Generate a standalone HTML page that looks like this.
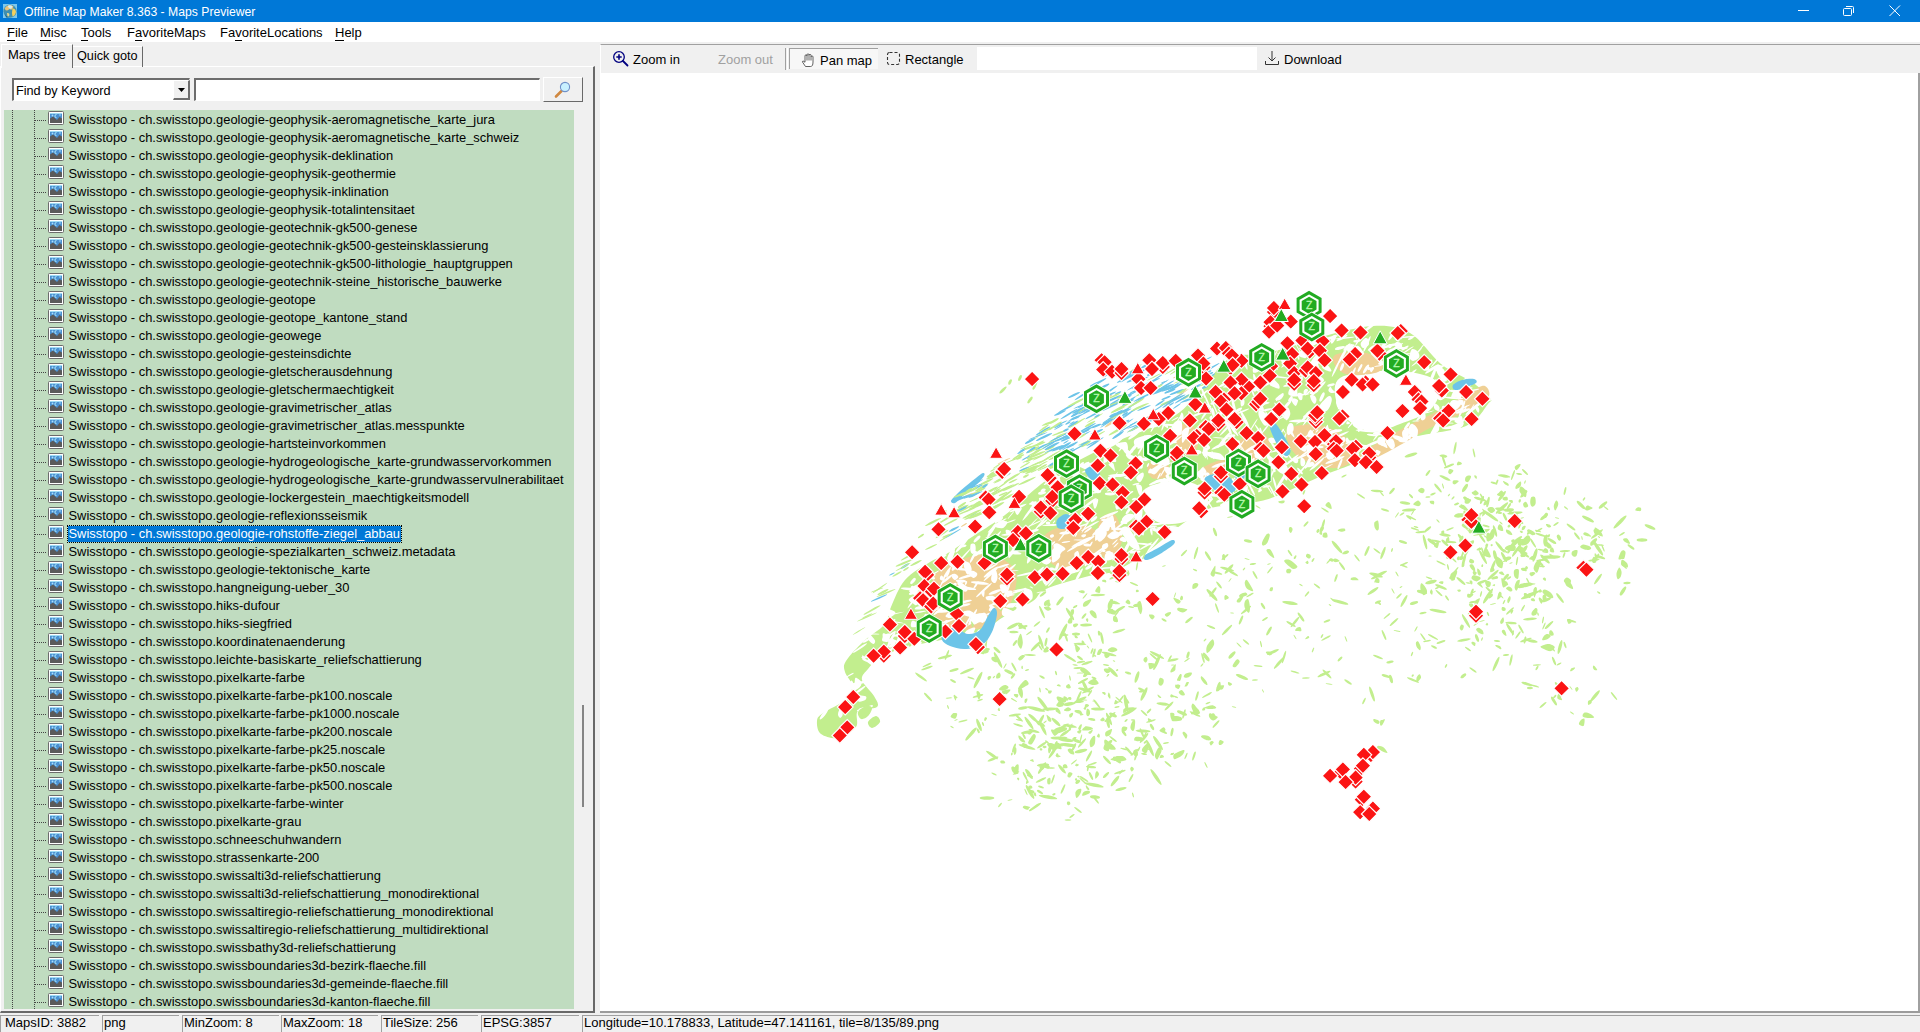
<!DOCTYPE html>
<html><head><meta charset="utf-8">
<style>
*{margin:0;padding:0;box-sizing:border-box}
html,body{width:1920px;height:1032px;overflow:hidden;background:#f0f0f0;font-family:"Liberation Sans",sans-serif;color:#000}
.a{position:absolute}
#title{left:0;top:0;width:1920px;height:22px;background:#0078d7;color:#fff;font-size:12px}
#title .tx{left:24px;top:5px;font-size:12.2px}
#menu{left:0;top:22px;width:1920px;height:20px;background:#fff;font-size:13px}
#menu span{position:absolute;top:3px}
#menu u{text-decoration:none;border-bottom:1px solid #000}
.tab{font-size:13px}
.row{position:absolute;left:0;height:18px;width:570px}
.row .hd{position:absolute;left:35px;top:10px;width:12px;height:1px;background-image:linear-gradient(to right,#444 50%,transparent 50%);background-size:2px 1px}
.row .ic{position:absolute;left:48px;top:1px;width:16px;height:14px}
.row .t{position:absolute;left:67.5px;top:2px;font-size:12.9px;white-space:nowrap;line-height:16px;padding:0 1px}
.row .t.sel{background:#0078d7;color:#fff;outline:1px dotted #000}
#tree{left:4px;top:110px;width:570px;height:899px;background:#c0dcc0;overflow:hidden}
.vd{position:absolute;width:1px;background-image:linear-gradient(to bottom,#444 50%,transparent 50%);background-size:1px 2px}
#status{left:0;top:1013px;width:1920px;height:19px;font-size:13px}
.sb{position:absolute;top:2px;height:17px;border-top:1px solid #a0a0a0;border-left:1px solid #a0a0a0;padding-left:1px;line-height:14px;white-space:nowrap}
.tb{font-size:13px;position:absolute;top:52px;white-space:nowrap}
</style></head><body>
<svg width="0" height="0" style="position:absolute">
<defs>
<symbol id="mi" viewBox="0 0 16 14">
<rect x="0.5" y="0.5" width="15" height="13" rx="1" fill="#fff" stroke="#6b6b6b"/>
<rect x="2" y="2" width="12" height="10" fill="#4a90d0"/>
<rect x="2" y="2" width="12" height="1" fill="#9fdcf5"/>
<path d="M2 7.5 L5 5.5 L9 9 L11.5 6 L14 7.5 L14 12 L2 12Z" fill="#5a5a5a"/>
<circle cx="4.5" cy="4.5" r="0.9" fill="#a8e0ff"/>
<path d="M8.5 3.5 a1.6 1.6 0 1 0 0 3.2" stroke="#b8f0ff" stroke-width="0.9" fill="none"/>
<circle cx="12" cy="4" r="0.8" fill="#a8e0ff"/>
</symbol>
</defs></svg>
<div id="title" class="a">
<svg class="a" style="left:3px;top:4px" width="14" height="14" viewBox="0 0 14 14">
<rect width="14" height="14" fill="#7cc8ee"/>
<circle cx="7" cy="7.2" r="6.6" fill="#3f8fb0"/>
<path d="M1.5 4.5 Q3 1.5 6 1.2 Q9 1 10.5 2.5 L9.5 5 Q8 6 6.5 5 Q5 6.5 3 6.5Z" fill="#e9c27a"/>
<path d="M4.5 1.8 Q7 0.8 9.5 2 L8.5 4.5 Q7 5 6 4Z" fill="#d8eef0"/>
<path d="M9.5 4.5 Q12.5 4 13 8 Q12 12 9.5 12.5 Q8.5 9 9.5 4.5Z" fill="#f2d060"/>
<path d="M4 9 Q6.5 8.5 6.5 11 Q5.5 13 4.5 12.5Z" fill="#e8d890"/>
<path d="M2 10 Q3 13 6 13.5 L3 13.5Z" fill="#1f5a6a"/>
</svg>
<span class="a tx">Offline Map Maker 8.363 - Maps Previewer</span>
<svg class="a" style="left:1798px;top:10px" width="12" height="2"><rect width="11" height="1" fill="#fff"/></svg>
<svg class="a" style="left:1843px;top:5px" width="12" height="12" viewBox="0 0 12 12"><rect x="0.5" y="3.5" width="8" height="7" rx="1" fill="none" stroke="#fff"/><path d="M3 1.5 H9.5 Q10.5 1.5 10.5 2.5 V8" fill="none" stroke="#fff"/></svg>
<svg class="a" style="left:1889px;top:5px" width="12" height="12" viewBox="0 0 12 12"><path d="M0.5 0.5 L11 11 M11 0.5 L0.5 11" stroke="#fff" stroke-width="1"/></svg>
</div>
<div id="menu" class="a">
<span style="left:7px"><u>F</u>ile</span>
<span style="left:40px"><u>M</u>isc</span>
<span style="left:81px"><u>T</u>ools</span>
<span style="left:127px">F<u>a</u>voriteMaps</span>
<span style="left:220px">Fa<u>v</u>oriteLocations</span>
<span style="left:335px"><u>H</u>elp</span>
</div>
<!-- tabs -->
<div class="a" style="left:0;top:66px;width:595px;height:947px;border-left:1px solid #fff;border-top:1px solid #fff;border-right:2px solid #696969;border-bottom:2px solid #696969"></div>
<div class="a" style="left:1px;top:44px;width:72px;height:24px;background:#f0f0f0;border-top:1px solid #fff;border-left:1px solid #fff;border-right:1px solid #696969"></div>
<span class="a tab" style="left:8px;top:47px">Maps tree</span>
<div class="a" style="left:73px;top:46px;width:70px;height:21px;border-top:1px solid #fff;border-right:1px solid #696969"></div>
<span class="a tab" style="left:77px;top:49px;font-size:12.7px">Quick goto</span>
<!-- combo -->
<div class="a" style="left:12px;top:78px;width:178px;height:23px;background:#fff;border-top:2px solid #6d6d6d;border-left:2px solid #6d6d6d;border-right:1px solid #fff;border-bottom:1px solid #fff"></div>
<span class="a" style="left:16px;top:84px;font-size:12.7px">Find by Keyword</span>
<div class="a" style="left:173px;top:80px;width:17px;height:20px;background:#f0f0f0;border-right:2px solid #6d6d6d;border-bottom:2px solid #6d6d6d;border-top:1px solid #fff;border-left:1px solid #fff"></div>
<svg class="a" style="left:178px;top:88px" width="8" height="5"><path d="M0 0 H7 L3.5 4Z" fill="#000"/></svg>
<div class="a" style="left:194px;top:78px;width:346px;height:23px;background:#fff;border-top:2px solid #6d6d6d;border-left:2px solid #6d6d6d;border-right:1px solid #fff;border-bottom:1px solid #fff"></div>
<div class="a" style="left:543px;top:77px;width:40px;height:25px;background:#f0f0f0;border-top:1px solid #fff;border-left:1px solid #fff;border-right:1px solid #696969;border-bottom:1px solid #696969"></div>
<svg class="a" style="left:552px;top:80px" width="22" height="20" viewBox="0 0 22 20">
<path d="M4 16.5 L9.5 11" stroke="#d08840" stroke-width="2.6" stroke-linecap="round"/>
<circle cx="13" cy="7" r="4.6" fill="#c8f0ff" stroke="#7090c8" stroke-width="1.1"/>
</svg>
<!-- tree box -->

<div class="a" id="treeclip" style="left:4px;top:110px;width:570px;height:899px;background:#c0dcc0;overflow:hidden">
<i class="vd" style="left:8px;top:0;height:899px"></i>
<i class="vd" style="left:30px;top:0;height:899px"></i>
<div style="position:absolute;left:-4px;top:0;width:574px;height:899px">
<div class="row" style="top:0px"><i class="hd"></i><svg class="ic" width="16" height="14"><use href="#mi"/></svg><span class="t">Swisstopo - ch.swisstopo.geologie-geophysik-aeromagnetische_karte_jura</span></div>
<div class="row" style="top:18px"><i class="hd"></i><svg class="ic" width="16" height="14"><use href="#mi"/></svg><span class="t">Swisstopo - ch.swisstopo.geologie-geophysik-aeromagnetische_karte_schweiz</span></div>
<div class="row" style="top:36px"><i class="hd"></i><svg class="ic" width="16" height="14"><use href="#mi"/></svg><span class="t">Swisstopo - ch.swisstopo.geologie-geophysik-deklination</span></div>
<div class="row" style="top:54px"><i class="hd"></i><svg class="ic" width="16" height="14"><use href="#mi"/></svg><span class="t">Swisstopo - ch.swisstopo.geologie-geophysik-geothermie</span></div>
<div class="row" style="top:72px"><i class="hd"></i><svg class="ic" width="16" height="14"><use href="#mi"/></svg><span class="t">Swisstopo - ch.swisstopo.geologie-geophysik-inklination</span></div>
<div class="row" style="top:90px"><i class="hd"></i><svg class="ic" width="16" height="14"><use href="#mi"/></svg><span class="t">Swisstopo - ch.swisstopo.geologie-geophysik-totalintensitaet</span></div>
<div class="row" style="top:108px"><i class="hd"></i><svg class="ic" width="16" height="14"><use href="#mi"/></svg><span class="t">Swisstopo - ch.swisstopo.geologie-geotechnik-gk500-genese</span></div>
<div class="row" style="top:126px"><i class="hd"></i><svg class="ic" width="16" height="14"><use href="#mi"/></svg><span class="t">Swisstopo - ch.swisstopo.geologie-geotechnik-gk500-gesteinsklassierung</span></div>
<div class="row" style="top:144px"><i class="hd"></i><svg class="ic" width="16" height="14"><use href="#mi"/></svg><span class="t">Swisstopo - ch.swisstopo.geologie-geotechnik-gk500-lithologie_hauptgruppen</span></div>
<div class="row" style="top:162px"><i class="hd"></i><svg class="ic" width="16" height="14"><use href="#mi"/></svg><span class="t">Swisstopo - ch.swisstopo.geologie-geotechnik-steine_historische_bauwerke</span></div>
<div class="row" style="top:180px"><i class="hd"></i><svg class="ic" width="16" height="14"><use href="#mi"/></svg><span class="t">Swisstopo - ch.swisstopo.geologie-geotope</span></div>
<div class="row" style="top:198px"><i class="hd"></i><svg class="ic" width="16" height="14"><use href="#mi"/></svg><span class="t">Swisstopo - ch.swisstopo.geologie-geotope_kantone_stand</span></div>
<div class="row" style="top:216px"><i class="hd"></i><svg class="ic" width="16" height="14"><use href="#mi"/></svg><span class="t">Swisstopo - ch.swisstopo.geologie-geowege</span></div>
<div class="row" style="top:234px"><i class="hd"></i><svg class="ic" width="16" height="14"><use href="#mi"/></svg><span class="t">Swisstopo - ch.swisstopo.geologie-gesteinsdichte</span></div>
<div class="row" style="top:252px"><i class="hd"></i><svg class="ic" width="16" height="14"><use href="#mi"/></svg><span class="t">Swisstopo - ch.swisstopo.geologie-gletscherausdehnung</span></div>
<div class="row" style="top:270px"><i class="hd"></i><svg class="ic" width="16" height="14"><use href="#mi"/></svg><span class="t">Swisstopo - ch.swisstopo.geologie-gletschermaechtigkeit</span></div>
<div class="row" style="top:288px"><i class="hd"></i><svg class="ic" width="16" height="14"><use href="#mi"/></svg><span class="t">Swisstopo - ch.swisstopo.geologie-gravimetrischer_atlas</span></div>
<div class="row" style="top:306px"><i class="hd"></i><svg class="ic" width="16" height="14"><use href="#mi"/></svg><span class="t">Swisstopo - ch.swisstopo.geologie-gravimetrischer_atlas.messpunkte</span></div>
<div class="row" style="top:324px"><i class="hd"></i><svg class="ic" width="16" height="14"><use href="#mi"/></svg><span class="t">Swisstopo - ch.swisstopo.geologie-hartsteinvorkommen</span></div>
<div class="row" style="top:342px"><i class="hd"></i><svg class="ic" width="16" height="14"><use href="#mi"/></svg><span class="t">Swisstopo - ch.swisstopo.geologie-hydrogeologische_karte-grundwasservorkommen</span></div>
<div class="row" style="top:360px"><i class="hd"></i><svg class="ic" width="16" height="14"><use href="#mi"/></svg><span class="t">Swisstopo - ch.swisstopo.geologie-hydrogeologische_karte-grundwasservulnerabilitaet</span></div>
<div class="row" style="top:378px"><i class="hd"></i><svg class="ic" width="16" height="14"><use href="#mi"/></svg><span class="t">Swisstopo - ch.swisstopo.geologie-lockergestein_maechtigkeitsmodell</span></div>
<div class="row" style="top:396px"><i class="hd"></i><svg class="ic" width="16" height="14"><use href="#mi"/></svg><span class="t">Swisstopo - ch.swisstopo.geologie-reflexionsseismik</span></div>
<div class="row" style="top:414px"><i class="hd"></i><svg class="ic" width="16" height="14"><use href="#mi"/></svg><span class="t sel">Swisstopo - ch.swisstopo.geologie-rohstoffe-ziegel_abbau</span></div>
<div class="row" style="top:432px"><i class="hd"></i><svg class="ic" width="16" height="14"><use href="#mi"/></svg><span class="t">Swisstopo - ch.swisstopo.geologie-spezialkarten_schweiz.metadata</span></div>
<div class="row" style="top:450px"><i class="hd"></i><svg class="ic" width="16" height="14"><use href="#mi"/></svg><span class="t">Swisstopo - ch.swisstopo.geologie-tektonische_karte</span></div>
<div class="row" style="top:468px"><i class="hd"></i><svg class="ic" width="16" height="14"><use href="#mi"/></svg><span class="t">Swisstopo - ch.swisstopo.hangneigung-ueber_30</span></div>
<div class="row" style="top:486px"><i class="hd"></i><svg class="ic" width="16" height="14"><use href="#mi"/></svg><span class="t">Swisstopo - ch.swisstopo.hiks-dufour</span></div>
<div class="row" style="top:504px"><i class="hd"></i><svg class="ic" width="16" height="14"><use href="#mi"/></svg><span class="t">Swisstopo - ch.swisstopo.hiks-siegfried</span></div>
<div class="row" style="top:522px"><i class="hd"></i><svg class="ic" width="16" height="14"><use href="#mi"/></svg><span class="t">Swisstopo - ch.swisstopo.koordinatenaenderung</span></div>
<div class="row" style="top:540px"><i class="hd"></i><svg class="ic" width="16" height="14"><use href="#mi"/></svg><span class="t">Swisstopo - ch.swisstopo.leichte-basiskarte_reliefschattierung</span></div>
<div class="row" style="top:558px"><i class="hd"></i><svg class="ic" width="16" height="14"><use href="#mi"/></svg><span class="t">Swisstopo - ch.swisstopo.pixelkarte-farbe</span></div>
<div class="row" style="top:576px"><i class="hd"></i><svg class="ic" width="16" height="14"><use href="#mi"/></svg><span class="t">Swisstopo - ch.swisstopo.pixelkarte-farbe-pk100.noscale</span></div>
<div class="row" style="top:594px"><i class="hd"></i><svg class="ic" width="16" height="14"><use href="#mi"/></svg><span class="t">Swisstopo - ch.swisstopo.pixelkarte-farbe-pk1000.noscale</span></div>
<div class="row" style="top:612px"><i class="hd"></i><svg class="ic" width="16" height="14"><use href="#mi"/></svg><span class="t">Swisstopo - ch.swisstopo.pixelkarte-farbe-pk200.noscale</span></div>
<div class="row" style="top:630px"><i class="hd"></i><svg class="ic" width="16" height="14"><use href="#mi"/></svg><span class="t">Swisstopo - ch.swisstopo.pixelkarte-farbe-pk25.noscale</span></div>
<div class="row" style="top:648px"><i class="hd"></i><svg class="ic" width="16" height="14"><use href="#mi"/></svg><span class="t">Swisstopo - ch.swisstopo.pixelkarte-farbe-pk50.noscale</span></div>
<div class="row" style="top:666px"><i class="hd"></i><svg class="ic" width="16" height="14"><use href="#mi"/></svg><span class="t">Swisstopo - ch.swisstopo.pixelkarte-farbe-pk500.noscale</span></div>
<div class="row" style="top:684px"><i class="hd"></i><svg class="ic" width="16" height="14"><use href="#mi"/></svg><span class="t">Swisstopo - ch.swisstopo.pixelkarte-farbe-winter</span></div>
<div class="row" style="top:702px"><i class="hd"></i><svg class="ic" width="16" height="14"><use href="#mi"/></svg><span class="t">Swisstopo - ch.swisstopo.pixelkarte-grau</span></div>
<div class="row" style="top:720px"><i class="hd"></i><svg class="ic" width="16" height="14"><use href="#mi"/></svg><span class="t">Swisstopo - ch.swisstopo.schneeschuhwandern</span></div>
<div class="row" style="top:738px"><i class="hd"></i><svg class="ic" width="16" height="14"><use href="#mi"/></svg><span class="t">Swisstopo - ch.swisstopo.strassenkarte-200</span></div>
<div class="row" style="top:756px"><i class="hd"></i><svg class="ic" width="16" height="14"><use href="#mi"/></svg><span class="t">Swisstopo - ch.swisstopo.swissalti3d-reliefschattierung</span></div>
<div class="row" style="top:774px"><i class="hd"></i><svg class="ic" width="16" height="14"><use href="#mi"/></svg><span class="t">Swisstopo - ch.swisstopo.swissalti3d-reliefschattierung_monodirektional</span></div>
<div class="row" style="top:792px"><i class="hd"></i><svg class="ic" width="16" height="14"><use href="#mi"/></svg><span class="t">Swisstopo - ch.swisstopo.swissaltiregio-reliefschattierung_monodirektional</span></div>
<div class="row" style="top:810px"><i class="hd"></i><svg class="ic" width="16" height="14"><use href="#mi"/></svg><span class="t">Swisstopo - ch.swisstopo.swissaltiregio-reliefschattierung_multidirektional</span></div>
<div class="row" style="top:828px"><i class="hd"></i><svg class="ic" width="16" height="14"><use href="#mi"/></svg><span class="t">Swisstopo - ch.swisstopo.swissbathy3d-reliefschattierung</span></div>
<div class="row" style="top:846px"><i class="hd"></i><svg class="ic" width="16" height="14"><use href="#mi"/></svg><span class="t">Swisstopo - ch.swisstopo.swissboundaries3d-bezirk-flaeche.fill</span></div>
<div class="row" style="top:864px"><i class="hd"></i><svg class="ic" width="16" height="14"><use href="#mi"/></svg><span class="t">Swisstopo - ch.swisstopo.swissboundaries3d-gemeinde-flaeche.fill</span></div>
<div class="row" style="top:882px"><i class="hd"></i><svg class="ic" width="16" height="14"><use href="#mi"/></svg><span class="t">Swisstopo - ch.swisstopo.swissboundaries3d-kanton-flaeche.fill</span></div></div></div>
<!-- scrollbar -->
<div class="a" style="left:582px;top:705px;width:2px;height:102px;background:#858585"></div>
<!-- right panel -->
<div class="a" style="left:600px;top:44px;width:1320px;height:969px;border-top:1px solid #a0a0a0;border-left:1px solid #fff;border-right:2px solid #a0a0a0;background:#fff"></div>
<div class="a" style="left:601px;top:45px;width:1319px;height:28px;background:#f0f0f0"></div>
<svg class="a" style="left:612px;top:50px" width="18" height="18" viewBox="0 0 18 18">
<circle cx="7" cy="7" r="5.3" fill="none" stroke="#000080" stroke-width="1.3"/>
<path d="M4.3 7 H9.7 M7 4.3 V9.7" stroke="#000080" stroke-width="1.6"/>
<path d="M11 11 L15.5 15.5" stroke="#000080" stroke-width="1.8" stroke-linecap="round"/>
</svg>
<span class="tb" style="left:633px">Zoom in</span>
<span class="tb" style="left:718px;color:#a0a0a0">Zoom out</span>
<div class="a" style="left:785px;top:48px;width:1px;height:22px;background:#a0a0a0"></div>
<div class="a" style="left:787px;top:48px;width:1px;height:22px;background:#fff"></div>
<div class="a" style="left:789px;top:48px;width:89px;height:21px;background:#f7f7f7;border-top:1px solid #a0a0a0;border-left:1px solid #a0a0a0"></div>
<svg class="a" style="left:801px;top:53px" width="14" height="14" viewBox="0 0 14 14">
<path d="M4.5 13.5 L1.6 9.2 Q1.1 8.2 2.1 8 L4 9.2 V3 Q4 1.8 5 1.8 Q6 1.8 6 3 V1.8 Q6 0.9 7 0.9 Q8 0.9 8 1.8 V2.3 Q8 1.4 9 1.4 Q10 1.4 10 2.3 V3.8 Q10 3 11 3 Q12 3 12 3.8 V9 Q12 13.5 9.5 13.5 Z M6 3 V7.5 M8 2.3 V7.5 M10 3.8 V7.5" fill="#fff" stroke="#3a3a3a" stroke-width="0.8"/>
</svg>
<span class="tb" style="left:820px;top:53px">Pan map</span>
<svg class="a" style="left:886px;top:51px" width="16" height="16" viewBox="0 0 16 16">
<rect x="1.5" y="1.5" width="12" height="12" rx="2" fill="none" stroke="#333" stroke-width="1.1" stroke-dasharray="3 2"/>
</svg>
<span class="tb" style="left:905px">Rectangle</span>
<div class="a" style="left:977px;top:47px;width:280px;height:23px;background:#fff"></div>
<svg class="a" style="left:1264px;top:50px" width="16" height="16" viewBox="0 0 16 16">
<path d="M8 1 V11 M4.5 7.5 L8 11 L11.5 7.5 M1.5 11 V14.5 H14.5 V11" fill="none" stroke="#333" stroke-width="1"/>
</svg>
<span class="tb" style="left:1284px">Download</span>
<!-- map -->
<svg class="a" id="map" style="left:601px;top:73px" width="1318" height="938" viewBox="601 73 1318 938">
<path d="M817 721C817.3 717.5 818.3 716.5 823 713C827.7 709.5 840.2 704.5 845 700C849.8 695.5 852.0 690.7 852 686C852.0 681.3 846.0 676.2 845 672C844.0 667.8 842.8 666.2 846 661C849.2 655.8 857.5 647.2 864 641C870.5 634.8 880.5 629.7 885 624C889.5 618.3 887.7 614.3 891 607C894.3 599.7 898.5 587.5 905 580C911.5 572.5 923.3 566.2 930 562C936.7 557.8 937.5 559.5 945 555C952.5 550.5 965.0 541.7 975 535C985.0 528.3 994.2 523.3 1005 515C1015.8 506.7 1030.0 492.8 1040 485C1050.0 477.2 1055.8 473.5 1065 468C1074.2 462.5 1085.8 456.7 1095 452C1104.2 447.3 1110.8 444.0 1120 440C1129.2 436.0 1140.0 432.7 1150 428C1160.0 423.3 1170.8 419.2 1180 412C1189.2 404.8 1196.7 394.0 1205 385C1213.3 376.0 1220.5 363.2 1230 358C1239.5 352.8 1252.0 355.8 1262 354C1272.0 352.2 1280.8 349.7 1290 347C1299.2 344.3 1303.2 341.5 1317 338C1330.8 334.5 1357.5 326.8 1373 326C1388.5 325.2 1398.7 326.7 1410 333C1421.3 339.3 1430.7 355.8 1441 364C1451.3 372.2 1463.8 376.3 1472 382C1480.2 387.7 1487.3 394.3 1490 398C1492.7 401.7 1492.0 399.3 1488 404C1484.0 408.7 1479.0 420.3 1466 426C1453.0 431.7 1424.5 433.3 1410 438C1395.5 442.7 1389.3 449.3 1379 454C1368.7 458.7 1358.3 462.0 1348 466C1337.7 470.0 1329.3 472.8 1317 478C1304.7 483.2 1285.3 492.8 1274 497C1262.7 501.2 1260.0 501.0 1249 503C1238.0 505.0 1220.0 504.8 1208 509C1196.0 513.2 1187.3 520.7 1177 528C1166.7 535.3 1156.3 545.8 1146 553C1135.7 560.2 1124.5 567.2 1115 571C1105.5 574.8 1100.5 573.0 1089 576C1077.5 579.0 1055.3 584.8 1046 589C1036.7 593.2 1039.3 596.8 1033 601C1026.7 605.2 1015.2 609.3 1008 614C1000.8 618.7 994.0 622.3 990 629C986.0 635.7 988.2 652.0 984 654C979.8 656.0 971.5 643.3 965 641C958.5 638.7 949.8 640.0 945 640C940.2 640.0 942.2 639.8 936 641C929.8 642.2 917.2 644.3 908 647C898.8 649.7 887.7 653.3 881 657C874.3 660.7 871.2 665.2 868 669C864.8 672.8 861.0 675.5 862 680C863.0 684.5 871.5 691.5 874 696C876.5 700.5 879.7 704.5 877 707C874.3 709.5 861.5 707.7 858 711C854.5 714.3 859.2 722.5 856 727C852.8 731.5 844.8 736.8 839 738C833.2 739.2 824.7 736.8 821 734C817.3 731.2 816.7 724.5 817 721Z" fill="#c2ee8e" />
<path d="M1340 378C1347.3 373.2 1366.7 371.7 1380 371C1393.3 370.3 1410.0 371.5 1420 374C1430.0 376.5 1438.3 380.0 1440 386C1441.7 392.0 1436.7 403.7 1430 410C1423.3 416.3 1409.7 420.3 1400 424C1390.3 427.7 1380.7 432.7 1372 432C1363.3 431.3 1354.0 425.3 1348 420C1342.0 414.7 1337.3 407.0 1336 400C1334.7 393.0 1332.7 382.8 1340 378Z" fill="#ffffff" />
<path d="M1142 492C1145.3 487.0 1156.2 483.3 1165 482C1173.8 480.7 1187.8 481.0 1195 484C1202.2 487.0 1208.0 494.3 1208 500C1208.0 505.7 1202.2 514.0 1195 518C1187.8 522.0 1173.3 525.0 1165 524C1156.7 523.0 1148.8 517.3 1145 512C1141.2 506.7 1138.7 497.0 1142 492Z" fill="#ffffff" />
<path d="M1220 505C1220.8 503.0 1235.0 498.3 1240 498C1245.0 497.7 1250.8 501.0 1250 503C1249.2 505.0 1240.0 509.7 1235 510C1230.0 510.3 1219.2 507.0 1220 505Z" fill="#ffffff" />
<path d="M1080 445C1083.3 441.7 1101.7 434.8 1110 432C1118.3 429.2 1129.2 425.8 1130 428C1130.8 430.2 1121.7 441.0 1115 445C1108.3 449.0 1095.8 452.0 1090 452C1084.2 452.0 1076.7 448.3 1080 445Z" fill="#ffffff" />
<path d="M935 575C940.0 567.5 950.8 563.3 960 560C969.2 556.7 980.8 553.3 990 555C999.2 556.7 1011.3 562.5 1015 570C1018.7 577.5 1015.3 591.3 1012 600C1008.7 608.7 1002.0 617.0 995 622C988.0 627.0 978.3 629.5 970 630C961.7 630.5 951.7 629.2 945 625C938.3 620.8 931.7 613.3 930 605C928.3 596.7 930.0 582.5 935 575Z" fill="#efd095" />
<path d="M1045 535C1049.2 530.0 1061.7 525.8 1070 525C1078.3 524.2 1090.0 525.8 1095 530C1100.0 534.2 1101.7 544.2 1100 550C1098.3 555.8 1091.7 562.0 1085 565C1078.3 568.0 1066.7 569.7 1060 568C1053.3 566.3 1047.5 560.5 1045 555C1042.5 549.5 1040.8 540.0 1045 535Z" fill="#efd095" />
<path d="M1100 520C1102.8 514.5 1111.3 511.7 1115 515C1118.7 518.3 1122.8 532.5 1122 540C1121.2 547.5 1114.0 558.7 1110 560C1106.0 561.3 1099.7 554.7 1098 548C1096.3 541.3 1097.2 525.5 1100 520Z" fill="#efd095" />
<path d="M1175 428C1177.7 424.7 1188.2 422.2 1192 425C1195.8 427.8 1198.7 440.0 1198 445C1197.3 450.0 1191.7 455.0 1188 455C1184.3 455.0 1178.2 449.5 1176 445C1173.8 440.5 1172.3 431.3 1175 428Z" fill="#efd095" />
<path d="M1148 465C1150.3 462.3 1162.7 460.2 1166 462C1169.3 463.8 1170.3 473.3 1168 476C1165.7 478.7 1155.3 479.8 1152 478C1148.7 476.2 1145.7 467.7 1148 465Z" fill="#efd095" />
<path d="M1290 428C1295.3 425.2 1310.3 423.0 1320 425C1329.7 427.0 1343.0 433.8 1348 440C1353.0 446.2 1353.0 457.3 1350 462C1347.0 466.7 1338.3 468.7 1330 468C1321.7 467.3 1307.0 462.3 1300 458C1293.0 453.7 1289.7 447.0 1288 442C1286.3 437.0 1284.7 430.8 1290 428Z" fill="#efd095" />
<path d="M1335 355C1339.0 352.5 1352.2 351.2 1360 352C1367.8 352.8 1379.0 356.7 1382 360C1385.0 363.3 1383.3 369.5 1378 372C1372.7 374.5 1357.0 375.8 1350 375C1343.0 374.2 1338.5 370.3 1336 367C1333.5 363.7 1331.0 357.5 1335 355Z" fill="#efd095" />
<path d="M1360 455C1365.0 450.0 1386.7 437.5 1400 430C1413.3 422.5 1428.3 416.3 1440 410C1451.7 403.7 1462.5 396.0 1470 392C1477.5 388.0 1482.0 385.0 1485 386C1488.0 387.0 1491.3 393.7 1488 398C1484.7 402.3 1474.7 407.0 1465 412C1455.3 417.0 1441.7 422.0 1430 428C1418.3 434.0 1405.0 442.7 1395 448C1385.0 453.3 1375.8 458.8 1370 460C1364.2 461.2 1355.0 460.0 1360 455Z" fill="#efd095" />
<path d="M1240 440C1243.7 435.7 1257.0 430.3 1262 432C1267.0 433.7 1271.2 444.5 1270 450C1268.8 455.5 1260.0 463.7 1255 465C1250.0 466.3 1242.5 462.2 1240 458C1237.5 453.8 1236.3 444.3 1240 440Z" fill="#efd095" />
<path d="M1200 470C1202.8 466.7 1216.2 460.3 1222 460C1227.8 459.7 1235.0 464.7 1235 468C1235.0 471.3 1227.0 478.0 1222 480C1217.0 482.0 1208.7 481.7 1205 480C1201.3 478.3 1197.2 473.3 1200 470Z" fill="#efd095" />
<ellipse cx="1177" cy="457" rx="6.6" ry="0.5" transform="rotate(-35 1177 457)" fill="#ffffff"/>
<path d="M1206.4 472.0C1206.2 472.4 1205.2 473.6 1204.5 473.2C1203.8 472.8 1202.4 470.2 1202.4 469.4C1202.4 468.6 1203.8 468.1 1204.4 468.3C1205.0 468.5 1205.7 469.9 1206.0 470.5C1206.3 471.1 1206.7 471.6 1206.4 472.0Z" fill="#ffffff" />
<ellipse cx="1275" cy="484" rx="7.3" ry="1.0" transform="rotate(74 1275 484)" fill="#ffffff"/>
<ellipse cx="1287" cy="405" rx="6.7" ry="1.5" transform="rotate(-47 1287 405)" fill="#ffffff"/>
<path d="M1406.2 442.8C1405.2 442.9 1403.4 439.4 1402.8 437.5C1402.2 435.6 1401.6 432.7 1402.5 431.2C1403.4 429.7 1407.4 427.4 1408.4 428.3C1409.4 429.2 1409.0 434.3 1408.6 436.7C1408.2 439.1 1407.2 442.7 1406.2 442.8Z" fill="#ffffff" />
<ellipse cx="1213" cy="413" rx="5.8" ry="0.9" transform="rotate(79 1213 413)" fill="#ffffff"/>
<path d="M854.1 691.3C853.5 691.7 851.4 689.7 850.6 688.5C849.8 687.3 848.9 685.4 849.1 684.1C849.3 682.8 850.8 680.1 851.7 680.5C852.6 680.9 854.0 684.5 854.4 686.3C854.8 688.1 854.7 690.9 854.1 691.3Z" fill="#ffffff" />
<ellipse cx="1285" cy="412" rx="3.5" ry="1.3" transform="rotate(73 1285 412)" fill="#ffffff"/>
<path d="M985.6 597.3C985.7 596.6 987.3 596.2 988.6 596.0C989.9 595.8 992.2 595.5 993.6 596.2C995.0 596.9 998.2 599.4 997.2 600.1C996.2 600.8 989.7 600.8 987.8 600.3C985.9 599.8 985.5 598.0 985.6 597.3Z" fill="#ffffff" />
<ellipse cx="936" cy="639" rx="9.2" ry="1.6" transform="rotate(-38 936 639)" fill="#ffffff"/>
<ellipse cx="1305" cy="373" rx="3.4" ry="1.5" transform="rotate(-5 1305 373)" fill="#ffffff"/>
<ellipse cx="1052" cy="536" rx="2.1" ry="1.6" transform="rotate(-18 1052 536)" fill="#ffffff"/>
<ellipse cx="1373" cy="391" rx="4.6" ry="0.8" transform="rotate(-23 1373 391)" fill="#ffffff"/>
<ellipse cx="1054" cy="497" rx="10.1" ry="1.0" transform="rotate(3 1054 497)" fill="#ffffff"/>
<ellipse cx="1154" cy="529" rx="2.2" ry="1.0" transform="rotate(-55 1154 529)" fill="#ffffff"/>
<ellipse cx="1036" cy="523" rx="9.1" ry="0.6" transform="rotate(-25 1036 523)" fill="#ffffff"/>
<ellipse cx="1121" cy="529" rx="10.5" ry="1.3" transform="rotate(0 1121 529)" fill="#ffffff"/>
<ellipse cx="1451" cy="412" rx="10.5" ry="1.4" transform="rotate(-59 1451 412)" fill="#ffffff"/>
<path d="M914.5 609.0C914.4 608.5 916.8 606.7 918.5 606.3C920.2 605.9 924.2 606.3 925.0 606.6C925.8 606.9 924.5 607.8 923.5 608.3C922.5 608.8 920.7 609.5 919.2 609.6C917.7 609.7 914.6 609.5 914.5 609.0Z" fill="#ffffff" />
<ellipse cx="1189" cy="489" rx="5.0" ry="1.2" transform="rotate(52 1189 489)" fill="#ffffff"/>
<ellipse cx="1341" cy="416" rx="5.8" ry="1.5" transform="rotate(-4 1341 416)" fill="#ffffff"/>
<path d="M1357.0 339.6C1356.6 339.7 1355.4 337.3 1355.0 336.4C1354.6 335.4 1354.5 334.3 1354.7 333.9C1355.0 333.5 1356.1 333.7 1356.5 334.1C1356.9 334.5 1357.1 335.2 1357.2 336.1C1357.3 337.0 1357.4 339.6 1357.0 339.6Z" fill="#ffffff" />
<ellipse cx="1011" cy="515" rx="5.1" ry="0.5" transform="rotate(-50 1011 515)" fill="#ffffff"/>
<ellipse cx="888" cy="652" rx="6.5" ry="1.4" transform="rotate(-39 888 652)" fill="#ffffff"/>
<ellipse cx="1245" cy="474" rx="2.5" ry="0.6" transform="rotate(72 1245 474)" fill="#ffffff"/>
<path d="M876.5 664.5C875.7 665.6 874.2 666.0 872.6 665.4C871.0 664.8 866.9 662.2 866.9 660.9C866.9 659.6 871.1 658.0 872.8 657.6C874.5 657.2 876.6 657.6 877.2 658.8C877.8 659.9 877.3 663.4 876.5 664.5Z" fill="#ffffff" />
<ellipse cx="1136" cy="516" rx="6.5" ry="0.5" transform="rotate(-49 1136 516)" fill="#ffffff"/>
<path d="M1156.9 531.6C1156.4 531.9 1155.4 531.8 1154.4 531.2C1153.5 530.6 1151.3 528.5 1151.2 528.0C1151.1 527.5 1153.0 527.6 1154.0 527.9C1155.0 528.2 1156.7 529.0 1157.2 529.6C1157.7 530.2 1157.4 531.3 1156.9 531.6Z" fill="#ffffff" />
<ellipse cx="1317" cy="431" rx="2.1" ry="0.6" transform="rotate(-48 1317 431)" fill="#ffffff"/>
<ellipse cx="1271" cy="425" rx="6.2" ry="1.0" transform="rotate(77 1271 425)" fill="#ffffff"/>
<ellipse cx="1453" cy="391" rx="3.3" ry="1.1" transform="rotate(6 1453 391)" fill="#ffffff"/>
<path d="M1292.9 399.5C1292.7 400.4 1291.6 400.9 1290.8 401.2C1290.0 401.5 1288.5 401.6 1288.2 401.1C1287.9 400.6 1288.4 399.2 1289.0 398.4C1289.6 397.5 1291.2 395.8 1291.9 396.0C1292.6 396.2 1293.1 398.6 1292.9 399.5Z" fill="#ffffff" />
<ellipse cx="1213" cy="455" rx="4.5" ry="0.6" transform="rotate(75 1213 455)" fill="#ffffff"/>
<ellipse cx="1134" cy="448" rx="8.7" ry="1.6" transform="rotate(-49 1134 448)" fill="#ffffff"/>
<ellipse cx="1258" cy="429" rx="5.5" ry="0.7" transform="rotate(56 1258 429)" fill="#ffffff"/>
<path d="M991.4 549.7C990.2 549.7 989.7 548.3 988.6 546.7C987.5 545.1 984.6 541.4 984.9 540.2C985.2 539.0 988.4 538.6 990.2 539.6C992.0 540.6 995.3 544.8 995.5 546.5C995.7 548.2 992.5 549.7 991.4 549.7Z" fill="#ffffff" />
<ellipse cx="1135" cy="552" rx="5.5" ry="1.5" transform="rotate(-4 1135 552)" fill="#ffffff"/>
<path d="M1348.3 401.5C1347.9 402.4 1344.5 402.1 1343.0 402.1C1341.5 402.1 1339.7 402.2 1339.4 401.3C1339.1 400.4 1340.0 397.7 1341.0 397.0C1342.0 396.3 1344.2 396.1 1345.4 396.9C1346.6 397.6 1348.7 400.6 1348.3 401.5Z" fill="#ffffff" />
<ellipse cx="1291" cy="432" rx="6.5" ry="1.2" transform="rotate(58 1291 432)" fill="#ffffff"/>
<path d="M1279.3 388.6C1278.7 389.2 1276.5 388.2 1274.9 387.6C1273.3 387.0 1270.3 386.2 1269.8 384.7C1269.2 383.2 1270.1 378.6 1271.6 378.5C1273.0 378.4 1277.2 382.3 1278.5 384.0C1279.8 385.7 1279.9 388.0 1279.3 388.6Z" fill="#ffffff" />
<ellipse cx="1264" cy="463" rx="5.0" ry="0.7" transform="rotate(58 1264 463)" fill="#ffffff"/>
<path d="M1132.8 461.6C1132.5 460.8 1133.3 458.3 1133.8 457.9C1134.3 457.5 1134.9 458.8 1135.8 459.1C1136.7 459.5 1139.3 459.4 1139.2 460.0C1139.1 460.6 1136.4 462.6 1135.3 462.9C1134.2 463.2 1133.0 462.4 1132.8 461.6Z" fill="#ffffff" />
<path d="M1236.4 413.3C1236.3 414.2 1233.9 416.1 1232.9 416.2C1231.9 416.3 1231.2 415.0 1230.4 414.1C1229.6 413.2 1227.5 411.1 1228.0 410.6C1228.5 410.1 1232.1 410.4 1233.5 410.9C1234.9 411.3 1236.5 412.4 1236.4 413.3Z" fill="#ffffff" />
<ellipse cx="1323" cy="406" rx="2.3" ry="1.1" transform="rotate(-44 1323 406)" fill="#ffffff"/>
<path d="M1093.1 575.9C1092.0 575.8 1091.3 570.7 1092.1 567.9C1092.9 565.1 1096.5 559.9 1097.9 559.1C1099.3 558.3 1100.4 561.3 1100.5 562.9C1100.6 564.5 1099.9 566.4 1098.7 568.6C1097.5 570.8 1094.2 576.0 1093.1 575.9Z" fill="#ffffff" />
<ellipse cx="1234" cy="394" rx="3.3" ry="0.7" transform="rotate(68 1234 394)" fill="#ffffff"/>
<ellipse cx="1255" cy="387" rx="4.9" ry="1.2" transform="rotate(59 1255 387)" fill="#ffffff"/>
<ellipse cx="1285" cy="476" rx="4.8" ry="1.5" transform="rotate(67 1285 476)" fill="#ffffff"/>
<path d="M1060.2 482.0C1060.0 483.5 1059.8 486.9 1058.0 486.3C1056.2 485.7 1050.1 480.6 1049.2 478.2C1048.3 475.8 1050.9 472.1 1052.6 472.0C1054.3 471.9 1058.1 475.8 1059.4 477.5C1060.7 479.2 1060.4 480.5 1060.2 482.0Z" fill="#ffffff" />
<ellipse cx="1066" cy="517" rx="4.5" ry="1.1" transform="rotate(4 1066 517)" fill="#ffffff"/>
<path d="M1369.7 369.7C1369.5 369.0 1369.2 368.5 1369.8 368.0C1370.4 367.5 1372.6 366.8 1373.3 366.9C1374.0 367.0 1374.3 367.6 1374.0 368.5C1373.7 369.4 1372.0 372.0 1371.3 372.2C1370.6 372.4 1370.0 370.4 1369.7 369.7Z" fill="#ffffff" />
<ellipse cx="1381" cy="351" rx="7.0" ry="1.2" transform="rotate(-46 1381 351)" fill="#ffffff"/>
<ellipse cx="1099" cy="551" rx="7.9" ry="1.0" transform="rotate(-35 1099 551)" fill="#ffffff"/>
<path d="M1150.6 462.2C1150.6 461.4 1151.3 460.2 1152.9 460.0C1154.5 459.8 1159.5 460.2 1160.2 460.8C1160.9 461.4 1158.5 462.7 1157.3 463.4C1156.1 464.1 1154.2 465.1 1153.1 464.9C1152.0 464.7 1150.6 463.0 1150.6 462.2Z" fill="#ffffff" />
<path d="M1331.5 371.1C1331.3 371.9 1328.0 370.9 1326.5 370.4C1325.0 369.9 1323.0 368.5 1322.4 367.9C1321.9 367.2 1322.3 366.9 1323.2 366.5C1324.1 366.1 1326.4 364.8 1327.8 365.6C1329.2 366.4 1331.7 370.3 1331.5 371.1Z" fill="#ffffff" />
<ellipse cx="930" cy="637" rx="6.8" ry="1.2" transform="rotate(-41 930 637)" fill="#ffffff"/>
<path d="M1239.2 475.7C1238.5 475.2 1238.6 471.8 1238.8 470.3C1239.0 468.9 1239.9 467.5 1240.5 467.0C1241.1 466.5 1241.9 466.3 1242.3 467.3C1242.7 468.3 1243.3 471.7 1242.8 473.1C1242.3 474.5 1239.9 476.2 1239.2 475.7Z" fill="#ffffff" />
<ellipse cx="1231" cy="486" rx="10.1" ry="0.6" transform="rotate(70 1231 486)" fill="#ffffff"/>
<ellipse cx="954" cy="568" rx="3.2" ry="1.5" transform="rotate(-51 954 568)" fill="#ffffff"/>
<ellipse cx="1052" cy="578" rx="10.4" ry="1.3" transform="rotate(-50 1052 578)" fill="#ffffff"/>
<ellipse cx="1174" cy="475" rx="2.5" ry="1.4" transform="rotate(-69 1174 475)" fill="#ffffff"/>
<ellipse cx="995" cy="538" rx="9.1" ry="1.1" transform="rotate(-49 995 538)" fill="#ffffff"/>
<path d="M971.7 621.5C971.6 620.1 971.9 617.0 973.2 616.1C974.5 615.2 978.3 615.0 979.3 615.9C980.3 616.8 980.0 619.9 979.1 621.4C978.2 622.9 974.9 624.6 973.7 624.6C972.5 624.6 971.8 622.9 971.7 621.5Z" fill="#ffffff" />
<ellipse cx="1430" cy="362" rx="3.0" ry="1.5" transform="rotate(-42 1430 362)" fill="#ffffff"/>
<path d="M1224.8 459.8C1223.9 460.7 1216.1 459.1 1213.7 458.7C1211.3 458.3 1211.8 458.4 1210.2 457.3C1208.6 456.2 1202.7 453.0 1204.2 452.3C1205.7 451.6 1215.8 452.1 1219.2 453.3C1222.6 454.6 1225.7 458.9 1224.8 459.8Z" fill="#ffffff" />
<ellipse cx="1298" cy="458" rx="10.7" ry="1.1" transform="rotate(-21 1298 458)" fill="#ffffff"/>
<path d="M1399.2 341.2C1398.8 341.8 1397.9 341.5 1397.1 341.1C1396.3 340.8 1394.7 339.7 1394.5 339.1C1394.3 338.5 1395.4 337.6 1396.2 337.3C1397.0 337.0 1398.7 336.7 1399.2 337.3C1399.7 337.9 1399.6 340.6 1399.2 341.2Z" fill="#ffffff" />
<path d="M873.3 644.1C872.2 644.0 869.4 641.4 868.6 640.1C867.8 638.8 868.2 637.2 868.4 636.2C868.6 635.2 868.5 633.4 869.6 634.1C870.7 634.8 874.4 638.9 875.0 640.6C875.6 642.3 874.4 644.2 873.3 644.1Z" fill="#ffffff" />
<ellipse cx="1413" cy="402" rx="4.7" ry="1.3" transform="rotate(-3 1413 402)" fill="#ffffff"/>
<ellipse cx="948" cy="574" rx="3.9" ry="0.9" transform="rotate(-67 948 574)" fill="#ffffff"/>
<ellipse cx="1242" cy="499" rx="7.4" ry="0.9" transform="rotate(3 1242 499)" fill="#ffffff"/>
<path d="M1102.4 549.6C1101.7 549.1 1101.7 546.3 1102.4 545.2C1103.2 544.1 1105.9 543.0 1106.9 543.1C1107.9 543.2 1108.4 544.9 1108.3 545.8C1108.2 546.7 1107.5 547.8 1106.5 548.4C1105.5 549.0 1103.1 550.1 1102.4 549.6Z" fill="#ffffff" />
<path d="M1442.5 381.6C1441.5 381.5 1441.0 381.5 1440.6 379.8C1440.2 378.1 1439.7 372.1 1440.3 371.5C1440.9 370.9 1443.1 374.5 1444.2 376.0C1445.3 377.5 1447.1 379.8 1446.8 380.7C1446.5 381.6 1443.5 381.8 1442.5 381.6Z" fill="#ffffff" />
<path d="M1168.2 478.8C1167.6 478.9 1166.3 477.7 1165.9 477.1C1165.5 476.5 1165.5 475.5 1165.8 475.1C1166.1 474.7 1166.9 474.4 1167.6 474.7C1168.2 475.0 1169.6 476.0 1169.7 476.7C1169.8 477.4 1168.8 478.7 1168.2 478.8Z" fill="#ffffff" />
<ellipse cx="1287" cy="451" rx="4.0" ry="1.3" transform="rotate(-28 1287 451)" fill="#ffffff"/>
<path d="M902.5 641.6C901.5 641.6 899.2 638.0 899.2 635.6C899.2 633.2 901.5 628.2 902.5 627.4C903.5 626.6 904.9 629.5 905.3 630.8C905.7 632.1 905.4 633.6 904.9 635.4C904.4 637.2 903.5 641.6 902.5 641.6Z" fill="#ffffff" />
<path d="M1379.6 454.1C1379.2 454.8 1378.5 456.1 1377.9 455.8C1377.3 455.5 1376.0 453.1 1375.8 452.1C1375.6 451.1 1375.9 449.8 1376.7 449.7C1377.5 449.6 1380.0 450.8 1380.5 451.5C1381.0 452.2 1380.0 453.4 1379.6 454.1Z" fill="#ffffff" />
<path d="M1255.1 457.6C1254.2 456.7 1254.4 453.9 1255.4 453.3C1256.5 452.7 1259.6 453.7 1261.4 453.9C1263.2 454.1 1266.5 453.6 1266.4 454.4C1266.3 455.2 1262.6 458.4 1260.7 458.9C1258.8 459.4 1256.0 458.5 1255.1 457.6Z" fill="#ffffff" />
<ellipse cx="973" cy="634" rx="3.4" ry="1.5" transform="rotate(-7 973 634)" fill="#ffffff"/>
<ellipse cx="949" cy="598" rx="8.7" ry="1.0" transform="rotate(1 949 598)" fill="#ffffff"/>
<ellipse cx="1190" cy="414" rx="3.3" ry="1.0" transform="rotate(64 1190 414)" fill="#ffffff"/>
<path d="M1152.1 535.5C1151.8 535.5 1150.8 533.5 1150.5 532.4C1150.2 531.3 1149.7 529.3 1150.0 528.7C1150.3 528.1 1151.7 528.1 1152.1 528.7C1152.5 529.3 1152.6 531.4 1152.6 532.5C1152.6 533.6 1152.4 535.5 1152.1 535.5Z" fill="#ffffff" />
<path d="M1236.9 448.4C1236.1 448.4 1235.3 447.9 1235.1 446.7C1234.9 445.5 1235.2 441.9 1235.9 441.0C1236.6 440.1 1238.8 440.0 1239.5 441.0C1240.2 442.0 1240.3 445.6 1239.9 446.8C1239.5 448.0 1237.7 448.4 1236.9 448.4Z" fill="#ffffff" />
<ellipse cx="1350" cy="442" rx="4.7" ry="1.1" transform="rotate(-19 1350 442)" fill="#ffffff"/>
<ellipse cx="959" cy="587" rx="8.9" ry="0.6" transform="rotate(-55 959 587)" fill="#ffffff"/>
<ellipse cx="896" cy="648" rx="10.3" ry="1.0" transform="rotate(-69 896 648)" fill="#ffffff"/>
<path d="M1080.2 561.7C1079.4 561.9 1075.9 558.8 1075.0 557.3C1074.1 555.8 1074.1 554.0 1074.6 553.0C1075.1 552.0 1077.1 550.5 1077.9 551.0C1078.7 551.5 1079.2 554.4 1079.6 556.2C1080.0 558.0 1081.0 561.5 1080.2 561.7Z" fill="#ffffff" />
<ellipse cx="1402" cy="355" rx="8.5" ry="0.8" transform="rotate(-11 1402 355)" fill="#ffffff"/>
<path d="M1449.2 409.9C1449.4 410.8 1447.1 411.7 1445.9 411.8C1444.7 411.9 1442.8 411.2 1442.2 410.3C1441.6 409.4 1441.7 407.1 1442.1 406.4C1442.5 405.7 1443.5 405.5 1444.7 406.1C1445.9 406.7 1449.0 408.9 1449.2 409.9Z" fill="#ffffff" />
<path d="M1205.1 492.6C1204.8 492.9 1203.4 491.7 1202.6 490.4C1201.8 489.1 1200.2 485.5 1200.4 484.7C1200.6 483.9 1203.0 484.9 1203.7 485.5C1204.4 486.1 1204.5 487.4 1204.7 488.6C1204.9 489.8 1205.4 492.3 1205.1 492.6Z" fill="#ffffff" />
<ellipse cx="1374" cy="443" rx="10.8" ry="1.4" transform="rotate(-22 1374 443)" fill="#ffffff"/>
<path d="M1351.3 391.0C1350.2 390.4 1349.8 389.0 1350.1 387.1C1350.4 385.2 1352.2 379.9 1353.1 379.4C1354.0 378.9 1355.1 382.2 1355.7 384.1C1356.3 386.0 1357.6 389.8 1356.9 390.9C1356.2 392.0 1352.4 391.6 1351.3 391.0Z" fill="#ffffff" />
<path d="M973.1 553.9C972.3 554.1 971.0 553.2 970.6 551.6C970.2 550.0 970.1 545.5 970.8 544.3C971.5 543.1 974.1 543.3 974.9 544.3C975.7 545.3 975.9 548.8 975.6 550.4C975.3 552.0 973.9 553.7 973.1 553.9Z" fill="#ffffff" />
<ellipse cx="846" cy="729" rx="3.0" ry="1.2" transform="rotate(-7 846 729)" fill="#ffffff"/>
<ellipse cx="1048" cy="523" rx="2.3" ry="1.6" transform="rotate(-1 1048 523)" fill="#ffffff"/>
<ellipse cx="1144" cy="544" rx="9.0" ry="1.0" transform="rotate(6 1144 544)" fill="#ffffff"/>
<ellipse cx="1465" cy="409" rx="3.8" ry="0.7" transform="rotate(-63 1465 409)" fill="#ffffff"/>
<ellipse cx="1463" cy="411" rx="7.8" ry="1.6" transform="rotate(-16 1463 411)" fill="#ffffff"/>
<ellipse cx="1081" cy="493" rx="10.7" ry="1.6" transform="rotate(-52 1081 493)" fill="#ffffff"/>
<path d="M912.5 627.3C911.4 627.1 910.9 626.5 910.8 625.4C910.7 624.3 911.2 621.5 912.0 620.9C912.8 620.3 914.6 620.9 915.5 621.8C916.4 622.7 917.9 625.4 917.4 626.3C916.9 627.2 913.6 627.4 912.5 627.3Z" fill="#ffffff" />
<path d="M1445.9 396.9C1444.9 398.2 1441.5 400.6 1439.5 400.1C1437.5 399.6 1435.2 395.8 1434.2 393.8C1433.2 391.8 1431.8 388.5 1433.7 388.2C1435.6 387.9 1443.7 390.6 1445.7 392.0C1447.7 393.4 1446.9 395.5 1445.9 396.9Z" fill="#ffffff" />
<ellipse cx="1403" cy="415" rx="3.4" ry="0.8" transform="rotate(-3 1403 415)" fill="#ffffff"/>
<path d="M1151.3 438.1C1150.9 438.7 1149.6 438.8 1148.5 438.7C1147.4 438.6 1145.3 437.8 1144.6 437.3C1143.8 436.8 1143.0 435.9 1144.0 435.5C1145.0 435.1 1149.5 434.8 1150.7 435.2C1151.9 435.6 1151.7 437.5 1151.3 438.1Z" fill="#ffffff" />
<ellipse cx="963" cy="546" rx="3.6" ry="1.3" transform="rotate(-13 963 546)" fill="#ffffff"/>
<path d="M962.0 567.1C961.2 568.1 956.9 569.3 954.6 568.7C952.3 568.1 948.8 565.3 948.1 563.3C947.4 561.3 948.3 556.7 950.2 556.6C952.1 556.5 957.6 560.9 959.6 562.6C961.6 564.4 962.8 566.1 962.0 567.1Z" fill="#ffffff" />
<ellipse cx="1166" cy="492" rx="3.1" ry="1.3" transform="rotate(-5 1166 492)" fill="#ffffff"/>
<path d="M1406.2 440.2C1406.2 440.9 1402.3 441.1 1400.4 440.8C1398.5 440.6 1396.1 439.6 1394.8 438.7C1393.5 437.8 1391.8 435.8 1392.7 435.4C1393.6 435.0 1398.0 435.6 1400.2 436.4C1402.5 437.2 1406.2 439.5 1406.2 440.2Z" fill="#ffffff" />
<ellipse cx="1396" cy="363" rx="8.7" ry="0.7" transform="rotate(-4 1396 363)" fill="#ffffff"/>
<path d="M1174.2 473.3C1172.8 474.3 1168.7 474.9 1167.0 473.9C1165.3 472.8 1163.7 468.1 1164.2 467.0C1164.7 465.9 1168.0 467.4 1169.9 467.6C1171.8 467.8 1175.0 467.1 1175.7 468.0C1176.4 468.9 1175.7 472.3 1174.2 473.3Z" fill="#ffffff" />
<ellipse cx="1446" cy="407" rx="7.7" ry="0.9" transform="rotate(-28 1446 407)" fill="#ffffff"/>
<ellipse cx="995" cy="592" rx="6.9" ry="1.5" transform="rotate(-20 995 592)" fill="#ffffff"/>
<ellipse cx="1130" cy="530" rx="3.1" ry="0.6" transform="rotate(-47 1130 530)" fill="#ffffff"/>
<path d="M1253.0 390.2C1252.1 389.9 1251.9 388.5 1252.1 387.3C1252.3 386.1 1253.5 383.2 1254.1 382.8C1254.7 382.4 1255.4 384.0 1255.9 385.1C1256.5 386.2 1257.9 388.4 1257.4 389.2C1256.9 390.0 1253.9 390.5 1253.0 390.2Z" fill="#ffffff" />
<ellipse cx="977" cy="539" rx="4.6" ry="1.6" transform="rotate(-46 977 539)" fill="#ffffff"/>
<ellipse cx="1336" cy="368" rx="9.8" ry="1.0" transform="rotate(-65 1336 368)" fill="#ffffff"/>
<path d="M1075.9 489.2C1075.9 488.6 1075.9 488.0 1076.5 487.8C1077.1 487.6 1079.0 487.4 1079.5 487.9C1080.0 488.4 1080.2 490.1 1079.7 490.7C1079.2 491.3 1077.4 491.6 1076.8 491.4C1076.2 491.1 1076.0 489.8 1075.9 489.2Z" fill="#ffffff" />
<ellipse cx="1072" cy="494" rx="8.5" ry="0.8" transform="rotate(-39 1072 494)" fill="#ffffff"/>
<ellipse cx="1190" cy="465" rx="9.1" ry="1.4" transform="rotate(63 1190 465)" fill="#ffffff"/>
<ellipse cx="1462" cy="388" rx="10.2" ry="0.5" transform="rotate(-66 1462 388)" fill="#ffffff"/>
<path d="M1190.4 513.8C1190.6 512.6 1193.7 510.9 1195.6 510.5C1197.5 510.1 1200.5 510.1 1202.0 511.1C1203.5 512.1 1205.9 515.7 1204.6 516.7C1203.3 517.8 1196.6 517.9 1194.2 517.4C1191.8 516.9 1190.2 514.9 1190.4 513.8Z" fill="#ffffff" />
<ellipse cx="1086" cy="541" rx="9.9" ry="1.6" transform="rotate(-31 1086 541)" fill="#ffffff"/>
<path d="M1110.1 570.7C1109.9 569.5 1110.1 566.6 1110.7 565.9C1111.3 565.2 1112.9 566.2 1113.9 566.7C1114.9 567.2 1116.9 567.8 1116.6 568.8C1116.3 569.8 1113.1 572.7 1112.0 573.0C1110.9 573.3 1110.3 571.9 1110.1 570.7Z" fill="#ffffff" />
<ellipse cx="1161" cy="517" rx="3.6" ry="1.2" transform="rotate(-22 1161 517)" fill="#ffffff"/>
<ellipse cx="1023" cy="597" rx="4.7" ry="1.4" transform="rotate(-23 1023 597)" fill="#ffffff"/>
<ellipse cx="1266" cy="385" rx="7.0" ry="0.8" transform="rotate(-27 1266 385)" fill="#ffffff"/>
<ellipse cx="922" cy="627" rx="2.9" ry="0.7" transform="rotate(-28 922 627)" fill="#ffffff"/>
<ellipse cx="1051" cy="493" rx="2.5" ry="1.5" transform="rotate(-23 1051 493)" fill="#ffffff"/>
<ellipse cx="1234" cy="407" rx="10.4" ry="1.4" transform="rotate(77 1234 407)" fill="#ffffff"/>
<ellipse cx="1366" cy="431" rx="10.6" ry="1.0" transform="rotate(6 1366 431)" fill="#ffffff"/>
<ellipse cx="1300" cy="395" rx="9.9" ry="1.0" transform="rotate(-7 1300 395)" fill="#ffffff"/>
<ellipse cx="1176" cy="466" rx="2.6" ry="0.6" transform="rotate(-4 1176 466)" fill="#ffffff"/>
<ellipse cx="1264" cy="447" rx="8.4" ry="0.6" transform="rotate(75 1264 447)" fill="#ffffff"/>
<path d="M1303.2 466.3C1302.4 466.6 1301.1 466.3 1300.7 464.8C1300.3 463.3 1300.3 458.5 1300.9 457.5C1301.5 456.5 1303.4 458.1 1304.1 459.0C1304.8 459.9 1305.4 461.7 1305.3 462.9C1305.2 464.1 1304.0 466.0 1303.2 466.3Z" fill="#ffffff" />
<path d="M1181.1 420.4C1180.5 420.3 1179.8 418.9 1179.9 417.6C1180.0 416.3 1181.0 413.1 1181.6 412.6C1182.1 412.1 1182.9 413.5 1183.2 414.4C1183.5 415.3 1183.8 417.1 1183.5 418.1C1183.2 419.1 1181.7 420.5 1181.1 420.4Z" fill="#ffffff" />
<ellipse cx="1153" cy="428" rx="4.8" ry="0.7" transform="rotate(-60 1153 428)" fill="#ffffff"/>
<ellipse cx="1299" cy="421" rx="10.2" ry="1.4" transform="rotate(-1 1299 421)" fill="#ffffff"/>
<ellipse cx="1263" cy="451" rx="7.9" ry="1.3" transform="rotate(75 1263 451)" fill="#ffffff"/>
<ellipse cx="1053" cy="570" rx="3.0" ry="1.5" transform="rotate(-11 1053 570)" fill="#ffffff"/>
<ellipse cx="1026" cy="574" rx="9.6" ry="1.1" transform="rotate(-13 1026 574)" fill="#ffffff"/>
<ellipse cx="1277" cy="450" rx="9.5" ry="1.4" transform="rotate(51 1277 450)" fill="#ffffff"/>
<ellipse cx="891" cy="640" rx="10.2" ry="1.3" transform="rotate(-63 891 640)" fill="#ffffff"/>
<path d="M1288.5 471.5C1288.1 473.0 1285.0 474.2 1283.2 473.9C1281.4 473.6 1277.8 471.2 1277.5 469.9C1277.2 468.5 1279.8 466.6 1281.2 465.8C1282.6 465.0 1284.6 463.9 1285.8 464.8C1287.0 465.8 1288.9 470.0 1288.5 471.5Z" fill="#ffffff" />
<path d="M1109.3 521.0C1109.5 521.6 1107.5 522.2 1106.1 522.1C1104.7 522.0 1101.4 520.8 1100.8 520.3C1100.2 519.8 1102.0 519.3 1102.7 519.0C1103.4 518.7 1104.0 518.2 1105.1 518.5C1106.2 518.8 1109.1 520.4 1109.3 521.0Z" fill="#ffffff" />
<path d="M1160.2 493.2C1159.8 492.4 1159.6 489.9 1160.6 489.1C1161.6 488.3 1165.0 488.0 1166.1 488.4C1167.2 488.8 1167.8 490.3 1167.3 491.2C1166.8 492.1 1164.2 493.6 1163.0 493.9C1161.8 494.2 1160.6 494.0 1160.2 493.2Z" fill="#ffffff" />
<ellipse cx="949" cy="602" rx="3.0" ry="0.9" transform="rotate(-33 949 602)" fill="#ffffff"/>
<ellipse cx="1256" cy="408" rx="3.2" ry="0.5" transform="rotate(-3 1256 408)" fill="#ffffff"/>
<path d="M1446.5 380.3C1445.7 381.3 1441.0 378.3 1439.3 376.4C1437.6 374.5 1435.9 370.2 1436.1 368.8C1436.3 367.4 1439.1 367.8 1440.5 368.1C1441.9 368.4 1443.4 368.5 1444.4 370.5C1445.4 372.5 1447.3 379.3 1446.5 380.3Z" fill="#ffffff" />
<ellipse cx="1018" cy="550" rx="8.2" ry="0.7" transform="rotate(-35 1018 550)" fill="#ffffff"/>
<ellipse cx="945" cy="611" rx="9.6" ry="1.4" transform="rotate(-7 945 611)" fill="#ffffff"/>
<ellipse cx="1115" cy="542" rx="3.8" ry="0.6" transform="rotate(-44 1115 542)" fill="#ffffff"/>
<ellipse cx="1227" cy="428" rx="10.6" ry="1.0" transform="rotate(-46 1227 428)" fill="#ffffff"/>
<ellipse cx="1273" cy="492" rx="7.9" ry="0.9" transform="rotate(62 1273 492)" fill="#ffffff"/>
<ellipse cx="1397" cy="409" rx="6.8" ry="0.8" transform="rotate(-31 1397 409)" fill="#ffffff"/>
<path d="M1298.3 344.3C1298.0 343.5 1299.0 341.6 1299.9 341.2C1300.8 340.8 1302.9 341.7 1303.6 342.2C1304.3 342.7 1304.2 343.8 1303.9 344.4C1303.6 345.0 1302.7 345.8 1301.8 345.8C1300.9 345.8 1298.6 345.1 1298.3 344.3Z" fill="#ffffff" />
<ellipse cx="1018" cy="604" rx="10.0" ry="1.2" transform="rotate(-0 1018 604)" fill="#ffffff"/>
<path d="M1401.1 374.6C1400.1 374.4 1398.5 373.9 1399.2 372.6C1399.9 371.3 1403.8 367.7 1405.0 367.0C1406.2 366.3 1406.4 367.3 1406.4 368.5C1406.4 369.7 1405.8 373.0 1404.9 374.0C1404.0 375.0 1402.0 374.8 1401.1 374.6Z" fill="#ffffff" />
<path d="M1362.4 352.0C1361.9 352.6 1358.0 351.2 1356.7 350.7C1355.5 350.2 1355.0 349.8 1354.9 349.0C1354.9 348.2 1355.6 346.2 1356.4 345.9C1357.2 345.6 1358.7 346.1 1359.7 347.1C1360.7 348.1 1362.9 351.4 1362.4 352.0Z" fill="#ffffff" />
<ellipse cx="1279" cy="464" rx="9.9" ry="1.1" transform="rotate(-5 1279 464)" fill="#ffffff"/>
<ellipse cx="1274" cy="469" rx="3.4" ry="1.4" transform="rotate(76 1274 469)" fill="#ffffff"/>
<ellipse cx="1059" cy="501" rx="5.5" ry="0.9" transform="rotate(-70 1059 501)" fill="#ffffff"/>
<ellipse cx="1206" cy="444" rx="6.1" ry="1.6" transform="rotate(54 1206 444)" fill="#ffffff"/>
<ellipse cx="1268" cy="417" rx="6.5" ry="0.8" transform="rotate(66 1268 417)" fill="#ffffff"/>
<ellipse cx="1244" cy="456" rx="9.2" ry="1.5" transform="rotate(-15 1244 456)" fill="#ffffff"/>
<ellipse cx="1244" cy="451" rx="5.7" ry="0.6" transform="rotate(60 1244 451)" fill="#ffffff"/>
<ellipse cx="1116" cy="545" rx="3.5" ry="0.6" transform="rotate(-46 1116 545)" fill="#ffffff"/>
<ellipse cx="997" cy="603" rx="5.6" ry="0.7" transform="rotate(-22 997 603)" fill="#ffffff"/>
<path d="M945.8 616.7C945.2 616.2 945.6 615.6 946.4 614.7C947.2 613.8 949.3 610.9 950.5 611.1C951.7 611.3 953.6 614.8 953.5 615.9C953.4 617.0 951.1 617.9 949.8 618.0C948.5 618.1 946.4 617.2 945.8 616.7Z" fill="#ffffff" />
<ellipse cx="1238" cy="444" rx="7.4" ry="0.8" transform="rotate(50 1238 444)" fill="#ffffff"/>
<path d="M1331.5 343.7C1330.9 343.4 1330.5 340.3 1330.7 338.9C1331.0 337.5 1332.0 336.0 1333.0 335.4C1334.0 334.8 1336.2 334.4 1336.5 335.3C1336.8 336.2 1335.3 339.4 1334.5 340.8C1333.7 342.2 1332.1 344.0 1331.5 343.7Z" fill="#ffffff" />
<path d="M1340.3 456.2C1340.5 456.8 1340.3 458.3 1339.5 458.3C1338.7 458.3 1335.9 456.8 1335.3 456.0C1334.7 455.2 1335.5 454.1 1336.0 453.8C1336.5 453.6 1337.8 454.1 1338.5 454.5C1339.2 454.9 1340.1 455.6 1340.3 456.2Z" fill="#ffffff" />
<path d="M1342.3 409.0C1341.2 409.8 1339.5 410.0 1338.5 408.8C1337.5 407.6 1335.9 403.6 1336.0 401.9C1336.1 400.2 1337.4 398.3 1338.9 398.7C1340.4 399.1 1344.2 402.4 1344.8 404.1C1345.4 405.8 1343.3 408.2 1342.3 409.0Z" fill="#ffffff" />
<ellipse cx="962" cy="545" rx="9.8" ry="1.5" transform="rotate(-49 962 545)" fill="#ffffff"/>
<ellipse cx="925" cy="594" rx="6.1" ry="1.1" transform="rotate(1 925 594)" fill="#ffffff"/>
<path d="M1406.7 377.5C1407.2 378.8 1404.8 383.1 1402.4 383.9C1400.1 384.7 1394.0 383.2 1392.6 382.1C1391.2 381.0 1393.0 378.0 1394.2 377.0C1395.4 376.0 1397.5 376.0 1399.6 376.1C1401.7 376.2 1406.2 376.2 1406.7 377.5Z" fill="#ffffff" />
<path d="M975.3 641.6C975.1 642.2 975.1 643.8 974.4 643.5C973.7 643.2 971.5 640.8 971.2 640.0C970.9 639.2 972.1 638.7 972.8 638.6C973.5 638.5 974.9 639.1 975.3 639.6C975.7 640.1 975.4 641.0 975.3 641.6Z" fill="#ffffff" />
<ellipse cx="937" cy="595" rx="8.6" ry="1.1" transform="rotate(-61 937 595)" fill="#ffffff"/>
<path d="M1050.4 513.1C1050.3 512.4 1052.4 512.0 1053.2 511.9C1054.0 511.8 1054.8 511.9 1055.5 512.3C1056.2 512.6 1057.7 513.4 1057.4 514.0C1057.1 514.6 1054.9 516.2 1053.7 516.1C1052.5 516.0 1050.5 513.8 1050.4 513.1Z" fill="#ffffff" />
<ellipse cx="1077" cy="466" rx="3.3" ry="1.6" transform="rotate(-70 1077 466)" fill="#ffffff"/>
<ellipse cx="988" cy="563" rx="4.2" ry="0.7" transform="rotate(-61 988 563)" fill="#ffffff"/>
<ellipse cx="1284" cy="439" rx="6.9" ry="0.8" transform="rotate(-70 1284 439)" fill="#ffffff"/>
<ellipse cx="1486" cy="401" rx="8.7" ry="0.9" transform="rotate(-13 1486 401)" fill="#ffffff"/>
<ellipse cx="1081" cy="526" rx="8.1" ry="0.9" transform="rotate(-20 1081 526)" fill="#ffffff"/>
<path d="M1228.6 417.8C1227.6 418.3 1225.2 419.0 1225.0 417.6C1224.8 416.2 1226.3 410.7 1227.4 409.2C1228.5 407.7 1231.0 407.5 1231.5 408.4C1232.0 409.3 1231.2 413.0 1230.7 414.6C1230.2 416.2 1229.5 417.3 1228.6 417.8Z" fill="#ffffff" />
<ellipse cx="1167" cy="495" rx="5.6" ry="1.6" transform="rotate(-14 1167 495)" fill="#ffffff"/>
<path d="M1116.7 509.7C1115.9 509.4 1115.1 506.9 1115.4 505.6C1115.7 504.3 1117.6 502.3 1118.6 502.0C1119.6 501.7 1121.0 502.8 1121.2 503.7C1121.4 504.6 1120.8 506.5 1120.0 507.5C1119.2 508.5 1117.5 510.0 1116.7 509.7Z" fill="#ffffff" />
<ellipse cx="936" cy="609" rx="4.9" ry="0.8" transform="rotate(-3 936 609)" fill="#ffffff"/>
<ellipse cx="1395" cy="387" rx="9.1" ry="1.2" transform="rotate(-40 1395 387)" fill="#ffffff"/>
<path d="M1294.0 462.2C1293.2 461.4 1292.3 459.1 1292.7 458.5C1293.1 457.9 1295.4 458.6 1296.3 458.8C1297.2 459.0 1298.1 459.1 1298.3 459.8C1298.5 460.5 1298.0 462.7 1297.3 463.1C1296.6 463.5 1294.8 463.0 1294.0 462.2Z" fill="#ffffff" />
<path d="M1094.8 508.8C1094.1 508.7 1093.4 505.6 1093.1 504.2C1092.8 502.8 1092.3 501.1 1093.1 500.3C1093.9 499.5 1097.3 498.4 1098.0 499.2C1098.7 500.0 1097.6 503.4 1097.1 505.0C1096.6 506.6 1095.5 508.9 1094.8 508.8Z" fill="#ffffff" />
<ellipse cx="1367" cy="344" rx="8.8" ry="1.1" transform="rotate(-66 1367 344)" fill="#ffffff"/>
<ellipse cx="1282" cy="480" rx="11.0" ry="1.4" transform="rotate(-58 1282 480)" fill="#ffffff"/>
<ellipse cx="1041" cy="523" rx="10.9" ry="0.8" transform="rotate(-49 1041 523)" fill="#ffffff"/>
<ellipse cx="1160" cy="481" rx="4.7" ry="1.5" transform="rotate(-6 1160 481)" fill="#ffffff"/>
<ellipse cx="1393" cy="411" rx="2.5" ry="1.1" transform="rotate(-40 1393 411)" fill="#ffffff"/>
<ellipse cx="1129" cy="510" rx="5.3" ry="1.4" transform="rotate(-54 1129 510)" fill="#ffffff"/>
<ellipse cx="1175" cy="476" rx="4.9" ry="0.8" transform="rotate(-6 1175 476)" fill="#ffffff"/>
<path d="M1005.7 607.1C1005.3 606.4 1007.9 604.1 1009.4 603.6C1010.9 603.1 1013.7 603.6 1014.6 604.1C1015.5 604.6 1015.2 605.9 1014.7 606.5C1014.2 607.1 1013.2 607.7 1011.7 607.8C1010.2 607.9 1006.1 607.8 1005.7 607.1Z" fill="#ffffff" />
<path d="M1384.1 364.2C1384.0 365.0 1382.3 365.2 1381.3 365.2C1380.3 365.2 1378.3 364.6 1378.1 364.0C1377.9 363.4 1379.6 362.0 1380.2 361.4C1380.8 360.8 1381.2 359.8 1381.9 360.3C1382.6 360.8 1384.2 363.4 1384.1 364.2Z" fill="#ffffff" />
<ellipse cx="1208" cy="437" rx="3.4" ry="1.5" transform="rotate(75 1208 437)" fill="#ffffff"/>
<path d="M919.0 645.7C918.2 646.0 917.7 645.3 917.1 644.7C916.5 644.1 915.2 642.6 915.5 641.9C915.8 641.2 918.0 640.4 919.0 640.5C920.0 640.6 921.8 641.8 921.8 642.7C921.8 643.6 919.8 645.4 919.0 645.7Z" fill="#ffffff" />
<ellipse cx="1171" cy="425" rx="8.8" ry="1.0" transform="rotate(4 1171 425)" fill="#ffffff"/>
<path d="M1316.5 379.6C1315.8 379.4 1313.8 377.5 1313.7 376.8C1313.6 376.1 1315.2 375.9 1315.8 375.7C1316.4 375.5 1317.1 375.4 1317.4 375.8C1317.7 376.2 1317.8 377.2 1317.6 377.8C1317.4 378.4 1317.2 379.8 1316.5 379.6Z" fill="#ffffff" />
<ellipse cx="1206" cy="452" rx="8.0" ry="0.7" transform="rotate(78 1206 452)" fill="#ffffff"/>
<ellipse cx="1408" cy="350" rx="6.8" ry="0.6" transform="rotate(-33 1408 350)" fill="#ffffff"/>
<ellipse cx="1158" cy="458" rx="5.6" ry="0.7" transform="rotate(-60 1158 458)" fill="#ffffff"/>
<ellipse cx="971" cy="623" rx="4.4" ry="0.5" transform="rotate(-39 971 623)" fill="#ffffff"/>
<path d="M1167.9 428.2C1167.5 428.4 1165.7 427.0 1164.8 426.5C1163.9 426.0 1162.6 425.4 1162.6 425.0C1162.6 424.6 1164.2 424.3 1165.0 424.3C1165.8 424.3 1167.0 424.4 1167.5 425.0C1168.0 425.6 1168.4 427.9 1167.9 428.2Z" fill="#ffffff" />
<path d="M1370.4 448.0C1370.5 448.6 1368.1 448.5 1366.3 448.7C1364.5 448.9 1360.4 449.9 1359.7 449.4C1359.0 448.9 1361.2 446.4 1362.2 445.7C1363.2 445.0 1364.6 444.9 1366.0 445.3C1367.4 445.7 1370.4 447.4 1370.4 448.0Z" fill="#ffffff" />
<path d="M1136.4 522.3C1135.2 521.0 1133.7 515.2 1134.0 512.6C1134.3 510.0 1137.0 506.9 1138.4 506.5C1139.8 506.1 1142.1 508.0 1142.5 510.3C1142.9 512.6 1141.9 518.4 1140.9 520.4C1139.9 522.4 1137.6 523.6 1136.4 522.3Z" fill="#ffffff" />
<path d="M1309.7 365.5C1309.1 364.3 1311.8 359.7 1314.2 356.9C1316.6 354.1 1322.5 349.0 1324.1 348.9C1325.7 348.8 1324.8 353.8 1323.7 356.4C1322.6 359.0 1319.9 362.8 1317.6 364.3C1315.3 365.8 1310.3 366.7 1309.7 365.5Z" fill="#ffffff" />
<path d="M1045.6 558.0C1044.2 557.9 1041.9 557.3 1041.4 556.4C1040.9 555.5 1042.0 553.2 1042.8 552.7C1043.6 552.2 1045.0 552.6 1046.2 553.3C1047.4 554.0 1050.1 556.0 1050.0 556.8C1049.9 557.6 1047.0 558.1 1045.6 558.0Z" fill="#ffffff" />
<ellipse cx="1233" cy="426" rx="4.4" ry="1.3" transform="rotate(70 1233 426)" fill="#ffffff"/>
<path d="M1364.1 354.2C1363.7 354.6 1361.4 353.9 1360.2 353.3C1359.0 352.7 1357.1 351.2 1356.9 350.7C1356.7 350.1 1358.1 350.0 1359.0 350.0C1359.9 350.0 1361.7 350.1 1362.5 350.8C1363.3 351.5 1364.5 353.8 1364.1 354.2Z" fill="#ffffff" />
<ellipse cx="1362" cy="408" rx="2.9" ry="1.1" transform="rotate(-1 1362 408)" fill="#ffffff"/>
<path d="M1169.2 463.9C1168.2 465.2 1164.1 465.7 1161.7 465.5C1159.3 465.3 1155.5 463.8 1154.6 462.6C1153.7 461.4 1154.3 459.0 1156.5 458.2C1158.7 457.4 1165.7 456.9 1167.8 457.8C1169.9 458.8 1170.2 462.6 1169.2 463.9Z" fill="#ffffff" />
<path d="M1150.0 459.0C1149.3 458.6 1148.9 456.8 1149.4 455.8C1149.9 454.8 1152.2 453.0 1152.9 452.8C1153.6 452.6 1153.4 453.6 1153.5 454.5C1153.6 455.4 1154.1 457.4 1153.5 458.1C1152.9 458.9 1150.7 459.4 1150.0 459.0Z" fill="#ffffff" />
<ellipse cx="1417" cy="362" rx="7.2" ry="0.6" transform="rotate(-39 1417 362)" fill="#ffffff"/>
<ellipse cx="1012" cy="534" rx="10.8" ry="1.2" transform="rotate(-6 1012 534)" fill="#ffffff"/>
<path d="M1277.1 468.5C1275.9 469.5 1270.4 468.4 1269.0 467.4C1267.6 466.3 1268.6 464.1 1268.7 462.2C1268.8 460.3 1268.3 456.2 1269.5 456.1C1270.7 456.0 1274.7 459.3 1276.0 461.4C1277.3 463.5 1278.3 467.5 1277.1 468.5Z" fill="#ffffff" />
<ellipse cx="1464" cy="380" rx="10.5" ry="0.7" transform="rotate(-44 1464 380)" fill="#ffffff"/>
<ellipse cx="1341" cy="435" rx="8.8" ry="1.0" transform="rotate(-25 1341 435)" fill="#ffffff"/>
<ellipse cx="1010" cy="571" rx="8.9" ry="0.5" transform="rotate(-4 1010 571)" fill="#ffffff"/>
<path d="M1201.4 453.0C1201.0 453.6 1198.8 454.3 1197.9 454.2C1197.0 454.1 1196.5 453.0 1196.1 452.3C1195.6 451.6 1194.5 450.5 1195.2 450.2C1195.9 449.9 1199.1 449.9 1200.1 450.4C1201.1 450.9 1201.8 452.4 1201.4 453.0Z" fill="#ffffff" />
<ellipse cx="1316" cy="447" rx="9.3" ry="0.9" transform="rotate(-55 1316 447)" fill="#ffffff"/>
<ellipse cx="1424" cy="357" rx="2.6" ry="1.0" transform="rotate(-30 1424 357)" fill="#ffffff"/>
<ellipse cx="1205" cy="474" rx="4.5" ry="1.4" transform="rotate(-3 1205 474)" fill="#ffffff"/>
<path d="M910.0 590.8C909.5 589.9 912.8 586.5 914.8 585.5C916.8 584.5 920.3 584.0 921.7 584.6C923.1 585.2 924.0 588.3 923.4 589.3C922.8 590.3 920.0 590.4 917.8 590.6C915.6 590.9 910.5 591.6 910.0 590.8Z" fill="#ffffff" />
<path d="M1359.0 457.6C1358.6 458.1 1357.2 457.1 1356.4 456.4C1355.7 455.7 1354.6 454.5 1354.5 453.6C1354.4 452.7 1355.2 450.9 1355.9 450.9C1356.6 450.9 1358.2 452.5 1358.7 453.6C1359.2 454.7 1359.4 457.1 1359.0 457.6Z" fill="#ffffff" />
<ellipse cx="1240" cy="446" rx="7.1" ry="0.7" transform="rotate(-53 1240 446)" fill="#ffffff"/>
<ellipse cx="1156" cy="482" rx="7.7" ry="1.3" transform="rotate(-23 1156 482)" fill="#ffffff"/>
<ellipse cx="1086" cy="520" rx="4.0" ry="1.5" transform="rotate(10 1086 520)" fill="#ffffff"/>
<ellipse cx="1122" cy="447" rx="5.6" ry="0.8" transform="rotate(-54 1122 447)" fill="#ffffff"/>
<ellipse cx="1290" cy="385" rx="7.0" ry="1.3" transform="rotate(-10 1290 385)" fill="#ffffff"/>
<path d="M929.5 573.5C928.9 574.2 926.2 574.2 925.4 574.0C924.6 573.8 925.1 573.1 924.9 572.3C924.7 571.5 923.7 569.7 924.4 569.2C925.1 568.7 928.1 568.8 929.0 569.5C929.9 570.2 930.1 572.8 929.5 573.5Z" fill="#ffffff" />
<path d="M1314.7 464.6C1314.4 465.5 1312.3 466.7 1310.5 467.1C1308.7 467.5 1304.6 467.6 1304.1 467.1C1303.6 466.6 1306.2 464.8 1307.6 463.9C1309.0 463.0 1311.1 461.6 1312.3 461.7C1313.5 461.8 1315.0 463.7 1314.7 464.6Z" fill="#ffffff" />
<ellipse cx="1124" cy="552" rx="8.4" ry="1.0" transform="rotate(-65 1124 552)" fill="#ffffff"/>
<path d="M1130.8 475.9C1129.5 475.7 1127.4 474.2 1127.8 473.1C1128.2 472.1 1131.5 470.5 1133.2 469.6C1134.9 468.7 1137.8 466.9 1138.2 467.7C1138.6 468.4 1137.0 472.7 1135.8 474.1C1134.6 475.5 1132.1 476.1 1130.8 475.9Z" fill="#ffffff" />
<path d="M966.7 591.3C966.0 591.9 964.5 592.0 963.0 590.8C961.5 589.5 958.0 585.4 957.4 583.8C956.8 582.2 958.0 580.8 959.6 581.4C961.2 582.0 965.9 585.6 967.1 587.2C968.3 588.9 967.4 590.7 966.7 591.3Z" fill="#ffffff" />
<path d="M882.2 640.8C881.6 639.7 882.7 636.2 884.0 635.0C885.3 633.8 889.1 633.1 890.1 633.6C891.1 634.1 890.1 636.9 889.7 638.2C889.3 639.6 889.0 641.3 887.7 641.7C886.5 642.1 882.8 641.9 882.2 640.8Z" fill="#ffffff" />
<ellipse cx="1254" cy="389" rx="3.0" ry="1.6" transform="rotate(61 1254 389)" fill="#ffffff"/>
<ellipse cx="1123" cy="475" rx="7.8" ry="1.5" transform="rotate(-11 1123 475)" fill="#ffffff"/>
<path d="M1411.2 380.3C1410.4 380.7 1409.3 380.2 1407.7 379.3C1406.1 378.4 1402.1 376.1 1401.8 374.8C1401.5 373.5 1404.0 371.0 1405.8 371.4C1407.6 371.8 1411.6 375.7 1412.5 377.2C1413.4 378.7 1412.0 379.9 1411.2 380.3Z" fill="#ffffff" />
<ellipse cx="1372" cy="435" rx="5.3" ry="1.1" transform="rotate(7 1372 435)" fill="#ffffff"/>
<path d="M989.0 610.8C988.4 610.3 989.5 608.0 989.9 607.3C990.3 606.6 990.9 606.4 991.4 606.4C991.9 606.4 992.8 606.4 993.1 607.0C993.4 607.6 994.1 609.5 993.4 610.1C992.7 610.7 989.6 611.3 989.0 610.8Z" fill="#ffffff" />
<ellipse cx="1284" cy="431" rx="2.6" ry="0.5" transform="rotate(54 1284 431)" fill="#ffffff"/>
<path d="M1281.5 493.1C1281.2 493.3 1280.4 493.1 1279.8 492.2C1279.2 491.3 1277.7 488.3 1277.8 487.8C1277.9 487.3 1279.8 488.5 1280.5 489.0C1281.2 489.5 1281.6 490.1 1281.8 490.8C1282.0 491.5 1281.8 492.9 1281.5 493.1Z" fill="#ffffff" />
<path d="M1429.0 369.4C1428.3 370.4 1425.9 371.0 1424.5 370.5C1423.1 370.0 1420.5 367.4 1420.4 366.6C1420.3 365.8 1422.5 366.1 1423.8 365.7C1425.1 365.3 1427.5 363.7 1428.4 364.3C1429.3 364.9 1429.7 368.4 1429.0 369.4Z" fill="#ffffff" />
<ellipse cx="909" cy="639" rx="5.3" ry="1.1" transform="rotate(-61 909 639)" fill="#ffffff"/>
<ellipse cx="983" cy="642" rx="5.4" ry="1.3" transform="rotate(-52 983 642)" fill="#ffffff"/>
<path d="M1247.0 503.8C1246.8 503.5 1246.8 502.9 1247.3 502.3C1247.8 501.7 1249.8 500.4 1250.2 500.4C1250.7 500.4 1250.3 501.8 1250.0 502.4C1249.7 503.0 1248.8 503.9 1248.3 504.1C1247.8 504.3 1247.2 504.1 1247.0 503.8Z" fill="#ffffff" />
<path d="M1061.9 504.4C1061.2 505.3 1057.5 506.2 1056.8 505.6C1056.0 505.1 1057.0 502.3 1057.4 501.1C1057.8 499.9 1058.7 498.5 1059.3 498.4C1059.9 498.3 1060.6 499.4 1061.0 500.4C1061.4 501.4 1062.6 503.5 1061.9 504.4Z" fill="#ffffff" />
<ellipse cx="1399" cy="391" rx="4.4" ry="1.5" transform="rotate(-33 1399 391)" fill="#ffffff"/>
<ellipse cx="954" cy="585" rx="3.1" ry="1.6" transform="rotate(-31 954 585)" fill="#ffffff"/>
<path d="M915.2 650.4C914.5 651.2 912.6 651.9 912.0 650.5C911.4 649.1 911.2 643.6 911.4 642.2C911.6 640.8 912.3 641.3 913.1 641.9C913.9 642.5 916.0 644.5 916.4 645.9C916.8 647.3 915.9 649.6 915.2 650.4Z" fill="#ffffff" />
<ellipse cx="945" cy="622" rx="10.5" ry="0.9" transform="rotate(-16 945 622)" fill="#ffffff"/>
<path d="M1236.1 399.6C1235.4 399.9 1233.8 396.7 1233.2 395.0C1232.6 393.3 1232.2 390.2 1232.5 389.2C1232.8 388.2 1234.0 388.5 1234.8 389.2C1235.6 389.9 1237.3 391.6 1237.5 393.3C1237.7 395.0 1236.8 399.3 1236.1 399.6Z" fill="#ffffff" />
<ellipse cx="1211" cy="495" rx="10.0" ry="1.2" transform="rotate(7 1211 495)" fill="#ffffff"/>
<ellipse cx="980" cy="583" rx="9.2" ry="1.5" transform="rotate(7 980 583)" fill="#ffffff"/>
<ellipse cx="938" cy="598" rx="4.1" ry="0.9" transform="rotate(-28 938 598)" fill="#ffffff"/>
<ellipse cx="1346" cy="400" rx="10.6" ry="0.7" transform="rotate(-37 1346 400)" fill="#ffffff"/>
<ellipse cx="973" cy="616" rx="8.0" ry="1.3" transform="rotate(-60 973 616)" fill="#ffffff"/>
<path d="M1206.0 456.7C1205.1 456.7 1203.2 455.8 1202.8 454.5C1202.4 453.2 1202.7 449.7 1203.4 449.0C1204.1 448.3 1206.3 449.3 1207.1 450.2C1207.9 451.1 1208.3 453.2 1208.1 454.3C1207.9 455.4 1206.9 456.7 1206.0 456.7Z" fill="#ffffff" />
<path d="M1463.6 386.5C1463.3 385.9 1465.0 383.0 1465.7 382.4C1466.4 381.8 1467.0 382.8 1467.8 383.1C1468.6 383.4 1470.8 383.9 1470.8 384.3C1470.8 384.7 1468.9 385.3 1467.7 385.7C1466.5 386.1 1463.9 387.1 1463.6 386.5Z" fill="#ffffff" />
<ellipse cx="1168" cy="438" rx="6.3" ry="0.8" transform="rotate(-66 1168 438)" fill="#ffffff"/>
<path d="M1286.7 420.3C1285.6 420.3 1284.3 415.8 1283.6 413.9C1282.8 412.0 1281.5 410.1 1282.2 409.0C1282.9 407.9 1286.5 406.8 1287.8 407.6C1289.1 408.4 1290.5 411.9 1290.3 414.0C1290.1 416.1 1287.8 420.3 1286.7 420.3Z" fill="#ffffff" />
<ellipse cx="1357" cy="341" rx="3.7" ry="1.3" transform="rotate(-6 1357 341)" fill="#ffffff"/>
<ellipse cx="1349" cy="399" rx="8.0" ry="1.1" transform="rotate(-59 1349 399)" fill="#ffffff"/>
<path d="M1104.2 531.2C1104.0 531.6 1101.5 531.5 1100.8 531.0C1100.0 530.5 1099.9 529.0 1099.7 528.3C1099.5 527.6 1099.3 526.5 1099.7 526.6C1100.1 526.7 1101.5 527.9 1102.3 528.7C1103.0 529.5 1104.5 530.8 1104.2 531.2Z" fill="#ffffff" />
<path d="M963.7 635.8C963.0 634.8 965.5 631.8 966.7 630.6C967.9 629.4 969.6 628.8 971.0 628.4C972.4 628.0 975.3 626.9 975.3 628.2C975.2 629.6 972.6 635.2 970.7 636.5C968.8 637.8 964.4 636.8 963.7 635.8Z" fill="#ffffff" />
<ellipse cx="1158" cy="524" rx="8.4" ry="1.1" transform="rotate(-8 1158 524)" fill="#ffffff"/>
<ellipse cx="1077" cy="508" rx="8.0" ry="0.7" transform="rotate(-45 1077 508)" fill="#ffffff"/>
<ellipse cx="1335" cy="460" rx="10.3" ry="1.5" transform="rotate(-21 1335 460)" fill="#ffffff"/>
<ellipse cx="1245" cy="420" rx="10.8" ry="1.5" transform="rotate(64 1245 420)" fill="#ffffff"/>
<ellipse cx="1233" cy="429" rx="8.8" ry="1.3" transform="rotate(53 1233 429)" fill="#ffffff"/>
<ellipse cx="1364" cy="446" rx="4.3" ry="1.0" transform="rotate(9 1364 446)" fill="#ffffff"/>
<ellipse cx="1318" cy="447" rx="5.8" ry="1.4" transform="rotate(-1 1318 447)" fill="#ffffff"/>
<ellipse cx="1368" cy="414" rx="5.4" ry="0.9" transform="rotate(-40 1368 414)" fill="#ffffff"/>
<path d="M1317.4 412.9C1316.0 412.2 1317.5 408.6 1319.3 405.8C1321.1 403.0 1326.4 397.2 1328.5 396.2C1330.6 395.2 1332.0 397.7 1331.8 400.0C1331.6 402.3 1329.9 408.1 1327.5 410.2C1325.1 412.3 1318.8 413.6 1317.4 412.9Z" fill="#ffffff" />
<path d="M1127.9 449.3C1127.5 450.6 1126.1 450.9 1124.1 450.2C1122.1 449.5 1116.4 446.4 1115.8 445.1C1115.2 443.8 1118.8 443.0 1120.6 442.6C1122.4 442.2 1125.3 441.4 1126.5 442.5C1127.7 443.6 1128.3 448.0 1127.9 449.3Z" fill="#ffffff" />
<path d="M1308.9 437.3C1307.7 436.9 1307.4 435.4 1307.6 434.2C1307.8 432.9 1309.4 430.2 1310.2 429.8C1311.0 429.4 1311.8 430.5 1312.5 431.6C1313.2 432.7 1315.2 435.4 1314.6 436.4C1314.0 437.3 1310.1 437.7 1308.9 437.3Z" fill="#ffffff" />
<path d="M1285.4 356.2C1284.9 356.3 1284.3 356.3 1284.0 355.4C1283.7 354.5 1283.3 351.3 1283.5 350.7C1283.7 350.1 1284.7 351.2 1285.3 351.9C1285.9 352.6 1287.2 354.1 1287.2 354.8C1287.2 355.5 1285.9 356.1 1285.4 356.2Z" fill="#ffffff" />
<ellipse cx="1443" cy="387" rx="5.0" ry="1.3" transform="rotate(-55 1443 387)" fill="#ffffff"/>
<path d="M1179.2 515.0C1179.0 514.4 1180.2 513.0 1181.8 512.8C1183.4 512.6 1188.1 513.2 1188.9 513.8C1189.8 514.4 1187.9 516.0 1186.9 516.4C1185.9 516.8 1184.3 516.5 1183.0 516.3C1181.7 516.1 1179.4 515.6 1179.2 515.0Z" fill="#ffffff" />
<ellipse cx="1222" cy="411" rx="5.8" ry="1.1" transform="rotate(53 1222 411)" fill="#ffffff"/>
<path d="M947.0 559.5C946.6 558.4 949.1 552.9 950.4 550.7C951.7 548.5 954.1 546.4 954.9 546.2C955.7 546.0 955.4 547.6 955.0 549.4C954.6 551.2 954.1 555.5 952.8 557.2C951.5 558.9 947.4 560.6 947.0 559.5Z" fill="#ffffff" />
<ellipse cx="1233" cy="430" rx="4.0" ry="0.6" transform="rotate(59 1233 430)" fill="#ffffff"/>
<path d="M1140.5 495.8C1139.8 496.0 1138.5 493.3 1137.8 491.4C1137.1 489.5 1135.7 485.6 1136.2 484.6C1136.8 483.6 1140.1 484.5 1141.1 485.4C1142.1 486.3 1142.2 488.5 1142.1 490.2C1142.0 491.9 1141.2 495.6 1140.5 495.8Z" fill="#ffffff" />
<ellipse cx="1307" cy="452" rx="10.3" ry="0.9" transform="rotate(-35 1307 452)" fill="#ffffff"/>
<path d="M1026.8 542.7C1026.3 543.7 1018.9 543.3 1016.3 542.4C1013.7 541.5 1011.5 538.7 1011.1 537.2C1010.7 535.7 1012.3 533.4 1013.7 533.3C1015.1 533.2 1017.1 535.1 1019.3 536.7C1021.5 538.3 1027.3 541.8 1026.8 542.7Z" fill="#ffffff" />
<ellipse cx="1034" cy="506" rx="5.3" ry="1.5" transform="rotate(-42 1034 506)" fill="#ffffff"/>
<path d="M1370.8 369.3C1370.6 369.6 1370.5 369.6 1370.0 369.7C1369.5 369.8 1368.0 370.3 1367.7 369.9C1367.4 369.4 1367.5 367.4 1368.0 367.0C1368.5 366.6 1370.5 367.4 1371.0 367.8C1371.5 368.2 1371.0 369.0 1370.8 369.3Z" fill="#ffffff" />
<path d="M942.9 622.5C942.8 622.0 944.8 620.8 945.4 620.4C946.0 620.0 945.9 619.9 946.6 620.0C947.3 620.1 949.7 620.8 949.6 621.3C949.5 621.8 947.1 623.1 946.0 623.3C944.9 623.5 943.0 623.0 942.9 622.5Z" fill="#ffffff" />
<ellipse cx="1221" cy="445" rx="10.5" ry="1.4" transform="rotate(-25 1221 445)" fill="#ffffff"/>
<ellipse cx="1231" cy="436" rx="4.4" ry="1.5" transform="rotate(-7 1231 436)" fill="#ffffff"/>
<path d="M1282.9 439.1C1282.6 439.9 1281.8 440.9 1280.5 440.6C1279.2 440.3 1275.6 438.2 1275.3 437.3C1275.0 436.4 1277.4 435.3 1278.6 435.1C1279.8 434.9 1281.8 435.2 1282.5 435.9C1283.2 436.6 1283.2 438.3 1282.9 439.1Z" fill="#ffffff" />
<ellipse cx="875" cy="634" rx="4.5" ry="0.6" transform="rotate(-0 875 634)" fill="#ffffff"/>
<ellipse cx="989" cy="614" rx="2.9" ry="1.0" transform="rotate(-12 989 614)" fill="#ffffff"/>
<ellipse cx="961" cy="581" rx="5.3" ry="1.5" transform="rotate(5 961 581)" fill="#ffffff"/>
<ellipse cx="896" cy="622" rx="8.1" ry="0.6" transform="rotate(9 896 622)" fill="#ffffff"/>
<path d="M1306.3 448.7C1305.9 448.1 1305.7 447.3 1306.0 446.6C1306.3 445.9 1307.5 444.4 1308.2 444.5C1308.9 444.6 1310.3 446.5 1310.4 447.5C1310.5 448.5 1309.3 450.1 1308.6 450.3C1307.9 450.5 1306.7 449.3 1306.3 448.7Z" fill="#ffffff" />
<path d="M1442.4 370.7C1441.9 371.7 1439.5 371.9 1438.1 371.6C1436.7 371.3 1434.2 370.1 1433.9 369.0C1433.6 367.9 1435.2 365.7 1436.4 365.1C1437.6 364.5 1440.1 364.7 1441.1 365.6C1442.1 366.5 1442.9 369.7 1442.4 370.7Z" fill="#ffffff" />
<ellipse cx="1076" cy="535" rx="2.3" ry="0.7" transform="rotate(-60 1076 535)" fill="#ffffff"/>
<ellipse cx="1008" cy="571" rx="10.5" ry="1.3" transform="rotate(-41 1008 571)" fill="#ffffff"/>
<ellipse cx="1268" cy="455" rx="4.7" ry="1.6" transform="rotate(79 1268 455)" fill="#ffffff"/>
<path d="M1170.4 441.4C1170.0 442.4 1167.6 442.9 1166.0 442.6C1164.4 442.3 1162.2 440.8 1161.0 439.8C1159.8 438.8 1157.8 437.0 1159.0 436.5C1160.2 436.0 1166.3 435.9 1168.2 436.7C1170.1 437.5 1170.8 440.4 1170.4 441.4Z" fill="#ffffff" />
<path d="M1253.8 370.4C1253.6 369.6 1253.4 368.8 1254.5 368.0C1255.6 367.2 1259.4 365.4 1260.4 365.6C1261.4 365.8 1261.5 368.0 1260.7 369.2C1259.9 370.4 1257.0 372.6 1255.8 372.8C1254.6 373.0 1254.0 371.2 1253.8 370.4Z" fill="#ffffff" />
<ellipse cx="1094" cy="534" rx="2.5" ry="1.0" transform="rotate(-51 1094 534)" fill="#ffffff"/>
<path d="M1326.4 406.1C1325.8 406.0 1324.8 405.2 1324.5 404.4C1324.2 403.6 1324.0 401.7 1324.4 401.3C1324.9 400.9 1326.6 401.2 1327.2 401.9C1327.8 402.6 1328.4 404.6 1328.3 405.3C1328.2 406.0 1327.0 406.2 1326.4 406.1Z" fill="#ffffff" />
<ellipse cx="922" cy="569" rx="6.6" ry="0.9" transform="rotate(-62 922 569)" fill="#ffffff"/>
<path d="M1270.6 486.1C1270.6 486.4 1269.6 486.9 1268.3 487.2C1267.0 487.4 1263.1 487.9 1262.5 487.6C1261.9 487.3 1263.9 486.0 1264.9 485.6C1265.9 485.2 1267.5 485.1 1268.4 485.2C1269.4 485.3 1270.6 485.8 1270.6 486.1Z" fill="#ffffff" />
<path d="M1364.6 427.2C1364.1 428.2 1362.5 430.8 1360.5 430.4C1358.5 430.0 1353.6 426.7 1352.8 425.1C1352.0 423.5 1353.7 421.1 1355.5 421.0C1357.3 420.9 1362.2 423.4 1363.7 424.4C1365.2 425.4 1365.1 426.2 1364.6 427.2Z" fill="#ffffff" />
<ellipse cx="1299" cy="350" rx="8.0" ry="0.5" transform="rotate(61 1299 350)" fill="#ffffff"/>
<ellipse cx="1166" cy="508" rx="5.4" ry="1.1" transform="rotate(-23 1166 508)" fill="#ffffff"/>
<ellipse cx="1155" cy="517" rx="8.0" ry="0.7" transform="rotate(-27 1155 517)" fill="#ffffff"/>
<ellipse cx="1309" cy="392" rx="5.2" ry="0.8" transform="rotate(-41 1309 392)" fill="#ffffff"/>
<ellipse cx="1283" cy="417" rx="5.2" ry="0.5" transform="rotate(-28 1283 417)" fill="#ffffff"/>
<ellipse cx="1358" cy="399" rx="3.0" ry="1.4" transform="rotate(-11 1358 399)" fill="#ffffff"/>
<ellipse cx="1145" cy="459" rx="6.4" ry="1.3" transform="rotate(2 1145 459)" fill="#ffffff"/>
<ellipse cx="1112" cy="481" rx="10.8" ry="0.7" transform="rotate(-57 1112 481)" fill="#ffffff"/>
<path d="M1394.9 446.1C1394.7 447.7 1393.2 450.0 1391.7 449.3C1390.2 448.6 1386.3 443.6 1385.8 441.9C1385.3 440.1 1387.6 439.2 1388.8 438.8C1390.0 438.4 1392.0 438.4 1393.0 439.6C1394.0 440.8 1395.1 444.5 1394.9 446.1Z" fill="#ffffff" />
<ellipse cx="1040" cy="592" rx="3.7" ry="0.5" transform="rotate(-16 1040 592)" fill="#ffffff"/>
<ellipse cx="1228" cy="426" rx="9.7" ry="1.5" transform="rotate(68 1228 426)" fill="#ffffff"/>
<ellipse cx="1203" cy="438" rx="4.9" ry="1.2" transform="rotate(-29 1203 438)" fill="#ffffff"/>
<ellipse cx="980" cy="553" rx="2.3" ry="1.4" transform="rotate(-5 980 553)" fill="#ffffff"/>
<path d="M970.5 572.6C969.7 573.5 967.8 575.5 966.6 573.8C965.4 572.1 963.0 564.5 963.4 562.6C963.8 560.7 967.4 561.6 968.8 562.6C970.2 563.6 971.3 566.8 971.6 568.5C971.9 570.2 971.3 571.7 970.5 572.6Z" fill="#ffffff" />
<ellipse cx="1065" cy="486" rx="4.6" ry="1.3" transform="rotate(-29 1065 486)" fill="#ffffff"/>
<ellipse cx="1160" cy="512" rx="9.8" ry="0.7" transform="rotate(0 1160 512)" fill="#ffffff"/>
<ellipse cx="1175" cy="441" rx="9.6" ry="0.9" transform="rotate(-37 1175 441)" fill="#ffffff"/>
<ellipse cx="1117" cy="475" rx="9.1" ry="1.0" transform="rotate(-3 1117 475)" fill="#ffffff"/>
<path d="M935.0 578.7C934.9 579.3 933.6 579.7 932.8 579.5C932.0 579.3 930.8 578.1 930.3 577.3C929.8 576.5 929.3 574.8 929.9 574.6C930.5 574.4 932.8 575.2 933.6 575.9C934.5 576.6 935.1 578.1 935.0 578.7Z" fill="#ffffff" />
<ellipse cx="1201" cy="396" rx="9.5" ry="1.1" transform="rotate(-41 1201 396)" fill="#ffffff"/>
<ellipse cx="913" cy="601" rx="9.1" ry="1.0" transform="rotate(-54 913 601)" fill="#ffffff"/>
<path d="M1458.6 424.1C1457.2 423.3 1454.1 422.1 1454.4 420.8C1454.8 419.5 1459.3 416.3 1460.7 416.1C1462.1 415.9 1462.6 418.2 1462.9 419.8C1463.2 421.4 1463.2 425.1 1462.5 425.8C1461.8 426.5 1459.9 424.9 1458.6 424.1Z" fill="#ffffff" />
<ellipse cx="1090" cy="526" rx="10.3" ry="1.0" transform="rotate(-29 1090 526)" fill="#ffffff"/>
<path d="M1352.0 386.4C1351.8 387.0 1348.7 387.7 1347.2 387.5C1345.7 387.3 1343.6 385.8 1343.2 385.2C1342.8 384.6 1343.7 384.0 1344.6 383.8C1345.5 383.6 1347.4 383.6 1348.6 384.0C1349.8 384.4 1352.2 385.8 1352.0 386.4Z" fill="#ffffff" />
<ellipse cx="901" cy="634" rx="9.8" ry="1.4" transform="rotate(-16 901 634)" fill="#ffffff"/>
<ellipse cx="1094" cy="519" rx="4.0" ry="1.5" transform="rotate(-39 1094 519)" fill="#ffffff"/>
<ellipse cx="1136" cy="531" rx="6.5" ry="1.4" transform="rotate(-69 1136 531)" fill="#ffffff"/>
<ellipse cx="1443" cy="386" rx="8.9" ry="1.1" transform="rotate(-27 1443 386)" fill="#ffffff"/>
<ellipse cx="963" cy="636" rx="8.5" ry="0.8" transform="rotate(-24 963 636)" fill="#ffffff"/>
<ellipse cx="1253" cy="460" rx="2.6" ry="1.2" transform="rotate(-58 1253 460)" fill="#ffffff"/>
<ellipse cx="1303" cy="349" rx="2.1" ry="0.9" transform="rotate(-61 1303 349)" fill="#ffffff"/>
<ellipse cx="865" cy="708" rx="6.0" ry="1.0" transform="rotate(-9 865 708)" fill="#ffffff"/>
<ellipse cx="1127" cy="547" rx="7.0" ry="1.5" transform="rotate(-64 1127 547)" fill="#ffffff"/>
<path d="M955.0 580.1C954.0 580.2 952.6 578.6 952.1 577.6C951.6 576.6 951.5 574.8 952.1 574.2C952.7 573.6 954.5 573.5 955.5 574.0C956.5 574.5 958.5 576.1 958.4 577.1C958.3 578.1 956.0 580.0 955.0 580.1Z" fill="#ffffff" />
<ellipse cx="894" cy="614" rx="10.4" ry="0.5" transform="rotate(-12 894 614)" fill="#ffffff"/>
<ellipse cx="1082" cy="516" rx="3.1" ry="1.1" transform="rotate(-46 1082 516)" fill="#ffffff"/>
<ellipse cx="1405" cy="387" rx="8.9" ry="0.8" transform="rotate(-58 1405 387)" fill="#ffffff"/>
<path d="M1165.5 485.8C1164.2 485.7 1160.3 485.7 1160.0 484.4C1159.7 483.1 1162.5 478.7 1163.8 478.1C1165.1 477.5 1167.3 479.8 1168.0 481.0C1168.7 482.2 1168.2 484.3 1167.8 485.1C1167.4 485.9 1166.8 485.9 1165.5 485.8Z" fill="#ffffff" />
<ellipse cx="1019" cy="608" rx="5.4" ry="0.6" transform="rotate(-32 1019 608)" fill="#ffffff"/>
<path d="M1314.1 343.4C1313.8 342.6 1313.3 340.3 1314.1 339.7C1314.9 339.1 1317.9 339.3 1318.7 339.7C1319.5 340.1 1319.5 341.1 1319.1 341.9C1318.7 342.6 1317.0 343.9 1316.2 344.2C1315.4 344.4 1314.4 344.1 1314.1 343.4Z" fill="#ffffff" />
<ellipse cx="1211" cy="429" rx="7.8" ry="0.6" transform="rotate(-30 1211 429)" fill="#ffffff"/>
<path d="M1153.7 519.1C1153.3 517.9 1155.9 513.8 1157.2 513.1C1158.5 512.4 1160.4 514.3 1161.3 515.1C1162.2 515.9 1162.7 516.8 1162.4 517.7C1162.1 518.6 1161.0 520.4 1159.5 520.6C1158.0 520.8 1154.1 520.4 1153.7 519.1Z" fill="#ffffff" />
<ellipse cx="1398" cy="375" rx="7.5" ry="0.7" transform="rotate(-33 1398 375)" fill="#ffffff"/>
<ellipse cx="1080" cy="483" rx="8.3" ry="1.3" transform="rotate(-18 1080 483)" fill="#ffffff"/>
<ellipse cx="1087" cy="545" rx="3.7" ry="1.5" transform="rotate(7 1087 545)" fill="#ffffff"/>
<path d="M968.3 624.2C967.9 623.3 972.1 619.0 974.9 617.1C977.6 615.2 982.8 612.2 984.8 612.8C986.8 613.4 988.3 618.9 987.0 620.5C985.7 622.1 980.1 622.1 977.0 622.7C973.9 623.3 968.6 625.1 968.3 624.2Z" fill="#ffffff" />
<path d="M1302.1 399.6C1301.6 400.5 1300.1 400.3 1299.3 399.5C1298.5 398.7 1297.6 396.1 1297.5 395.0C1297.4 393.9 1298.1 392.9 1298.9 392.8C1299.7 392.7 1301.8 393.0 1302.3 394.1C1302.8 395.2 1302.6 398.7 1302.1 399.6Z" fill="#ffffff" />
<path d="M1411.0 355.1C1410.9 354.7 1412.3 353.4 1412.9 352.9C1413.5 352.4 1414.4 352.0 1414.8 352.0C1415.2 352.0 1415.6 352.5 1415.4 353.1C1415.2 353.7 1414.1 355.3 1413.4 355.6C1412.7 355.9 1411.1 355.6 1411.0 355.1Z" fill="#ffffff" />
<path d="M983.6 597.1C983.1 597.1 981.7 595.0 981.5 594.1C981.3 593.2 981.8 592.3 982.3 591.8C982.8 591.3 984.0 590.6 984.4 591.0C984.8 591.4 984.5 593.1 984.4 594.1C984.3 595.1 984.1 597.1 983.6 597.1Z" fill="#ffffff" />
<path d="M1136.8 479.7C1136.2 478.8 1135.8 477.9 1136.7 476.7C1137.7 475.5 1141.3 472.6 1142.5 472.5C1143.7 472.4 1144.1 474.3 1143.7 475.9C1143.3 477.5 1141.2 481.5 1140.1 482.1C1138.9 482.7 1137.4 480.6 1136.8 479.7Z" fill="#ffffff" />
<ellipse cx="992" cy="567" rx="6.9" ry="0.9" transform="rotate(-31 992 567)" fill="#ffffff"/>
<path d="M1269.3 424.1C1268.2 425.3 1266.0 426.5 1264.2 425.2C1262.5 423.9 1259.5 418.7 1258.8 416.1C1258.1 413.6 1258.0 409.6 1260.0 409.9C1262.0 410.2 1269.2 415.6 1270.8 418.0C1272.3 420.4 1270.4 422.9 1269.3 424.1Z" fill="#ffffff" />
<ellipse cx="1355" cy="402" rx="4.0" ry="1.3" transform="rotate(-28 1355 402)" fill="#ffffff"/>
<ellipse cx="1224" cy="440" rx="10.6" ry="1.4" transform="rotate(-50 1224 440)" fill="#ffffff"/>
<ellipse cx="1164" cy="466" rx="9.2" ry="0.7" transform="rotate(-25 1164 466)" fill="#ffffff"/>
<path d="M1085.5 536.2C1085.0 536.7 1084.0 537.4 1083.3 537.4C1082.6 537.4 1081.2 536.6 1081.1 536.1C1081.0 535.6 1082.1 534.7 1082.9 534.4C1083.7 534.1 1085.6 534.2 1086.0 534.5C1086.4 534.8 1086.0 535.7 1085.5 536.2Z" fill="#ffffff" />
<ellipse cx="1362" cy="399" rx="9.8" ry="1.4" transform="rotate(-62 1362 399)" fill="#ffffff"/>
<path d="M1032.3 598.8C1031.5 600.4 1028.3 601.9 1026.8 600.6C1025.3 599.3 1023.5 593.3 1023.4 591.1C1023.3 588.9 1024.6 587.4 1026.0 587.4C1027.4 587.4 1030.7 589.2 1031.7 591.1C1032.8 593.0 1033.1 597.2 1032.3 598.8Z" fill="#ffffff" />
<ellipse cx="1333" cy="432" rx="4.5" ry="1.3" transform="rotate(-33 1333 432)" fill="#ffffff"/>
<ellipse cx="1366" cy="369" rx="5.1" ry="1.5" transform="rotate(-57 1366 369)" fill="#ffffff"/>
<ellipse cx="1092" cy="493" rx="5.1" ry="0.8" transform="rotate(-7 1092 493)" fill="#ffffff"/>
<ellipse cx="1314" cy="392" rx="4.5" ry="1.5" transform="rotate(-19 1314 392)" fill="#ffffff"/>
<path d="M1138.2 468.0C1137.3 467.5 1137.3 466.6 1137.3 464.6C1137.3 462.6 1137.3 457.1 1138.2 456.0C1139.1 454.9 1142.0 456.2 1142.7 458.1C1143.4 460.1 1143.3 466.1 1142.6 467.7C1141.8 469.3 1139.1 468.5 1138.2 468.0Z" fill="#ffffff" />
<ellipse cx="1261" cy="432" rx="4.6" ry="1.0" transform="rotate(77 1261 432)" fill="#ffffff"/>
<path d="M1378.5 395.4C1377.8 396.4 1376.4 397.4 1375.2 396.8C1374.0 396.2 1371.8 393.2 1371.3 391.8C1370.8 390.4 1371.0 388.4 1372.3 388.2C1373.6 388.0 1378.3 389.6 1379.3 390.8C1380.3 392.0 1379.2 394.4 1378.5 395.4Z" fill="#ffffff" />
<ellipse cx="1243" cy="457" rx="2.6" ry="1.1" transform="rotate(63 1243 457)" fill="#ffffff"/>
<ellipse cx="1053" cy="480" rx="10.5" ry="1.2" transform="rotate(-27 1053 480)" fill="#ffffff"/>
<ellipse cx="1029" cy="512" rx="10.8" ry="1.1" transform="rotate(-53 1029 512)" fill="#ffffff"/>
<path d="M1415.5 404.2C1414.5 404.2 1412.4 403.8 1412.0 402.5C1411.6 401.2 1412.4 396.9 1413.3 396.4C1414.2 395.9 1416.4 398.3 1417.2 399.3C1418.0 400.3 1418.6 401.4 1418.3 402.2C1418.0 403.0 1416.5 404.1 1415.5 404.2Z" fill="#ffffff" />
<ellipse cx="1257" cy="396" rx="6.4" ry="0.5" transform="rotate(-20 1257 396)" fill="#ffffff"/>
<ellipse cx="1081" cy="542" rx="10.8" ry="1.2" transform="rotate(-27 1081 542)" fill="#ffffff"/>
<path d="M1288.4 435.2C1287.3 435.1 1286.6 432.2 1286.7 430.3C1286.8 428.4 1287.9 424.9 1288.9 423.8C1289.9 422.8 1292.0 422.9 1292.7 424.0C1293.5 425.1 1294.1 428.7 1293.4 430.6C1292.7 432.5 1289.5 435.2 1288.4 435.2Z" fill="#ffffff" />
<path d="M1244.1 495.9C1243.3 495.9 1242.3 493.2 1242.3 492.0C1242.2 490.8 1242.9 489.5 1243.8 488.5C1244.7 487.5 1247.2 485.6 1247.7 486.2C1248.2 486.8 1247.6 490.3 1247.0 491.9C1246.4 493.5 1244.9 495.9 1244.1 495.9Z" fill="#ffffff" />
<path d="M1310.3 351.4C1309.6 352.0 1307.9 352.6 1307.3 352.4C1306.7 352.2 1306.3 350.7 1306.6 350.0C1306.9 349.3 1308.1 348.2 1308.9 348.0C1309.7 347.8 1311.3 348.0 1311.5 348.6C1311.7 349.2 1311.0 350.8 1310.3 351.4Z" fill="#ffffff" />
<ellipse cx="1379" cy="433" rx="10.1" ry="0.8" transform="rotate(-53 1379 433)" fill="#ffffff"/>
<ellipse cx="985" cy="549" rx="4.7" ry="1.1" transform="rotate(-8 985 549)" fill="#ffffff"/>
<path d="M1304.6 451.8C1303.4 451.7 1300.7 450.2 1299.8 448.6C1298.9 447.0 1298.4 442.7 1299.3 442.1C1300.2 441.6 1304.2 444.1 1305.4 445.3C1306.7 446.5 1306.9 448.4 1306.8 449.5C1306.7 450.6 1305.8 451.9 1304.6 451.8Z" fill="#ffffff" />
<path d="M1052.4 516.7C1051.8 516.8 1051.5 515.5 1051.3 514.9C1051.1 514.3 1050.8 513.6 1051.0 512.9C1051.2 512.2 1051.6 510.6 1052.3 510.8C1053.0 511.0 1055.0 513.2 1055.0 514.2C1055.0 515.2 1053.0 516.6 1052.4 516.7Z" fill="#ffffff" />
<ellipse cx="1396" cy="354" rx="8.9" ry="1.0" transform="rotate(5 1396 354)" fill="#ffffff"/>
<path d="M885.5 639.3C884.9 639.4 883.4 638.7 883.0 637.7C882.6 636.7 882.4 634.1 882.9 633.5C883.4 632.9 885.1 633.6 885.7 634.2C886.3 634.8 886.4 636.4 886.4 637.3C886.4 638.1 886.1 639.2 885.5 639.3Z" fill="#ffffff" />
<path d="M1110.4 556.3C1110.1 555.5 1108.7 553.7 1109.1 553.4C1109.5 553.1 1111.9 554.2 1112.9 554.7C1113.9 555.2 1115.2 555.8 1114.9 556.4C1114.6 557.0 1111.8 558.3 1111.1 558.3C1110.3 558.3 1110.7 557.1 1110.4 556.3Z" fill="#ffffff" />
<path d="M1326.4 431.8C1325.5 431.8 1324.1 431.9 1324.3 430.7C1324.5 429.5 1326.7 425.3 1327.4 424.8C1328.1 424.3 1328.1 426.7 1328.5 427.7C1328.9 428.7 1329.9 430.1 1329.6 430.8C1329.2 431.5 1327.3 431.8 1326.4 431.8Z" fill="#ffffff" />
<ellipse cx="1100" cy="486" rx="5.3" ry="0.9" transform="rotate(-36 1100 486)" fill="#ffffff"/>
<ellipse cx="1302" cy="470" rx="7.3" ry="0.9" transform="rotate(-51 1302 470)" fill="#ffffff"/>
<ellipse cx="1449" cy="423" rx="4.9" ry="0.6" transform="rotate(1 1449 423)" fill="#ffffff"/>
<ellipse cx="1380" cy="404" rx="8.3" ry="1.4" transform="rotate(-32 1380 404)" fill="#ffffff"/>
<ellipse cx="1394" cy="349" rx="10.9" ry="1.3" transform="rotate(-33 1394 349)" fill="#ffffff"/>
<ellipse cx="1047" cy="546" rx="6.0" ry="1.4" transform="rotate(-55 1047 546)" fill="#ffffff"/>
<path d="M1300.5 447.6C1299.1 447.3 1296.3 443.6 1296.3 442.2C1296.3 440.8 1299.2 440.2 1300.7 439.4C1302.2 438.6 1304.4 436.4 1305.0 437.2C1305.6 437.9 1305.2 442.2 1304.5 443.9C1303.8 445.6 1301.9 447.9 1300.5 447.6Z" fill="#ffffff" />
<path d="M1210.9 420.2C1210.4 420.3 1210.2 420.0 1210.0 419.5C1209.8 419.0 1209.2 417.9 1209.5 417.3C1209.8 416.7 1211.2 415.4 1211.7 415.6C1212.2 415.9 1212.9 418.0 1212.8 418.8C1212.7 419.6 1211.4 420.1 1210.9 420.2Z" fill="#ffffff" />
<path d="M1438.5 411.0C1437.7 411.3 1435.4 410.3 1434.6 409.1C1433.8 407.9 1433.5 404.7 1433.9 403.9C1434.3 403.1 1436.1 403.8 1437.0 404.4C1437.9 405.0 1439.2 406.3 1439.5 407.4C1439.8 408.5 1439.3 410.7 1438.5 411.0Z" fill="#ffffff" />
<ellipse cx="1211" cy="485" rx="10.8" ry="1.3" transform="rotate(51 1211 485)" fill="#ffffff"/>
<path d="M1478.6 412.6C1478.3 412.9 1477.9 412.7 1477.3 411.7C1476.7 410.7 1474.7 407.5 1474.8 406.7C1474.9 405.9 1477.0 406.3 1477.8 406.8C1478.5 407.3 1479.2 408.9 1479.3 409.9C1479.4 410.9 1478.9 412.3 1478.6 412.6Z" fill="#ffffff" />
<ellipse cx="1405" cy="348" rx="4.2" ry="1.1" transform="rotate(-32 1405 348)" fill="#ffffff"/>
<ellipse cx="1343" cy="355" rx="9.7" ry="1.3" transform="rotate(-61 1343 355)" fill="#ffffff"/>
<ellipse cx="1260" cy="437" rx="3.5" ry="0.9" transform="rotate(62 1260 437)" fill="#ffffff"/>
<ellipse cx="1406" cy="438" rx="6.8" ry="0.6" transform="rotate(-14 1406 438)" fill="#ffffff"/>
<ellipse cx="1410" cy="436" rx="8.9" ry="1.3" transform="rotate(-40 1410 436)" fill="#ffffff"/>
<ellipse cx="1363" cy="446" rx="6.6" ry="1.3" transform="rotate(1 1363 446)" fill="#ffffff"/>
<ellipse cx="1180" cy="476" rx="2.8" ry="1.5" transform="rotate(-62 1180 476)" fill="#ffffff"/>
<ellipse cx="910" cy="589" rx="9.3" ry="1.3" transform="rotate(4 910 589)" fill="#ffffff"/>
<ellipse cx="976" cy="635" rx="6.8" ry="1.3" transform="rotate(-57 976 635)" fill="#ffffff"/>
<ellipse cx="1320" cy="471" rx="4.5" ry="1.6" transform="rotate(-7 1320 471)" fill="#ffffff"/>
<path d="M1276.6 437.2C1275.6 437.4 1273.7 435.7 1272.8 433.9C1271.9 432.1 1270.8 427.4 1271.2 426.5C1271.6 425.6 1273.6 427.6 1274.9 428.7C1276.2 429.8 1278.6 431.5 1278.9 432.9C1279.2 434.3 1277.6 437.0 1276.6 437.2Z" fill="#ffffff" />
<ellipse cx="1200" cy="438" rx="6.0" ry="0.6" transform="rotate(-3 1200 438)" fill="#ffffff"/>
<ellipse cx="1193" cy="491" rx="7.4" ry="0.9" transform="rotate(6 1193 491)" fill="#ffffff"/>
<ellipse cx="1019" cy="590" rx="7.4" ry="0.8" transform="rotate(-11 1019 590)" fill="#ffffff"/>
<ellipse cx="1134" cy="499" rx="2.4" ry="1.0" transform="rotate(-21 1134 499)" fill="#ffffff"/>
<path d="M1387.4 447.9C1387.1 448.4 1385.3 447.2 1384.2 446.7C1383.1 446.2 1381.0 445.9 1380.9 445.0C1380.8 444.1 1382.8 441.6 1383.7 441.4C1384.6 441.2 1385.5 442.5 1386.1 443.6C1386.7 444.7 1387.7 447.4 1387.4 447.9Z" fill="#ffffff" />
<ellipse cx="1461" cy="409" rx="10.5" ry="0.8" transform="rotate(-25 1461 409)" fill="#ffffff"/>
<path d="M1061.9 551.9C1060.7 553.1 1059.4 556.7 1058.0 555.7C1056.6 554.8 1053.5 548.3 1053.3 546.2C1053.1 544.1 1055.0 542.9 1057.0 543.3C1059.0 543.7 1064.5 547.0 1065.3 548.4C1066.1 549.8 1063.1 550.7 1061.9 551.9Z" fill="#ffffff" />
<path d="M995.2 526.5C994.7 525.3 998.2 521.9 999.6 520.9C1001.0 519.9 1002.4 520.5 1003.7 520.8C1005.0 521.0 1007.5 521.2 1007.4 522.4C1007.3 523.6 1004.9 527.3 1002.9 528.0C1000.9 528.7 995.8 527.7 995.2 526.5Z" fill="#ffffff" />
<ellipse cx="1093" cy="554" rx="2.0" ry="0.6" transform="rotate(-13 1093 554)" fill="#ffffff"/>
<ellipse cx="1410" cy="375" rx="8.8" ry="1.2" transform="rotate(-41 1410 375)" fill="#ffffff"/>
<path d="M975.2 554.4C974.4 554.0 972.6 552.7 972.7 552.1C972.8 551.5 975.0 551.0 975.7 551.0C976.5 551.0 976.9 551.7 977.2 552.3C977.5 552.9 977.8 554.4 977.5 554.8C977.2 555.1 976.0 554.8 975.2 554.4Z" fill="#ffffff" />
<path d="M1237.7 496.7C1237.2 496.5 1236.0 495.3 1236.3 494.5C1236.5 493.7 1238.4 492.1 1239.2 491.9C1240.0 491.6 1241.3 492.3 1241.3 493.0C1241.3 493.7 1240.0 495.3 1239.4 495.9C1238.8 496.5 1238.2 496.9 1237.7 496.7Z" fill="#ffffff" />
<path d="M1133.5 543.2C1132.2 543.7 1128.2 541.1 1126.1 538.9C1123.9 536.6 1120.5 531.7 1120.6 529.7C1120.7 527.7 1124.6 525.8 1126.8 526.8C1129.0 527.8 1132.9 533.2 1134.0 535.9C1135.1 538.6 1134.8 542.7 1133.5 543.2Z" fill="#ffffff" />
<ellipse cx="1400" cy="387" rx="10.9" ry="0.6" transform="rotate(-46 1400 387)" fill="#ffffff"/>
<ellipse cx="1057" cy="567" rx="4.4" ry="1.4" transform="rotate(-70 1057 567)" fill="#ffffff"/>
<ellipse cx="890" cy="635" rx="6.7" ry="1.0" transform="rotate(-35 890 635)" fill="#ffffff"/>
<ellipse cx="1288" cy="361" rx="9.5" ry="1.2" transform="rotate(-45 1288 361)" fill="#ffffff"/>
<path d="M895.4 613.1C895.0 614.2 891.8 617.4 890.3 617.2C888.8 617.0 886.6 613.3 886.4 612.0C886.2 610.7 888.0 609.5 889.0 609.3C890.0 609.1 891.5 610.0 892.6 610.6C893.7 611.2 895.8 612.0 895.4 613.1Z" fill="#ffffff" />
<ellipse cx="1322" cy="397" rx="5.1" ry="1.6" transform="rotate(-65 1322 397)" fill="#ffffff"/>
<ellipse cx="1333" cy="445" rx="8.7" ry="1.3" transform="rotate(1 1333 445)" fill="#ffffff"/>
<ellipse cx="1091" cy="544" rx="2.9" ry="0.8" transform="rotate(-60 1091 544)" fill="#ffffff"/>
<path d="M954.3 613.7C953.3 613.9 950.4 614.0 950.3 612.5C950.1 611.0 952.4 605.6 953.4 604.8C954.4 604.0 955.9 606.7 956.4 607.8C956.9 608.9 956.8 610.6 956.4 611.6C956.0 612.6 955.3 613.6 954.3 613.7Z" fill="#ffffff" />
<ellipse cx="1020" cy="532" rx="10.2" ry="1.1" transform="rotate(-19 1020 532)" fill="#ffffff"/>
<ellipse cx="966" cy="583" rx="2.2" ry="1.0" transform="rotate(-70 966 583)" fill="#ffffff"/>
<ellipse cx="1417" cy="353" rx="7.1" ry="0.6" transform="rotate(-44 1417 353)" fill="#ffffff"/>
<path d="M993.3 547.8C993.2 548.3 992.9 548.8 992.0 548.7C991.1 548.6 988.5 548.0 987.9 547.2C987.3 546.4 987.7 544.3 988.5 544.1C989.3 543.9 991.9 545.3 992.7 545.9C993.5 546.5 993.4 547.3 993.3 547.8Z" fill="#ffffff" />
<ellipse cx="978" cy="553" rx="5.1" ry="1.5" transform="rotate(-38 978 553)" fill="#ffffff"/>
<path d="M1099.4 541.8C1097.4 541.4 1094.5 534.5 1094.7 532.0C1094.9 529.5 1098.8 527.7 1100.4 526.7C1102.1 525.8 1103.6 525.0 1104.6 526.3C1105.6 527.6 1107.5 532.0 1106.6 534.6C1105.7 537.2 1101.4 542.2 1099.4 541.8Z" fill="#ffffff" />
<ellipse cx="965" cy="605" rx="5.8" ry="1.3" transform="rotate(-12 965 605)" fill="#ffffff"/>
<path d="M1355.8 416.7C1354.9 417.1 1353.0 417.1 1352.6 416.1C1352.2 415.1 1353.0 411.8 1353.5 410.9C1354.0 409.9 1354.8 409.9 1355.6 410.4C1356.3 410.9 1358.0 412.6 1358.0 413.7C1358.0 414.8 1356.7 416.3 1355.8 416.7Z" fill="#ffffff" />
<ellipse cx="1051" cy="515" rx="5.5" ry="0.6" transform="rotate(-69 1051 515)" fill="#ffffff"/>
<path d="M1080.0 466.0C1079.9 465.0 1083.0 464.1 1084.5 463.4C1086.0 462.7 1088.3 461.4 1089.1 462.0C1089.9 462.6 1090.1 465.9 1089.5 467.1C1088.9 468.3 1086.9 469.4 1085.3 469.2C1083.7 469.0 1080.1 467.0 1080.0 466.0Z" fill="#ffffff" />
<ellipse cx="1068" cy="576" rx="10.3" ry="0.9" transform="rotate(-48 1068 576)" fill="#ffffff"/>
<ellipse cx="1418" cy="396" rx="6.4" ry="1.6" transform="rotate(-61 1418 396)" fill="#ffffff"/>
<path d="M1350.4 355.3C1349.6 355.2 1349.4 353.2 1349.2 352.0C1349.0 350.8 1349.1 349.5 1349.5 348.2C1349.9 346.9 1350.7 343.3 1351.5 344.0C1352.3 344.7 1354.3 350.7 1354.1 352.6C1353.9 354.5 1351.2 355.4 1350.4 355.3Z" fill="#ffffff" />
<ellipse cx="850" cy="675" rx="4.2" ry="0.7" transform="rotate(-29 850 675)" fill="#ffffff"/>
<ellipse cx="1209" cy="498" rx="3.3" ry="1.3" transform="rotate(59 1209 498)" fill="#ffffff"/>
<path d="M1120.7 523.4C1120.4 522.9 1120.6 521.0 1121.6 520.5C1122.6 520.0 1125.6 520.1 1126.5 520.6C1127.4 521.1 1127.5 523.2 1127.0 523.7C1126.5 524.2 1124.5 523.8 1123.4 523.7C1122.4 523.7 1121.0 523.9 1120.7 523.4Z" fill="#ffffff" />
<ellipse cx="1207" cy="492" rx="9.5" ry="1.3" transform="rotate(53 1207 492)" fill="#ffffff"/>
<path d="M898.9 644.9C898.1 644.8 895.9 645.1 896.1 643.1C896.3 641.1 899.2 633.7 900.1 632.8C901.0 631.9 901.1 635.9 901.2 637.7C901.3 639.5 901.1 642.5 900.7 643.7C900.3 644.9 899.7 645.0 898.9 644.9Z" fill="#ffffff" />
<path d="M897.2 641.3C897.3 642.2 893.3 644.0 891.8 644.2C890.3 644.4 888.9 643.4 888.4 642.6C887.9 641.9 888.2 640.4 888.7 639.7C889.2 639.0 890.0 638.3 891.4 638.6C892.8 638.9 897.1 640.4 897.2 641.3Z" fill="#ffffff" />
<ellipse cx="1208" cy="403" rx="9.7" ry="0.9" transform="rotate(67 1208 403)" fill="#ffffff"/>
<path d="M1034.3 506.4C1033.8 506.8 1032.2 505.8 1031.7 505.2C1031.2 504.6 1031.0 503.4 1031.1 502.8C1031.2 502.2 1031.6 501.3 1032.2 501.3C1032.8 501.3 1034.2 502.0 1034.5 502.9C1034.8 503.8 1034.8 506.0 1034.3 506.4Z" fill="#ffffff" />
<ellipse cx="1153" cy="453" rx="9.5" ry="1.5" transform="rotate(5 1153 453)" fill="#ffffff"/>
<path d="M1040.5 491.5C1040.3 491.1 1041.0 490.0 1041.5 489.5C1042.0 489.0 1042.8 488.6 1043.5 488.6C1044.2 488.6 1045.9 488.9 1045.8 489.5C1045.7 490.1 1043.8 491.9 1042.9 492.2C1042.0 492.5 1040.7 491.9 1040.5 491.5Z" fill="#ffffff" />
<ellipse cx="1165" cy="421" rx="10.4" ry="1.0" transform="rotate(-70 1165 421)" fill="#ffffff"/>
<ellipse cx="1330" cy="338" rx="8.3" ry="1.2" transform="rotate(-18 1330 338)" fill="#ffffff"/>
<ellipse cx="1360" cy="338" rx="9.3" ry="0.9" transform="rotate(-58 1360 338)" fill="#ffffff"/>
<path d="M1152.6 445.4C1152.0 445.8 1149.2 444.2 1147.5 443.0C1145.8 441.8 1142.9 439.1 1142.7 438.0C1142.5 436.9 1144.7 436.2 1146.1 436.6C1147.5 437.1 1150.2 439.2 1151.3 440.7C1152.4 442.2 1153.2 445.0 1152.6 445.4Z" fill="#ffffff" />
<ellipse cx="1336" cy="431" rx="6.4" ry="1.5" transform="rotate(-8 1336 431)" fill="#ffffff"/>
<ellipse cx="939" cy="599" rx="4.8" ry="1.4" transform="rotate(-25 939 599)" fill="#ffffff"/>
<ellipse cx="1148" cy="465" rx="2.2" ry="0.9" transform="rotate(-67 1148 465)" fill="#ffffff"/>
<path d="M1253.9 373.0C1253.1 372.9 1252.3 370.8 1252.9 369.1C1253.5 367.4 1256.4 363.4 1257.4 363.0C1258.4 362.6 1258.8 365.4 1258.9 366.5C1259.0 367.6 1258.7 368.7 1257.9 369.8C1257.1 370.9 1254.7 373.1 1253.9 373.0Z" fill="#ffffff" />
<ellipse cx="966" cy="588" rx="10.4" ry="1.5" transform="rotate(8 966 588)" fill="#ffffff"/>
<ellipse cx="1002" cy="521" rx="5.2" ry="0.6" transform="rotate(-30 1002 521)" fill="#ffffff"/>
<ellipse cx="862" cy="709" rx="5.5" ry="1.0" transform="rotate(-21 862 709)" fill="#ffffff"/>
<ellipse cx="947" cy="573" rx="7.1" ry="1.3" transform="rotate(-57 947 573)" fill="#ffffff"/>
<ellipse cx="1267" cy="377" rx="4.9" ry="1.4" transform="rotate(-47 1267 377)" fill="#ffffff"/>
<ellipse cx="868" cy="708" rx="5.5" ry="1.4" transform="rotate(-27 868 708)" fill="#ffffff"/>
<ellipse cx="1241" cy="489" rx="10.6" ry="0.8" transform="rotate(64 1241 489)" fill="#ffffff"/>
<ellipse cx="1254" cy="363" rx="5.8" ry="1.3" transform="rotate(63 1254 363)" fill="#ffffff"/>
<ellipse cx="1087" cy="524" rx="10.6" ry="0.7" transform="rotate(-59 1087 524)" fill="#ffffff"/>
<path d="M1186.4 453.3C1186.0 453.4 1185.2 452.9 1184.9 452.3C1184.6 451.7 1184.2 450.3 1184.3 449.7C1184.4 449.1 1185.3 448.5 1185.8 448.8C1186.3 449.1 1187.1 450.8 1187.2 451.5C1187.3 452.2 1186.8 453.2 1186.4 453.3Z" fill="#ffffff" />
<path d="M1127.0 539.9C1127.0 540.7 1126.0 542.0 1124.8 542.0C1123.6 542.0 1120.2 540.7 1119.7 539.9C1119.2 539.1 1121.0 537.4 1121.9 537.0C1122.8 536.6 1124.1 536.9 1124.9 537.4C1125.8 537.9 1127.0 539.1 1127.0 539.9Z" fill="#ffffff" />
<ellipse cx="913" cy="593" rx="4.3" ry="1.4" transform="rotate(-16 913 593)" fill="#ffffff"/>
<path d="M1105.4 564.0C1104.8 564.2 1104.2 563.3 1103.6 562.4C1103.0 561.5 1101.5 559.2 1101.8 558.6C1102.0 558.0 1104.2 558.3 1105.1 558.7C1106.0 559.1 1107.0 560.3 1107.1 561.2C1107.1 562.1 1106.0 563.8 1105.4 564.0Z" fill="#ffffff" />
<ellipse cx="1234" cy="488" rx="3.3" ry="1.1" transform="rotate(54 1234 488)" fill="#ffffff"/>
<ellipse cx="1407" cy="426" rx="4.5" ry="1.4" transform="rotate(-53 1407 426)" fill="#ffffff"/>
<path d="M1144.9 526.6C1144.3 526.9 1143.9 526.2 1143.3 525.8C1142.7 525.4 1141.2 524.8 1141.3 524.4C1141.4 524.0 1143.0 523.4 1143.9 523.4C1144.9 523.4 1146.8 523.6 1147.0 524.1C1147.2 524.6 1145.5 526.3 1144.9 526.6Z" fill="#ffffff" />
<ellipse cx="1080" cy="540" rx="6.5" ry="0.5" transform="rotate(1 1080 540)" fill="#ffffff"/>
<ellipse cx="1207" cy="449" rx="3.7" ry="1.5" transform="rotate(-40 1207 449)" fill="#ffffff"/>
<ellipse cx="1312" cy="370" rx="2.2" ry="0.5" transform="rotate(-57 1312 370)" fill="#ffffff"/>
<ellipse cx="964" cy="602" rx="8.2" ry="1.2" transform="rotate(-13 964 602)" fill="#ffffff"/>
<path d="M1451.2 429.8C1450.6 428.9 1450.0 427.2 1451.9 425.9C1453.8 424.6 1460.6 422.0 1462.4 421.9C1464.2 421.8 1464.1 423.6 1463.0 425.2C1461.9 426.8 1457.7 430.6 1455.7 431.4C1453.7 432.2 1451.8 430.7 1451.2 429.8Z" fill="#ffffff" />
<ellipse cx="1093" cy="556" rx="10.5" ry="1.1" transform="rotate(-27 1093 556)" fill="#ffffff"/>
<path d="M1124.0 477.6C1123.8 477.1 1125.5 476.7 1126.4 476.3C1127.3 475.9 1128.6 474.9 1129.3 475.2C1130.0 475.5 1131.1 477.6 1130.8 478.3C1130.5 479.0 1128.5 479.5 1127.4 479.4C1126.3 479.3 1124.2 478.1 1124.0 477.6Z" fill="#ffffff" />
<ellipse cx="1394" cy="380" rx="6.6" ry="1.3" transform="rotate(-34 1394 380)" fill="#ffffff"/>
<ellipse cx="1080" cy="480" rx="6.3" ry="1.3" transform="rotate(-41 1080 480)" fill="#ffffff"/>
<ellipse cx="824" cy="714" rx="6.9" ry="1.6" transform="rotate(-53 824 714)" fill="#ffffff"/>
<ellipse cx="999" cy="520" rx="4.8" ry="1.5" transform="rotate(-34 999 520)" fill="#ffffff"/>
<ellipse cx="973" cy="557" rx="6.7" ry="1.2" transform="rotate(-63 973 557)" fill="#ffffff"/>
<path d="M1184.6 437.7C1183.6 437.0 1181.1 434.8 1181.1 433.3C1181.1 431.8 1183.5 429.4 1184.8 428.5C1186.1 427.6 1188.7 426.5 1189.1 428.0C1189.5 429.5 1188.0 436.1 1187.3 437.7C1186.5 439.3 1185.6 438.4 1184.6 437.7Z" fill="#ffffff" />
<ellipse cx="1003" cy="566" rx="6.3" ry="1.1" transform="rotate(-17 1003 566)" fill="#ffffff"/>
<ellipse cx="841" cy="711" rx="2.3" ry="1.3" transform="rotate(-57 841 711)" fill="#ffffff"/>
<path d="M1384.7 379.3C1383.9 379.3 1382.1 377.4 1381.8 375.6C1381.5 373.8 1382.0 369.8 1383.1 368.6C1384.2 367.4 1387.6 367.4 1388.2 368.6C1388.8 369.8 1387.1 374.0 1386.5 375.8C1385.9 377.6 1385.5 379.3 1384.7 379.3Z" fill="#ffffff" />
<path d="M1241.5 406.5C1240.9 406.2 1240.5 404.1 1240.6 402.6C1240.6 401.2 1241.2 398.2 1241.8 397.8C1242.4 397.4 1243.9 398.9 1244.3 400.0C1244.7 401.1 1244.6 403.5 1244.1 404.6C1243.6 405.7 1242.1 406.8 1241.5 406.5Z" fill="#ffffff" />
<ellipse cx="1213" cy="412" rx="4.1" ry="1.5" transform="rotate(76 1213 412)" fill="#ffffff"/>
<ellipse cx="1312" cy="416" rx="2.1" ry="1.5" transform="rotate(-20 1312 416)" fill="#ffffff"/>
<path d="M1016.5 609.4C1016.0 608.0 1017.1 604.2 1018.5 602.9C1019.9 601.6 1023.5 600.6 1024.9 601.5C1026.3 602.4 1027.4 606.6 1026.9 608.2C1026.4 609.8 1023.5 610.8 1021.8 611.0C1020.1 611.2 1017.0 610.8 1016.5 609.4Z" fill="#ffffff" />
<ellipse cx="1268" cy="472" rx="6.6" ry="0.7" transform="rotate(75 1268 472)" fill="#ffffff"/>
<ellipse cx="1470" cy="388" rx="2.7" ry="0.8" transform="rotate(-4 1470 388)" fill="#ffffff"/>
<path d="M1070.7 494.4C1070.7 495.4 1070.9 498.2 1069.1 498.3C1067.3 498.4 1060.7 495.9 1059.9 494.7C1059.1 493.5 1062.8 491.7 1064.3 491.3C1065.8 490.9 1068.1 491.6 1069.2 492.1C1070.3 492.6 1070.7 493.4 1070.7 494.4Z" fill="#ffffff" />
<path d="M1413.1 360.9C1411.5 361.0 1409.7 359.5 1409.5 357.6C1409.3 355.7 1410.6 350.4 1411.9 349.3C1413.2 348.2 1416.2 350.0 1417.4 351.3C1418.6 352.6 1420.0 355.6 1419.3 357.2C1418.6 358.8 1414.7 360.8 1413.1 360.9Z" fill="#ffffff" />
<ellipse cx="1389" cy="346" rx="9.1" ry="1.4" transform="rotate(-16 1389 346)" fill="#ffffff"/>
<ellipse cx="997" cy="561" rx="6.1" ry="1.1" transform="rotate(-23 997 561)" fill="#ffffff"/>
<ellipse cx="1416" cy="421" rx="3.7" ry="0.6" transform="rotate(-2 1416 421)" fill="#ffffff"/>
<ellipse cx="1275" cy="366" rx="5.0" ry="0.6" transform="rotate(53 1275 366)" fill="#ffffff"/>
<path d="M1461.8 396.1C1461.2 397.4 1460.0 399.5 1459.1 399.6C1458.1 399.7 1456.7 398.2 1456.1 396.9C1455.5 395.6 1454.4 392.5 1455.4 391.6C1456.5 390.7 1461.3 390.9 1462.4 391.7C1463.5 392.4 1462.3 394.8 1461.8 396.1Z" fill="#ffffff" />
<ellipse cx="1175" cy="419" rx="3.9" ry="0.5" transform="rotate(-28 1175 419)" fill="#ffffff"/>
<path d="M1122.7 521.4C1122.1 520.6 1121.4 519.5 1122.3 518.2C1123.2 516.9 1126.2 514.2 1128.3 513.8C1130.4 513.4 1135.2 514.3 1134.8 515.9C1134.4 517.5 1128.1 522.3 1126.1 523.2C1124.1 524.1 1123.3 522.2 1122.7 521.4Z" fill="#ffffff" />
<path d="M920.9 572.7C920.8 571.7 920.9 570.0 921.7 569.0C922.5 568.0 924.5 566.8 925.8 566.9C927.1 567.0 930.1 568.1 929.5 569.5C928.9 570.9 923.6 574.5 922.2 575.0C920.8 575.5 921.0 573.7 920.9 572.7Z" fill="#ffffff" />
<ellipse cx="1256" cy="477" rx="8.2" ry="0.9" transform="rotate(75 1256 477)" fill="#ffffff"/>
<path d="M1290.6 363.4C1289.9 364.3 1286.5 365.2 1285.1 365.2C1283.7 365.2 1283.0 364.7 1282.4 363.6C1281.8 362.6 1280.4 359.5 1281.6 358.9C1282.8 358.3 1287.9 359.1 1289.4 359.8C1290.9 360.6 1291.3 362.5 1290.6 363.4Z" fill="#ffffff" />
<path d="M1348.5 424.2C1347.9 424.3 1346.7 424.3 1346.4 423.9C1346.1 423.4 1346.6 421.9 1346.9 421.5C1347.2 421.1 1347.5 421.2 1348.1 421.5C1348.6 421.8 1350.1 422.8 1350.2 423.2C1350.3 423.6 1349.1 424.1 1348.5 424.2Z" fill="#ffffff" />
<ellipse cx="1331" cy="385" rx="3.9" ry="1.4" transform="rotate(-14 1331 385)" fill="#ffffff"/>
<ellipse cx="920" cy="612" rx="6.2" ry="0.8" transform="rotate(-9 920 612)" fill="#ffffff"/>
<ellipse cx="1185" cy="478" rx="5.5" ry="0.7" transform="rotate(72 1185 478)" fill="#ffffff"/>
<ellipse cx="1386" cy="354" rx="8.7" ry="1.4" transform="rotate(-39 1386 354)" fill="#ffffff"/>
<path d="M1199.2 478.0C1198.1 477.2 1196.6 474.6 1196.7 473.3C1196.8 472.0 1198.8 471.0 1200.0 470.0C1201.2 469.0 1203.0 465.8 1203.6 467.1C1204.1 468.5 1204.0 476.3 1203.3 478.1C1202.6 479.9 1200.3 478.8 1199.2 478.0Z" fill="#ffffff" />
<path d="M1355.8 352.3C1355.3 353.4 1352.7 356.4 1351.1 355.7C1349.5 355.0 1346.3 349.6 1346.3 347.9C1346.3 346.2 1349.9 345.4 1351.2 345.6C1352.5 345.9 1353.4 348.3 1354.2 349.4C1355.0 350.5 1356.3 351.2 1355.8 352.3Z" fill="#ffffff" />
<ellipse cx="905" cy="648" rx="4.7" ry="1.1" transform="rotate(-28 905 648)" fill="#ffffff"/>
<ellipse cx="1272" cy="474" rx="6.3" ry="0.9" transform="rotate(-66 1272 474)" fill="#ffffff"/>
<ellipse cx="1340" cy="348" rx="5.2" ry="1.6" transform="rotate(-13 1340 348)" fill="#ffffff"/>
<ellipse cx="1223" cy="410" rx="6.7" ry="0.9" transform="rotate(53 1223 410)" fill="#ffffff"/>
<path d="M1086.6 522.5C1085.5 523.0 1084.3 520.3 1083.5 519.1C1082.7 517.9 1081.8 516.7 1082.0 515.1C1082.2 513.5 1083.1 509.2 1084.5 509.3C1085.9 509.4 1089.9 513.6 1090.2 515.8C1090.5 518.0 1087.7 522.0 1086.6 522.5Z" fill="#ffffff" />
<ellipse cx="1279" cy="377" rx="10.7" ry="0.8" transform="rotate(7 1279 377)" fill="#ffffff"/>
<ellipse cx="1269" cy="489" rx="6.2" ry="0.6" transform="rotate(58 1269 489)" fill="#ffffff"/>
<path d="M1197.8 436.6C1197.2 436.8 1194.9 436.1 1194.2 435.3C1193.5 434.5 1193.0 432.6 1193.4 432.0C1193.8 431.4 1195.8 431.4 1196.5 431.8C1197.2 432.2 1197.3 433.3 1197.5 434.1C1197.7 434.9 1198.3 436.4 1197.8 436.6Z" fill="#ffffff" />
<ellipse cx="1225" cy="398" rx="7.7" ry="1.5" transform="rotate(71 1225 398)" fill="#ffffff"/>
<ellipse cx="1053" cy="525" rx="10.9" ry="0.9" transform="rotate(-2 1053 525)" fill="#ffffff"/>
<path d="M1149.8 514.8C1149.7 515.4 1148.3 517.2 1147.6 517.4C1146.9 517.6 1146.2 516.4 1145.7 515.8C1145.2 515.2 1144.5 514.1 1144.9 513.7C1145.3 513.3 1147.3 513.4 1148.1 513.6C1148.9 513.8 1149.9 514.2 1149.8 514.8Z" fill="#ffffff" />
<path d="M855.9 699.0C855.5 698.0 855.3 696.1 856.9 695.6C858.5 695.1 864.3 695.5 865.7 696.3C867.1 697.0 866.3 699.2 865.2 700.1C864.1 701.0 860.8 701.9 859.2 701.7C857.7 701.5 856.3 700.0 855.9 699.0Z" fill="#ffffff" />
<ellipse cx="1357" cy="445" rx="10.3" ry="0.6" transform="rotate(4 1357 445)" fill="#ffffff"/>
<ellipse cx="1110" cy="494" rx="5.2" ry="1.4" transform="rotate(1 1110 494)" fill="#ffffff"/>
<ellipse cx="1017" cy="606" rx="2.1" ry="1.3" transform="rotate(-8 1017 606)" fill="#ffffff"/>
<path d="M1297.2 439.2C1296.9 437.9 1296.8 435.4 1297.8 434.8C1298.8 434.2 1301.8 434.8 1303.1 435.4C1304.4 436.0 1306.5 436.9 1305.9 438.2C1305.3 439.4 1301.0 442.7 1299.5 442.9C1298.0 443.1 1297.5 440.5 1297.2 439.2Z" fill="#ffffff" />
<path d="M840.2 717.9C839.4 717.9 838.1 716.1 838.0 714.8C837.9 713.5 838.8 710.9 839.3 710.1C839.8 709.3 840.7 709.3 841.3 710.1C841.9 710.9 842.9 713.5 842.7 714.8C842.5 716.1 841.0 717.9 840.2 717.9Z" fill="#ffffff" />
<ellipse cx="1325" cy="468" rx="9.0" ry="0.6" transform="rotate(-27 1325 468)" fill="#ffffff"/>
<path d="M1041.9 562.3C1041.3 561.2 1042.5 558.7 1043.6 558.1C1044.7 557.5 1047.4 558.0 1048.7 558.5C1050.0 559.0 1051.8 559.8 1051.5 560.8C1051.2 561.8 1048.6 564.4 1047.0 564.6C1045.4 564.9 1042.5 563.4 1041.9 562.3Z" fill="#ffffff" />
<ellipse cx="1076" cy="546" rx="10.8" ry="1.1" transform="rotate(-33 1076 546)" fill="#ffffff"/>
<ellipse cx="1043" cy="579" rx="6.4" ry="0.8" transform="rotate(-25 1043 579)" fill="#ffffff"/>
<path d="M1389.5 401.8C1389.2 401.8 1388.4 400.8 1388.1 399.9C1387.8 398.9 1387.4 396.6 1387.6 396.1C1387.8 395.6 1388.6 396.1 1389.0 396.7C1389.4 397.3 1390.0 399.1 1390.1 400.0C1390.2 400.9 1389.8 401.8 1389.5 401.8Z" fill="#ffffff" />
<ellipse cx="1014" cy="549" rx="10.5" ry="1.6" transform="rotate(-60 1014 549)" fill="#ffffff"/>
<ellipse cx="1234" cy="457" rx="9.3" ry="1.6" transform="rotate(57 1234 457)" fill="#ffffff"/>
<path d="M1077.9 490.1C1076.4 489.0 1080.6 481.1 1082.1 479.1C1083.6 477.1 1085.2 478.1 1086.7 478.0C1088.2 477.9 1090.5 477.0 1091.2 478.3C1091.9 479.6 1093.3 483.6 1091.1 485.6C1088.9 487.6 1079.4 491.2 1077.9 490.1Z" fill="#ffffff" />
<path d="M873.6 660.2C873.0 659.4 873.0 656.8 874.0 655.8C875.0 654.8 878.6 654.2 879.8 654.4C881.0 654.6 881.5 656.2 881.1 657.2C880.7 658.2 878.8 659.9 877.5 660.4C876.2 660.9 874.2 661.0 873.6 660.2Z" fill="#ffffff" />
<ellipse cx="1340" cy="464" rx="5.9" ry="1.2" transform="rotate(-67 1340 464)" fill="#ffffff"/>
<ellipse cx="859" cy="683" rx="11.0" ry="1.3" transform="rotate(-12 859 683)" fill="#ffffff"/>
<ellipse cx="1163" cy="457" rx="6.1" ry="1.6" transform="rotate(-20 1163 457)" fill="#ffffff"/>
<ellipse cx="936" cy="632" rx="7.4" ry="1.1" transform="rotate(-11 936 632)" fill="#ffffff"/>
<ellipse cx="1019" cy="591" rx="9.0" ry="1.0" transform="rotate(-19 1019 591)" fill="#ffffff"/>
<ellipse cx="1099" cy="458" rx="5.7" ry="1.4" transform="rotate(-65 1099 458)" fill="#ffffff"/>
<ellipse cx="1249" cy="492" rx="3.7" ry="0.5" transform="rotate(67 1249 492)" fill="#ffffff"/>
<path d="M1320.3 456.5C1320.1 457.7 1318.1 459.4 1316.1 459.6C1314.1 459.8 1309.6 458.7 1308.2 457.5C1306.8 456.3 1306.0 453.5 1307.5 452.6C1309.0 451.7 1314.9 451.6 1317.0 452.2C1319.1 452.8 1320.5 455.3 1320.3 456.5Z" fill="#ffffff" />
<ellipse cx="1236" cy="477" rx="9.5" ry="0.6" transform="rotate(-45 1236 477)" fill="#ffffff"/>
<ellipse cx="1067" cy="575" rx="8.0" ry="0.7" transform="rotate(-66 1067 575)" fill="#ffffff"/>
<path d="M1148.7 473.2C1148.1 472.9 1148.1 471.7 1148.4 470.9C1148.7 470.1 1149.9 468.5 1150.6 468.4C1151.3 468.3 1152.4 469.5 1152.6 470.2C1152.8 470.9 1152.4 472.2 1151.8 472.7C1151.2 473.2 1149.3 473.5 1148.7 473.2Z" fill="#ffffff" />
<path d="M944.9 580.9C944.3 581.2 941.1 580.4 940.3 579.8C939.5 579.2 939.9 577.8 940.1 577.1C940.3 576.4 941.1 575.3 941.7 575.5C942.3 575.7 943.3 577.2 943.8 578.1C944.3 579.0 945.5 580.6 944.9 580.9Z" fill="#ffffff" />
<ellipse cx="1386" cy="430" rx="2.5" ry="1.3" transform="rotate(-29 1386 430)" fill="#ffffff"/>
<ellipse cx="1318" cy="413" rx="7.4" ry="0.6" transform="rotate(5 1318 413)" fill="#ffffff"/>
<ellipse cx="1033" cy="531" rx="6.1" ry="1.4" transform="rotate(-14 1033 531)" fill="#ffffff"/>
<ellipse cx="1368" cy="409" rx="6.9" ry="1.1" transform="rotate(-69 1368 409)" fill="#ffffff"/>
<ellipse cx="1245" cy="394" rx="3.2" ry="0.7" transform="rotate(64 1245 394)" fill="#ffffff"/>
<path d="M923.4 617.1C923.5 616.2 924.9 614.0 925.6 613.7C926.3 613.4 927.2 614.6 927.8 615.3C928.4 616.0 929.8 617.5 929.3 618.1C928.8 618.7 925.7 619.3 924.7 619.1C923.7 618.9 923.2 618.0 923.4 617.1Z" fill="#ffffff" />
<path d="M1112.3 520.0C1112.2 520.7 1111.1 521.8 1110.1 522.2C1109.1 522.6 1106.4 522.9 1106.1 522.2C1105.8 521.5 1107.2 518.9 1108.0 518.2C1108.8 517.5 1109.9 517.5 1110.6 517.8C1111.3 518.1 1112.4 519.3 1112.3 520.0Z" fill="#ffffff" />
<ellipse cx="930" cy="576" rx="10.4" ry="0.8" transform="rotate(-31 930 576)" fill="#ffffff"/>
<ellipse cx="1250" cy="449" rx="9.4" ry="1.4" transform="rotate(-34 1250 449)" fill="#ffffff"/>
<path d="M1255.3 384.6C1255.0 383.4 1257.3 380.7 1258.7 380.0C1260.1 379.3 1262.8 379.3 1263.7 380.4C1264.6 381.5 1264.6 385.5 1264.1 386.7C1263.6 387.9 1262.3 387.9 1260.8 387.5C1259.3 387.1 1255.6 385.9 1255.3 384.6Z" fill="#ffffff" />
<ellipse cx="1290" cy="457" rx="6.1" ry="0.7" transform="rotate(53 1290 457)" fill="#ffffff"/>
<path d="M1304.6 395.0C1304.0 394.9 1303.4 392.7 1303.6 391.7C1303.8 390.7 1304.7 389.4 1305.5 389.1C1306.3 388.8 1308.0 389.5 1308.2 390.1C1308.4 390.7 1307.5 391.8 1306.9 392.6C1306.3 393.4 1305.1 395.1 1304.6 395.0Z" fill="#ffffff" />
<ellipse cx="1138" cy="521" rx="2.0" ry="0.6" transform="rotate(-3 1138 521)" fill="#ffffff"/>
<path d="M873.7 656.8C873.5 657.5 871.9 658.5 870.7 658.5C869.5 658.5 866.8 657.2 866.6 656.7C866.4 656.2 868.9 655.8 869.7 655.4C870.6 655.0 871.0 653.9 871.7 654.1C872.4 654.3 873.9 656.1 873.7 656.8Z" fill="#ffffff" />
<ellipse cx="1433" cy="375" rx="7.5" ry="1.6" transform="rotate(-68 1433 375)" fill="#ffffff"/>
<ellipse cx="1298" cy="479" rx="8.9" ry="1.3" transform="rotate(72 1298 479)" fill="#ffffff"/>
<path d="M1448.7 408.0C1448.2 406.3 1450.0 401.5 1452.0 400.4C1454.0 399.3 1459.5 400.5 1460.9 401.4C1462.3 402.3 1461.2 404.2 1460.2 405.7C1459.2 407.2 1456.6 410.0 1454.7 410.4C1452.8 410.8 1449.2 409.7 1448.7 408.0Z" fill="#ffffff" />
<ellipse cx="1389" cy="358" rx="5.4" ry="1.2" transform="rotate(-0 1389 358)" fill="#ffffff"/>
<ellipse cx="1090" cy="464" rx="8.4" ry="1.0" transform="rotate(-13 1090 464)" fill="#ffffff"/>
<ellipse cx="1407" cy="337" rx="10.5" ry="0.7" transform="rotate(-5 1407 337)" fill="#ffffff"/>
<ellipse cx="1051" cy="545" rx="5.5" ry="1.1" transform="rotate(-41 1051 545)" fill="#ffffff"/>
<ellipse cx="860" cy="690" rx="7.0" ry="1.1" transform="rotate(-37 860 690)" fill="#ffffff"/>
<ellipse cx="1432" cy="369" rx="8.2" ry="1.5" transform="rotate(-33 1432 369)" fill="#ffffff"/>
<ellipse cx="1347" cy="347" rx="5.0" ry="1.3" transform="rotate(-46 1347 347)" fill="#ffffff"/>
<ellipse cx="860" cy="648" rx="8.5" ry="1.0" transform="rotate(-34 860 648)" fill="#ffffff"/>
<ellipse cx="1403" cy="364" rx="4.4" ry="0.9" transform="rotate(-33 1403 364)" fill="#ffffff"/>
<ellipse cx="1237" cy="411" rx="6.0" ry="1.5" transform="rotate(-32 1237 411)" fill="#ffffff"/>
<ellipse cx="1079" cy="575" rx="7.8" ry="1.3" transform="rotate(-61 1079 575)" fill="#ffffff"/>
<ellipse cx="993" cy="528" rx="7.0" ry="0.9" transform="rotate(-42 993 528)" fill="#ffffff"/>
<path d="M1133.5 459.1C1132.7 459.5 1130.8 459.8 1129.5 459.2C1128.2 458.6 1126.2 456.4 1125.9 455.5C1125.6 454.6 1126.2 453.6 1127.6 453.8C1129.0 454.0 1133.4 455.7 1134.4 456.6C1135.4 457.5 1134.3 458.7 1133.5 459.1Z" fill="#ffffff" />
<path d="M1235.9 365.5C1234.8 366.6 1232.6 367.5 1231.2 365.9C1229.8 364.3 1227.4 357.9 1227.6 356.0C1227.8 354.1 1230.7 353.9 1232.4 354.4C1234.1 354.9 1237.4 357.2 1238.0 359.1C1238.6 361.0 1237.0 364.4 1235.9 365.5Z" fill="#ffffff" />
<ellipse cx="1109" cy="515" rx="10.0" ry="1.4" transform="rotate(-22 1109 515)" fill="#ffffff"/>
<ellipse cx="985" cy="561" rx="7.5" ry="1.5" transform="rotate(-37 985 561)" fill="#ffffff"/>
<ellipse cx="1033" cy="503" rx="4.0" ry="1.2" transform="rotate(-19 1033 503)" fill="#ffffff"/>
<path d="M1223.2 486.0C1222.0 486.1 1219.2 485.0 1219.0 484.2C1218.8 483.4 1221.2 482.0 1222.2 481.0C1223.2 480.0 1224.4 477.8 1225.1 478.2C1225.8 478.6 1226.5 482.0 1226.2 483.3C1225.9 484.6 1224.4 485.9 1223.2 486.0Z" fill="#ffffff" />
<ellipse cx="1291" cy="372" rx="6.7" ry="1.3" transform="rotate(79 1291 372)" fill="#ffffff"/>
<ellipse cx="940" cy="610" rx="8.3" ry="1.3" transform="rotate(-37 940 610)" fill="#ffffff"/>
<ellipse cx="1214" cy="403" rx="3.8" ry="1.3" transform="rotate(-15 1214 403)" fill="#ffffff"/>
<ellipse cx="1158" cy="425" rx="8.3" ry="1.2" transform="rotate(-19 1158 425)" fill="#ffffff"/>
<path d="M1156.7 495.8C1156.8 495.1 1159.6 493.7 1160.6 493.3C1161.6 492.9 1162.2 492.9 1162.7 493.5C1163.2 494.1 1163.8 496.0 1163.4 496.7C1163.0 497.4 1161.3 497.8 1160.2 497.6C1159.1 497.5 1156.6 496.5 1156.7 495.8Z" fill="#ffffff" />
<ellipse cx="1470" cy="391" rx="9.5" ry="0.8" transform="rotate(-12 1470 391)" fill="#ffffff"/>
<ellipse cx="1439" cy="368" rx="6.0" ry="1.3" transform="rotate(-26 1439 368)" fill="#ffffff"/>
<ellipse cx="1276" cy="412" rx="2.6" ry="0.9" transform="rotate(-45 1276 412)" fill="#ffffff"/>
<path d="M1094.2 491.3C1094.3 490.6 1096.0 489.1 1097.1 488.8C1098.2 488.5 1100.2 488.8 1100.8 489.4C1101.4 490.0 1101.4 491.8 1100.7 492.4C1100.0 493.0 1097.5 493.3 1096.4 493.1C1095.3 492.9 1094.1 492.0 1094.2 491.3Z" fill="#ffffff" />
<ellipse cx="1286" cy="468" rx="5.3" ry="0.9" transform="rotate(73 1286 468)" fill="#ffffff"/>
<path d="M1168.6 508.9C1168.1 508.5 1167.0 506.3 1167.3 505.6C1167.6 504.9 1169.5 504.8 1170.2 504.8C1170.9 504.8 1171.3 505.2 1171.3 505.7C1171.3 506.2 1170.8 507.5 1170.3 508.0C1169.8 508.5 1169.1 509.3 1168.6 508.9Z" fill="#ffffff" />
<path d="M1207.2 488.6C1205.9 487.8 1204.2 482.7 1204.2 480.5C1204.2 478.3 1205.9 476.1 1207.0 475.5C1208.1 474.9 1209.8 475.4 1210.6 477.0C1211.4 478.6 1212.7 483.2 1212.1 485.1C1211.5 487.0 1208.5 489.4 1207.2 488.6Z" fill="#ffffff" />
<path d="M1024.5 539.9C1024.0 540.4 1022.4 540.9 1021.8 540.6C1021.2 540.3 1020.8 539.0 1020.8 538.3C1020.8 537.6 1021.4 536.4 1022.0 536.3C1022.6 536.2 1024.1 537.2 1024.5 537.8C1024.9 538.4 1025.0 539.4 1024.5 539.9Z" fill="#ffffff" />
<path d="M1261.7 366.9C1261.1 365.8 1261.3 361.9 1262.2 359.5C1263.1 357.1 1266.2 352.8 1267.2 352.4C1268.2 352.0 1268.5 355.1 1268.3 357.4C1268.0 359.7 1266.8 364.4 1265.7 366.0C1264.6 367.6 1262.3 368.0 1261.7 366.9Z" fill="#ffffff" />
<ellipse cx="976" cy="615" rx="7.5" ry="0.9" transform="rotate(-13 976 615)" fill="#ffffff"/>
<ellipse cx="1065" cy="533" rx="5.7" ry="1.5" transform="rotate(-4 1065 533)" fill="#ffffff"/>
<path d="M1185.5 463.1C1184.8 463.6 1182.6 462.9 1182.0 461.7C1181.4 460.5 1181.8 456.9 1182.1 456.0C1182.4 455.1 1183.3 456.0 1184.0 456.4C1184.7 456.8 1186.2 457.4 1186.4 458.5C1186.7 459.6 1186.2 462.6 1185.5 463.1Z" fill="#ffffff" />
<ellipse cx="1066" cy="542" rx="4.4" ry="0.7" transform="rotate(-9 1066 542)" fill="#ffffff"/>
<ellipse cx="1405" cy="366" rx="3.4" ry="1.1" transform="rotate(-8 1405 366)" fill="#ffffff"/>
<ellipse cx="1100" cy="488" rx="4.4" ry="1.5" transform="rotate(-47 1100 488)" fill="#ffffff"/>
<ellipse cx="1437" cy="360" rx="9.5" ry="0.8" transform="rotate(-50 1437 360)" fill="#ffffff"/>
<ellipse cx="991" cy="572" rx="9.1" ry="1.5" transform="rotate(-36 991 572)" fill="#ffffff"/>
<ellipse cx="1053" cy="552" rx="6.2" ry="1.1" transform="rotate(-46 1053 552)" fill="#ffffff"/>
<path d="M1101.7 535.2C1101.3 535.0 1101.7 532.9 1102.0 532.0C1102.3 531.1 1102.8 529.8 1103.5 529.7C1104.2 529.6 1106.1 530.6 1106.2 531.2C1106.3 531.8 1105.0 532.8 1104.3 533.5C1103.5 534.2 1102.1 535.5 1101.7 535.2Z" fill="#ffffff" />
<ellipse cx="1178" cy="451" rx="5.6" ry="1.5" transform="rotate(-47 1178 451)" fill="#ffffff"/>
<path d="M945.2 604.4C944.6 604.2 944.7 602.3 944.5 601.3C944.3 600.3 943.5 598.4 944.0 598.3C944.5 598.2 946.6 599.9 947.3 600.6C948.0 601.3 948.4 601.9 948.0 602.5C947.6 603.1 945.8 604.6 945.2 604.4Z" fill="#ffffff" />
<path d="M1382.6 434.0C1382.2 434.7 1379.4 435.5 1377.8 435.5C1376.2 435.5 1373.3 434.5 1373.0 433.8C1372.7 433.1 1374.5 431.9 1375.7 431.5C1376.9 431.1 1378.9 430.7 1380.1 431.1C1381.2 431.5 1383.0 433.3 1382.6 434.0Z" fill="#ffffff" />
<path d="M1116.2 461.5C1115.8 462.1 1113.5 462.4 1112.2 461.4C1110.9 460.4 1108.8 457.4 1108.3 455.5C1107.8 453.6 1108.0 449.3 1109.1 449.7C1110.2 450.1 1113.6 455.6 1114.8 457.6C1116.0 459.6 1116.6 460.9 1116.2 461.5Z" fill="#ffffff" />
<ellipse cx="1064" cy="534" rx="9.1" ry="0.7" transform="rotate(-52 1064 534)" fill="#ffffff"/>
<path d="M1120.2 535.6C1119.4 535.8 1118.1 536.3 1117.8 535.8C1117.5 535.3 1118.0 533.5 1118.6 532.6C1119.2 531.7 1120.5 530.2 1121.2 530.6C1121.9 531.0 1122.8 533.9 1122.6 534.7C1122.4 535.5 1121.0 535.4 1120.2 535.6Z" fill="#ffffff" />
<path d="M1045.7 584.8C1045.0 585.1 1043.7 583.2 1043.0 581.9C1042.3 580.5 1041.5 577.9 1041.6 576.7C1041.7 575.5 1042.8 574.4 1043.8 574.9C1044.8 575.4 1047.2 578.1 1047.5 579.8C1047.8 581.4 1046.5 584.4 1045.7 584.8Z" fill="#ffffff" />
<ellipse cx="1186" cy="472" rx="9.3" ry="1.1" transform="rotate(61 1186 472)" fill="#ffffff"/>
<path d="M1236.2 490.0C1235.6 489.9 1234.5 487.2 1233.9 485.7C1233.4 484.1 1232.2 481.2 1232.9 480.7C1233.6 480.1 1237.0 481.4 1237.8 482.4C1238.6 483.3 1238.1 485.1 1237.8 486.4C1237.5 487.7 1236.8 490.1 1236.2 490.0Z" fill="#ffffff" />
<path d="M1096.4 490.6C1095.5 491.0 1094.6 492.4 1092.7 490.5C1090.8 488.6 1085.4 481.0 1085.0 479.3C1084.6 477.6 1088.3 479.0 1090.5 480.5C1092.7 482.0 1097.3 486.5 1098.3 488.2C1099.3 489.9 1097.3 490.2 1096.4 490.6Z" fill="#ffffff" />
<path d="M1096.9 566.9C1095.7 567.2 1092.7 565.7 1091.6 564.3C1090.5 562.9 1089.6 559.9 1090.1 558.7C1090.5 557.6 1092.8 556.8 1094.3 557.4C1095.8 558.0 1098.5 561.0 1098.9 562.6C1099.3 564.2 1098.1 566.6 1096.9 566.9Z" fill="#ffffff" />
<ellipse cx="1096" cy="483" rx="4.3" ry="1.0" transform="rotate(-24 1096 483)" fill="#ffffff"/>
<ellipse cx="1295" cy="384" rx="2.3" ry="1.0" transform="rotate(-37 1295 384)" fill="#ffffff"/>
<path d="M1004.5 607.5C1003.4 608.0 1000.6 606.6 999.9 605.7C999.2 604.8 999.9 603.1 1000.3 602.0C1000.7 600.9 1001.5 599.1 1002.5 599.3C1003.5 599.5 1006.1 601.6 1006.4 603.0C1006.7 604.4 1005.6 607.0 1004.5 607.5Z" fill="#ffffff" />
<ellipse cx="1026" cy="550" rx="4.0" ry="0.6" transform="rotate(-1 1026 550)" fill="#ffffff"/>
<ellipse cx="1266" cy="428" rx="9.9" ry="0.7" transform="rotate(-51 1266 428)" fill="#ffffff"/>
<ellipse cx="1158" cy="438" rx="10.6" ry="1.6" transform="rotate(10 1158 438)" fill="#ffffff"/>
<ellipse cx="1353" cy="422" rx="8.2" ry="0.7" transform="rotate(-50 1353 422)" fill="#ffffff"/>
<ellipse cx="1113" cy="524" rx="4.2" ry="0.9" transform="rotate(-41 1113 524)" fill="#ffffff"/>
<ellipse cx="1260" cy="404" rx="9.9" ry="1.4" transform="rotate(-8 1260 404)" fill="#ffffff"/>
<path d="M980.1 621.7C978.9 621.2 976.8 620.9 976.5 619.6C976.2 618.3 977.3 614.6 978.4 613.9C979.5 613.2 982.1 613.8 983.0 615.2C983.9 616.6 984.0 621.4 983.5 622.5C983.0 623.6 981.3 622.2 980.1 621.7Z" fill="#ffffff" />
<ellipse cx="843" cy="705" rx="9.0" ry="1.3" transform="rotate(-62 843 705)" fill="#ffffff"/>
<ellipse cx="1309" cy="446" rx="4.5" ry="1.4" transform="rotate(-19 1309 446)" fill="#ffffff"/>
<path d="M1152.4 474.0C1151.4 473.6 1149.0 472.5 1150.0 471.0C1151.0 469.5 1156.5 465.7 1158.5 464.8C1160.5 463.9 1162.4 464.3 1161.9 465.8C1161.5 467.3 1157.4 472.2 1155.8 473.6C1154.2 475.0 1153.4 474.4 1152.4 474.0Z" fill="#ffffff" />
<ellipse cx="984" cy="590" rx="10.7" ry="1.1" transform="rotate(-42 984 590)" fill="#ffffff"/>
<ellipse cx="1046" cy="579" rx="3.7" ry="1.5" transform="rotate(-33 1046 579)" fill="#ffffff"/>
<ellipse cx="1356" cy="392" rx="4.1" ry="1.4" transform="rotate(-22 1356 392)" fill="#ffffff"/>
<ellipse cx="1081" cy="465" rx="3.9" ry="1.3" transform="rotate(-45 1081 465)" fill="#ffffff"/>
<path d="M1077.3 476.8C1076.0 477.3 1073.5 477.6 1072.6 476.6C1071.7 475.6 1071.5 472.3 1072.0 470.8C1072.5 469.3 1074.2 467.1 1075.5 467.5C1076.8 467.9 1079.8 471.9 1080.1 473.5C1080.4 475.1 1078.5 476.3 1077.3 476.8Z" fill="#ffffff" />
<path d="M954.6 568.6C954.5 568.2 956.4 566.6 957.6 566.0C958.9 565.4 961.4 564.5 962.1 564.8C962.9 565.0 962.8 566.9 962.1 567.5C961.5 568.1 959.5 568.4 958.2 568.6C957.0 568.8 954.7 569.0 954.6 568.6Z" fill="#ffffff" />
<ellipse cx="1074" cy="472" rx="4.2" ry="1.4" transform="rotate(-1 1074 472)" fill="#ffffff"/>
<ellipse cx="1004" cy="543" rx="3.2" ry="1.3" transform="rotate(-27 1004 543)" fill="#ffffff"/>
<ellipse cx="1425" cy="413" rx="9.3" ry="0.6" transform="rotate(-15 1425 413)" fill="#ffffff"/>
<ellipse cx="934" cy="603" rx="2.8" ry="1.5" transform="rotate(-29 934 603)" fill="#ffffff"/>
<path d="M1346.7 399.6C1346.3 399.9 1344.7 399.8 1343.9 399.0C1343.1 398.2 1342.0 395.9 1342.0 394.8C1342.0 393.7 1343.2 391.9 1344.0 392.3C1344.8 392.7 1346.0 395.9 1346.5 397.1C1347.0 398.3 1347.1 399.3 1346.7 399.6Z" fill="#ffffff" />
<path d="M1382.7 445.3C1381.4 445.9 1378.5 444.7 1377.7 443.5C1376.9 442.3 1377.2 439.1 1378.0 438.0C1378.8 436.9 1381.1 436.4 1382.4 436.8C1383.7 437.2 1385.8 438.7 1385.8 440.1C1385.8 441.5 1384.0 444.7 1382.7 445.3Z" fill="#ffffff" />
<ellipse cx="1452" cy="419" rx="6.1" ry="1.5" transform="rotate(-5 1452 419)" fill="#ffffff"/>
<ellipse cx="1067" cy="573" rx="2.4" ry="1.4" transform="rotate(-55 1067 573)" fill="#ffffff"/>
<ellipse cx="1009" cy="522" rx="7.2" ry="0.6" transform="rotate(-20 1009 522)" fill="#ffffff"/>
<path d="M995.2 583.0C994.2 583.4 991.6 581.9 991.2 579.9C990.8 577.9 992.1 572.8 992.9 571.2C993.7 569.6 995.1 569.1 995.9 570.2C996.7 571.3 997.6 575.5 997.5 577.6C997.4 579.7 996.2 582.6 995.2 583.0Z" fill="#ffffff" />
<ellipse cx="1108" cy="552" rx="2.8" ry="1.1" transform="rotate(-10 1108 552)" fill="#ffffff"/>
<ellipse cx="1275" cy="355" rx="6.6" ry="0.5" transform="rotate(-62 1275 355)" fill="#ffffff"/>
<ellipse cx="1196" cy="415" rx="10.6" ry="1.2" transform="rotate(-21 1196 415)" fill="#ffffff"/>
<ellipse cx="964" cy="556" rx="10.3" ry="0.8" transform="rotate(-48 964 556)" fill="#ffffff"/>
<path d="M1106.7 462.1C1106.1 462.7 1104.3 463.1 1103.8 462.8C1103.3 462.5 1103.4 461.3 1103.5 460.4C1103.6 459.4 1103.5 457.3 1104.2 457.1C1104.9 456.9 1107.2 458.5 1107.6 459.3C1108.0 460.1 1107.3 461.5 1106.7 462.1Z" fill="#ffffff" />
<path d="M1204.7 407.0C1204.2 406.3 1203.9 404.6 1204.4 404.1C1205.0 403.6 1206.8 403.8 1208.0 404.2C1209.2 404.6 1211.3 406.0 1211.3 406.7C1211.2 407.4 1208.8 408.1 1207.7 408.1C1206.6 408.2 1205.2 407.7 1204.7 407.0Z" fill="#ffffff" />
<ellipse cx="1249" cy="359" rx="3.2" ry="1.0" transform="rotate(7 1249 359)" fill="#ffffff"/>
<path d="M1423.1 420.3C1422.3 420.5 1421.1 420.4 1420.9 419.1C1420.7 417.8 1421.1 413.7 1421.8 412.7C1422.5 411.7 1424.4 412.4 1425.0 413.3C1425.6 414.2 1425.8 416.9 1425.5 418.1C1425.2 419.3 1423.9 420.1 1423.1 420.3Z" fill="#ffffff" />
<path d="M1039.5 500.4C1039.1 499.7 1038.5 498.6 1039.2 498.1C1039.9 497.6 1042.7 497.2 1043.6 497.3C1044.5 497.4 1044.7 498.1 1044.4 498.9C1044.1 499.7 1042.5 502.1 1041.7 502.3C1040.9 502.6 1039.9 501.1 1039.5 500.4Z" fill="#ffffff" />
<ellipse cx="1170" cy="450" rx="3.0" ry="0.9" transform="rotate(-30 1170 450)" fill="#ffffff"/>
<path d="M916.1 595.2C915.3 595.8 913.8 595.2 912.9 594.1C912.0 593.0 910.5 589.7 910.5 588.3C910.5 586.9 911.5 585.4 912.7 585.7C913.9 586.1 917.2 588.8 917.8 590.4C918.4 592.0 916.9 594.6 916.1 595.2Z" fill="#ffffff" />
<path d="M851.8 691.8C850.9 691.3 853.8 686.6 854.4 684.2C855.0 681.9 854.5 678.1 855.6 677.7C856.7 677.3 860.5 680.2 861.2 681.7C861.9 683.2 861.5 685.3 859.9 687.0C858.3 688.7 852.7 692.3 851.8 691.8Z" fill="#ffffff" />
<ellipse cx="956" cy="621" rx="10.0" ry="1.0" transform="rotate(-55 956 621)" fill="#ffffff"/>
<ellipse cx="1097" cy="463" rx="4.0" ry="1.6" transform="rotate(-1 1097 463)" fill="#ffffff"/>
<ellipse cx="1388" cy="423" rx="7.2" ry="1.6" transform="rotate(-51 1388 423)" fill="#ffffff"/>
<path d="M1429.8 436.2C1429.0 435.7 1431.3 431.6 1432.9 428.7C1434.5 425.8 1438.2 418.7 1439.3 418.5C1440.3 418.3 1439.5 425.4 1439.2 427.6C1439.0 429.8 1439.4 430.4 1437.8 431.8C1436.2 433.2 1430.6 436.7 1429.8 436.2Z" fill="#ffffff" />
<path d="M1380.6 379.0C1380.4 378.2 1381.0 376.5 1381.8 376.0C1382.6 375.5 1384.6 375.6 1385.6 376.2C1386.5 376.8 1387.9 378.6 1387.5 379.3C1387.1 380.1 1384.2 380.8 1383.1 380.7C1381.9 380.6 1380.8 379.8 1380.6 379.0Z" fill="#ffffff" />
<ellipse cx="1317" cy="464" rx="10.0" ry="1.2" transform="rotate(-42 1317 464)" fill="#ffffff"/>
<path d="M1316.4 418.6C1315.4 418.2 1314.9 416.7 1315.9 415.5C1316.9 414.3 1321.2 411.5 1322.2 411.2C1323.2 410.9 1322.1 412.5 1322.0 413.6C1321.9 414.8 1322.6 417.3 1321.7 418.1C1320.8 418.9 1317.4 419.0 1316.4 418.6Z" fill="#ffffff" />
<path d="M1328.4 390.4C1328.3 389.4 1329.6 386.9 1330.3 386.8C1331.0 386.7 1331.6 388.6 1332.4 389.5C1333.2 390.4 1335.3 391.7 1335.1 392.3C1334.9 392.9 1332.1 393.2 1331.0 392.9C1329.9 392.6 1328.5 391.4 1328.4 390.4Z" fill="#ffffff" />
<ellipse cx="909" cy="637" rx="9.0" ry="1.5" transform="rotate(8 909 637)" fill="#ffffff"/>
<path d="M1353.3 445.6C1352.6 446.2 1351.1 447.0 1350.4 446.3C1349.7 445.6 1349.0 442.6 1348.9 441.6C1348.8 440.6 1348.8 440.2 1349.7 440.4C1350.7 440.6 1354.0 441.9 1354.6 442.8C1355.2 443.7 1354.0 445.0 1353.3 445.6Z" fill="#ffffff" />
<path d="M1219.3 415.3C1219.0 414.8 1219.5 413.0 1219.7 411.9C1220.0 410.8 1220.1 409.1 1220.8 408.9C1221.5 408.7 1223.8 409.8 1224.0 410.8C1224.2 411.8 1222.5 414.1 1221.7 414.8C1220.9 415.6 1219.6 415.8 1219.3 415.3Z" fill="#ffffff" />
<ellipse cx="1378" cy="383" rx="3.8" ry="0.6" transform="rotate(-52 1378 383)" fill="#ffffff"/>
<ellipse cx="1174" cy="442" rx="3.0" ry="1.3" transform="rotate(2 1174 442)" fill="#ffffff"/>
<ellipse cx="1146" cy="516" rx="3.1" ry="1.0" transform="rotate(-5 1146 516)" fill="#ffffff"/>
<ellipse cx="1018" cy="508" rx="9.6" ry="1.2" transform="rotate(-26 1018 508)" fill="#ffffff"/>
<ellipse cx="1122" cy="524" rx="10.0" ry="1.0" transform="rotate(-38 1122 524)" fill="#ffffff"/>
<ellipse cx="1051" cy="569" rx="3.0" ry="1.4" transform="rotate(-8 1051 569)" fill="#ffffff"/>
<ellipse cx="1203" cy="511" rx="10.2" ry="0.8" transform="rotate(-54 1203 511)" fill="#ffffff"/>
<ellipse cx="1177" cy="422" rx="8.4" ry="0.7" transform="rotate(-59 1177 422)" fill="#ffffff"/>
<ellipse cx="1163" cy="472" rx="5.3" ry="0.7" transform="rotate(-60 1163 472)" fill="#ffffff"/>
<path d="M1250.2 478.7C1249.5 478.8 1248.3 479.3 1247.9 478.1C1247.5 476.9 1247.4 472.6 1247.8 471.4C1248.2 470.2 1249.7 470.1 1250.5 471.1C1251.3 472.1 1252.5 476.2 1252.4 477.5C1252.4 478.8 1251.0 478.6 1250.2 478.7Z" fill="#ffffff" />
<path d="M1111.6 478.8C1111.2 479.4 1109.9 480.0 1109.3 479.9C1108.7 479.8 1107.8 478.9 1107.7 478.4C1107.6 477.9 1108.2 477.1 1108.9 476.7C1109.6 476.3 1111.5 475.6 1111.9 476.0C1112.4 476.4 1112.0 478.2 1111.6 478.8Z" fill="#ffffff" />
<ellipse cx="867" cy="657" rx="5.7" ry="0.9" transform="rotate(-5 867 657)" fill="#ffffff"/>
<ellipse cx="1073" cy="494" rx="3.2" ry="1.5" transform="rotate(-26 1073 494)" fill="#ffffff"/>
<path d="M914.3 642.4C913.7 642.1 913.2 640.3 913.3 639.7C913.4 639.1 914.2 639.1 915.1 639.0C916.0 638.9 918.6 638.5 918.9 639.0C919.2 639.5 917.8 641.1 917.0 641.7C916.2 642.3 914.9 642.7 914.3 642.4Z" fill="#ffffff" />
<ellipse cx="976" cy="585" rx="4.4" ry="1.0" transform="rotate(-56 976 585)" fill="#ffffff"/>
<ellipse cx="1231" cy="386" rx="8.2" ry="1.0" transform="rotate(-8 1231 386)" fill="#ffffff"/>
<ellipse cx="1414" cy="402" rx="10.4" ry="1.0" transform="rotate(-36 1414 402)" fill="#ffffff"/>
<path d="M1463.3 405.6C1462.8 406.2 1461.4 405.1 1460.6 404.2C1459.8 403.3 1458.1 401.1 1458.3 400.4C1458.5 399.7 1460.7 399.8 1461.6 399.9C1462.5 400.0 1463.2 399.9 1463.5 400.8C1463.8 401.8 1463.8 405.0 1463.3 405.6Z" fill="#ffffff" />
<ellipse cx="1404" cy="384" rx="10.3" ry="1.1" transform="rotate(-6 1404 384)" fill="#ffffff"/>
<path d="M1115.6 532.5C1114.8 533.0 1110.9 527.7 1109.7 525.5C1108.5 523.3 1107.8 521.2 1108.3 519.5C1108.8 517.8 1111.5 514.8 1112.5 515.3C1113.5 515.8 1114.1 519.8 1114.6 522.7C1115.1 525.6 1116.4 532.0 1115.6 532.5Z" fill="#ffffff" />
<ellipse cx="1338" cy="448" rx="7.3" ry="1.2" transform="rotate(-36 1338 448)" fill="#ffffff"/>
<path d="M1007.3 590.3C1006.5 591.4 1003.8 594.0 1002.5 593.2C1001.2 592.4 999.7 587.2 999.7 585.7C999.8 584.2 1001.6 584.2 1002.8 584.3C1004.0 584.4 1006.4 585.3 1007.1 586.3C1007.9 587.3 1008.1 589.1 1007.3 590.3Z" fill="#ffffff" />
<ellipse cx="1221" cy="438" rx="8.9" ry="0.5" transform="rotate(6 1221 438)" fill="#ffffff"/>
<path d="M1006.7 597.1C1005.9 596.5 1006.1 592.7 1006.8 591.6C1007.5 590.5 1010.2 590.3 1011.1 590.4C1012.0 590.5 1012.3 591.4 1012.4 592.2C1012.5 593.0 1012.8 594.2 1011.9 595.0C1011.0 595.8 1007.6 597.7 1006.7 597.1Z" fill="#ffffff" />
<ellipse cx="1453" cy="427" rx="10.3" ry="1.6" transform="rotate(-9 1453 427)" fill="#ffffff"/>
<ellipse cx="1145" cy="460" rx="2.4" ry="1.0" transform="rotate(6 1145 460)" fill="#ffffff"/>
<ellipse cx="1378" cy="366" rx="3.9" ry="0.6" transform="rotate(-11 1378 366)" fill="#ffffff"/>
<ellipse cx="1351" cy="377" rx="10.8" ry="1.4" transform="rotate(-64 1351 377)" fill="#ffffff"/>
<ellipse cx="942" cy="583" rx="5.9" ry="0.7" transform="rotate(-63 942 583)" fill="#ffffff"/>
<path d="M1143.9 533.6C1143.8 534.2 1143.9 535.5 1143.3 535.5C1142.7 535.5 1140.5 534.2 1140.2 533.7C1139.9 533.2 1140.8 532.8 1141.5 532.4C1142.2 532.0 1143.8 531.4 1144.2 531.6C1144.6 531.8 1144.1 533.0 1143.9 533.6Z" fill="#ffffff" />
<ellipse cx="876" cy="661" rx="3.8" ry="1.2" transform="rotate(-2 876 661)" fill="#ffffff"/>
<path d="M1139.7 550.2C1138.6 551.3 1131.8 548.0 1129.4 545.5C1127.0 543.0 1125.2 537.2 1125.4 535.5C1125.7 533.8 1129.1 534.6 1130.9 535.2C1132.7 535.8 1134.5 536.5 1136.0 539.0C1137.5 541.5 1140.8 549.1 1139.7 550.2Z" fill="#ffffff" />
<ellipse cx="1206" cy="477" rx="4.4" ry="0.5" transform="rotate(72 1206 477)" fill="#ffffff"/>
<ellipse cx="1113" cy="477" rx="4.2" ry="1.6" transform="rotate(-23 1113 477)" fill="#ffffff"/>
<ellipse cx="1088" cy="530" rx="4.6" ry="1.0" transform="rotate(-36 1088 530)" fill="#ffffff"/>
<ellipse cx="1220" cy="395" rx="8.4" ry="0.5" transform="rotate(69 1220 395)" fill="#ffffff"/>
<ellipse cx="1460" cy="394" rx="3.1" ry="1.5" transform="rotate(-29 1460 394)" fill="#ffffff"/>
<ellipse cx="1392" cy="417" rx="4.2" ry="1.1" transform="rotate(-13 1392 417)" fill="#ffffff"/>
<path d="M1384.0 411.8C1383.4 411.3 1384.3 406.7 1385.0 405.1C1385.7 403.5 1387.3 402.4 1388.0 402.3C1388.7 402.2 1389.3 403.4 1389.4 404.4C1389.5 405.4 1389.3 407.0 1388.4 408.2C1387.5 409.4 1384.6 412.3 1384.0 411.8Z" fill="#ffffff" />
<ellipse cx="894" cy="621" rx="2.2" ry="1.0" transform="rotate(-61 894 621)" fill="#ffffff"/>
<ellipse cx="1318" cy="389" rx="10.8" ry="1.5" transform="rotate(-45 1318 389)" fill="#ffffff"/>
<path d="M954.3 639.4C953.9 638.8 954.5 637.5 955.9 636.5C957.3 635.5 961.5 633.5 962.8 633.7C964.1 633.9 964.6 636.6 963.8 637.7C963.0 638.8 959.8 639.9 958.2 640.2C956.6 640.5 954.7 640.0 954.3 639.4Z" fill="#ffffff" />
<ellipse cx="1205" cy="414" rx="7.0" ry="1.1" transform="rotate(-56 1205 414)" fill="#ffffff"/>
<ellipse cx="1130" cy="493" rx="3.7" ry="0.9" transform="rotate(-27 1130 493)" fill="#ffffff"/>
<ellipse cx="1141" cy="449" rx="6.7" ry="0.9" transform="rotate(-61 1141 449)" fill="#ffffff"/>
<ellipse cx="1300" cy="471" rx="4.1" ry="1.2" transform="rotate(50 1300 471)" fill="#ffffff"/>
<ellipse cx="995" cy="603" rx="4.9" ry="0.6" transform="rotate(-22 995 603)" fill="#ffffff"/>
<ellipse cx="1241" cy="412" rx="8.9" ry="0.9" transform="rotate(-22 1241 412)" fill="#ffffff"/>
<ellipse cx="1280" cy="434" rx="7.0" ry="0.7" transform="rotate(-52 1280 434)" fill="#ffffff"/>
<ellipse cx="1149" cy="527" rx="8.1" ry="1.0" transform="rotate(-4 1149 527)" fill="#ffffff"/>
<path d="M1275.7 411.9C1275.5 412.5 1274.5 413.5 1273.8 413.6C1273.1 413.8 1272.2 413.3 1271.8 412.8C1271.4 412.3 1271.0 410.8 1271.5 410.4C1272.0 409.9 1274.0 409.9 1274.7 410.1C1275.4 410.4 1275.9 411.3 1275.7 411.9Z" fill="#ffffff" />
<ellipse cx="1267" cy="365" rx="3.2" ry="1.5" transform="rotate(78 1267 365)" fill="#ffffff"/>
<ellipse cx="1006" cy="593" rx="10.7" ry="1.3" transform="rotate(-67 1006 593)" fill="#ffffff"/>
<path d="M1349.5 443.3C1348.9 443.4 1346.5 442.7 1346.0 441.8C1345.5 440.9 1345.9 438.9 1346.2 438.2C1346.5 437.5 1347.0 437.4 1347.6 437.9C1348.2 438.4 1349.3 440.2 1349.6 441.1C1349.9 442.0 1350.1 443.2 1349.5 443.3Z" fill="#ffffff" />
<ellipse cx="1246" cy="498" rx="2.1" ry="0.7" transform="rotate(53 1246 498)" fill="#ffffff"/>
<path d="M1380.1 393.6C1379.7 394.2 1377.6 393.8 1376.0 392.7C1374.4 391.6 1370.5 388.3 1370.3 387.2C1370.1 386.1 1373.4 385.5 1374.8 385.8C1376.2 386.1 1377.5 387.8 1378.4 389.1C1379.3 390.4 1380.5 393.0 1380.1 393.6Z" fill="#ffffff" />
<ellipse cx="1034" cy="508" rx="6.0" ry="0.6" transform="rotate(-49 1034 508)" fill="#ffffff"/>
<ellipse cx="1016" cy="530" rx="7.1" ry="0.6" transform="rotate(-21 1016 530)" fill="#ffffff"/>
<ellipse cx="1228" cy="382" rx="10.4" ry="1.5" transform="rotate(-28 1228 382)" fill="#ffffff"/>
<ellipse cx="1292" cy="460" rx="8.6" ry="1.1" transform="rotate(-39 1292 460)" fill="#ffffff"/>
<ellipse cx="1052" cy="582" rx="6.0" ry="0.9" transform="rotate(-47 1052 582)" fill="#ffffff"/>
<ellipse cx="947" cy="579" rx="7.7" ry="1.2" transform="rotate(-38 947 579)" fill="#ffffff"/>
<path d="M1256.4 455.3C1255.5 455.5 1253.8 453.5 1253.6 452.5C1253.4 451.5 1254.8 450.0 1255.4 449.3C1256.0 448.6 1256.4 448.1 1257.0 448.5C1257.6 448.9 1259.2 450.4 1259.1 451.5C1259.0 452.6 1257.3 455.1 1256.4 455.3Z" fill="#ffffff" />
<ellipse cx="1173" cy="426" rx="4.0" ry="0.8" transform="rotate(-59 1173 426)" fill="#ffffff"/>
<ellipse cx="1113" cy="487" rx="7.2" ry="0.8" transform="rotate(0 1113 487)" fill="#ffffff"/>
<ellipse cx="1204" cy="455" rx="4.1" ry="0.6" transform="rotate(60 1204 455)" fill="#ffffff"/>
<ellipse cx="1154" cy="518" rx="8.2" ry="0.7" transform="rotate(-11 1154 518)" fill="#ffffff"/>
<ellipse cx="1402" cy="441" rx="3.7" ry="1.3" transform="rotate(8 1402 441)" fill="#ffffff"/>
<ellipse cx="985" cy="641" rx="5.5" ry="1.3" transform="rotate(-67 985 641)" fill="#ffffff"/>
<ellipse cx="1256" cy="383" rx="9.6" ry="1.6" transform="rotate(75 1256 383)" fill="#ffffff"/>
<path d="M1175.9 435.3C1174.4 434.9 1172.5 433.4 1172.2 431.3C1171.9 429.2 1172.7 424.6 1174.2 422.9C1175.7 421.2 1180.2 419.3 1181.4 421.1C1182.6 422.9 1182.3 431.3 1181.4 433.7C1180.5 436.1 1177.4 435.7 1175.9 435.3Z" fill="#ffffff" />
<path d="M1135.3 446.0C1134.2 444.8 1133.0 441.4 1134.6 439.7C1136.2 438.0 1143.1 435.7 1144.8 436.0C1146.5 436.3 1145.1 439.9 1144.5 441.7C1143.9 443.5 1142.5 446.3 1141.0 447.0C1139.5 447.7 1136.4 447.2 1135.3 446.0Z" fill="#ffffff" />
<ellipse cx="1188" cy="509" rx="3.1" ry="0.8" transform="rotate(-3 1188 509)" fill="#ffffff"/>
<path d="M1105.6 550.7C1105.6 551.2 1104.7 552.0 1104.0 552.0C1103.3 552.0 1101.8 551.4 1101.5 550.9C1101.2 550.4 1101.5 549.5 1102.0 549.2C1102.5 548.9 1103.6 549.0 1104.2 549.2C1104.8 549.5 1105.6 550.2 1105.6 550.7Z" fill="#ffffff" />
<ellipse cx="1181" cy="472" rx="3.3" ry="1.3" transform="rotate(-62 1181 472)" fill="#ffffff"/>
<ellipse cx="1379" cy="383" rx="8.4" ry="1.5" transform="rotate(-0 1379 383)" fill="#ffffff"/>
<ellipse cx="919" cy="608" rx="3.5" ry="1.0" transform="rotate(5 919 608)" fill="#ffffff"/>
<path d="M1390.9 347.7C1390.3 348.3 1389.4 348.2 1389.0 348.0C1388.6 347.8 1388.3 346.9 1388.3 346.3C1388.3 345.7 1388.1 344.5 1388.8 344.2C1389.5 343.9 1392.1 343.9 1392.4 344.5C1392.8 345.1 1391.5 347.1 1390.9 347.7Z" fill="#ffffff" />
<path d="M1305.5 372.2C1305.2 373.5 1303.5 376.7 1302.4 376.8C1301.4 376.9 1299.4 374.1 1299.2 373.0C1299.0 371.9 1300.6 370.7 1301.4 370.0C1302.2 369.3 1303.2 368.6 1303.9 369.0C1304.6 369.4 1305.8 370.9 1305.5 372.2Z" fill="#ffffff" />
<path d="M990.7 621.8C989.6 621.5 989.1 618.8 989.2 616.8C989.3 614.8 990.5 610.3 991.3 610.0C992.0 609.7 992.9 613.4 993.7 614.8C994.5 616.2 996.4 617.4 995.9 618.6C995.4 619.8 991.8 622.1 990.7 621.8Z" fill="#ffffff" />
<path d="M1342.3 442.8C1341.3 442.6 1339.4 440.2 1339.5 439.3C1339.6 438.4 1341.9 437.7 1342.7 437.3C1343.5 436.9 1344.1 436.7 1344.6 437.2C1345.1 437.7 1345.9 439.5 1345.5 440.4C1345.1 441.3 1343.3 443.0 1342.3 442.8Z" fill="#ffffff" />
<ellipse cx="960" cy="606" rx="2.5" ry="1.5" transform="rotate(4 960 606)" fill="#ffffff"/>
<path d="M1177.9 533.8C1176.5 535.2 1171.6 536.6 1170.2 535.8C1168.8 535.0 1169.3 530.7 1169.5 529.2C1169.7 527.7 1169.7 527.1 1171.2 526.8C1172.7 526.5 1177.4 526.2 1178.5 527.4C1179.6 528.6 1179.3 532.4 1177.9 533.8Z" fill="#ffffff" />
<ellipse cx="1086" cy="471" rx="4.5" ry="0.7" transform="rotate(-18 1086 471)" fill="#ffffff"/>
<path d="M1168.0 488.5C1167.2 489.4 1164.4 489.2 1163.3 488.5C1162.2 487.8 1160.9 485.3 1161.2 484.4C1161.5 483.4 1163.8 483.0 1165.0 482.8C1166.2 482.6 1167.6 482.4 1168.1 483.3C1168.6 484.2 1168.8 487.6 1168.0 488.5Z" fill="#ffffff" />
<ellipse cx="1214" cy="406" rx="9.8" ry="0.8" transform="rotate(66 1214 406)" fill="#ffffff"/>
<ellipse cx="1345" cy="338" rx="10.9" ry="0.7" transform="rotate(-6 1345 338)" fill="#ffffff"/>
<path d="M1309.1 342.9C1308.7 341.7 1309.9 338.8 1310.8 338.4C1311.7 338.0 1313.4 339.4 1314.2 340.4C1315.0 341.3 1315.9 343.2 1315.7 344.1C1315.5 345.0 1314.2 345.7 1313.1 345.5C1312.0 345.3 1309.5 344.1 1309.1 342.9Z" fill="#ffffff" />
<ellipse cx="941" cy="562" rx="2.7" ry="1.2" transform="rotate(-61 941 562)" fill="#ffffff"/>
<path d="M912.1 592.1C912.1 592.7 912.4 594.2 911.9 594.1C911.4 594.0 909.5 591.8 909.1 591.2C908.7 590.6 908.8 590.7 909.3 590.6C909.8 590.5 911.3 590.5 911.8 590.7C912.3 591.0 912.1 591.5 912.1 592.1Z" fill="#ffffff" />
<ellipse cx="913" cy="581" rx="3.8" ry="1.6" transform="rotate(-49 913 581)" fill="#ffffff"/>
<ellipse cx="1341" cy="403" rx="7.4" ry="0.9" transform="rotate(-65 1341 403)" fill="#ffffff"/>
<path d="M1218.7 425.7C1217.8 426.8 1213.6 426.5 1212.0 425.9C1210.4 425.3 1208.9 423.1 1209.1 422.1C1209.3 421.1 1211.7 420.4 1213.1 419.9C1214.5 419.4 1216.5 418.3 1217.4 419.3C1218.3 420.3 1219.6 424.6 1218.7 425.7Z" fill="#ffffff" />
<ellipse cx="1206" cy="500" rx="3.7" ry="0.7" transform="rotate(62 1206 500)" fill="#ffffff"/>
<path d="M1251.2 485.0C1250.9 485.6 1250.3 487.2 1249.6 486.9C1248.9 486.5 1247.0 483.9 1247.0 482.9C1247.0 481.9 1248.7 480.8 1249.4 480.8C1250.2 480.8 1251.2 482.3 1251.5 483.0C1251.8 483.7 1251.5 484.4 1251.2 485.0Z" fill="#ffffff" />
<ellipse cx="1204" cy="447" rx="10.8" ry="1.0" transform="rotate(75 1204 447)" fill="#ffffff"/>
<path d="M1385.6 400.3C1385.1 399.6 1385.7 396.5 1386.4 395.6C1387.2 394.7 1388.9 394.7 1390.1 394.7C1391.3 394.7 1393.8 394.7 1393.6 395.6C1393.4 396.5 1390.4 399.1 1389.1 399.9C1387.8 400.7 1386.0 401.0 1385.6 400.3Z" fill="#ffffff" />
<ellipse cx="1136" cy="484" rx="3.7" ry="0.7" transform="rotate(-16 1136 484)" fill="#ffffff"/>
<ellipse cx="1022" cy="598" rx="5.4" ry="1.2" transform="rotate(-10 1022 598)" fill="#ffffff"/>
<ellipse cx="1219" cy="465" rx="8.0" ry="1.5" transform="rotate(-17 1219 465)" fill="#ffffff"/>
<ellipse cx="1462" cy="409" rx="9.4" ry="1.2" transform="rotate(-70 1462 409)" fill="#ffffff"/>
<ellipse cx="1086" cy="564" rx="2.5" ry="1.0" transform="rotate(-66 1086 564)" fill="#ffffff"/>
<ellipse cx="1470" cy="385" rx="5.2" ry="1.0" transform="rotate(-59 1470 385)" fill="#ffffff"/>
<ellipse cx="1360" cy="368" rx="4.4" ry="1.2" transform="rotate(-61 1360 368)" fill="#ffffff"/>
<path d="M869.6 662.4C869.4 662.8 865.8 661.4 864.6 660.9C863.4 660.4 862.8 660.4 862.4 659.5C862.0 658.6 862.0 655.4 862.5 655.3C863.0 655.2 864.5 657.5 865.7 658.7C866.9 659.9 869.8 662.0 869.6 662.4Z" fill="#ffffff" />
<path d="M1235.0 391.5C1234.1 390.4 1236.0 386.2 1237.8 384.0C1239.6 381.8 1243.1 378.7 1245.8 378.3C1248.5 377.9 1254.3 379.4 1253.9 381.4C1253.5 383.4 1246.6 388.7 1243.4 390.4C1240.2 392.1 1235.9 392.6 1235.0 391.5Z" fill="#ffffff" />
<ellipse cx="1245" cy="363" rx="7.2" ry="1.3" transform="rotate(71 1245 363)" fill="#ffffff"/>
<path d="M1307.3 451.9C1306.7 451.4 1306.6 449.2 1306.9 448.3C1307.2 447.4 1308.5 446.3 1309.1 446.3C1309.7 446.3 1310.2 447.6 1310.4 448.4C1310.6 449.2 1310.8 450.7 1310.3 451.3C1309.8 451.9 1307.9 452.4 1307.3 451.9Z" fill="#ffffff" />
<ellipse cx="1170" cy="470" rx="8.8" ry="1.3" transform="rotate(-65 1170 470)" fill="#ffffff"/>
<ellipse cx="1395" cy="358" rx="4.7" ry="1.4" transform="rotate(6 1395 358)" fill="#ffffff"/>
<ellipse cx="1393" cy="404" rx="9.7" ry="0.5" transform="rotate(-12 1393 404)" fill="#ffffff"/>
<ellipse cx="1203" cy="432" rx="9.8" ry="1.1" transform="rotate(71 1203 432)" fill="#ffffff"/>
<ellipse cx="1106" cy="520" rx="8.2" ry="0.6" transform="rotate(-50 1106 520)" fill="#ffffff"/>
<ellipse cx="1309" cy="461" rx="8.8" ry="1.5" transform="rotate(-63 1309 461)" fill="#ffffff"/>
<path d="M1095.5 540.9C1094.9 540.6 1095.0 536.9 1095.4 535.6C1095.8 534.3 1096.8 533.6 1097.7 532.9C1098.6 532.2 1100.7 530.9 1100.9 531.6C1101.1 532.3 1099.9 535.6 1099.0 537.1C1098.1 538.6 1096.1 541.1 1095.5 540.9Z" fill="#ffffff" />
<path d="M1312.4 451.7C1311.4 452.0 1310.0 451.8 1309.5 450.8C1309.0 449.8 1309.3 447.0 1309.6 445.6C1309.9 444.2 1310.1 442.0 1311.1 442.6C1312.1 443.2 1315.5 447.7 1315.7 449.2C1315.9 450.7 1313.4 451.4 1312.4 451.7Z" fill="#ffffff" />
<ellipse cx="1054" cy="522" rx="2.0" ry="0.6" transform="rotate(-52 1054 522)" fill="#ffffff"/>
<ellipse cx="1404" cy="383" rx="7.0" ry="1.3" transform="rotate(-18 1404 383)" fill="#ffffff"/>
<ellipse cx="1171" cy="441" rx="9.8" ry="0.6" transform="rotate(-37 1171 441)" fill="#ffffff"/>
<ellipse cx="1280" cy="411" rx="10.1" ry="1.2" transform="rotate(56 1280 411)" fill="#ffffff"/>
<ellipse cx="1068" cy="506" rx="4.2" ry="0.8" transform="rotate(-54 1068 506)" fill="#ffffff"/>
<ellipse cx="1019" cy="550" rx="10.2" ry="1.1" transform="rotate(-23 1019 550)" fill="#ffffff"/>
<ellipse cx="1136" cy="548" rx="3.4" ry="0.7" transform="rotate(8 1136 548)" fill="#ffffff"/>
<path d="M1065.1 575.9C1064.3 574.9 1065.6 569.1 1067.5 567.3C1069.4 565.4 1074.2 564.3 1076.3 564.8C1078.3 565.3 1080.5 568.9 1079.8 570.4C1079.1 571.9 1074.8 572.6 1072.3 573.5C1069.8 574.4 1065.9 576.9 1065.1 575.9Z" fill="#ffffff" />
<ellipse cx="1454" cy="398" rx="9.7" ry="1.1" transform="rotate(4 1454 398)" fill="#ffffff"/>
<ellipse cx="1298" cy="356" rx="4.0" ry="1.0" transform="rotate(76 1298 356)" fill="#ffffff"/>
<path d="M1412.2 383.0C1411.2 381.6 1413.6 379.0 1415.5 378.2C1417.4 377.4 1422.3 377.4 1423.6 378.0C1424.9 378.6 1423.6 380.1 1423.2 381.6C1422.8 383.1 1423.0 386.7 1421.2 386.9C1419.4 387.1 1413.2 384.4 1412.2 383.0Z" fill="#ffffff" />
<ellipse cx="1024" cy="602" rx="8.4" ry="0.8" transform="rotate(-63 1024 602)" fill="#ffffff"/>
<ellipse cx="1266" cy="410" rx="6.2" ry="1.0" transform="rotate(-14 1266 410)" fill="#ffffff"/>
<ellipse cx="1110" cy="490" rx="3.2" ry="0.8" transform="rotate(-22 1110 490)" fill="#ffffff"/>
<ellipse cx="1353" cy="396" rx="2.3" ry="1.3" transform="rotate(-53 1353 396)" fill="#ffffff"/>
<ellipse cx="952" cy="563" rx="3.4" ry="0.7" transform="rotate(5 952 563)" fill="#ffffff"/>
<ellipse cx="1421" cy="348" rx="5.7" ry="0.5" transform="rotate(-50 1421 348)" fill="#ffffff"/>
<ellipse cx="1462" cy="423" rx="10.5" ry="0.7" transform="rotate(-60 1462 423)" fill="#ffffff"/>
<ellipse cx="1134" cy="435" rx="7.2" ry="1.5" transform="rotate(-37 1134 435)" fill="#ffffff"/>
<path d="M1028.2 589.4C1027.9 589.0 1028.1 588.1 1028.6 587.6C1029.0 587.1 1030.2 586.4 1030.9 586.5C1031.6 586.6 1033.0 587.5 1032.9 588.1C1032.8 588.7 1031.2 589.9 1030.4 590.1C1029.6 590.3 1028.5 589.8 1028.2 589.4Z" fill="#ffffff" />
<path d="M1234.5 453.8C1234.3 454.5 1232.4 455.0 1231.5 454.9C1230.6 454.8 1229.3 453.9 1228.9 453.4C1228.5 452.9 1228.6 452.1 1229.2 451.7C1229.8 451.3 1231.5 450.5 1232.4 450.9C1233.3 451.2 1234.7 453.1 1234.5 453.8Z" fill="#ffffff" />
<path d="M1126.5 453.2C1126.4 452.7 1127.5 451.8 1128.6 451.4C1129.7 451.0 1132.7 450.8 1133.2 451.1C1133.8 451.4 1132.6 452.4 1131.9 453.0C1131.2 453.6 1130.0 454.4 1129.1 454.4C1128.2 454.4 1126.6 453.7 1126.5 453.2Z" fill="#ffffff" />
<ellipse cx="1089" cy="567" rx="4.3" ry="1.5" transform="rotate(-34 1089 567)" fill="#ffffff"/>
<path d="M1417.7 403.6C1416.9 404.1 1414.2 404.1 1413.4 403.4C1412.6 402.7 1412.6 400.3 1412.9 399.3C1413.2 398.3 1414.4 397.1 1415.3 397.3C1416.2 397.5 1417.9 399.6 1418.3 400.7C1418.7 401.8 1418.5 403.2 1417.7 403.6Z" fill="#ffffff" />
<path d="M994.1 612.3C993.6 612.6 993.4 611.6 992.5 610.5C991.6 609.4 989.1 606.7 989.0 605.7C988.9 604.8 990.7 604.3 991.7 604.8C992.7 605.3 994.8 607.4 995.2 608.6C995.6 609.9 994.6 612.0 994.1 612.3Z" fill="#ffffff" />
<ellipse cx="1410" cy="412" rx="4.0" ry="1.2" transform="rotate(-38 1410 412)" fill="#ffffff"/>
<ellipse cx="1208" cy="475" rx="2.8" ry="1.6" transform="rotate(60 1208 475)" fill="#ffffff"/>
<path d="M1386.4 428.8C1385.3 428.5 1383.0 426.8 1382.8 425.8C1382.6 424.8 1384.3 423.0 1385.3 422.9C1386.3 422.8 1387.9 424.3 1388.6 425.1C1389.3 425.9 1389.9 427.0 1389.5 427.6C1389.1 428.2 1387.5 429.1 1386.4 428.8Z" fill="#ffffff" />
<ellipse cx="945" cy="625" rx="4.0" ry="1.4" transform="rotate(7 945 625)" fill="#ffffff"/>
<path d="M1130.6 453.1C1130.8 454.1 1131.0 456.6 1129.9 456.4C1128.8 456.2 1125.4 453.5 1124.1 451.7C1122.8 449.9 1121.1 445.8 1121.9 445.6C1122.7 445.4 1127.3 449.2 1128.8 450.5C1130.2 451.8 1130.4 452.1 1130.6 453.1Z" fill="#ffffff" />
<ellipse cx="1289" cy="353" rx="5.2" ry="0.9" transform="rotate(52 1289 353)" fill="#ffffff"/>
<ellipse cx="1031" cy="525" rx="10.1" ry="0.5" transform="rotate(-46 1031 525)" fill="#ffffff"/>
<ellipse cx="968" cy="621" rx="9.8" ry="0.9" transform="rotate(-60 968 621)" fill="#ffffff"/>
<ellipse cx="1203" cy="392" rx="6.7" ry="1.0" transform="rotate(70 1203 392)" fill="#ffffff"/>
<ellipse cx="1290" cy="366" rx="4.8" ry="1.5" transform="rotate(71 1290 366)" fill="#ffffff"/>
<ellipse cx="968" cy="576" rx="9.8" ry="1.4" transform="rotate(-17 968 576)" fill="#ffffff"/>
<ellipse cx="1411" cy="338" rx="3.3" ry="1.2" transform="rotate(-30 1411 338)" fill="#ffffff"/>
<ellipse cx="1090" cy="503" rx="8.3" ry="1.3" transform="rotate(-37 1090 503)" fill="#ffffff"/>
<ellipse cx="944" cy="556" rx="2.9" ry="1.1" transform="rotate(-24 944 556)" fill="#ffffff"/>
<ellipse cx="1306" cy="416" rx="3.1" ry="1.4" transform="rotate(-21 1306 416)" fill="#ffffff"/>
<ellipse cx="1474" cy="408" rx="10.9" ry="1.5" transform="rotate(-39 1474 408)" fill="#ffffff"/>
<ellipse cx="1093" cy="464" rx="2.2" ry="1.5" transform="rotate(6 1093 464)" fill="#ffffff"/>
<ellipse cx="1075" cy="494" rx="10.3" ry="1.3" transform="rotate(-47 1075 494)" fill="#ffffff"/>
<ellipse cx="1392" cy="335" rx="6.4" ry="1.4" transform="rotate(-55 1392 335)" fill="#ffffff"/>
<ellipse cx="1342" cy="338" rx="6.2" ry="1.3" transform="rotate(-28 1342 338)" fill="#ffffff"/>
<ellipse cx="1075" cy="524" rx="9.9" ry="0.8" transform="rotate(-56 1075 524)" fill="#ffffff"/>
<ellipse cx="1400" cy="395" rx="7.5" ry="0.8" transform="rotate(-53 1400 395)" fill="#ffffff"/>
<ellipse cx="1402" cy="348" rx="5.7" ry="1.0" transform="rotate(-0 1402 348)" fill="#ffffff"/>
<path d="M976.3 615.8C975.9 616.7 970.4 616.6 968.1 616.4C965.9 616.1 963.4 615.2 962.8 614.3C962.2 613.4 963.3 611.7 964.6 611.1C965.9 610.5 968.8 610.1 970.7 610.9C972.7 611.7 976.7 614.9 976.3 615.8Z" fill="#ffffff" />
<path d="M1287.9 457.3C1287.6 457.7 1286.3 458.0 1285.4 457.7C1284.5 457.4 1282.9 456.3 1282.4 455.3C1281.9 454.3 1281.8 451.7 1282.6 451.7C1283.4 451.7 1286.2 454.2 1287.1 455.1C1288.0 456.0 1288.2 456.9 1287.9 457.3Z" fill="#ffffff" />
<ellipse cx="1334" cy="337" rx="2.7" ry="0.7" transform="rotate(-26 1334 337)" fill="#ffffff"/>
<path d="M916.6 605.1C915.6 605.6 914.3 604.3 913.0 603.4C911.7 602.5 908.3 600.9 908.8 599.5C909.3 598.1 914.5 595.1 916.2 595.3C917.9 595.4 918.7 598.8 918.8 600.4C918.9 602.0 917.6 604.6 916.6 605.1Z" fill="#ffffff" />
<path d="M1306.3 357.6C1305.6 358.3 1304.8 358.3 1303.1 357.8C1301.4 357.3 1296.6 355.6 1296.3 354.5C1296.0 353.4 1299.2 351.2 1301.1 351.0C1303.0 350.8 1306.6 352.3 1307.5 353.4C1308.4 354.5 1307.0 356.9 1306.3 357.6Z" fill="#ffffff" />
<ellipse cx="1222" cy="423" rx="7.5" ry="1.5" transform="rotate(-31 1222 423)" fill="#ffffff"/>
<ellipse cx="1015" cy="553" rx="6.5" ry="1.4" transform="rotate(7 1015 553)" fill="#ffffff"/>
<path d="M1160.7 534.5C1159.9 534.9 1157.5 534.5 1156.9 533.6C1156.3 532.7 1156.3 529.9 1157.0 528.9C1157.7 527.9 1160.1 527.5 1160.9 527.9C1161.7 528.3 1162.0 530.0 1162.0 531.1C1162.0 532.2 1161.5 534.1 1160.7 534.5Z" fill="#ffffff" />
<ellipse cx="1222" cy="500" rx="6.4" ry="1.6" transform="rotate(-20 1222 500)" fill="#ffffff"/>
<ellipse cx="952" cy="555" rx="4.7" ry="1.0" transform="rotate(-56 952 555)" fill="#ffffff"/>
<path d="M1358.3 432.0C1357.8 431.8 1357.5 429.1 1357.8 428.2C1358.0 427.3 1359.2 426.6 1359.8 426.5C1360.3 426.4 1360.9 427.1 1361.1 427.6C1361.3 428.1 1361.6 429.0 1361.1 429.7C1360.6 430.4 1358.8 432.2 1358.3 432.0Z" fill="#ffffff" />
<ellipse cx="1119" cy="556" rx="8.1" ry="1.2" transform="rotate(-32 1119 556)" fill="#ffffff"/>
<ellipse cx="1392" cy="361" rx="2.1" ry="1.5" transform="rotate(0 1392 361)" fill="#ffffff"/>
<ellipse cx="1281" cy="358" rx="6.1" ry="0.8" transform="rotate(55 1281 358)" fill="#ffffff"/>
<path d="M1027.1 563.4C1026.6 563.0 1027.5 559.0 1027.7 557.6C1028.0 556.2 1028.0 555.2 1028.6 554.9C1029.1 554.5 1030.7 554.6 1031.0 555.5C1031.3 556.4 1031.2 558.9 1030.6 560.2C1029.9 561.5 1027.6 563.8 1027.1 563.4Z" fill="#ffffff" />
<ellipse cx="919" cy="600" rx="5.3" ry="1.0" transform="rotate(-19 919 600)" fill="#ffffff"/>
<ellipse cx="1234" cy="483" rx="5.1" ry="1.4" transform="rotate(71 1234 483)" fill="#ffffff"/>
<ellipse cx="1422" cy="409" rx="6.8" ry="1.3" transform="rotate(-24 1422 409)" fill="#ffffff"/>
<path d="M1278.1 441.3C1277.9 442.3 1273.0 443.8 1271.4 443.5C1269.8 443.2 1268.6 440.6 1268.3 439.7C1268.0 438.8 1268.7 438.3 1269.4 438.0C1270.1 437.7 1271.0 437.1 1272.5 437.7C1274.0 438.2 1278.3 440.3 1278.1 441.3Z" fill="#ffffff" />
<ellipse cx="892" cy="645" rx="3.8" ry="1.5" transform="rotate(-38 892 645)" fill="#ffffff"/>
<ellipse cx="1166" cy="527" rx="10.9" ry="0.9" transform="rotate(-6 1166 527)" fill="#ffffff"/>
<path d="M1155.8 454.1C1154.5 453.7 1152.5 451.8 1152.5 450.5C1152.5 449.2 1154.2 447.3 1155.7 446.5C1157.2 445.7 1161.0 444.7 1161.8 445.8C1162.6 446.9 1161.4 451.5 1160.4 452.9C1159.4 454.3 1157.1 454.5 1155.8 454.1Z" fill="#ffffff" />
<path d="M1263.9 409.8C1263.4 411.0 1259.0 410.2 1257.2 408.6C1255.4 407.0 1253.6 401.8 1253.3 400.1C1253.0 398.4 1254.5 398.1 1255.6 398.4C1256.7 398.7 1258.6 399.8 1260.0 401.7C1261.4 403.6 1264.4 408.6 1263.9 409.8Z" fill="#ffffff" />
<path d="M1358.6 387.0C1358.5 386.4 1360.7 384.2 1361.9 383.2C1363.2 382.1 1365.1 380.6 1366.1 380.7C1367.1 380.8 1368.4 383.0 1367.8 384.0C1367.2 385.0 1363.7 386.0 1362.2 386.5C1360.7 387.0 1358.6 387.6 1358.6 387.0Z" fill="#ffffff" />
<ellipse cx="1301" cy="421" rx="6.2" ry="0.6" transform="rotate(-33 1301 421)" fill="#ffffff"/>
<ellipse cx="1106" cy="568" rx="8.6" ry="0.8" transform="rotate(-5 1106 568)" fill="#ffffff"/>
<ellipse cx="1175" cy="465" rx="7.3" ry="0.6" transform="rotate(-57 1175 465)" fill="#ffffff"/>
<path d="M1384.4 410.2C1383.8 410.3 1382.8 408.6 1382.5 407.7C1382.2 406.8 1382.4 405.4 1382.7 404.6C1383.0 403.9 1384.1 402.8 1384.6 403.2C1385.1 403.6 1385.9 406.1 1385.9 407.3C1385.9 408.5 1385.0 410.1 1384.4 410.2Z" fill="#ffffff" />
<path d="M1131.1 538.4C1131.0 538.8 1129.0 538.8 1128.4 538.7C1127.8 538.7 1127.5 538.4 1127.3 538.1C1127.1 537.8 1127.1 537.0 1127.4 536.8C1127.7 536.5 1128.5 536.3 1129.1 536.6C1129.7 536.9 1131.2 538.0 1131.1 538.4Z" fill="#ffffff" />
<ellipse cx="1307" cy="420" rx="7.1" ry="0.8" transform="rotate(-53 1307 420)" fill="#ffffff"/>
<ellipse cx="980" cy="634" rx="7.2" ry="1.5" transform="rotate(-19 980 634)" fill="#ffffff"/>
<path d="M1402.2 346.6C1402.0 347.5 1399.7 348.3 1398.4 348.1C1397.1 347.9 1394.8 346.5 1394.4 345.5C1394.0 344.5 1395.2 342.7 1396.1 342.2C1397.0 341.7 1398.9 341.9 1399.9 342.6C1400.9 343.3 1402.5 345.7 1402.2 346.6Z" fill="#ffffff" />
<path d="M1275.2 399.5C1275.2 398.7 1278.2 396.2 1279.5 395.1C1280.8 394.0 1282.3 392.8 1283.0 392.9C1283.7 393.0 1284.0 394.6 1283.5 395.8C1283.0 397.0 1281.1 399.5 1279.7 400.1C1278.3 400.7 1275.2 400.3 1275.2 399.5Z" fill="#ffffff" />
<ellipse cx="1393" cy="377" rx="3.8" ry="1.5" transform="rotate(-32 1393 377)" fill="#ffffff"/>
<ellipse cx="1376" cy="408" rx="8.7" ry="0.9" transform="rotate(-49 1376 408)" fill="#ffffff"/>
<path d="M1288.7 394.8C1287.6 393.5 1289.0 389.3 1290.6 387.6C1292.2 385.9 1297.0 383.9 1298.1 384.4C1299.2 384.9 1297.5 388.9 1297.3 390.8C1297.1 392.7 1298.5 395.0 1297.1 395.7C1295.7 396.4 1289.8 396.1 1288.7 394.8Z" fill="#ffffff" />
<ellipse cx="1471" cy="410" rx="7.2" ry="0.5" transform="rotate(-62 1471 410)" fill="#ffffff"/>
<ellipse cx="1307" cy="436" rx="9.4" ry="0.8" transform="rotate(-41 1307 436)" fill="#ffffff"/>
<ellipse cx="1212" cy="508" rx="9.3" ry="0.7" transform="rotate(58 1212 508)" fill="#ffffff"/>
<ellipse cx="1170" cy="511" rx="3.6" ry="0.9" transform="rotate(-35 1170 511)" fill="#ffffff"/>
<ellipse cx="1068" cy="488" rx="3.7" ry="0.7" transform="rotate(-68 1068 488)" fill="#ffffff"/>
<ellipse cx="1384" cy="398" rx="7.2" ry="0.5" transform="rotate(-26 1384 398)" fill="#ffffff"/>
<ellipse cx="1356" cy="403" rx="8.5" ry="1.1" transform="rotate(-41 1356 403)" fill="#ffffff"/>
<ellipse cx="1370" cy="327" rx="8.7" ry="1.4" transform="rotate(-39 1370 327)" fill="#ffffff"/>
<ellipse cx="1195" cy="442" rx="8.2" ry="0.6" transform="rotate(-52 1195 442)" fill="#ffffff"/>
<ellipse cx="942" cy="565" rx="2.5" ry="0.7" transform="rotate(-7 942 565)" fill="#ffffff"/>
<ellipse cx="1047" cy="558" rx="3.2" ry="1.6" transform="rotate(-44 1047 558)" fill="#ffffff"/>
<path d="M1258.3 492.3C1257.8 492.2 1258.3 490.6 1258.5 489.9C1258.7 489.2 1259.3 488.2 1259.7 488.0C1260.1 487.8 1260.8 488.4 1261.1 488.8C1261.4 489.2 1262.3 490.1 1261.8 490.7C1261.3 491.3 1258.8 492.4 1258.3 492.3Z" fill="#ffffff" />
<path d="M1250.0 448.8C1249.9 448.3 1250.0 447.6 1250.5 447.1C1251.0 446.7 1252.6 445.8 1253.1 446.1C1253.6 446.4 1253.8 448.5 1253.5 449.1C1253.2 449.8 1251.7 450.1 1251.1 450.0C1250.5 449.9 1250.1 449.3 1250.0 448.8Z" fill="#ffffff" />
<ellipse cx="1153" cy="545" rx="9.3" ry="1.1" transform="rotate(-51 1153 545)" fill="#ffffff"/>
<ellipse cx="1152" cy="439" rx="8.2" ry="0.7" transform="rotate(1 1152 439)" fill="#ffffff"/>
<ellipse cx="1092" cy="480" rx="8.8" ry="0.7" transform="rotate(-55 1092 480)" fill="#ffffff"/>
<ellipse cx="1005" cy="574" rx="2.0" ry="1.0" transform="rotate(-14 1005 574)" fill="#ffffff"/>
<path d="M1068.4 494.3C1067.8 493.8 1069.9 491.7 1070.7 490.8C1071.5 489.9 1072.3 488.9 1073.3 488.8C1074.3 488.8 1076.7 489.6 1076.8 490.5C1076.9 491.4 1075.5 493.3 1074.1 493.9C1072.7 494.5 1069.0 494.8 1068.4 494.3Z" fill="#ffffff" />
<path d="M1161.8 481.1C1161.5 480.2 1168.2 477.4 1171.2 476.9C1174.2 476.3 1177.7 476.9 1180.0 477.8C1182.3 478.7 1186.0 481.6 1184.8 482.3C1183.6 483.0 1176.9 482.3 1173.1 482.1C1169.3 481.9 1162.1 482.0 1161.8 481.1Z" fill="#ffffff" />
<path d="M960.6 589.6C960.1 589.4 960.0 588.2 960.5 587.5C961.0 586.8 962.6 585.8 963.6 585.6C964.6 585.4 966.5 585.9 966.5 586.5C966.5 587.1 964.6 588.5 963.6 589.0C962.6 589.5 961.1 589.9 960.6 589.6Z" fill="#ffffff" />
<ellipse cx="1066" cy="519" rx="9.7" ry="0.9" transform="rotate(-51 1066 519)" fill="#ffffff"/>
<path d="M1310.9 384.3C1310.5 383.2 1313.0 381.1 1314.4 379.8C1315.9 378.5 1318.0 376.3 1319.6 376.4C1321.2 376.5 1324.5 378.7 1324.0 380.4C1323.5 382.1 1318.8 386.0 1316.6 386.6C1314.4 387.2 1311.3 385.4 1310.9 384.3Z" fill="#ffffff" />
<path d="M1406.0 439.5C1405.9 439.2 1407.4 438.3 1408.1 437.7C1408.8 437.1 1409.6 435.6 1410.0 435.8C1410.4 436.0 1410.9 438.2 1410.7 438.8C1410.5 439.4 1409.7 439.2 1408.9 439.3C1408.1 439.4 1406.1 439.8 1406.0 439.5Z" fill="#ffffff" />
<ellipse cx="1447" cy="422" rx="6.4" ry="1.0" transform="rotate(-31 1447 422)" fill="#ffffff"/>
<path d="M1296.1 380.2C1296.0 379.4 1298.2 377.8 1299.3 377.2C1300.4 376.6 1302.1 376.2 1302.6 376.7C1303.1 377.1 1302.9 379.0 1302.4 379.9C1301.9 380.8 1300.8 381.8 1299.7 381.8C1298.7 381.9 1296.2 381.0 1296.1 380.2Z" fill="#ffffff" />
<ellipse cx="960" cy="569" rx="8.6" ry="1.3" transform="rotate(8 960 569)" fill="#ffffff"/>
<ellipse cx="1173" cy="505" rx="4.8" ry="0.9" transform="rotate(-29 1173 505)" fill="#ffffff"/>
<path d="M1107.3 536.1C1107.5 534.8 1111.5 531.7 1113.6 531.2C1115.7 530.7 1119.2 532.2 1120.0 533.2C1120.8 534.2 1119.6 536.2 1118.3 537.2C1117.0 538.2 1114.0 539.4 1112.2 539.2C1110.4 539.0 1107.1 537.4 1107.3 536.1Z" fill="#ffffff" />
<path d="M1211.5 479.7C1211.6 480.7 1209.6 482.3 1207.8 482.3C1206.0 482.3 1201.2 480.8 1200.5 479.9C1199.8 479.0 1202.6 477.8 1203.7 477.2C1204.8 476.6 1205.8 476.1 1207.1 476.5C1208.4 476.9 1211.4 478.7 1211.5 479.7Z" fill="#ffffff" />
<ellipse cx="1265" cy="452" rx="3.6" ry="0.9" transform="rotate(70 1265 452)" fill="#ffffff"/>
<ellipse cx="1331" cy="454" rx="7.9" ry="0.8" transform="rotate(-30 1331 454)" fill="#ffffff"/>
<path d="M971.9 636.3C971.9 635.6 973.2 634.4 974.0 634.0C974.8 633.6 976.3 633.6 976.9 633.8C977.5 633.9 978.2 634.2 977.7 634.9C977.2 635.6 974.7 638.0 973.7 638.2C972.7 638.4 971.9 637.0 971.9 636.3Z" fill="#ffffff" />
<ellipse cx="1013" cy="552" rx="8.5" ry="1.6" transform="rotate(-33 1013 552)" fill="#ffffff"/>
<ellipse cx="1129" cy="552" rx="10.4" ry="0.7" transform="rotate(-31 1129 552)" fill="#ffffff"/>
<path d="M1277.1 356.5C1276.9 355.9 1278.7 353.4 1279.4 352.8C1280.2 352.2 1281.1 352.7 1281.6 352.8C1282.1 352.9 1282.7 352.8 1282.5 353.4C1282.3 354.0 1281.4 355.8 1280.5 356.3C1279.6 356.8 1277.3 357.1 1277.1 356.5Z" fill="#ffffff" />
<path d="M1228.6 397.3C1228.3 396.3 1231.2 393.7 1232.5 393.1C1233.8 392.5 1235.6 393.2 1236.5 393.7C1237.4 394.2 1238.5 395.0 1238.1 395.9C1237.7 396.8 1235.9 399.1 1234.3 399.3C1232.7 399.5 1228.9 398.3 1228.6 397.3Z" fill="#ffffff" />
<path d="M1190.7 418.6C1190.4 418.5 1189.8 418.0 1189.9 417.6C1190.0 417.2 1190.7 416.3 1191.2 416.1C1191.7 415.9 1192.8 416.0 1192.9 416.3C1193.0 416.6 1192.2 417.7 1191.8 418.1C1191.4 418.5 1191.0 418.7 1190.7 418.6Z" fill="#ffffff" />
<ellipse cx="1420" cy="417" rx="5.1" ry="1.2" transform="rotate(-46 1420 417)" fill="#ffffff"/>
<path d="M1257.7 448.5C1257.0 448.0 1256.4 446.4 1256.6 445.7C1256.8 445.0 1258.5 444.2 1259.1 444.1C1259.7 444.0 1260.1 444.0 1260.4 444.8C1260.7 445.6 1261.2 448.2 1260.8 448.8C1260.3 449.4 1258.4 449.0 1257.7 448.5Z" fill="#ffffff" />
<ellipse cx="1075" cy="486" rx="7.0" ry="1.6" transform="rotate(-3 1075 486)" fill="#ffffff"/>
<ellipse cx="1278" cy="450" rx="8.1" ry="0.7" transform="rotate(-18 1278 450)" fill="#ffffff"/>
<ellipse cx="1141" cy="446" rx="4.3" ry="1.4" transform="rotate(-34 1141 446)" fill="#ffffff"/>
<ellipse cx="996" cy="538" rx="10.8" ry="0.9" transform="rotate(4 996 538)" fill="#ffffff"/>
<ellipse cx="1068" cy="568" rx="4.2" ry="1.5" transform="rotate(-19 1068 568)" fill="#ffffff"/>
<path d="M1153.6 499.9C1153.0 500.4 1151.6 500.5 1150.8 499.8C1150.0 499.1 1148.6 496.5 1148.7 495.6C1148.8 494.7 1150.4 494.2 1151.4 494.4C1152.4 494.6 1154.1 495.8 1154.5 496.7C1154.9 497.6 1154.2 499.4 1153.6 499.9Z" fill="#ffffff" />
<path d="M1182.4 442.8C1181.8 442.3 1181.7 438.2 1182.0 436.4C1182.3 434.6 1183.1 432.1 1184.2 432.0C1185.3 431.9 1188.5 434.6 1188.7 435.8C1188.9 437.0 1186.5 438.0 1185.5 439.2C1184.5 440.4 1183.0 443.3 1182.4 442.8Z" fill="#ffffff" />
<ellipse cx="1037" cy="574" rx="9.9" ry="1.5" transform="rotate(-46 1037 574)" fill="#ffffff"/>
<path d="M1314.9 403.8C1314.1 404.0 1312.6 402.3 1311.8 400.9C1311.0 399.5 1309.8 396.3 1310.2 395.4C1310.7 394.5 1313.5 395.0 1314.5 395.7C1315.5 396.4 1316.4 398.1 1316.5 399.5C1316.6 400.9 1315.7 403.6 1314.9 403.8Z" fill="#ffffff" />
<ellipse cx="1207" cy="504" rx="8.1" ry="1.2" transform="rotate(-43 1207 504)" fill="#ffffff"/>
<ellipse cx="1371" cy="348" rx="4.1" ry="1.1" transform="rotate(-39 1371 348)" fill="#ffffff"/>
<path d="M1314.8 380.9C1313.3 380.0 1311.9 374.8 1311.9 371.5C1311.9 368.2 1313.8 362.4 1314.9 361.3C1316.0 360.2 1317.3 362.2 1318.3 364.8C1319.2 367.4 1321.2 373.9 1320.6 376.6C1320.0 379.3 1316.2 381.8 1314.8 380.9Z" fill="#ffffff" />
<ellipse cx="1011" cy="595" rx="4.0" ry="0.7" transform="rotate(-5 1011 595)" fill="#ffffff"/>
<ellipse cx="1149" cy="501" rx="9.6" ry="1.5" transform="rotate(-69 1149 501)" fill="#ffffff"/>
<ellipse cx="1408" cy="412" rx="3.0" ry="1.0" transform="rotate(9 1408 412)" fill="#ffffff"/>
<ellipse cx="1146" cy="546" rx="7.3" ry="1.0" transform="rotate(-30 1146 546)" fill="#ffffff"/>
<ellipse cx="1327" cy="430" rx="4.8" ry="0.7" transform="rotate(-9 1327 430)" fill="#ffffff"/>
<path d="M1378.0 351.9C1378.0 352.4 1377.3 353.1 1376.8 353.1C1376.3 353.1 1375.1 352.4 1375.0 352.0C1374.9 351.6 1375.7 351.1 1376.0 350.8C1376.3 350.5 1376.7 350.0 1377.0 350.2C1377.3 350.4 1378.0 351.4 1378.0 351.9Z" fill="#ffffff" />
<ellipse cx="1306" cy="416" rx="6.9" ry="1.4" transform="rotate(-52 1306 416)" fill="#ffffff"/>
<path d="M1327.7 459.1C1326.8 458.1 1325.5 454.2 1326.5 453.0C1327.5 451.8 1332.5 451.1 1333.8 451.7C1335.1 452.3 1334.6 455.1 1334.3 456.4C1334.0 457.7 1332.9 458.9 1331.8 459.3C1330.7 459.8 1328.6 460.2 1327.7 459.1Z" fill="#ffffff" />
<path d="M1195.1 411.3C1194.4 410.8 1193.4 409.7 1194.6 408.8C1195.8 407.9 1200.9 406.1 1202.5 406.0C1204.1 405.9 1205.0 406.9 1204.4 407.9C1203.8 408.9 1200.5 411.2 1199.0 411.8C1197.5 412.4 1195.8 411.8 1195.1 411.3Z" fill="#ffffff" />
<ellipse cx="1384" cy="345" rx="3.1" ry="1.4" transform="rotate(-34 1384 345)" fill="#ffffff"/>
<path d="M1115.1 470.9C1114.8 471.2 1113.4 469.5 1112.3 468.4C1111.2 467.3 1108.4 465.4 1108.5 464.5C1108.6 463.6 1111.8 462.8 1112.8 463.1C1113.8 463.4 1113.8 465.1 1114.2 466.4C1114.6 467.7 1115.4 470.6 1115.1 470.9Z" fill="#ffffff" />
<path d="M1363.0 348.1C1361.7 347.8 1360.3 345.2 1360.7 343.5C1361.1 341.8 1364.1 338.8 1365.4 338.1C1366.7 337.5 1367.8 338.4 1368.3 339.6C1368.8 340.8 1369.6 343.7 1368.7 345.1C1367.8 346.5 1364.3 348.4 1363.0 348.1Z" fill="#ffffff" />
<path d="M1014.9 510.7C1014.7 509.2 1014.8 506.2 1015.9 505.8C1017.0 505.4 1020.6 507.1 1021.4 508.0C1022.2 508.9 1021.2 509.9 1020.5 511.1C1019.8 512.3 1018.2 515.1 1017.3 515.0C1016.4 514.9 1015.1 512.2 1014.9 510.7Z" fill="#ffffff" />
<path d="M1414.9 413.7C1415.0 414.3 1415.0 415.5 1414.1 415.7C1413.2 415.9 1410.0 415.4 1409.6 414.8C1409.2 414.2 1410.9 412.9 1411.6 412.4C1412.3 411.9 1413.0 411.8 1413.6 412.0C1414.1 412.2 1414.8 413.1 1414.9 413.7Z" fill="#ffffff" />
<ellipse cx="1253" cy="426" rx="8.8" ry="0.6" transform="rotate(-58 1253 426)" fill="#ffffff"/>
<path d="M956.7 631.3C956.0 631.3 954.6 630.7 954.3 629.2C954.0 627.7 954.4 623.2 955.1 622.2C955.8 621.2 957.9 622.3 958.5 623.5C959.1 624.7 958.8 627.9 958.5 629.2C958.2 630.5 957.4 631.3 956.7 631.3Z" fill="#ffffff" />
<ellipse cx="1464" cy="385" rx="7.5" ry="1.1" transform="rotate(-36 1464 385)" fill="#ffffff"/>
<path d="M1101.5 558.3C1100.8 559.3 1097.8 560.2 1096.6 559.7C1095.4 559.2 1094.2 556.6 1094.3 555.4C1094.4 554.2 1095.9 552.8 1097.0 552.5C1098.1 552.2 1100.3 552.9 1101.1 553.9C1101.8 554.9 1102.2 557.3 1101.5 558.3Z" fill="#ffffff" />
<ellipse cx="1067" cy="509" rx="10.3" ry="0.9" transform="rotate(2 1067 509)" fill="#ffffff"/>
<path d="M977.3 574.6C977.2 575.8 974.9 578.2 973.5 578.1C972.1 578.0 969.9 575.1 968.9 574.0C967.9 572.9 966.9 571.8 967.7 571.3C968.5 570.8 972.3 570.5 973.9 571.1C975.5 571.7 977.4 573.4 977.3 574.6Z" fill="#ffffff" />
<ellipse cx="1433" cy="383" rx="5.2" ry="0.7" transform="rotate(-48 1433 383)" fill="#ffffff"/>
<ellipse cx="1252" cy="357" rx="9.6" ry="1.4" transform="rotate(56 1252 357)" fill="#ffffff"/>
<path d="M1211.9 493.0C1211.5 493.7 1208.6 492.0 1206.2 491.3C1203.8 490.6 1199.0 489.9 1197.8 488.8C1196.6 487.7 1197.1 484.9 1198.9 484.6C1200.7 484.4 1206.2 485.9 1208.4 487.3C1210.6 488.7 1212.3 492.3 1211.9 493.0Z" fill="#ffffff" />
<ellipse cx="1072" cy="488" rx="9.6" ry="0.9" transform="rotate(-62 1072 488)" fill="#ffffff"/>
<path d="M1168.3 452.2C1167.6 453.6 1164.6 456.0 1162.9 455.9C1161.2 455.8 1158.3 453.5 1157.9 451.4C1157.5 449.3 1159.1 444.1 1160.6 443.4C1162.1 442.7 1165.7 445.7 1167.0 447.2C1168.3 448.7 1169.0 450.8 1168.3 452.2Z" fill="#ffffff" />
<ellipse cx="1252" cy="490" rx="6.1" ry="1.0" transform="rotate(62 1252 490)" fill="#ffffff"/>
<ellipse cx="1342" cy="367" rx="4.1" ry="1.5" transform="rotate(-69 1342 367)" fill="#ffffff"/>
<path d="M1297.9 401.6C1297.6 402.6 1296.7 405.9 1295.7 405.9C1294.7 405.9 1292.3 402.8 1291.9 401.5C1291.5 400.2 1292.5 398.7 1293.4 398.4C1294.3 398.1 1296.7 399.2 1297.4 399.7C1298.2 400.2 1298.2 400.6 1297.9 401.6Z" fill="#ffffff" />
<ellipse cx="1253" cy="393" rx="4.4" ry="0.9" transform="rotate(68 1253 393)" fill="#ffffff"/>
<ellipse cx="1350" cy="346" rx="4.7" ry="1.4" transform="rotate(-9 1350 346)" fill="#ffffff"/>
<path d="M1192.6 490.2C1192.4 489.8 1192.7 488.7 1193.0 488.1C1193.3 487.6 1193.5 487.3 1194.3 486.9C1195.1 486.5 1197.6 485.1 1197.6 485.7C1197.5 486.3 1194.8 489.9 1194.0 490.7C1193.2 491.4 1192.8 490.6 1192.6 490.2Z" fill="#ffffff" />
<ellipse cx="1357" cy="411" rx="2.5" ry="1.0" transform="rotate(-4 1357 411)" fill="#ffffff"/>
<ellipse cx="1110" cy="479" rx="2.5" ry="1.0" transform="rotate(-63 1110 479)" fill="#ffffff"/>
<ellipse cx="1089" cy="475" rx="5.7" ry="0.6" transform="rotate(-65 1089 475)" fill="#ffffff"/>
<path d="M1053.0 562.6C1051.7 562.8 1052.0 560.1 1052.0 557.8C1052.0 555.5 1052.0 550.1 1053.0 548.7C1054.0 547.3 1056.7 548.1 1057.9 549.5C1059.1 550.9 1060.9 554.7 1060.1 556.9C1059.3 559.1 1054.3 562.5 1053.0 562.6Z" fill="#ffffff" />
<ellipse cx="943" cy="599" rx="2.1" ry="1.5" transform="rotate(-60 943 599)" fill="#ffffff"/>
<ellipse cx="867" cy="640" rx="5.1" ry="1.1" transform="rotate(-30 867 640)" fill="#ffffff"/>
<ellipse cx="992" cy="530" rx="8.5" ry="1.6" transform="rotate(-57 992 530)" fill="#ffffff"/>
<path d="M1105.1 560.2C1103.9 559.3 1104.7 555.0 1105.7 553.6C1106.8 552.2 1110.1 552.1 1111.4 552.1C1112.7 552.1 1113.3 552.8 1113.6 553.9C1113.8 555.0 1114.3 557.8 1112.9 558.9C1111.5 560.0 1106.3 561.1 1105.1 560.2Z" fill="#ffffff" />
<path d="M908.4 636.7C907.5 637.2 906.3 639.2 905.6 638.5C904.9 637.8 903.8 633.7 904.1 632.5C904.4 631.3 906.5 631.0 907.6 631.5C908.7 632.0 910.6 634.3 910.7 635.2C910.8 636.1 909.2 636.2 908.4 636.7Z" fill="#ffffff" />
<path d="M1008.0 534.6C1007.3 534.8 1007.0 534.9 1006.6 534.2C1006.2 533.5 1005.2 530.9 1005.7 530.3C1006.2 529.6 1008.5 529.8 1009.3 530.3C1010.1 530.8 1010.9 532.4 1010.7 533.1C1010.5 533.8 1008.7 534.4 1008.0 534.6Z" fill="#ffffff" />
<ellipse cx="1321" cy="443" rx="10.7" ry="1.1" transform="rotate(7 1321 443)" fill="#ffffff"/>
<ellipse cx="1228" cy="447" rx="10.4" ry="1.3" transform="rotate(51 1228 447)" fill="#ffffff"/>
<ellipse cx="1127" cy="507" rx="3.2" ry="0.8" transform="rotate(-38 1127 507)" fill="#ffffff"/>
<path d="M1020.0 616.8C1019.3 617.8 1012.4 617.9 1009.4 617.6C1006.4 617.3 1003.3 616.6 1002.3 615.0C1001.3 613.4 1001.8 608.6 1003.6 608.0C1005.5 607.4 1010.7 609.8 1013.4 611.3C1016.1 612.8 1020.7 615.8 1020.0 616.8Z" fill="#ffffff" />
<path d="M1451.4 398.1C1450.5 397.5 1452.0 394.1 1452.8 392.3C1453.6 390.6 1455.1 387.7 1456.4 387.6C1457.8 387.5 1460.6 390.4 1460.9 391.8C1461.2 393.2 1459.6 395.1 1458.0 396.2C1456.4 397.2 1452.3 398.8 1451.4 398.1Z" fill="#ffffff" />
<path d="M1349.8 418.3C1348.9 418.7 1346.8 418.9 1345.8 417.6C1344.8 416.3 1343.2 411.7 1343.5 410.5C1343.8 409.3 1346.2 409.6 1347.4 410.3C1348.6 411.1 1350.5 413.7 1350.9 415.0C1351.3 416.3 1350.7 417.9 1349.8 418.3Z" fill="#ffffff" />
<ellipse cx="991" cy="574" rx="10.3" ry="1.1" transform="rotate(-44 991 574)" fill="#ffffff"/>
<ellipse cx="1245" cy="502" rx="9.6" ry="1.2" transform="rotate(-4 1245 502)" fill="#ffffff"/>
<ellipse cx="1391" cy="360" rx="9.8" ry="0.8" transform="rotate(-27 1391 360)" fill="#ffffff"/>
<ellipse cx="1443" cy="383" rx="2.5" ry="1.5" transform="rotate(-1 1443 383)" fill="#ffffff"/>
<ellipse cx="1123" cy="551" rx="3.8" ry="1.5" transform="rotate(-26 1123 551)" fill="#ffffff"/>
<ellipse cx="1043" cy="523" rx="6.1" ry="0.9" transform="rotate(-39 1043 523)" fill="#ffffff"/>
<path d="M1415.9 438.7C1414.5 439.5 1410.3 436.0 1409.1 434.3C1407.8 432.6 1407.9 430.4 1408.4 428.6C1408.9 426.8 1410.5 423.5 1412.1 423.7C1413.7 423.9 1417.2 427.1 1417.8 429.6C1418.4 432.1 1417.4 437.9 1415.9 438.7Z" fill="#ffffff" />
<ellipse cx="1381" cy="407" rx="2.9" ry="0.9" transform="rotate(-24 1381 407)" fill="#ffffff"/>
<path d="M1378.7 383.8C1378.4 385.2 1376.7 386.9 1374.7 387.1C1372.7 387.3 1367.1 386.2 1366.5 385.0C1365.9 383.8 1369.3 380.7 1371.0 379.7C1372.7 378.7 1375.2 378.1 1376.5 378.8C1377.8 379.5 1379.0 382.4 1378.7 383.8Z" fill="#ffffff" />
<ellipse cx="1054" cy="553" rx="7.6" ry="0.6" transform="rotate(-41 1054 553)" fill="#ffffff"/>
<path d="M1059.0 557.1C1058.6 557.8 1057.1 557.9 1055.4 557.3C1053.8 556.7 1050.1 555.0 1049.1 553.6C1048.1 552.2 1047.9 549.0 1049.3 549.0C1050.7 549.0 1056.1 551.9 1057.7 553.3C1059.3 554.6 1059.4 556.4 1059.0 557.1Z" fill="#ffffff" />
<ellipse cx="1222" cy="395" rx="6.5" ry="1.2" transform="rotate(74 1222 395)" fill="#ffffff"/>
<ellipse cx="1042" cy="493" rx="4.0" ry="1.5" transform="rotate(-9 1042 493)" fill="#ffffff"/>
<ellipse cx="1154" cy="524" rx="4.3" ry="1.2" transform="rotate(4 1154 524)" fill="#ffffff"/>
<ellipse cx="1159" cy="476" rx="3.5" ry="0.8" transform="rotate(-65 1159 476)" fill="#ffffff"/>
<path d="M1146.2 441.3C1145.6 440.4 1145.5 437.6 1146.4 436.8C1147.3 436.1 1150.0 436.8 1151.8 436.8C1153.6 436.8 1157.4 436.0 1157.1 436.9C1156.8 437.8 1151.6 441.5 1149.8 442.2C1148.0 442.9 1146.8 442.2 1146.2 441.3Z" fill="#ffffff" />
<path d="M1102.3 530.5C1100.5 530.3 1097.9 530.5 1098.3 528.8C1098.7 527.1 1102.5 521.6 1104.5 520.1C1106.5 518.6 1109.2 518.0 1110.0 519.7C1110.8 521.4 1110.3 528.4 1109.0 530.2C1107.7 532.0 1104.1 530.7 1102.3 530.5Z" fill="#ffffff" />
<path d="M944 632C946.2 630.0 951.0 627.7 955 628C959.0 628.3 963.8 633.7 968 634C972.2 634.3 976.7 633.0 980 630C983.3 627.0 985.7 619.7 988 616C990.3 612.3 992.5 608.3 994 608C995.5 607.7 997.3 610.0 997 614C996.7 618.0 994.5 626.8 992 632C989.5 637.2 986.5 642.2 982 645C977.5 647.8 970.3 648.8 965 649C959.7 649.2 953.8 647.5 950 646C946.2 644.5 943.0 642.3 942 640C941.0 637.7 941.8 634.0 944 632Z" fill="#6cc4e8" />
<path d="M951 501C951.3 499.5 954.5 496.5 957 494C959.5 491.5 962.8 488.7 966 486C969.2 483.3 973.2 480.2 976 478C978.8 475.8 981.7 473.3 983 473C984.3 472.7 985.3 473.8 984 476C982.7 478.2 978.3 482.8 975 486C971.7 489.2 967.3 492.2 964 495C960.7 497.8 957.2 502.0 955 503C952.8 504.0 950.7 502.5 951 501Z" fill="#6cc4e8" />
<path d="M1205 478C1206.3 476.0 1211.2 474.3 1215 474C1218.8 473.7 1224.5 473.7 1228 476C1231.5 478.3 1236.0 485.0 1236 488C1236.0 491.0 1231.5 493.7 1228 494C1224.5 494.3 1218.5 491.3 1215 490C1211.5 488.7 1208.7 488.0 1207 486C1205.3 484.0 1203.7 480.0 1205 478Z" fill="#6cc4e8" />
<path d="M1270 428C1269.3 423.7 1272.7 420.7 1276 424C1279.3 427.3 1288.2 442.7 1290 448C1291.8 453.3 1288.7 455.7 1287 456C1285.3 456.3 1282.8 454.7 1280 450C1277.2 445.3 1270.7 432.3 1270 428Z" fill="#6cc4e8" />
<path d="M1144 556C1145.8 554.0 1153.3 550.7 1158 548C1162.7 545.3 1169.3 540.7 1172 540C1174.7 539.3 1176.0 541.7 1174 544C1172.0 546.3 1164.5 551.3 1160 554C1155.5 556.7 1149.7 559.7 1147 560C1144.3 560.3 1142.2 558.0 1144 556Z" fill="#6cc4e8" />
<path d="M1453 385C1454.2 383.3 1458.5 381.0 1462 380C1465.5 379.0 1471.7 378.5 1474 379C1476.3 379.5 1477.7 381.5 1476 383C1474.3 384.5 1467.5 386.8 1464 388C1460.5 389.2 1456.8 390.5 1455 390C1453.2 389.5 1451.8 386.7 1453 385Z" fill="#6cc4e8" />
<path d="M1057 520C1058.3 517.7 1063.2 514.0 1066 514C1068.8 514.0 1073.7 517.7 1074 520C1074.3 522.3 1070.7 526.7 1068 528C1065.3 529.3 1059.8 529.3 1058 528C1056.2 526.7 1055.7 522.3 1057 520Z" fill="#6cc4e8" />
<path d="M1085 470C1085.5 467.7 1092.5 465.3 1095 466C1097.5 466.7 1100.5 471.7 1100 474C1099.5 476.3 1094.5 480.7 1092 480C1089.5 479.3 1084.5 472.3 1085 470Z" fill="#6cc4e8" />
<path d="M1232 470C1232.7 468.0 1239.7 467.0 1242 468C1244.3 469.0 1246.7 474.0 1246 476C1245.3 478.0 1240.3 481.0 1238 480C1235.7 479.0 1231.3 472.0 1232 470Z" fill="#6cc4e8" />
<ellipse cx="883" cy="592" rx="6.2" ry="1.1" transform="rotate(-27 883 592)" fill="#c2ee8e"/>
<ellipse cx="1069" cy="432" rx="7.0" ry="0.7" transform="rotate(-29 1069 432)" fill="#6cc4e8"/>
<ellipse cx="1207" cy="359" rx="5.5" ry="0.6" transform="rotate(-27 1207 359)" fill="#6cc4e8"/>
<ellipse cx="1196" cy="362" rx="3.6" ry="0.8" transform="rotate(-29 1196 362)" fill="#6cc4e8"/>
<ellipse cx="1072" cy="451" rx="3.7" ry="0.7" transform="rotate(-23 1072 451)" fill="#6cc4e8"/>
<ellipse cx="1052" cy="441" rx="8.7" ry="0.7" transform="rotate(-32 1052 441)" fill="#c2ee8e"/>
<ellipse cx="1090" cy="394" rx="7.2" ry="1.0" transform="rotate(-22 1090 394)" fill="#6cc4e8"/>
<ellipse cx="1113" cy="399" rx="10.4" ry="1.1" transform="rotate(-24 1113 399)" fill="#6cc4e8"/>
<ellipse cx="1121" cy="396" rx="3.4" ry="0.7" transform="rotate(-30 1121 396)" fill="#6cc4e8"/>
<ellipse cx="1120" cy="413" rx="10.2" ry="1.1" transform="rotate(-25 1120 413)" fill="#6cc4e8"/>
<ellipse cx="986" cy="482" rx="8.2" ry="1.1" transform="rotate(-27 986 482)" fill="#c2ee8e"/>
<ellipse cx="946" cy="536" rx="3.8" ry="0.8" transform="rotate(-23 946 536)" fill="#c2ee8e"/>
<ellipse cx="1210" cy="377" rx="6.3" ry="0.8" transform="rotate(-35 1210 377)" fill="#6cc4e8"/>
<ellipse cx="1183" cy="381" rx="9.4" ry="0.5" transform="rotate(-25 1183 381)" fill="#6cc4e8"/>
<ellipse cx="1076" cy="434" rx="10.8" ry="0.6" transform="rotate(-20 1076 434)" fill="#6cc4e8"/>
<ellipse cx="1036" cy="452" rx="9.6" ry="0.7" transform="rotate(-26 1036 452)" fill="#c2ee8e"/>
<ellipse cx="1029" cy="460" rx="3.7" ry="1.2" transform="rotate(-33 1029 460)" fill="#c2ee8e"/>
<ellipse cx="1118" cy="375" rx="3.6" ry="0.5" transform="rotate(-32 1118 375)" fill="#efd095"/>
<ellipse cx="1050" cy="444" rx="8.5" ry="0.6" transform="rotate(-32 1050 444)" fill="#c2ee8e"/>
<ellipse cx="993" cy="470" rx="3.3" ry="0.5" transform="rotate(-30 993 470)" fill="#c2ee8e"/>
<ellipse cx="1112" cy="418" rx="4.0" ry="0.7" transform="rotate(-24 1112 418)" fill="#c2ee8e"/>
<ellipse cx="1180" cy="392" rx="3.2" ry="0.9" transform="rotate(-26 1180 392)" fill="#c2ee8e"/>
<ellipse cx="1160" cy="413" rx="10.5" ry="0.9" transform="rotate(-22 1160 413)" fill="#6cc4e8"/>
<ellipse cx="969" cy="495" rx="6.8" ry="0.8" transform="rotate(-21 969 495)" fill="#efd095"/>
<ellipse cx="1081" cy="411" rx="5.9" ry="0.7" transform="rotate(-23 1081 411)" fill="#6cc4e8"/>
<ellipse cx="1099" cy="397" rx="6.6" ry="0.7" transform="rotate(-34 1099 397)" fill="#6cc4e8"/>
<ellipse cx="1013" cy="481" rx="4.9" ry="0.8" transform="rotate(-26 1013 481)" fill="#c2ee8e"/>
<ellipse cx="1137" cy="427" rx="8.2" ry="1.1" transform="rotate(-32 1137 427)" fill="#6cc4e8"/>
<ellipse cx="1162" cy="366" rx="9.2" ry="0.6" transform="rotate(-30 1162 366)" fill="#6cc4e8"/>
<ellipse cx="1050" cy="448" rx="4.2" ry="0.8" transform="rotate(-21 1050 448)" fill="#efd095"/>
<ellipse cx="1094" cy="442" rx="8.7" ry="0.7" transform="rotate(-27 1094 442)" fill="#6cc4e8"/>
<ellipse cx="976" cy="515" rx="7.7" ry="1.1" transform="rotate(-27 976 515)" fill="#c2ee8e"/>
<ellipse cx="1095" cy="418" rx="9.4" ry="0.6" transform="rotate(-31 1095 418)" fill="#c2ee8e"/>
<ellipse cx="1177" cy="392" rx="7.9" ry="1.1" transform="rotate(-21 1177 392)" fill="#6cc4e8"/>
<ellipse cx="1200" cy="365" rx="9.2" ry="0.6" transform="rotate(-25 1200 365)" fill="#c2ee8e"/>
<ellipse cx="1067" cy="452" rx="8.5" ry="0.7" transform="rotate(-30 1067 452)" fill="#6cc4e8"/>
<ellipse cx="1054" cy="449" rx="9.9" ry="0.9" transform="rotate(-23 1054 449)" fill="#6cc4e8"/>
<ellipse cx="1137" cy="425" rx="10.8" ry="0.6" transform="rotate(-20 1137 425)" fill="#6cc4e8"/>
<ellipse cx="1080" cy="406" rx="7.0" ry="0.6" transform="rotate(-23 1080 406)" fill="#6cc4e8"/>
<ellipse cx="931" cy="547" rx="6.6" ry="0.9" transform="rotate(-25 931 547)" fill="#c2ee8e"/>
<ellipse cx="1034" cy="471" rx="3.6" ry="0.6" transform="rotate(-26 1034 471)" fill="#c2ee8e"/>
<ellipse cx="1063" cy="438" rx="9.3" ry="1.2" transform="rotate(-23 1063 438)" fill="#6cc4e8"/>
<ellipse cx="1125" cy="414" rx="3.4" ry="1.0" transform="rotate(-33 1125 414)" fill="#6cc4e8"/>
<ellipse cx="1113" cy="403" rx="8.1" ry="0.9" transform="rotate(-32 1113 403)" fill="#6cc4e8"/>
<ellipse cx="969" cy="490" rx="3.5" ry="1.1" transform="rotate(-31 969 490)" fill="#c2ee8e"/>
<ellipse cx="977" cy="506" rx="9.2" ry="1.2" transform="rotate(-22 977 506)" fill="#c2ee8e"/>
<ellipse cx="1119" cy="412" rx="4.5" ry="0.8" transform="rotate(-29 1119 412)" fill="#6cc4e8"/>
<ellipse cx="1197" cy="381" rx="7.2" ry="0.7" transform="rotate(-27 1197 381)" fill="#6cc4e8"/>
<ellipse cx="1109" cy="422" rx="10.7" ry="0.6" transform="rotate(-33 1109 422)" fill="#6cc4e8"/>
<ellipse cx="994" cy="476" rx="7.9" ry="0.9" transform="rotate(-25 994 476)" fill="#c2ee8e"/>
<ellipse cx="1207" cy="381" rx="7.1" ry="0.6" transform="rotate(-22 1207 381)" fill="#6cc4e8"/>
<ellipse cx="1205" cy="379" rx="8.8" ry="0.7" transform="rotate(-22 1205 379)" fill="#6cc4e8"/>
<ellipse cx="1208" cy="372" rx="3.7" ry="1.0" transform="rotate(-22 1208 372)" fill="#6cc4e8"/>
<ellipse cx="1092" cy="389" rx="7.6" ry="0.9" transform="rotate(-26 1092 389)" fill="#6cc4e8"/>
<ellipse cx="998" cy="505" rx="5.5" ry="0.8" transform="rotate(-28 998 505)" fill="#c2ee8e"/>
<ellipse cx="867" cy="617" rx="11.0" ry="0.6" transform="rotate(-24 867 617)" fill="#c2ee8e"/>
<ellipse cx="1034" cy="439" rx="4.5" ry="0.5" transform="rotate(-27 1034 439)" fill="#c2ee8e"/>
<ellipse cx="1050" cy="448" rx="5.3" ry="1.0" transform="rotate(-26 1050 448)" fill="#c2ee8e"/>
<ellipse cx="1003" cy="494" rx="4.6" ry="0.7" transform="rotate(-23 1003 494)" fill="#c2ee8e"/>
<ellipse cx="1031" cy="450" rx="5.9" ry="0.7" transform="rotate(-33 1031 450)" fill="#c2ee8e"/>
<ellipse cx="1059" cy="437" rx="11.0" ry="0.7" transform="rotate(-26 1059 437)" fill="#6cc4e8"/>
<ellipse cx="1144" cy="408" rx="7.4" ry="0.7" transform="rotate(-22 1144 408)" fill="#6cc4e8"/>
<ellipse cx="1062" cy="423" rx="6.3" ry="0.5" transform="rotate(-25 1062 423)" fill="#6cc4e8"/>
<ellipse cx="1029" cy="467" rx="10.9" ry="0.6" transform="rotate(-25 1029 467)" fill="#c2ee8e"/>
<ellipse cx="880" cy="588" rx="9.0" ry="0.6" transform="rotate(-35 880 588)" fill="#c2ee8e"/>
<ellipse cx="999" cy="471" rx="8.5" ry="1.0" transform="rotate(-25 999 471)" fill="#c2ee8e"/>
<ellipse cx="1128" cy="378" rx="8.8" ry="0.7" transform="rotate(-29 1128 378)" fill="#6cc4e8"/>
<ellipse cx="1158" cy="369" rx="8.2" ry="0.6" transform="rotate(-35 1158 369)" fill="#6cc4e8"/>
<ellipse cx="1165" cy="386" rx="10.8" ry="0.9" transform="rotate(-31 1165 386)" fill="#6cc4e8"/>
<ellipse cx="1069" cy="414" rx="10.2" ry="0.9" transform="rotate(-31 1069 414)" fill="#6cc4e8"/>
<ellipse cx="1041" cy="456" rx="9.2" ry="0.9" transform="rotate(-28 1041 456)" fill="#c2ee8e"/>
<ellipse cx="1083" cy="445" rx="4.7" ry="0.7" transform="rotate(-31 1083 445)" fill="#c2ee8e"/>
<ellipse cx="1162" cy="384" rx="8.2" ry="0.5" transform="rotate(-34 1162 384)" fill="#6cc4e8"/>
<ellipse cx="982" cy="487" rx="7.8" ry="1.0" transform="rotate(-31 982 487)" fill="#c2ee8e"/>
<ellipse cx="1076" cy="414" rx="5.8" ry="1.2" transform="rotate(-28 1076 414)" fill="#6cc4e8"/>
<ellipse cx="1176" cy="399" rx="10.6" ry="1.0" transform="rotate(-25 1176 399)" fill="#6cc4e8"/>
<ellipse cx="1170" cy="391" rx="6.1" ry="1.2" transform="rotate(-21 1170 391)" fill="#6cc4e8"/>
<ellipse cx="1088" cy="441" rx="10.9" ry="0.5" transform="rotate(-24 1088 441)" fill="#c2ee8e"/>
<ellipse cx="1193" cy="361" rx="9.5" ry="1.2" transform="rotate(-34 1193 361)" fill="#c2ee8e"/>
<ellipse cx="1075" cy="418" rx="4.9" ry="1.2" transform="rotate(-22 1075 418)" fill="#6cc4e8"/>
<ellipse cx="1096" cy="432" rx="5.8" ry="0.6" transform="rotate(-21 1096 432)" fill="#6cc4e8"/>
<ellipse cx="1002" cy="478" rx="10.4" ry="0.6" transform="rotate(-27 1002 478)" fill="#c2ee8e"/>
<ellipse cx="997" cy="466" rx="4.7" ry="0.6" transform="rotate(-33 997 466)" fill="#c2ee8e"/>
<ellipse cx="974" cy="514" rx="3.8" ry="0.5" transform="rotate(-30 974 514)" fill="#6cc4e8"/>
<ellipse cx="1096" cy="426" rx="5.6" ry="1.1" transform="rotate(-21 1096 426)" fill="#6cc4e8"/>
<ellipse cx="1086" cy="444" rx="5.5" ry="1.2" transform="rotate(-32 1086 444)" fill="#c2ee8e"/>
<ellipse cx="988" cy="500" rx="5.4" ry="1.0" transform="rotate(-27 988 500)" fill="#c2ee8e"/>
<ellipse cx="1170" cy="405" rx="4.8" ry="0.7" transform="rotate(-33 1170 405)" fill="#6cc4e8"/>
<ellipse cx="1182" cy="380" rx="9.5" ry="0.6" transform="rotate(-23 1182 380)" fill="#c2ee8e"/>
<ellipse cx="1127" cy="397" rx="6.2" ry="1.0" transform="rotate(-33 1127 397)" fill="#6cc4e8"/>
<ellipse cx="1194" cy="360" rx="4.2" ry="0.9" transform="rotate(-32 1194 360)" fill="#6cc4e8"/>
<ellipse cx="1156" cy="388" rx="7.5" ry="1.1" transform="rotate(-28 1156 388)" fill="#c2ee8e"/>
<ellipse cx="1156" cy="365" rx="9.7" ry="1.1" transform="rotate(-27 1156 365)" fill="#6cc4e8"/>
<ellipse cx="1043" cy="431" rx="8.6" ry="1.0" transform="rotate(-31 1043 431)" fill="#6cc4e8"/>
<ellipse cx="1133" cy="370" rx="10.6" ry="0.6" transform="rotate(-33 1133 370)" fill="#c2ee8e"/>
<ellipse cx="859" cy="631" rx="7.4" ry="0.5" transform="rotate(-31 859 631)" fill="#c2ee8e"/>
<ellipse cx="1054" cy="421" rx="5.5" ry="1.1" transform="rotate(-31 1054 421)" fill="#c2ee8e"/>
<ellipse cx="1087" cy="430" rx="5.0" ry="1.0" transform="rotate(-30 1087 430)" fill="#6cc4e8"/>
<ellipse cx="1011" cy="487" rx="9.3" ry="0.9" transform="rotate(-26 1011 487)" fill="#c2ee8e"/>
<ellipse cx="954" cy="529" rx="5.9" ry="1.0" transform="rotate(-27 954 529)" fill="#6cc4e8"/>
<ellipse cx="1131" cy="373" rx="5.8" ry="1.2" transform="rotate(-20 1131 373)" fill="#6cc4e8"/>
<ellipse cx="1143" cy="397" rx="10.5" ry="0.9" transform="rotate(-26 1143 397)" fill="#6cc4e8"/>
<ellipse cx="1160" cy="367" rx="5.5" ry="0.9" transform="rotate(-33 1160 367)" fill="#c2ee8e"/>
<ellipse cx="976" cy="499" rx="7.3" ry="0.6" transform="rotate(-24 976 499)" fill="#c2ee8e"/>
<ellipse cx="1172" cy="387" rx="7.5" ry="1.0" transform="rotate(-27 1172 387)" fill="#6cc4e8"/>
<ellipse cx="1095" cy="384" rx="5.7" ry="1.2" transform="rotate(-26 1095 384)" fill="#6cc4e8"/>
<ellipse cx="1032" cy="459" rx="10.1" ry="0.8" transform="rotate(-21 1032 459)" fill="#c2ee8e"/>
<ellipse cx="1150" cy="416" rx="10.5" ry="0.5" transform="rotate(-26 1150 416)" fill="#efd095"/>
<ellipse cx="965" cy="509" rx="8.9" ry="0.9" transform="rotate(-29 965 509)" fill="#c2ee8e"/>
<ellipse cx="1118" cy="435" rx="7.0" ry="1.1" transform="rotate(-34 1118 435)" fill="#6cc4e8"/>
<ellipse cx="1060" cy="461" rx="7.6" ry="0.7" transform="rotate(-21 1060 461)" fill="#6cc4e8"/>
<ellipse cx="1059" cy="427" rx="5.5" ry="0.5" transform="rotate(-30 1059 427)" fill="#6cc4e8"/>
<ellipse cx="1126" cy="416" rx="6.5" ry="0.6" transform="rotate(-34 1126 416)" fill="#6cc4e8"/>
<ellipse cx="1001" cy="466" rx="5.4" ry="0.8" transform="rotate(-23 1001 466)" fill="#c2ee8e"/>
<ellipse cx="965" cy="494" rx="5.5" ry="0.7" transform="rotate(-23 965 494)" fill="#c2ee8e"/>
<ellipse cx="1166" cy="403" rx="6.4" ry="1.2" transform="rotate(-22 1166 403)" fill="#c2ee8e"/>
<ellipse cx="1160" cy="389" rx="5.8" ry="0.5" transform="rotate(-26 1160 389)" fill="#c2ee8e"/>
<ellipse cx="916" cy="563" rx="6.5" ry="1.0" transform="rotate(-27 916 563)" fill="#c2ee8e"/>
<ellipse cx="974" cy="495" rx="6.1" ry="1.0" transform="rotate(-25 974 495)" fill="#6cc4e8"/>
<ellipse cx="1013" cy="460" rx="7.9" ry="0.6" transform="rotate(-22 1013 460)" fill="#c2ee8e"/>
<ellipse cx="1093" cy="439" rx="3.7" ry="0.6" transform="rotate(-22 1093 439)" fill="#c2ee8e"/>
<ellipse cx="1044" cy="428" rx="6.2" ry="0.8" transform="rotate(-34 1044 428)" fill="#c2ee8e"/>
<ellipse cx="1079" cy="410" rx="7.6" ry="1.2" transform="rotate(-28 1079 410)" fill="#6cc4e8"/>
<ellipse cx="1127" cy="396" rx="6.4" ry="0.9" transform="rotate(-33 1127 396)" fill="#6cc4e8"/>
<ellipse cx="1111" cy="373" rx="3.0" ry="0.7" transform="rotate(-31 1111 373)" fill="#6cc4e8"/>
<ellipse cx="1118" cy="410" rx="8.2" ry="0.6" transform="rotate(-25 1118 410)" fill="#c2ee8e"/>
<ellipse cx="1047" cy="430" rx="4.5" ry="0.7" transform="rotate(-26 1047 430)" fill="#c2ee8e"/>
<ellipse cx="1102" cy="404" rx="4.7" ry="1.0" transform="rotate(-29 1102 404)" fill="#6cc4e8"/>
<ellipse cx="964" cy="525" rx="3.5" ry="0.7" transform="rotate(-33 964 525)" fill="#efd095"/>
<ellipse cx="1105" cy="399" rx="8.1" ry="1.2" transform="rotate(-30 1105 399)" fill="#efd095"/>
<ellipse cx="1059" cy="433" rx="7.4" ry="0.9" transform="rotate(-22 1059 433)" fill="#c2ee8e"/>
<ellipse cx="1154" cy="377" rx="8.0" ry="0.5" transform="rotate(-27 1154 377)" fill="#c2ee8e"/>
<ellipse cx="1168" cy="389" rx="6.8" ry="0.9" transform="rotate(-21 1168 389)" fill="#6cc4e8"/>
<ellipse cx="1135" cy="392" rx="4.5" ry="0.7" transform="rotate(-31 1135 392)" fill="#6cc4e8"/>
<ellipse cx="1128" cy="427" rx="10.6" ry="0.6" transform="rotate(-32 1128 427)" fill="#6cc4e8"/>
<ellipse cx="1098" cy="412" rx="4.9" ry="0.6" transform="rotate(-32 1098 412)" fill="#6cc4e8"/>
<ellipse cx="1184" cy="383" rx="3.5" ry="0.7" transform="rotate(-29 1184 383)" fill="#c2ee8e"/>
<ellipse cx="921" cy="536" rx="3.6" ry="1.0" transform="rotate(-33 921 536)" fill="#c2ee8e"/>
<ellipse cx="1042" cy="467" rx="5.7" ry="0.9" transform="rotate(-30 1042 467)" fill="#c2ee8e"/>
<ellipse cx="980" cy="514" rx="10.9" ry="1.0" transform="rotate(-24 980 514)" fill="#c2ee8e"/>
<ellipse cx="1207" cy="368" rx="4.3" ry="0.7" transform="rotate(-33 1207 368)" fill="#c2ee8e"/>
<ellipse cx="1119" cy="414" rx="9.6" ry="0.6" transform="rotate(-27 1119 414)" fill="#6cc4e8"/>
<ellipse cx="1111" cy="423" rx="7.7" ry="1.1" transform="rotate(-34 1111 423)" fill="#efd095"/>
<ellipse cx="1131" cy="412" rx="10.5" ry="0.7" transform="rotate(-31 1131 412)" fill="#6cc4e8"/>
<ellipse cx="1137" cy="402" rx="9.8" ry="0.8" transform="rotate(-35 1137 402)" fill="#6cc4e8"/>
<ellipse cx="1210" cy="374" rx="3.6" ry="1.0" transform="rotate(-30 1210 374)" fill="#6cc4e8"/>
<ellipse cx="1122" cy="412" rx="10.8" ry="0.9" transform="rotate(-30 1122 412)" fill="#6cc4e8"/>
<ellipse cx="1177" cy="406" rx="4.8" ry="0.6" transform="rotate(-34 1177 406)" fill="#6cc4e8"/>
<ellipse cx="1096" cy="436" rx="10.4" ry="0.9" transform="rotate(-29 1096 436)" fill="#c2ee8e"/>
<ellipse cx="877" cy="590" rx="6.6" ry="0.6" transform="rotate(-20 877 590)" fill="#c2ee8e"/>
<ellipse cx="1186" cy="397" rx="4.3" ry="1.2" transform="rotate(-33 1186 397)" fill="#c2ee8e"/>
<ellipse cx="906" cy="569" rx="3.3" ry="0.8" transform="rotate(-33 906 569)" fill="#c2ee8e"/>
<ellipse cx="981" cy="490" rx="5.2" ry="0.9" transform="rotate(-29 981 490)" fill="#c2ee8e"/>
<ellipse cx="967" cy="511" rx="9.6" ry="0.9" transform="rotate(-22 967 511)" fill="#c2ee8e"/>
<ellipse cx="1138" cy="390" rx="8.7" ry="0.8" transform="rotate(-20 1138 390)" fill="#6cc4e8"/>
<ellipse cx="1089" cy="389" rx="5.6" ry="0.6" transform="rotate(-34 1089 389)" fill="#6cc4e8"/>
<ellipse cx="1008" cy="497" rx="7.8" ry="1.2" transform="rotate(-26 1008 497)" fill="#c2ee8e"/>
<ellipse cx="1072" cy="423" rx="3.0" ry="0.7" transform="rotate(-32 1072 423)" fill="#6cc4e8"/>
<ellipse cx="1055" cy="426" rx="7.9" ry="1.0" transform="rotate(-33 1055 426)" fill="#c2ee8e"/>
<ellipse cx="998" cy="501" rx="6.1" ry="1.2" transform="rotate(-31 998 501)" fill="#c2ee8e"/>
<ellipse cx="991" cy="494" rx="9.7" ry="0.7" transform="rotate(-27 991 494)" fill="#c2ee8e"/>
<ellipse cx="1058" cy="426" rx="4.4" ry="0.7" transform="rotate(-27 1058 426)" fill="#6cc4e8"/>
<ellipse cx="1097" cy="432" rx="6.7" ry="1.0" transform="rotate(-25 1097 432)" fill="#6cc4e8"/>
<ellipse cx="1093" cy="415" rx="8.8" ry="0.9" transform="rotate(-28 1093 415)" fill="#6cc4e8"/>
<ellipse cx="972" cy="514" rx="10.6" ry="1.2" transform="rotate(-25 972 514)" fill="#c2ee8e"/>
<ellipse cx="1034" cy="449" rx="5.9" ry="0.9" transform="rotate(-28 1034 449)" fill="#c2ee8e"/>
<ellipse cx="980" cy="489" rx="5.5" ry="0.7" transform="rotate(-26 980 489)" fill="#c2ee8e"/>
<ellipse cx="1107" cy="422" rx="6.9" ry="1.1" transform="rotate(-29 1107 422)" fill="#6cc4e8"/>
<ellipse cx="1118" cy="415" rx="8.6" ry="0.6" transform="rotate(-28 1118 415)" fill="#c2ee8e"/>
<ellipse cx="1053" cy="455" rx="10.0" ry="0.6" transform="rotate(-31 1053 455)" fill="#c2ee8e"/>
<ellipse cx="892" cy="574" rx="3.2" ry="0.6" transform="rotate(-27 892 574)" fill="#6cc4e8"/>
<ellipse cx="1118" cy="393" rx="3.5" ry="0.9" transform="rotate(-24 1118 393)" fill="#6cc4e8"/>
<ellipse cx="1147" cy="365" rx="7.0" ry="1.2" transform="rotate(-27 1147 365)" fill="#6cc4e8"/>
<ellipse cx="1064" cy="453" rx="5.7" ry="0.8" transform="rotate(-26 1064 453)" fill="#6cc4e8"/>
<ellipse cx="1057" cy="456" rx="9.6" ry="1.0" transform="rotate(-26 1057 456)" fill="#c2ee8e"/>
<ellipse cx="886" cy="593" rx="10.2" ry="0.7" transform="rotate(-22 886 593)" fill="#c2ee8e"/>
<ellipse cx="952" cy="534" rx="10.2" ry="0.6" transform="rotate(-30 952 534)" fill="#6cc4e8"/>
<ellipse cx="1200" cy="374" rx="4.9" ry="0.6" transform="rotate(-26 1200 374)" fill="#c2ee8e"/>
<ellipse cx="1145" cy="389" rx="7.4" ry="0.8" transform="rotate(-24 1145 389)" fill="#6cc4e8"/>
<ellipse cx="1205" cy="387" rx="3.3" ry="1.2" transform="rotate(-23 1205 387)" fill="#6cc4e8"/>
<ellipse cx="1041" cy="447" rx="6.9" ry="0.9" transform="rotate(-28 1041 447)" fill="#6cc4e8"/>
<ellipse cx="1135" cy="387" rx="3.4" ry="0.9" transform="rotate(-22 1135 387)" fill="#6cc4e8"/>
<ellipse cx="946" cy="519" rx="9.2" ry="1.0" transform="rotate(-32 946 519)" fill="#c2ee8e"/>
<ellipse cx="1133" cy="429" rx="6.9" ry="0.6" transform="rotate(-30 1133 429)" fill="#6cc4e8"/>
<ellipse cx="1089" cy="400" rx="4.8" ry="0.9" transform="rotate(-20 1089 400)" fill="#6cc4e8"/>
<ellipse cx="1023" cy="450" rx="3.7" ry="0.8" transform="rotate(-29 1023 450)" fill="#6cc4e8"/>
<ellipse cx="992" cy="490" rx="6.8" ry="1.1" transform="rotate(-29 992 490)" fill="#c2ee8e"/>
<ellipse cx="1074" cy="395" rx="6.6" ry="1.1" transform="rotate(-25 1074 395)" fill="#6cc4e8"/>
<ellipse cx="1068" cy="423" rx="3.0" ry="0.8" transform="rotate(-28 1068 423)" fill="#6cc4e8"/>
<ellipse cx="1066" cy="430" rx="3.1" ry="1.0" transform="rotate(-25 1066 430)" fill="#6cc4e8"/>
<ellipse cx="1086" cy="403" rx="9.7" ry="1.0" transform="rotate(-32 1086 403)" fill="#6cc4e8"/>
<ellipse cx="1130" cy="401" rx="4.1" ry="0.9" transform="rotate(-21 1130 401)" fill="#6cc4e8"/>
<ellipse cx="1135" cy="386" rx="9.1" ry="0.6" transform="rotate(-29 1135 386)" fill="#6cc4e8"/>
<ellipse cx="1105" cy="386" rx="4.9" ry="1.1" transform="rotate(-27 1105 386)" fill="#6cc4e8"/>
<ellipse cx="904" cy="563" rx="9.1" ry="1.1" transform="rotate(-23 904 563)" fill="#c2ee8e"/>
<ellipse cx="1145" cy="391" rx="10.9" ry="1.0" transform="rotate(-31 1145 391)" fill="#c2ee8e"/>
<ellipse cx="1090" cy="424" rx="6.1" ry="1.1" transform="rotate(-30 1090 424)" fill="#c2ee8e"/>
<ellipse cx="1024" cy="469" rx="5.2" ry="0.7" transform="rotate(-24 1024 469)" fill="#6cc4e8"/>
<ellipse cx="1060" cy="413" rx="6.5" ry="1.0" transform="rotate(-24 1060 413)" fill="#6cc4e8"/>
<ellipse cx="1118" cy="430" rx="10.8" ry="1.2" transform="rotate(-30 1118 430)" fill="#c2ee8e"/>
<ellipse cx="1110" cy="406" rx="9.8" ry="0.9" transform="rotate(-28 1110 406)" fill="#6cc4e8"/>
<ellipse cx="1004" cy="496" rx="9.8" ry="1.1" transform="rotate(-35 1004 496)" fill="#c2ee8e"/>
<ellipse cx="1037" cy="445" rx="9.1" ry="1.1" transform="rotate(-20 1037 445)" fill="#c2ee8e"/>
<ellipse cx="998" cy="501" rx="7.7" ry="0.6" transform="rotate(-32 998 501)" fill="#c2ee8e"/>
<ellipse cx="1031" cy="450" rx="5.4" ry="1.1" transform="rotate(-34 1031 450)" fill="#6cc4e8"/>
<ellipse cx="1052" cy="464" rx="4.2" ry="1.0" transform="rotate(-30 1052 464)" fill="#6cc4e8"/>
<ellipse cx="1019" cy="458" rx="3.1" ry="1.1" transform="rotate(-24 1019 458)" fill="#c2ee8e"/>
<ellipse cx="1129" cy="374" rx="11.0" ry="1.2" transform="rotate(-31 1129 374)" fill="#6cc4e8"/>
<ellipse cx="1207" cy="383" rx="9.4" ry="0.7" transform="rotate(-22 1207 383)" fill="#c2ee8e"/>
<ellipse cx="1059" cy="448" rx="8.1" ry="1.0" transform="rotate(-24 1059 448)" fill="#6cc4e8"/>
<ellipse cx="1068" cy="438" rx="8.1" ry="1.1" transform="rotate(-25 1068 438)" fill="#6cc4e8"/>
<ellipse cx="1056" cy="464" rx="7.1" ry="1.2" transform="rotate(-25 1056 464)" fill="#c2ee8e"/>
<ellipse cx="975" cy="493" rx="9.2" ry="0.6" transform="rotate(-25 975 493)" fill="#c2ee8e"/>
<ellipse cx="1087" cy="433" rx="4.1" ry="0.5" transform="rotate(-28 1087 433)" fill="#6cc4e8"/>
<ellipse cx="1087" cy="428" rx="10.2" ry="1.0" transform="rotate(-29 1087 428)" fill="#6cc4e8"/>
<ellipse cx="1187" cy="375" rx="3.8" ry="0.7" transform="rotate(-31 1187 375)" fill="#6cc4e8"/>
<ellipse cx="1069" cy="456" rx="4.9" ry="0.8" transform="rotate(-25 1069 456)" fill="#6cc4e8"/>
<ellipse cx="1127" cy="398" rx="5.5" ry="0.7" transform="rotate(-33 1127 398)" fill="#6cc4e8"/>
<ellipse cx="1106" cy="375" rx="4.3" ry="1.2" transform="rotate(-27 1106 375)" fill="#6cc4e8"/>
<ellipse cx="1142" cy="371" rx="4.3" ry="0.7" transform="rotate(-29 1142 371)" fill="#6cc4e8"/>
<ellipse cx="1085" cy="443" rx="6.3" ry="0.7" transform="rotate(-25 1085 443)" fill="#6cc4e8"/>
<ellipse cx="1076" cy="449" rx="9.4" ry="0.7" transform="rotate(-28 1076 449)" fill="#6cc4e8"/>
<ellipse cx="973" cy="516" rx="9.6" ry="1.0" transform="rotate(-23 973 516)" fill="#c2ee8e"/>
<ellipse cx="1112" cy="406" rx="10.9" ry="0.9" transform="rotate(-26 1112 406)" fill="#6cc4e8"/>
<ellipse cx="1089" cy="401" rx="8.3" ry="1.0" transform="rotate(-24 1089 401)" fill="#c2ee8e"/>
<ellipse cx="1048" cy="458" rx="10.9" ry="0.8" transform="rotate(-32 1048 458)" fill="#c2ee8e"/>
<ellipse cx="1052" cy="446" rx="8.4" ry="1.1" transform="rotate(-27 1052 446)" fill="#6cc4e8"/>
<ellipse cx="1183" cy="391" rx="4.4" ry="1.1" transform="rotate(-34 1183 391)" fill="#c2ee8e"/>
<ellipse cx="1086" cy="410" rx="8.8" ry="0.8" transform="rotate(-30 1086 410)" fill="#6cc4e8"/>
<ellipse cx="1004" cy="489" rx="10.9" ry="0.7" transform="rotate(-25 1004 489)" fill="#c2ee8e"/>
<ellipse cx="1120" cy="397" rx="3.2" ry="0.9" transform="rotate(-25 1120 397)" fill="#c2ee8e"/>
<ellipse cx="867" cy="616" rx="6.0" ry="0.7" transform="rotate(-27 867 616)" fill="#c2ee8e"/>
<ellipse cx="1079" cy="434" rx="10.8" ry="1.1" transform="rotate(-22 1079 434)" fill="#6cc4e8"/>
<ellipse cx="1185" cy="374" rx="9.3" ry="0.7" transform="rotate(-31 1185 374)" fill="#c2ee8e"/>
<ellipse cx="1040" cy="443" rx="4.6" ry="0.9" transform="rotate(-32 1040 443)" fill="#c2ee8e"/>
<ellipse cx="1141" cy="380" rx="8.4" ry="0.8" transform="rotate(-24 1141 380)" fill="#6cc4e8"/>
<ellipse cx="976" cy="505" rx="3.7" ry="1.2" transform="rotate(-32 976 505)" fill="#c2ee8e"/>
<ellipse cx="1177" cy="362" rx="5.1" ry="0.6" transform="rotate(-34 1177 362)" fill="#6cc4e8"/>
<ellipse cx="1160" cy="376" rx="9.7" ry="0.6" transform="rotate(-33 1160 376)" fill="#6cc4e8"/>
<ellipse cx="1193" cy="368" rx="6.6" ry="1.0" transform="rotate(-26 1193 368)" fill="#efd095"/>
<ellipse cx="1118" cy="414" rx="8.4" ry="0.7" transform="rotate(-25 1118 414)" fill="#6cc4e8"/>
<ellipse cx="1109" cy="419" rx="7.6" ry="0.7" transform="rotate(-33 1109 419)" fill="#6cc4e8"/>
<ellipse cx="1098" cy="404" rx="7.5" ry="1.0" transform="rotate(-26 1098 404)" fill="#6cc4e8"/>
<ellipse cx="907" cy="557" rx="7.2" ry="0.8" transform="rotate(-29 907 557)" fill="#c2ee8e"/>
<ellipse cx="1160" cy="403" rx="5.8" ry="0.8" transform="rotate(-33 1160 403)" fill="#6cc4e8"/>
<ellipse cx="1160" cy="407" rx="8.5" ry="0.5" transform="rotate(-33 1160 407)" fill="#6cc4e8"/>
<ellipse cx="1061" cy="435" rx="5.3" ry="0.7" transform="rotate(-24 1061 435)" fill="#c2ee8e"/>
<ellipse cx="982" cy="502" rx="10.1" ry="0.6" transform="rotate(-33 982 502)" fill="#c2ee8e"/>
<ellipse cx="985" cy="486" rx="3.2" ry="1.1" transform="rotate(-31 985 486)" fill="#6cc4e8"/>
<ellipse cx="905" cy="566" rx="4.7" ry="1.1" transform="rotate(-32 905 566)" fill="#6cc4e8"/>
<ellipse cx="1018" cy="456" rx="6.8" ry="1.0" transform="rotate(-32 1018 456)" fill="#c2ee8e"/>
<ellipse cx="1134" cy="429" rx="7.5" ry="0.5" transform="rotate(-27 1134 429)" fill="#c2ee8e"/>
<ellipse cx="1085" cy="408" rx="8.7" ry="0.6" transform="rotate(-34 1085 408)" fill="#c2ee8e"/>
<ellipse cx="1027" cy="481" rx="9.8" ry="1.0" transform="rotate(-25 1027 481)" fill="#c2ee8e"/>
<ellipse cx="1113" cy="404" rx="6.5" ry="0.6" transform="rotate(-22 1113 404)" fill="#c2ee8e"/>
<ellipse cx="1021" cy="456" rx="3.4" ry="0.8" transform="rotate(-25 1021 456)" fill="#c2ee8e"/>
<ellipse cx="1067" cy="408" rx="10.0" ry="1.0" transform="rotate(-29 1067 408)" fill="#6cc4e8"/>
<ellipse cx="1125" cy="424" rx="10.2" ry="0.6" transform="rotate(-33 1125 424)" fill="#6cc4e8"/>
<ellipse cx="994" cy="474" rx="9.7" ry="0.9" transform="rotate(-34 994 474)" fill="#c2ee8e"/>
<ellipse cx="995" cy="475" rx="3.2" ry="0.6" transform="rotate(-21 995 475)" fill="#c2ee8e"/>
<ellipse cx="1098" cy="383" rx="9.6" ry="1.0" transform="rotate(-30 1098 383)" fill="#6cc4e8"/>
<ellipse cx="1025" cy="465" rx="6.1" ry="0.7" transform="rotate(-31 1025 465)" fill="#c2ee8e"/>
<ellipse cx="1032" cy="469" rx="10.5" ry="1.1" transform="rotate(-23 1032 469)" fill="#c2ee8e"/>
<ellipse cx="1164" cy="388" rx="10.5" ry="1.1" transform="rotate(-21 1164 388)" fill="#6cc4e8"/>
<ellipse cx="1055" cy="463" rx="11.0" ry="0.5" transform="rotate(-29 1055 463)" fill="#6cc4e8"/>
<ellipse cx="1145" cy="385" rx="3.9" ry="0.7" transform="rotate(-34 1145 385)" fill="#efd095"/>
<ellipse cx="1095" cy="395" rx="6.1" ry="1.1" transform="rotate(-28 1095 395)" fill="#6cc4e8"/>
<ellipse cx="962" cy="508" rx="7.6" ry="1.1" transform="rotate(-25 962 508)" fill="#c2ee8e"/>
<ellipse cx="970" cy="491" rx="8.5" ry="0.8" transform="rotate(-21 970 491)" fill="#c2ee8e"/>
<ellipse cx="1152" cy="416" rx="9.7" ry="1.1" transform="rotate(-28 1152 416)" fill="#6cc4e8"/>
<ellipse cx="993" cy="473" rx="4.5" ry="1.1" transform="rotate(-32 993 473)" fill="#c2ee8e"/>
<ellipse cx="992" cy="508" rx="7.3" ry="0.7" transform="rotate(-29 992 508)" fill="#c2ee8e"/>
<ellipse cx="1066" cy="442" rx="3.2" ry="0.6" transform="rotate(-31 1066 442)" fill="#6cc4e8"/>
<ellipse cx="1079" cy="437" rx="5.8" ry="0.6" transform="rotate(-31 1079 437)" fill="#6cc4e8"/>
<ellipse cx="1181" cy="394" rx="9.2" ry="0.5" transform="rotate(-33 1181 394)" fill="#efd095"/>
<ellipse cx="1160" cy="391" rx="10.3" ry="1.1" transform="rotate(-22 1160 391)" fill="#6cc4e8"/>
<ellipse cx="1171" cy="371" rx="7.3" ry="0.7" transform="rotate(-30 1171 371)" fill="#c2ee8e"/>
<ellipse cx="1134" cy="379" rx="8.2" ry="1.1" transform="rotate(-26 1134 379)" fill="#6cc4e8"/>
<ellipse cx="1012" cy="478" rx="9.5" ry="1.1" transform="rotate(-31 1012 478)" fill="#c2ee8e"/>
<ellipse cx="1053" cy="467" rx="4.7" ry="1.1" transform="rotate(-22 1053 467)" fill="#c2ee8e"/>
<ellipse cx="1127" cy="411" rx="4.9" ry="0.6" transform="rotate(-29 1127 411)" fill="#6cc4e8"/>
<ellipse cx="1174" cy="372" rx="4.7" ry="0.7" transform="rotate(-34 1174 372)" fill="#c2ee8e"/>
<ellipse cx="1125" cy="422" rx="4.6" ry="0.9" transform="rotate(-27 1125 422)" fill="#6cc4e8"/>
<ellipse cx="1155" cy="392" rx="3.3" ry="0.9" transform="rotate(-22 1155 392)" fill="#6cc4e8"/>
<ellipse cx="962" cy="505" rx="4.9" ry="1.1" transform="rotate(-34 962 505)" fill="#c2ee8e"/>
<ellipse cx="991" cy="475" rx="4.7" ry="1.0" transform="rotate(-26 991 475)" fill="#c2ee8e"/>
<ellipse cx="879" cy="598" rx="8.9" ry="0.8" transform="rotate(-24 879 598)" fill="#6cc4e8"/>
<ellipse cx="1196" cy="387" rx="5.8" ry="1.0" transform="rotate(-31 1196 387)" fill="#6cc4e8"/>
<ellipse cx="1042" cy="464" rx="6.5" ry="0.7" transform="rotate(-27 1042 464)" fill="#c2ee8e"/>
<ellipse cx="1109" cy="395" rx="8.1" ry="0.9" transform="rotate(-25 1109 395)" fill="#6cc4e8"/>
<ellipse cx="1081" cy="396" rx="7.8" ry="0.9" transform="rotate(-33 1081 396)" fill="#6cc4e8"/>
<ellipse cx="1114" cy="396" rx="7.0" ry="0.9" transform="rotate(-25 1114 396)" fill="#c2ee8e"/>
<ellipse cx="1065" cy="446" rx="7.2" ry="1.1" transform="rotate(-33 1065 446)" fill="#6cc4e8"/>
<ellipse cx="1152" cy="420" rx="8.3" ry="1.0" transform="rotate(-21 1152 420)" fill="#6cc4e8"/>
<ellipse cx="1150" cy="374" rx="3.3" ry="1.1" transform="rotate(-32 1150 374)" fill="#6cc4e8"/>
<ellipse cx="1190" cy="399" rx="10.5" ry="1.0" transform="rotate(-21 1190 399)" fill="#6cc4e8"/>
<ellipse cx="1067" cy="436" rx="4.7" ry="1.0" transform="rotate(-22 1067 436)" fill="#6cc4e8"/>
<ellipse cx="1120" cy="408" rx="10.4" ry="1.0" transform="rotate(-27 1120 408)" fill="#c2ee8e"/>
<ellipse cx="1095" cy="443" rx="10.4" ry="0.8" transform="rotate(-34 1095 443)" fill="#6cc4e8"/>
<ellipse cx="1145" cy="420" rx="7.2" ry="1.0" transform="rotate(-21 1145 420)" fill="#c2ee8e"/>
<ellipse cx="933" cy="522" rx="9.0" ry="1.0" transform="rotate(-26 933 522)" fill="#c2ee8e"/>
<ellipse cx="1003" cy="490" rx="10.0" ry="0.5" transform="rotate(-29 1003 490)" fill="#c2ee8e"/>
<ellipse cx="1111" cy="390" rx="8.1" ry="0.8" transform="rotate(-34 1111 390)" fill="#6cc4e8"/>
<ellipse cx="962" cy="509" rx="5.5" ry="0.9" transform="rotate(-28 962 509)" fill="#6cc4e8"/>
<ellipse cx="1031" cy="471" rx="6.6" ry="1.0" transform="rotate(-27 1031 471)" fill="#c2ee8e"/>
<ellipse cx="976" cy="488" rx="7.3" ry="0.7" transform="rotate(-25 976 488)" fill="#6cc4e8"/>
<ellipse cx="1077" cy="417" rx="10.8" ry="0.7" transform="rotate(-26 1077 417)" fill="#6cc4e8"/>
<ellipse cx="946" cy="537" rx="7.9" ry="0.5" transform="rotate(-34 946 537)" fill="#c2ee8e"/>
<ellipse cx="1044" cy="432" rx="9.9" ry="0.7" transform="rotate(-31 1044 432)" fill="#c2ee8e"/>
<ellipse cx="1044" cy="437" rx="8.9" ry="1.2" transform="rotate(-25 1044 437)" fill="#6cc4e8"/>
<ellipse cx="1166" cy="398" rx="5.0" ry="0.9" transform="rotate(-22 1166 398)" fill="#6cc4e8"/>
<ellipse cx="1113" cy="415" rx="4.2" ry="1.1" transform="rotate(-26 1113 415)" fill="#6cc4e8"/>
<ellipse cx="1022" cy="451" rx="5.5" ry="1.0" transform="rotate(-32 1022 451)" fill="#6cc4e8"/>
<ellipse cx="903" cy="567" rx="8.5" ry="0.7" transform="rotate(-29 903 567)" fill="#c2ee8e"/>
<ellipse cx="1006" cy="475" rx="5.0" ry="1.1" transform="rotate(-27 1006 475)" fill="#6cc4e8"/>
<ellipse cx="1183" cy="374" rx="10.8" ry="1.1" transform="rotate(-22 1183 374)" fill="#efd095"/>
<ellipse cx="1156" cy="391" rx="10.1" ry="0.7" transform="rotate(-26 1156 391)" fill="#6cc4e8"/>
<ellipse cx="1164" cy="382" rx="3.3" ry="0.6" transform="rotate(-21 1164 382)" fill="#6cc4e8"/>
<ellipse cx="942" cy="534" rx="7.7" ry="1.0" transform="rotate(-33 942 534)" fill="#c2ee8e"/>
<ellipse cx="1034" cy="450" rx="5.7" ry="0.5" transform="rotate(-28 1034 450)" fill="#c2ee8e"/>
<ellipse cx="1038" cy="436" rx="10.2" ry="0.6" transform="rotate(-21 1038 436)" fill="#6cc4e8"/>
<ellipse cx="951" cy="522" rx="8.0" ry="0.9" transform="rotate(-27 951 522)" fill="#c2ee8e"/>
<ellipse cx="1000" cy="480" rx="6.9" ry="0.8" transform="rotate(-27 1000 480)" fill="#c2ee8e"/>
<ellipse cx="1126" cy="378" rx="10.4" ry="1.0" transform="rotate(-27 1126 378)" fill="#6cc4e8"/>
<ellipse cx="1026" cy="476" rx="3.3" ry="1.1" transform="rotate(-26 1026 476)" fill="#c2ee8e"/>
<ellipse cx="1151" cy="382" rx="9.8" ry="1.0" transform="rotate(-24 1151 382)" fill="#6cc4e8"/>
<ellipse cx="962" cy="498" rx="10.5" ry="1.0" transform="rotate(-21 962 498)" fill="#6cc4e8"/>
<ellipse cx="943" cy="513" rx="4.5" ry="0.9" transform="rotate(-35 943 513)" fill="#c2ee8e"/>
<ellipse cx="974" cy="489" rx="4.4" ry="1.1" transform="rotate(-33 974 489)" fill="#c2ee8e"/>
<ellipse cx="1034" cy="454" rx="7.5" ry="0.7" transform="rotate(-33 1034 454)" fill="#c2ee8e"/>
<ellipse cx="1026" cy="458" rx="4.9" ry="0.7" transform="rotate(-29 1026 458)" fill="#6cc4e8"/>
<ellipse cx="1049" cy="445" rx="7.8" ry="0.7" transform="rotate(-30 1049 445)" fill="#6cc4e8"/>
<ellipse cx="1028" cy="448" rx="4.3" ry="1.1" transform="rotate(-23 1028 448)" fill="#c2ee8e"/>
<ellipse cx="1097" cy="416" rx="3.2" ry="0.9" transform="rotate(-30 1097 416)" fill="#6cc4e8"/>
<ellipse cx="974" cy="485" rx="10.6" ry="0.7" transform="rotate(-33 974 485)" fill="#6cc4e8"/>
<ellipse cx="976" cy="486" rx="6.6" ry="0.5" transform="rotate(-21 976 486)" fill="#6cc4e8"/>
<ellipse cx="1027" cy="446" rx="7.5" ry="0.5" transform="rotate(-26 1027 446)" fill="#c2ee8e"/>
<ellipse cx="1129" cy="401" rx="8.3" ry="1.0" transform="rotate(-34 1129 401)" fill="#6cc4e8"/>
<ellipse cx="973" cy="495" rx="10.1" ry="0.7" transform="rotate(-21 973 495)" fill="#6cc4e8"/>
<ellipse cx="872" cy="610" rx="9.8" ry="0.9" transform="rotate(-29 872 610)" fill="#c2ee8e"/>
<ellipse cx="1049" cy="423" rx="7.8" ry="1.0" transform="rotate(-20 1049 423)" fill="#c2ee8e"/>
<ellipse cx="1175" cy="398" rx="10.3" ry="0.5" transform="rotate(-30 1175 398)" fill="#6cc4e8"/>
<ellipse cx="1182" cy="399" rx="8.4" ry="0.8" transform="rotate(-31 1182 399)" fill="#6cc4e8"/>
<ellipse cx="1193" cy="371" rx="3.8" ry="0.6" transform="rotate(-27 1193 371)" fill="#6cc4e8"/>
<ellipse cx="1077" cy="423" rx="9.4" ry="0.9" transform="rotate(-31 1077 423)" fill="#c2ee8e"/>
<ellipse cx="991" cy="496" rx="6.7" ry="1.2" transform="rotate(-31 991 496)" fill="#c2ee8e"/>
<ellipse cx="978" cy="503" rx="10.1" ry="1.1" transform="rotate(-28 978 503)" fill="#c2ee8e"/>
<ellipse cx="1029" cy="469" rx="10.3" ry="1.2" transform="rotate(-22 1029 469)" fill="#c2ee8e"/>
<ellipse cx="1077" cy="402" rx="10.8" ry="1.0" transform="rotate(-26 1077 402)" fill="#c2ee8e"/>
<ellipse cx="1211" cy="368" rx="9.9" ry="0.8" transform="rotate(-30 1211 368)" fill="#6cc4e8"/>
<ellipse cx="962" cy="494" rx="9.2" ry="1.1" transform="rotate(-22 962 494)" fill="#c2ee8e"/>
<ellipse cx="1038" cy="463" rx="5.5" ry="0.7" transform="rotate(-25 1038 463)" fill="#c2ee8e"/>
<ellipse cx="1140" cy="407" rx="9.8" ry="1.0" transform="rotate(-24 1140 407)" fill="#c2ee8e"/>
<ellipse cx="1090" cy="410" rx="7.7" ry="1.0" transform="rotate(-28 1090 410)" fill="#6cc4e8"/>
<ellipse cx="1004" cy="461" rx="6.8" ry="0.6" transform="rotate(-25 1004 461)" fill="#efd095"/>
<ellipse cx="1100" cy="396" rx="5.1" ry="1.1" transform="rotate(-23 1100 396)" fill="#c2ee8e"/>
<ellipse cx="996" cy="507" rx="9.6" ry="1.1" transform="rotate(-30 996 507)" fill="#c2ee8e"/>
<ellipse cx="1136" cy="403" rx="9.8" ry="1.0" transform="rotate(-30 1136 403)" fill="#c2ee8e"/>
<ellipse cx="995" cy="492" rx="6.9" ry="0.7" transform="rotate(-34 995 492)" fill="#c2ee8e"/>
<ellipse cx="1082" cy="436" rx="4.6" ry="1.0" transform="rotate(-32 1082 436)" fill="#c2ee8e"/>
<ellipse cx="1054" cy="466" rx="9.9" ry="0.7" transform="rotate(-23 1054 466)" fill="#c2ee8e"/>
<ellipse cx="1053" cy="442" rx="8.6" ry="0.6" transform="rotate(-21 1053 442)" fill="#6cc4e8"/>
<ellipse cx="1044" cy="468" rx="7.1" ry="0.6" transform="rotate(-24 1044 468)" fill="#c2ee8e"/>
<ellipse cx="1189" cy="362" rx="5.4" ry="1.0" transform="rotate(-27 1189 362)" fill="#6cc4e8"/>
<ellipse cx="1135" cy="423" rx="6.1" ry="0.6" transform="rotate(-22 1135 423)" fill="#6cc4e8"/>
<ellipse cx="1168" cy="404" rx="6.8" ry="0.9" transform="rotate(-35 1168 404)" fill="#6cc4e8"/>
<ellipse cx="1174" cy="388" rx="10.5" ry="1.0" transform="rotate(-31 1174 388)" fill="#6cc4e8"/>
<ellipse cx="1073" cy="424" rx="6.4" ry="1.0" transform="rotate(-33 1073 424)" fill="#6cc4e8"/>
<ellipse cx="1036" cy="455" rx="10.2" ry="1.2" transform="rotate(-22 1036 455)" fill="#c2ee8e"/>
<ellipse cx="1070" cy="446" rx="9.0" ry="1.2" transform="rotate(-29 1070 446)" fill="#6cc4e8"/>
<ellipse cx="981" cy="501" rx="6.2" ry="0.6" transform="rotate(-24 981 501)" fill="#c2ee8e"/>
<ellipse cx="1037" cy="451" rx="3.4" ry="1.0" transform="rotate(-33 1037 451)" fill="#c2ee8e"/>
<ellipse cx="1029" cy="470" rx="3.2" ry="0.5" transform="rotate(-25 1029 470)" fill="#c2ee8e"/>
<ellipse cx="1150" cy="389" rx="5.4" ry="1.1" transform="rotate(-20 1150 389)" fill="#6cc4e8"/>
<ellipse cx="1030" cy="441" rx="5.7" ry="1.1" transform="rotate(-29 1030 441)" fill="#6cc4e8"/>
<ellipse cx="1001" cy="486" rx="8.7" ry="0.7" transform="rotate(-35 1001 486)" fill="#c2ee8e"/>
<ellipse cx="897" cy="574" rx="5.3" ry="0.9" transform="rotate(-30 897 574)" fill="#c2ee8e"/>
<ellipse cx="971" cy="678" rx="3.8" ry="0.9" transform="rotate(19 971 678)" fill="#c2ee8e"/>
<ellipse cx="967" cy="671" rx="7.6" ry="1.4" transform="rotate(-23 967 671)" fill="#c2ee8e"/>
<path d="M997.5 699.8C997.4 699.4 999.8 698.7 1000.9 698.2C1002.0 697.8 1003.8 696.8 1004.2 697.1C1004.7 697.4 1004.0 699.5 1003.6 700.0C1003.2 700.5 1002.6 700.4 1001.6 700.4C1000.6 700.4 997.6 700.2 997.5 699.8Z" fill="#c2ee8e" />
<path d="M998.2 660.2C998.2 661.1 997.4 662.3 996.4 662.3C995.4 662.3 992.9 661.1 992.1 660.2C991.3 659.4 991.1 657.8 991.8 657.2C992.5 656.7 995.2 656.4 996.3 656.9C997.4 657.4 998.2 659.3 998.2 660.2Z" fill="#c2ee8e" />
<ellipse cx="949" cy="698" rx="3.4" ry="0.6" transform="rotate(-4 949 698)" fill="#c2ee8e"/>
<ellipse cx="978" cy="680" rx="9.3" ry="1.7" transform="rotate(-63 978 680)" fill="#c2ee8e"/>
<path d="M950.7 717.1C950.2 716.3 951.8 714.5 952.5 713.8C953.2 713.1 953.9 713.1 954.7 713.1C955.5 713.1 957.1 713.0 957.2 713.9C957.3 714.8 956.3 718.2 955.2 718.7C954.1 719.2 951.2 717.9 950.7 717.1Z" fill="#c2ee8e" />
<path d="M1025.7 702.9C1025.3 703.0 1024.6 702.6 1024.5 701.9C1024.4 701.2 1024.6 699.4 1025.1 698.9C1025.6 698.4 1027.0 698.2 1027.3 698.6C1027.6 699.0 1027.4 700.3 1027.1 701.0C1026.8 701.7 1026.1 702.8 1025.7 702.9Z" fill="#c2ee8e" />
<path d="M988.6 650.7C988.0 651.1 986.8 651.5 986.2 651.1C985.6 650.7 985.0 648.7 985.2 648.2C985.4 647.7 986.5 647.8 987.3 647.9C988.1 648.0 989.7 648.3 989.9 648.8C990.1 649.3 989.2 650.3 988.6 650.7Z" fill="#c2ee8e" />
<path d="M1021.9 668.8C1021.6 668.6 1021.3 668.2 1021.3 667.7C1021.3 667.2 1021.6 666.1 1021.8 665.8C1022.0 665.5 1022.5 665.6 1022.7 666.1C1022.9 666.6 1022.9 668.3 1022.8 668.8C1022.7 669.2 1022.1 669.0 1021.9 668.8Z" fill="#c2ee8e" />
<path d="M956.8 698.3C956.4 698.5 955.6 699.1 955.1 698.8C954.6 698.5 953.8 697.0 953.7 696.3C953.6 695.6 953.7 694.5 954.3 694.7C954.9 694.9 957.0 696.7 957.4 697.3C957.8 697.9 957.2 698.0 956.8 698.3Z" fill="#c2ee8e" />
<ellipse cx="1019" cy="720" rx="3.4" ry="0.7" transform="rotate(12 1019 720)" fill="#c2ee8e"/>
<ellipse cx="1053" cy="752" rx="7.7" ry="1.5" transform="rotate(-56 1053 752)" fill="#c2ee8e"/>
<ellipse cx="978" cy="696" rx="5.5" ry="1.1" transform="rotate(-15 978 696)" fill="#c2ee8e"/>
<path d="M1017.9 696.7C1017.6 697.2 1017.0 697.8 1016.4 697.6C1015.8 697.5 1014.6 696.4 1014.2 695.8C1013.8 695.2 1013.5 694.4 1014.1 694.2C1014.8 694.0 1017.5 694.0 1018.1 694.4C1018.7 694.8 1018.2 696.2 1017.9 696.7Z" fill="#c2ee8e" />
<path d="M1001.8 691.9C1001.8 691.2 1003.0 690.6 1004.4 690.2C1005.8 689.8 1009.3 689.3 1009.9 689.7C1010.5 690.1 1008.6 691.9 1007.7 692.6C1006.8 693.3 1005.7 694.2 1004.7 694.1C1003.7 694.0 1001.8 692.5 1001.8 691.9Z" fill="#c2ee8e" />
<ellipse cx="1036" cy="709" rx="9.4" ry="1.7" transform="rotate(14 1036 709)" fill="#c2ee8e"/>
<ellipse cx="1009" cy="672" rx="5.2" ry="1.6" transform="rotate(25 1009 672)" fill="#c2ee8e"/>
<path d="M987.8 679.4C987.5 678.9 987.4 677.4 987.8 676.9C988.2 676.4 989.6 676.0 990.2 676.1C990.8 676.2 991.3 676.7 991.2 677.3C991.1 677.9 990.0 679.4 989.4 679.8C988.8 680.1 988.1 679.9 987.8 679.4Z" fill="#c2ee8e" />
<path d="M1069.3 688.4C1068.6 688.6 1067.2 688.5 1066.7 688.1C1066.2 687.7 1065.8 686.5 1066.2 685.8C1066.6 685.1 1068.1 683.7 1068.9 683.9C1069.7 684.1 1070.7 686.4 1070.8 687.1C1070.9 687.9 1070.0 688.2 1069.3 688.4Z" fill="#c2ee8e" />
<ellipse cx="979" cy="725" rx="6.7" ry="1.7" transform="rotate(69 979 725)" fill="#c2ee8e"/>
<ellipse cx="1014" cy="667" rx="5.0" ry="1.0" transform="rotate(61 1014 667)" fill="#c2ee8e"/>
<ellipse cx="971" cy="734" rx="8.6" ry="1.7" transform="rotate(-49 971 734)" fill="#c2ee8e"/>
<ellipse cx="1040" cy="690" rx="2.6" ry="0.7" transform="rotate(79 1040 690)" fill="#c2ee8e"/>
<path d="M1000.5 703.7C1000.2 703.9 998.2 703.4 997.4 702.9C996.6 702.4 995.9 701.4 995.8 700.9C995.7 700.4 996.0 699.8 996.6 699.9C997.2 700.0 998.8 701.1 999.4 701.7C1000.0 702.3 1000.8 703.5 1000.5 703.7Z" fill="#c2ee8e" />
<path d="M979.1 699.4C978.6 699.6 977.9 698.2 977.5 696.9C977.1 695.6 976.3 692.6 976.5 691.7C976.7 690.8 978.2 691.0 978.9 691.6C979.6 692.2 980.6 694.1 980.6 695.4C980.6 696.7 979.6 699.1 979.1 699.4Z" fill="#c2ee8e" />
<ellipse cx="994" cy="715" rx="3.0" ry="0.6" transform="rotate(14 994 715)" fill="#c2ee8e"/>
<path d="M1021.9 698.1C1021.2 698.0 1019.3 694.8 1018.7 693.4C1018.1 692.0 1017.8 690.6 1018.3 689.7C1018.8 688.9 1020.8 687.6 1021.6 688.3C1022.4 689.0 1023.0 692.1 1023.0 693.7C1023.0 695.3 1022.6 698.2 1021.9 698.1Z" fill="#c2ee8e" />
<path d="M1018.3 659.4C1018.0 659.0 1018.2 658.3 1018.9 657.6C1019.5 656.9 1021.2 655.4 1022.2 655.1C1023.2 654.9 1025.2 655.2 1025.0 656.1C1024.8 657.0 1022.0 659.8 1020.9 660.3C1019.8 660.8 1018.6 659.8 1018.3 659.4Z" fill="#c2ee8e" />
<path d="M996.3 678.3C995.8 677.8 996.2 675.6 996.7 674.6C997.2 673.6 998.5 672.4 999.1 672.4C999.8 672.4 1000.5 673.9 1000.6 674.8C1000.7 675.7 1000.5 677.2 999.8 677.8C999.1 678.4 996.8 678.8 996.3 678.3Z" fill="#c2ee8e" />
<path d="M1060.7 685.9C1060.8 686.2 1060.9 686.6 1060.3 686.6C1059.7 686.6 1057.3 686.1 1056.9 685.7C1056.5 685.3 1057.4 684.6 1057.9 684.4C1058.4 684.2 1059.3 684.5 1059.8 684.7C1060.3 685.0 1060.6 685.6 1060.7 685.9Z" fill="#c2ee8e" />
<ellipse cx="1061" cy="702" rx="4.3" ry="1.3" transform="rotate(40 1061 702)" fill="#c2ee8e"/>
<path d="M1061.5 749.0C1061.0 749.8 1057.6 748.9 1056.6 748.1C1055.6 747.3 1055.7 745.2 1055.5 744.3C1055.3 743.4 1055.0 742.8 1055.7 742.6C1056.4 742.5 1058.4 742.3 1059.4 743.4C1060.4 744.5 1062.0 748.2 1061.5 749.0Z" fill="#c2ee8e" />
<path d="M1018.3 689.7C1017.4 689.5 1018.6 687.2 1019.8 685.6C1021.0 684.0 1023.9 680.4 1025.4 680.1C1026.9 679.8 1028.8 682.7 1028.7 683.8C1028.7 684.9 1026.8 685.6 1025.1 686.6C1023.4 687.6 1019.2 689.9 1018.3 689.7Z" fill="#c2ee8e" />
<path d="M1076.6 797.9C1075.8 797.6 1075.2 793.8 1075.4 792.4C1075.7 791.0 1077.1 789.7 1078.1 789.2C1079.1 788.7 1081.0 788.4 1081.3 789.2C1081.6 790.0 1080.9 792.7 1080.1 794.1C1079.3 795.5 1077.4 798.2 1076.6 797.9Z" fill="#c2ee8e" />
<ellipse cx="1094" cy="678" rx="2.7" ry="1.0" transform="rotate(24 1094 678)" fill="#c2ee8e"/>
<path d="M998.9 689.3C998.7 688.5 1001.0 686.6 1002.2 685.9C1003.4 685.2 1004.9 684.8 1005.9 685.1C1006.9 685.4 1008.9 686.8 1008.5 687.7C1008.1 688.6 1005.2 690.3 1003.6 690.6C1002.0 690.9 999.1 690.1 998.9 689.3Z" fill="#c2ee8e" />
<ellipse cx="1041" cy="720" rx="6.0" ry="1.5" transform="rotate(-61 1041 720)" fill="#c2ee8e"/>
<ellipse cx="1043" cy="765" rx="6.2" ry="1.6" transform="rotate(-5 1043 765)" fill="#c2ee8e"/>
<path d="M1045.3 726.1C1045.4 726.8 1043.4 727.0 1042.1 726.6C1040.8 726.2 1038.4 725.0 1037.3 723.9C1036.2 722.8 1034.7 720.6 1035.4 720.3C1036.1 720.0 1039.8 721.2 1041.4 722.2C1043.1 723.2 1045.2 725.4 1045.3 726.1Z" fill="#c2ee8e" />
<ellipse cx="1081" cy="751" rx="6.5" ry="1.7" transform="rotate(-13 1081 751)" fill="#c2ee8e"/>
<path d="M1027.4 733.4C1027.2 733.0 1028.4 732.2 1029.0 731.9C1029.6 731.6 1030.3 731.3 1030.8 731.4C1031.3 731.5 1032.1 732.1 1032.0 732.6C1031.9 733.1 1030.8 734.4 1030.0 734.5C1029.2 734.6 1027.6 733.8 1027.4 733.4Z" fill="#c2ee8e" />
<path d="M1069.9 700.0C1069.3 700.0 1068.2 699.6 1068.0 699.1C1067.8 698.6 1068.3 697.4 1068.8 697.1C1069.3 696.8 1070.4 697.0 1070.8 697.3C1071.2 697.6 1071.6 698.4 1071.4 698.9C1071.2 699.4 1070.5 700.0 1069.9 700.0Z" fill="#c2ee8e" />
<ellipse cx="1023" cy="708" rx="4.9" ry="1.4" transform="rotate(-9 1023 708)" fill="#c2ee8e"/>
<ellipse cx="1008" cy="692" rx="3.3" ry="0.7" transform="rotate(-45 1008 692)" fill="#c2ee8e"/>
<ellipse cx="992" cy="755" rx="7.1" ry="1.4" transform="rotate(34 992 755)" fill="#c2ee8e"/>
<path d="M998.8 710.9C998.4 710.8 997.8 710.4 997.7 710.0C997.6 709.6 998.0 709.0 998.2 708.6C998.5 708.2 998.9 707.4 999.2 707.7C999.5 708.1 1000.1 710.2 1000.0 710.7C999.9 711.2 999.2 711.0 998.8 710.9Z" fill="#c2ee8e" />
<ellipse cx="1033" cy="718" rx="6.2" ry="1.5" transform="rotate(41 1033 718)" fill="#c2ee8e"/>
<ellipse cx="1034" cy="731" rx="5.8" ry="1.3" transform="rotate(16 1034 731)" fill="#c2ee8e"/>
<path d="M1048.8 691.3C1048.6 691.4 1047.6 690.7 1047.0 690.3C1046.4 689.9 1045.4 689.5 1045.2 689.1C1045.0 688.7 1045.6 688.1 1046.1 688.1C1046.6 688.1 1047.5 688.9 1048.0 689.4C1048.5 689.9 1049.0 691.1 1048.8 691.3Z" fill="#c2ee8e" />
<path d="M1068.0 700.5C1067.5 700.8 1065.4 700.7 1064.6 700.1C1063.8 699.5 1063.2 697.5 1063.3 696.9C1063.4 696.3 1064.5 696.2 1065.2 696.4C1065.9 696.6 1067.2 697.5 1067.7 698.2C1068.2 698.9 1068.5 700.2 1068.0 700.5Z" fill="#c2ee8e" />
<path d="M1058.0 757.5C1057.5 757.5 1056.3 756.9 1056.0 756.3C1055.7 755.7 1056.1 754.2 1056.4 753.7C1056.7 753.2 1057.5 753.2 1057.9 753.6C1058.3 754.0 1058.7 755.6 1058.7 756.2C1058.7 756.9 1058.5 757.5 1058.0 757.5Z" fill="#c2ee8e" />
<path d="M1048.3 693.1C1048.1 692.6 1047.7 691.4 1048.3 691.0C1048.9 690.6 1051.2 690.4 1051.7 690.7C1052.2 691.1 1051.3 692.6 1051.0 693.1C1050.7 693.6 1050.2 693.7 1049.7 693.7C1049.2 693.7 1048.5 693.6 1048.3 693.1Z" fill="#c2ee8e" />
<ellipse cx="1014" cy="748" rx="4.7" ry="1.1" transform="rotate(-70 1014 748)" fill="#c2ee8e"/>
<ellipse cx="1015" cy="715" rx="6.3" ry="1.2" transform="rotate(-9 1015 715)" fill="#c2ee8e"/>
<ellipse cx="1065" cy="733" rx="6.2" ry="1.4" transform="rotate(-35 1065 733)" fill="#c2ee8e"/>
<ellipse cx="1069" cy="704" rx="6.1" ry="1.7" transform="rotate(-8 1069 704)" fill="#c2ee8e"/>
<path d="M1042.9 747.7C1042.6 747.4 1042.5 746.5 1043.0 746.2C1043.5 745.9 1045.1 745.7 1045.7 745.9C1046.3 746.1 1046.7 746.8 1046.6 747.2C1046.5 747.6 1045.5 748.1 1044.9 748.2C1044.3 748.3 1043.2 748.0 1042.9 747.7Z" fill="#c2ee8e" />
<path d="M1084.7 709.7C1084.3 709.5 1083.4 708.8 1083.5 708.3C1083.6 707.8 1084.8 706.9 1085.2 706.7C1085.7 706.5 1086.1 706.8 1086.2 707.2C1086.3 707.7 1086.0 709.0 1085.8 709.4C1085.5 709.8 1085.1 709.9 1084.7 709.7Z" fill="#c2ee8e" />
<path d="M1083.4 714.7C1083.3 715.0 1082.3 715.1 1081.8 715.2C1081.3 715.3 1080.6 715.8 1080.3 715.5C1080.0 715.2 1079.4 713.5 1079.7 713.2C1080.0 712.9 1081.7 713.4 1082.3 713.6C1082.9 713.9 1083.5 714.4 1083.4 714.7Z" fill="#c2ee8e" />
<path d="M1060.4 714.2C1059.9 714.5 1057.9 712.8 1057.1 712.2C1056.3 711.6 1055.6 711.2 1055.6 710.4C1055.5 709.6 1056.1 707.6 1056.8 707.6C1057.5 707.6 1059.3 709.5 1059.9 710.6C1060.5 711.7 1060.9 713.9 1060.4 714.2Z" fill="#c2ee8e" />
<path d="M1058.3 732.6C1058.3 733.6 1056.0 735.7 1055.0 735.9C1054.0 736.1 1053.2 734.6 1052.5 733.6C1051.8 732.6 1050.7 730.4 1051.1 729.8C1051.5 729.2 1053.8 729.6 1055.0 730.1C1056.2 730.6 1058.3 731.6 1058.3 732.6Z" fill="#c2ee8e" />
<ellipse cx="1042" cy="677" rx="3.1" ry="1.0" transform="rotate(27 1042 677)" fill="#c2ee8e"/>
<path d="M1093.0 728.5C1093.0 729.1 1090.9 729.9 1089.1 730.2C1087.3 730.5 1082.9 730.8 1082.3 730.2C1081.7 729.6 1084.2 727.2 1085.4 726.6C1086.6 726.0 1088.1 726.5 1089.4 726.8C1090.7 727.1 1093.0 727.9 1093.0 728.5Z" fill="#c2ee8e" />
<ellipse cx="1019" cy="718" rx="5.1" ry="1.1" transform="rotate(43 1019 718)" fill="#c2ee8e"/>
<path d="M1123.3 712.7C1123.1 712.3 1123.0 710.9 1123.5 710.0C1124.0 709.1 1125.5 707.3 1126.2 707.3C1126.9 707.2 1128.0 708.8 1127.8 709.7C1127.6 710.6 1125.7 712.0 1124.9 712.5C1124.2 713.0 1123.5 713.1 1123.3 712.7Z" fill="#c2ee8e" />
<path d="M1110.1 698.7C1109.7 698.8 1108.3 697.1 1108.0 696.3C1107.7 695.5 1107.9 694.6 1108.1 694.0C1108.2 693.4 1108.5 692.3 1108.9 692.6C1109.3 692.9 1110.1 694.6 1110.3 695.6C1110.5 696.6 1110.5 698.6 1110.1 698.7Z" fill="#c2ee8e" />
<ellipse cx="1070" cy="658" rx="7.0" ry="1.3" transform="rotate(32 1070 658)" fill="#c2ee8e"/>
<ellipse cx="1083" cy="681" rx="5.7" ry="1.2" transform="rotate(-28 1083 681)" fill="#c2ee8e"/>
<ellipse cx="1081" cy="738" rx="3.8" ry="0.7" transform="rotate(-76 1081 738)" fill="#c2ee8e"/>
<path d="M1091.2 674.8C1090.7 675.4 1086.4 674.7 1084.6 673.9C1082.8 673.1 1080.4 670.9 1080.1 669.8C1079.8 668.7 1081.8 667.4 1083.0 667.5C1084.2 667.6 1086.1 669.1 1087.5 670.3C1088.9 671.5 1091.7 674.2 1091.2 674.8Z" fill="#c2ee8e" />
<ellipse cx="1063" cy="727" rx="6.7" ry="1.3" transform="rotate(-30 1063 727)" fill="#c2ee8e"/>
<path d="M1069.9 717.5C1069.4 717.2 1068.9 715.5 1069.2 714.7C1069.5 713.9 1070.9 713.1 1071.6 712.9C1072.3 712.7 1073.1 712.9 1073.2 713.5C1073.3 714.1 1072.5 715.7 1072.0 716.4C1071.5 717.1 1070.4 717.8 1069.9 717.5Z" fill="#c2ee8e" />
<path d="M1063.5 705.3C1063.5 706.2 1061.3 707.0 1060.1 707.1C1058.9 707.2 1056.6 706.4 1056.3 705.6C1056.0 704.8 1057.4 703.1 1058.0 702.4C1058.6 701.7 1059.1 700.9 1060.0 701.4C1060.9 701.9 1063.5 704.3 1063.5 705.3Z" fill="#c2ee8e" />
<ellipse cx="1013" cy="676" rx="3.2" ry="1.2" transform="rotate(-52 1013 676)" fill="#c2ee8e"/>
<path d="M1064.0 710.5C1063.6 710.0 1065.2 708.8 1066.0 708.3C1066.8 707.8 1067.8 707.2 1068.7 707.4C1069.6 707.6 1071.3 708.8 1071.2 709.4C1071.1 710.0 1069.5 711.0 1068.3 711.2C1067.1 711.4 1064.4 711.0 1064.0 710.5Z" fill="#c2ee8e" />
<path d="M1100.2 719.9C1100.2 719.4 1101.4 718.4 1102.0 718.0C1102.6 717.6 1103.1 717.4 1103.6 717.8C1104.1 718.2 1105.0 719.6 1104.8 720.2C1104.6 720.8 1103.1 721.2 1102.3 721.2C1101.5 721.2 1100.2 720.4 1100.2 719.9Z" fill="#c2ee8e" />
<ellipse cx="1071" cy="727" rx="3.6" ry="0.7" transform="rotate(-70 1071 727)" fill="#c2ee8e"/>
<ellipse cx="1029" cy="723" rx="4.1" ry="0.7" transform="rotate(43 1029 723)" fill="#c2ee8e"/>
<ellipse cx="1120" cy="772" rx="6.1" ry="1.1" transform="rotate(-18 1120 772)" fill="#c2ee8e"/>
<ellipse cx="1068" cy="745" rx="7.9" ry="1.8" transform="rotate(5 1068 745)" fill="#c2ee8e"/>
<path d="M1082.0 713.4C1081.8 713.9 1080.5 714.0 1079.3 713.8C1078.1 713.6 1075.7 712.6 1075.0 712.0C1074.3 711.4 1074.2 710.5 1075.1 710.2C1076.0 710.0 1079.0 710.0 1080.2 710.5C1081.4 711.0 1082.2 712.9 1082.0 713.4Z" fill="#c2ee8e" />
<path d="M1069.3 730.7C1068.9 730.7 1068.7 730.1 1068.7 729.5C1068.7 728.9 1068.8 727.2 1069.1 726.9C1069.4 726.5 1070.1 726.9 1070.4 727.4C1070.7 727.9 1071.2 729.2 1071.0 729.7C1070.8 730.2 1069.7 730.7 1069.3 730.7Z" fill="#c2ee8e" />
<path d="M1050.9 721.7C1050.5 722.1 1048.8 721.3 1048.2 720.7C1047.6 720.1 1047.5 719.0 1047.2 718.0C1047.0 717.0 1046.1 714.7 1046.7 714.8C1047.3 714.9 1050.2 717.2 1050.9 718.4C1051.6 719.5 1051.4 721.3 1050.9 721.7Z" fill="#c2ee8e" />
<ellipse cx="1085" cy="690" rx="7.2" ry="1.5" transform="rotate(16 1085 690)" fill="#c2ee8e"/>
<ellipse cx="1014" cy="700" rx="3.5" ry="0.7" transform="rotate(30 1014 700)" fill="#c2ee8e"/>
<ellipse cx="1086" cy="728" rx="1.7" ry="0.6" transform="rotate(66 1086 728)" fill="#c2ee8e"/>
<ellipse cx="1027" cy="670" rx="2.1" ry="0.7" transform="rotate(-17 1027 670)" fill="#c2ee8e"/>
<ellipse cx="1043" cy="704" rx="9.1" ry="1.8" transform="rotate(53 1043 704)" fill="#c2ee8e"/>
<ellipse cx="1109" cy="719" rx="6.8" ry="1.5" transform="rotate(66 1109 719)" fill="#c2ee8e"/>
<ellipse cx="1089" cy="756" rx="6.2" ry="1.3" transform="rotate(-62 1089 756)" fill="#c2ee8e"/>
<path d="M1099.3 737.6C1098.8 737.8 1097.3 737.0 1097.0 736.5C1096.7 736.0 1097.2 735.4 1097.5 734.9C1097.8 734.4 1098.4 733.3 1098.8 733.4C1099.2 733.5 1099.7 734.5 1099.8 735.2C1099.9 735.9 1099.8 737.4 1099.3 737.6Z" fill="#c2ee8e" />
<ellipse cx="1136" cy="756" rx="4.7" ry="1.0" transform="rotate(-72 1136 756)" fill="#c2ee8e"/>
<ellipse cx="1066" cy="740" rx="7.8" ry="1.7" transform="rotate(8 1066 740)" fill="#c2ee8e"/>
<ellipse cx="1094" cy="785" rx="9.9" ry="1.7" transform="rotate(11 1094 785)" fill="#c2ee8e"/>
<ellipse cx="1080" cy="702" rx="4.0" ry="0.9" transform="rotate(-7 1080 702)" fill="#c2ee8e"/>
<ellipse cx="1059" cy="738" rx="8.6" ry="1.6" transform="rotate(0 1059 738)" fill="#c2ee8e"/>
<path d="M1074.2 754.2C1073.8 754.8 1071.6 754.4 1070.5 753.7C1069.4 753.0 1067.6 750.8 1067.6 749.9C1067.5 749.0 1069.3 748.3 1070.2 748.4C1071.1 748.5 1072.3 749.2 1073.0 750.2C1073.7 751.2 1074.6 753.6 1074.2 754.2Z" fill="#c2ee8e" />
<ellipse cx="1135" cy="752" rx="5.7" ry="1.0" transform="rotate(-40 1135 752)" fill="#c2ee8e"/>
<ellipse cx="1117" cy="760" rx="4.9" ry="1.7" transform="rotate(38 1117 760)" fill="#c2ee8e"/>
<ellipse cx="1062" cy="769" rx="5.8" ry="1.6" transform="rotate(50 1062 769)" fill="#c2ee8e"/>
<ellipse cx="1098" cy="709" rx="7.1" ry="1.6" transform="rotate(1 1098 709)" fill="#c2ee8e"/>
<ellipse cx="1092" cy="764" rx="5.1" ry="0.9" transform="rotate(-18 1092 764)" fill="#c2ee8e"/>
<path d="M1085.2 707.9C1084.7 707.8 1084.7 706.5 1084.8 705.8C1084.9 705.1 1085.3 704.0 1086.0 703.9C1086.7 703.8 1088.7 704.4 1089.0 704.9C1089.3 705.4 1088.4 706.2 1087.8 706.7C1087.2 707.2 1085.7 708.0 1085.2 707.9Z" fill="#c2ee8e" />
<path d="M1088.4 790.1C1088.0 790.2 1087.5 789.8 1087.1 789.3C1086.7 788.8 1086.1 787.7 1085.9 787.0C1085.8 786.3 1085.6 784.9 1086.2 785.2C1086.8 785.5 1088.9 788.1 1089.3 788.9C1089.7 789.7 1088.8 790.0 1088.4 790.1Z" fill="#c2ee8e" />
<ellipse cx="1074" cy="762" rx="3.8" ry="0.7" transform="rotate(-39 1074 762)" fill="#c2ee8e"/>
<path d="M1083.0 676.4C1082.8 675.8 1084.1 673.4 1084.7 672.9C1085.3 672.4 1086.2 673.2 1086.8 673.4C1087.4 673.6 1088.3 673.5 1088.1 674.0C1087.9 674.5 1086.5 676.3 1085.7 676.7C1084.9 677.1 1083.2 677.0 1083.0 676.4Z" fill="#c2ee8e" />
<ellipse cx="1110" cy="717" rx="7.3" ry="1.3" transform="rotate(-42 1110 717)" fill="#c2ee8e"/>
<path d="M1065.7 701.9C1065.2 702.5 1063.6 702.6 1062.2 702.2C1060.8 701.8 1058.0 700.4 1057.2 699.4C1056.4 698.4 1056.3 696.6 1057.6 696.5C1058.9 696.4 1063.8 698.0 1065.1 698.9C1066.4 699.8 1066.2 701.3 1065.7 701.9Z" fill="#c2ee8e" />
<path d="M1107.6 751.2C1106.7 751.1 1103.9 750.0 1103.5 748.7C1103.1 747.4 1104.6 744.6 1105.1 743.2C1105.6 741.8 1105.9 739.4 1106.6 740.4C1107.3 741.4 1108.9 747.4 1109.1 749.2C1109.3 751.0 1108.5 751.3 1107.6 751.2Z" fill="#c2ee8e" />
<path d="M1067.5 776.5C1067.2 775.9 1067.7 774.5 1068.0 773.8C1068.3 773.1 1068.7 772.3 1069.4 772.3C1070.2 772.3 1072.4 772.8 1072.5 773.6C1072.6 774.5 1070.9 776.9 1070.1 777.4C1069.3 777.9 1067.8 777.1 1067.5 776.5Z" fill="#c2ee8e" />
<path d="M1110.3 671.4C1110.0 672.1 1108.3 673.3 1107.3 673.2C1106.3 673.1 1104.8 671.6 1104.3 670.9C1103.8 670.1 1103.6 669.0 1104.4 668.7C1105.2 668.4 1108.2 668.5 1109.2 669.0C1110.2 669.5 1110.6 670.7 1110.3 671.4Z" fill="#c2ee8e" />
<path d="M1072.1 739.4C1071.9 738.9 1072.8 737.8 1073.5 737.4C1074.2 737.0 1076.0 737.1 1076.4 737.3C1076.8 737.5 1076.3 738.1 1076.0 738.6C1075.7 739.1 1075.2 740.0 1074.5 740.1C1073.8 740.2 1072.3 739.9 1072.1 739.4Z" fill="#c2ee8e" />
<path d="M1142.8 751.9C1142.0 751.3 1141.5 750.4 1142.1 749.1C1142.7 747.8 1145.5 744.6 1146.6 744.0C1147.6 743.4 1148.4 744.3 1148.4 745.7C1148.4 747.1 1147.7 751.5 1146.8 752.5C1145.9 753.5 1143.6 752.5 1142.8 751.9Z" fill="#c2ee8e" />
<path d="M1088.1 682.5C1088.3 681.5 1092.0 679.2 1093.5 678.9C1095.0 678.5 1096.0 679.6 1096.8 680.4C1097.6 681.2 1099.3 683.0 1098.5 683.7C1097.7 684.5 1093.9 685.1 1092.2 684.9C1090.5 684.7 1087.9 683.5 1088.1 682.5Z" fill="#c2ee8e" />
<ellipse cx="1061" cy="745" rx="4.0" ry="1.4" transform="rotate(-2 1061 745)" fill="#c2ee8e"/>
<ellipse cx="1030" cy="792" rx="8.0" ry="1.7" transform="rotate(59 1030 792)" fill="#c2ee8e"/>
<path d="M1049.1 784.4C1048.6 784.5 1047.8 784.5 1047.5 783.6C1047.2 782.8 1047.0 780.2 1047.4 779.3C1047.9 778.4 1049.7 777.4 1050.2 778.0C1050.7 778.6 1050.7 782.1 1050.5 783.2C1050.3 784.3 1049.6 784.3 1049.1 784.4Z" fill="#c2ee8e" />
<ellipse cx="1095" cy="797" rx="5.1" ry="1.7" transform="rotate(7 1095 797)" fill="#c2ee8e"/>
<path d="M1028.6 743.8C1028.0 743.3 1027.9 742.7 1028.7 741.1C1029.5 739.5 1032.4 734.8 1033.6 734.1C1034.8 733.4 1036.1 735.1 1035.8 736.7C1035.5 738.3 1033.2 742.7 1032.0 743.9C1030.8 745.1 1029.1 744.3 1028.6 743.8Z" fill="#c2ee8e" />
<ellipse cx="1042" cy="745" rx="5.8" ry="1.2" transform="rotate(-34 1042 745)" fill="#c2ee8e"/>
<path d="M1027.8 746.6C1027.4 747.2 1025.4 748.3 1024.4 747.9C1023.4 747.5 1022.2 745.2 1022.0 744.4C1021.8 743.6 1022.5 742.9 1023.3 742.9C1024.1 742.9 1025.8 743.7 1026.6 744.3C1027.3 744.9 1028.2 746.0 1027.8 746.6Z" fill="#c2ee8e" />
<path d="M1079.3 729.9C1078.9 729.8 1078.0 729.1 1078.2 728.3C1078.4 727.4 1079.6 725.4 1080.2 724.8C1080.8 724.2 1081.8 724.1 1081.9 724.8C1082.0 725.5 1081.2 728.0 1080.8 728.9C1080.4 729.8 1079.7 730.0 1079.3 729.9Z" fill="#c2ee8e" />
<path d="M1012.3 755.1C1012.0 755.3 1011.4 755.6 1011.2 755.4C1011.0 755.1 1010.8 754.1 1011.0 753.6C1011.2 753.1 1012.0 752.5 1012.3 752.6C1012.6 752.7 1012.7 753.6 1012.7 754.0C1012.7 754.4 1012.5 754.9 1012.3 755.1Z" fill="#c2ee8e" />
<path d="M1040.1 750.3C1039.8 750.0 1039.5 748.8 1039.8 748.5C1040.0 748.2 1041.2 748.1 1041.6 748.3C1042.0 748.5 1042.4 749.2 1042.4 749.6C1042.4 750.0 1042.2 750.4 1041.8 750.5C1041.4 750.6 1040.4 750.6 1040.1 750.3Z" fill="#c2ee8e" />
<ellipse cx="1077" cy="741" rx="4.3" ry="1.5" transform="rotate(20 1077 741)" fill="#c2ee8e"/>
<path d="M1049.0 753.6C1048.5 753.5 1048.1 751.2 1048.1 750.1C1048.1 749.0 1048.4 747.5 1049.0 747.0C1049.6 746.5 1051.3 746.3 1051.6 746.9C1051.9 747.5 1051.3 749.6 1050.9 750.7C1050.5 751.8 1049.5 753.7 1049.0 753.6Z" fill="#c2ee8e" />
<ellipse cx="1029" cy="723" rx="7.6" ry="1.6" transform="rotate(55 1029 723)" fill="#c2ee8e"/>
<ellipse cx="1051" cy="768" rx="4.0" ry="0.8" transform="rotate(-1 1051 768)" fill="#c2ee8e"/>
<ellipse cx="1055" cy="746" rx="5.4" ry="1.3" transform="rotate(-67 1055 746)" fill="#c2ee8e"/>
<ellipse cx="1080" cy="700" rx="7.3" ry="1.6" transform="rotate(-26 1080 700)" fill="#c2ee8e"/>
<path d="M1035.7 796.3C1035.4 796.3 1034.7 795.8 1034.3 795.4C1033.9 795.0 1033.3 794.1 1033.5 793.6C1033.7 793.1 1034.9 792.3 1035.4 792.6C1035.9 792.9 1036.2 794.8 1036.3 795.4C1036.3 796.0 1036.0 796.3 1035.7 796.3Z" fill="#c2ee8e" />
<ellipse cx="1108" cy="723" rx="5.2" ry="1.5" transform="rotate(78 1108 723)" fill="#c2ee8e"/>
<ellipse cx="1050" cy="709" rx="7.9" ry="1.5" transform="rotate(-2 1050 709)" fill="#c2ee8e"/>
<ellipse cx="987" cy="798" rx="7.4" ry="1.8" transform="rotate(-0 987 798)" fill="#c2ee8e"/>
<path d="M1025.2 742.4C1024.9 742.9 1022.8 742.4 1021.8 741.8C1020.8 741.2 1019.5 739.8 1019.0 738.7C1018.5 737.7 1018.0 735.5 1018.7 735.5C1019.5 735.5 1022.4 737.9 1023.5 739.0C1024.6 740.1 1025.5 741.9 1025.2 742.4Z" fill="#c2ee8e" />
<path d="M1067.0 804.1C1066.8 803.5 1066.9 802.2 1067.3 801.8C1067.7 801.4 1069.1 801.4 1069.6 801.8C1070.1 802.2 1070.5 803.4 1070.3 804.0C1070.1 804.6 1069.0 805.3 1068.4 805.3C1067.9 805.3 1067.2 804.7 1067.0 804.1Z" fill="#c2ee8e" />
<path d="M1000.4 762.5C1000.2 762.0 1000.2 761.1 1000.8 760.8C1001.4 760.5 1003.5 760.5 1004.2 760.9C1004.9 761.3 1005.5 762.5 1005.1 763.0C1004.7 763.5 1002.8 763.7 1002.0 763.6C1001.2 763.5 1000.6 763.0 1000.4 762.5Z" fill="#c2ee8e" />
<path d="M1041.5 770.0C1040.8 769.7 1039.5 768.1 1039.5 767.3C1039.5 766.5 1040.8 765.6 1041.8 765.2C1042.8 764.9 1045.5 764.6 1045.8 765.2C1046.1 765.8 1044.3 768.1 1043.6 768.9C1042.9 769.7 1042.2 770.3 1041.5 770.0Z" fill="#c2ee8e" />
<ellipse cx="1047" cy="742" rx="2.4" ry="0.9" transform="rotate(39 1047 742)" fill="#c2ee8e"/>
<ellipse cx="1078" cy="810" rx="4.7" ry="1.0" transform="rotate(38 1078 810)" fill="#c2ee8e"/>
<path d="M1052.2 794.5C1052.2 794.2 1052.8 793.9 1053.3 793.6C1053.8 793.4 1054.7 792.8 1055.0 793.0C1055.3 793.2 1055.7 794.2 1055.4 794.6C1055.1 795.0 1053.9 795.6 1053.4 795.6C1052.9 795.6 1052.2 794.8 1052.2 794.5Z" fill="#c2ee8e" />
<path d="M1046.4 735.4C1046.0 735.6 1044.2 733.6 1042.9 731.5C1041.6 729.4 1038.8 723.7 1038.7 722.6C1038.6 721.5 1041.2 723.5 1042.3 724.8C1043.4 726.1 1044.9 728.5 1045.6 730.3C1046.3 732.1 1046.9 735.2 1046.4 735.4Z" fill="#c2ee8e" />
<ellipse cx="1041" cy="787" rx="3.1" ry="1.0" transform="rotate(18 1041 787)" fill="#c2ee8e"/>
<path d="M1026.4 783.9C1026.0 783.9 1025.9 783.2 1026.0 782.4C1026.1 781.6 1026.8 779.5 1027.1 779.2C1027.4 778.9 1027.8 780.0 1028.1 780.6C1028.3 781.2 1028.9 782.1 1028.6 782.6C1028.3 783.1 1026.8 783.9 1026.4 783.9Z" fill="#c2ee8e" />
<ellipse cx="1053" cy="779" rx="4.8" ry="0.9" transform="rotate(-71 1053 779)" fill="#c2ee8e"/>
<ellipse cx="1029" cy="774" rx="6.1" ry="1.8" transform="rotate(54 1029 774)" fill="#c2ee8e"/>
<ellipse cx="1028" cy="732" rx="7.2" ry="1.6" transform="rotate(-10 1028 732)" fill="#c2ee8e"/>
<ellipse cx="1042" cy="768" rx="7.0" ry="1.5" transform="rotate(-56 1042 768)" fill="#c2ee8e"/>
<path d="M1014.5 754.9C1014.0 754.6 1013.1 751.5 1013.1 750.3C1013.1 749.1 1013.9 748.0 1014.4 747.6C1014.9 747.2 1015.9 747.1 1016.2 747.9C1016.5 748.7 1016.6 751.0 1016.3 752.2C1016.0 753.4 1015.0 755.2 1014.5 754.9Z" fill="#c2ee8e" />
<ellipse cx="1016" cy="773" rx="3.7" ry="0.6" transform="rotate(-26 1016 773)" fill="#c2ee8e"/>
<ellipse cx="1027" cy="747" rx="8.8" ry="1.5" transform="rotate(16 1027 747)" fill="#c2ee8e"/>
<ellipse cx="1026" cy="792" rx="3.5" ry="0.7" transform="rotate(67 1026 792)" fill="#c2ee8e"/>
<path d="M979.8 732.5C979.6 732.9 978.8 733.6 978.3 733.1C977.8 732.6 976.7 730.4 976.6 729.6C976.5 728.8 977.3 728.3 977.8 728.5C978.3 728.7 979.1 730.1 979.4 730.8C979.7 731.5 980.0 732.1 979.8 732.5Z" fill="#c2ee8e" />
<path d="M1018.3 773.6C1017.7 774.1 1014.2 773.3 1013.0 772.3C1011.8 771.3 1011.2 768.5 1011.3 767.6C1011.4 766.7 1012.6 766.3 1013.5 766.6C1014.4 766.9 1016.0 768.3 1016.8 769.5C1017.6 770.7 1018.9 773.1 1018.3 773.6Z" fill="#c2ee8e" />
<ellipse cx="1084" cy="779" rx="5.2" ry="1.0" transform="rotate(33 1084 779)" fill="#c2ee8e"/>
<ellipse cx="1035" cy="807" rx="7.3" ry="1.3" transform="rotate(-34 1035 807)" fill="#c2ee8e"/>
<path d="M985.4 721.0C984.9 721.3 984.3 720.9 984.2 720.3C984.1 719.7 984.6 718.1 984.9 717.6C985.2 717.1 985.8 717.1 986.1 717.3C986.5 717.5 987.1 718.0 987.0 718.6C986.9 719.2 985.9 720.7 985.4 721.0Z" fill="#c2ee8e" />
<ellipse cx="1091" cy="767" rx="5.1" ry="1.2" transform="rotate(5 1091 767)" fill="#c2ee8e"/>
<path d="M1014.3 774.2C1013.6 773.7 1013.3 771.5 1013.6 770.0C1013.9 768.5 1015.3 765.8 1016.1 765.0C1016.9 764.2 1018.3 763.6 1018.6 765.0C1018.9 766.4 1018.7 771.6 1018.0 773.1C1017.3 774.6 1015.0 774.7 1014.3 774.2Z" fill="#c2ee8e" />
<ellipse cx="1063" cy="789" rx="5.2" ry="1.0" transform="rotate(-66 1063 789)" fill="#c2ee8e"/>
<ellipse cx="1027" cy="807" rx="3.3" ry="0.7" transform="rotate(8 1027 807)" fill="#c2ee8e"/>
<path d="M1028.9 809.1C1028.8 809.6 1028.1 810.0 1027.1 809.8C1026.1 809.6 1023.4 808.4 1022.9 807.7C1022.4 807.0 1023.4 805.9 1024.3 805.8C1025.1 805.7 1027.2 806.3 1028.0 806.9C1028.8 807.5 1029.1 808.6 1028.9 809.1Z" fill="#c2ee8e" />
<ellipse cx="1068" cy="820" rx="3.4" ry="0.8" transform="rotate(0 1068 820)" fill="#c2ee8e"/>
<ellipse cx="1000" cy="805" rx="2.8" ry="0.9" transform="rotate(-50 1000 805)" fill="#c2ee8e"/>
<ellipse cx="1030" cy="776" rx="3.3" ry="1.0" transform="rotate(18 1030 776)" fill="#c2ee8e"/>
<path d="M1075.3 782.9C1075.2 782.3 1076.3 780.5 1076.9 780.0C1077.5 779.5 1078.5 779.6 1079.1 779.8C1079.6 780.0 1080.5 780.5 1080.2 781.2C1080.0 781.9 1078.4 783.5 1077.6 783.8C1076.8 784.1 1075.4 783.5 1075.3 782.9Z" fill="#c2ee8e" />
<ellipse cx="1048" cy="797" rx="9.4" ry="1.7" transform="rotate(10 1048 797)" fill="#c2ee8e"/>
<path d="M1028.9 788.9C1028.4 788.5 1028.1 786.7 1028.5 786.2C1028.9 785.7 1030.6 785.5 1031.3 785.7C1032.0 785.9 1032.4 786.9 1032.4 787.4C1032.4 787.9 1032.1 788.4 1031.5 788.6C1030.9 788.9 1029.4 789.3 1028.9 788.9Z" fill="#c2ee8e" />
<ellipse cx="1040" cy="792" rx="3.5" ry="1.3" transform="rotate(32 1040 792)" fill="#c2ee8e"/>
<path d="M1019.3 778.9C1019.2 779.3 1018.8 780.4 1018.4 780.4C1018.0 780.4 1017.3 779.1 1017.1 778.7C1016.9 778.3 1017.0 777.9 1017.3 777.8C1017.6 777.6 1018.4 777.6 1018.7 777.8C1019.0 778.0 1019.3 778.5 1019.3 778.9Z" fill="#c2ee8e" />
<ellipse cx="1041" cy="780" rx="5.8" ry="1.1" transform="rotate(-26 1041 780)" fill="#c2ee8e"/>
<ellipse cx="1072" cy="816" rx="3.2" ry="0.9" transform="rotate(-36 1072 816)" fill="#c2ee8e"/>
<path d="M1034.4 792.7C1034.1 793.1 1032.6 793.4 1031.8 793.2C1031.0 793.1 1029.9 792.3 1029.7 791.8C1029.5 791.3 1029.9 790.3 1030.5 790.1C1031.1 789.9 1032.8 790.2 1033.4 790.6C1034.1 791.0 1034.7 792.3 1034.4 792.7Z" fill="#c2ee8e" />
<path d="M1067.5 767.7C1067.1 768.3 1064.6 768.5 1063.8 768.3C1063.0 768.1 1062.8 767.2 1062.8 766.6C1062.8 766.0 1062.9 765.0 1063.5 764.7C1064.1 764.4 1065.5 764.1 1066.2 764.6C1066.9 765.1 1067.9 767.1 1067.5 767.7Z" fill="#c2ee8e" />
<path d="M1137.7 755.6C1137.1 756.1 1134.8 756.4 1134.1 755.6C1133.4 754.8 1132.9 751.9 1133.4 750.9C1133.9 749.9 1136.3 749.1 1137.0 749.4C1137.7 749.7 1137.5 751.8 1137.6 752.8C1137.7 753.8 1138.3 755.1 1137.7 755.6Z" fill="#c2ee8e" />
<ellipse cx="1108" cy="745" rx="3.7" ry="0.6" transform="rotate(-17 1108 745)" fill="#c2ee8e"/>
<path d="M1056.3 749.5C1055.2 749.9 1052.9 750.1 1051.4 749.2C1049.9 748.3 1047.1 745.3 1047.1 744.3C1047.1 743.3 1049.4 742.7 1051.2 743.1C1053.0 743.5 1056.9 745.6 1057.7 746.7C1058.5 747.8 1057.3 749.1 1056.3 749.5Z" fill="#c2ee8e" />
<ellipse cx="1056" cy="722" rx="5.9" ry="1.6" transform="rotate(42 1056 722)" fill="#c2ee8e"/>
<path d="M1049.9 767.1C1049.9 767.7 1049.0 768.8 1047.9 768.7C1046.8 768.7 1043.6 767.3 1043.1 766.8C1042.6 766.3 1044.0 766.1 1044.8 765.8C1045.6 765.5 1047.2 764.9 1048.1 765.1C1048.9 765.3 1049.9 766.5 1049.9 767.1Z" fill="#c2ee8e" />
<ellipse cx="1133" cy="795" rx="2.6" ry="0.7" transform="rotate(74 1133 795)" fill="#c2ee8e"/>
<path d="M1076.9 780.2C1076.7 780.6 1076.0 781.0 1075.7 780.8C1075.4 780.6 1074.9 779.6 1074.9 779.2C1074.9 778.8 1075.2 778.5 1075.5 778.4C1075.8 778.3 1076.7 778.2 1076.9 778.5C1077.1 778.8 1077.1 779.8 1076.9 780.2Z" fill="#c2ee8e" />
<ellipse cx="1164" cy="732" rx="3.4" ry="1.1" transform="rotate(27 1164 732)" fill="#c2ee8e"/>
<ellipse cx="1106" cy="665" rx="3.2" ry="0.8" transform="rotate(9 1106 665)" fill="#c2ee8e"/>
<path d="M1088.3 733.1C1088.1 732.7 1088.6 732.2 1089.3 731.6C1090.0 731.0 1092.1 729.4 1092.6 729.4C1093.1 729.4 1092.6 730.9 1092.3 731.6C1092.0 732.3 1091.2 733.5 1090.5 733.8C1089.8 734.0 1088.5 733.5 1088.3 733.1Z" fill="#c2ee8e" />
<ellipse cx="1070" cy="726" rx="7.0" ry="1.4" transform="rotate(10 1070 726)" fill="#c2ee8e"/>
<ellipse cx="1082" cy="743" rx="6.1" ry="1.2" transform="rotate(-49 1082 743)" fill="#c2ee8e"/>
<ellipse cx="1091" cy="776" rx="4.3" ry="1.2" transform="rotate(65 1091 776)" fill="#c2ee8e"/>
<path d="M1078.4 765.2C1078.2 765.5 1077.1 766.4 1076.7 766.4C1076.3 766.4 1076.0 765.8 1076.0 765.3C1076.0 764.8 1076.4 763.6 1076.7 763.5C1077.0 763.4 1077.3 764.1 1077.6 764.4C1077.9 764.7 1078.6 764.9 1078.4 765.2Z" fill="#c2ee8e" />
<ellipse cx="1077" cy="765" rx="2.1" ry="0.7" transform="rotate(-6 1077 765)" fill="#c2ee8e"/>
<ellipse cx="1074" cy="747" rx="4.1" ry="1.3" transform="rotate(-64 1074 747)" fill="#c2ee8e"/>
<path d="M1053.7 730.4C1053.9 729.4 1056.7 727.8 1058.8 727.3C1060.9 726.8 1065.1 727.1 1066.3 727.6C1067.5 728.1 1067.5 729.3 1066.1 730.3C1064.6 731.2 1059.7 733.3 1057.6 733.3C1055.5 733.3 1053.5 731.4 1053.7 730.4Z" fill="#c2ee8e" />
<ellipse cx="1115" cy="781" rx="6.6" ry="1.7" transform="rotate(-51 1115 781)" fill="#c2ee8e"/>
<ellipse cx="1124" cy="749" rx="3.8" ry="0.8" transform="rotate(16 1124 749)" fill="#c2ee8e"/>
<path d="M1082.1 795.6C1081.8 795.0 1082.8 792.5 1084.0 791.7C1085.2 790.9 1088.0 790.5 1089.0 790.7C1090.0 790.9 1090.2 792.4 1089.7 793.1C1089.2 793.8 1087.1 794.7 1085.8 795.1C1084.5 795.5 1082.4 796.2 1082.1 795.6Z" fill="#c2ee8e" />
<path d="M1033.6 760.9C1033.7 761.3 1034.0 762.0 1033.4 761.9C1032.8 761.8 1030.6 760.8 1030.1 760.4C1029.6 760.0 1030.1 759.9 1030.6 759.7C1031.1 759.5 1032.4 759.0 1032.9 759.2C1033.4 759.4 1033.5 760.5 1033.6 760.9Z" fill="#c2ee8e" />
<path d="M1090.7 747.2C1089.9 746.8 1089.4 743.5 1089.7 741.7C1090.0 740.0 1091.7 737.6 1092.6 736.7C1093.5 735.8 1094.8 735.3 1095.1 736.5C1095.4 737.7 1095.4 742.3 1094.7 744.1C1094.0 745.9 1091.5 747.6 1090.7 747.2Z" fill="#c2ee8e" />
<path d="M1126.6 729.9C1126.1 730.6 1124.7 731.5 1123.9 731.5C1123.1 731.5 1121.8 730.6 1121.6 729.8C1121.4 729.0 1121.9 727.1 1122.8 726.7C1123.7 726.3 1126.5 726.8 1127.1 727.3C1127.7 727.8 1127.1 729.2 1126.6 729.9Z" fill="#c2ee8e" />
<ellipse cx="1144" cy="694" rx="7.5" ry="1.8" transform="rotate(-65 1144 694)" fill="#c2ee8e"/>
<path d="M1114.3 704.0C1113.9 703.6 1114.6 702.0 1114.8 701.3C1115.0 700.6 1115.0 699.9 1115.5 700.0C1116.0 700.1 1117.8 701.2 1118.1 701.8C1118.4 702.4 1117.7 703.4 1117.1 703.8C1116.5 704.2 1114.7 704.4 1114.3 704.0Z" fill="#c2ee8e" />
<ellipse cx="1148" cy="749" rx="2.7" ry="0.7" transform="rotate(14 1148 749)" fill="#c2ee8e"/>
<ellipse cx="1117" cy="707" rx="2.7" ry="0.8" transform="rotate(-11 1117 707)" fill="#c2ee8e"/>
<ellipse cx="1144" cy="713" rx="4.3" ry="0.9" transform="rotate(43 1144 713)" fill="#c2ee8e"/>
<path d="M1095.3 720.5C1095.0 720.9 1093.5 721.1 1092.2 720.8C1090.9 720.5 1087.9 719.4 1087.7 718.9C1087.5 718.4 1089.9 717.9 1091.0 717.9C1092.1 717.9 1093.5 718.2 1094.2 718.6C1094.9 719.0 1095.6 720.1 1095.3 720.5Z" fill="#c2ee8e" />
<ellipse cx="1094" cy="701" rx="1.7" ry="0.6" transform="rotate(1 1094 701)" fill="#c2ee8e"/>
<ellipse cx="1124" cy="733" rx="3.7" ry="1.3" transform="rotate(54 1124 733)" fill="#c2ee8e"/>
<path d="M1078.3 733.3C1077.8 733.0 1076.8 732.1 1077.2 731.5C1077.6 730.9 1079.8 730.0 1080.5 729.8C1081.2 729.6 1081.4 729.7 1081.4 730.3C1081.4 730.9 1080.8 732.8 1080.3 733.3C1079.8 733.8 1078.8 733.6 1078.3 733.3Z" fill="#c2ee8e" />
<ellipse cx="1149" cy="745" rx="1.8" ry="0.6" transform="rotate(78 1149 745)" fill="#c2ee8e"/>
<ellipse cx="1079" cy="696" rx="5.4" ry="1.1" transform="rotate(-65 1079 696)" fill="#c2ee8e"/>
<ellipse cx="1106" cy="775" rx="4.1" ry="1.3" transform="rotate(-45 1106 775)" fill="#c2ee8e"/>
<path d="M1129.3 703.3C1129.1 703.6 1128.2 703.9 1127.4 703.1C1126.6 702.3 1124.4 699.6 1124.2 698.7C1124.0 697.9 1125.4 697.6 1126.1 698.0C1126.8 698.4 1128.1 700.2 1128.6 701.1C1129.1 702.0 1129.5 703.0 1129.3 703.3Z" fill="#c2ee8e" />
<path d="M1105.8 736.3C1105.0 735.8 1104.9 733.4 1105.5 732.3C1106.1 731.2 1108.5 730.2 1109.6 729.7C1110.7 729.2 1112.0 728.4 1112.1 729.3C1112.2 730.2 1111.0 733.8 1110.0 735.0C1109.0 736.2 1106.5 736.8 1105.8 736.3Z" fill="#c2ee8e" />
<ellipse cx="1113" cy="715" rx="4.2" ry="1.7" transform="rotate(25 1113 715)" fill="#c2ee8e"/>
<path d="M1095.6 778.7C1095.0 778.7 1095.1 775.9 1095.2 774.8C1095.3 773.6 1095.7 772.3 1096.1 771.8C1096.5 771.3 1097.3 771.2 1097.8 771.7C1098.3 772.2 1099.3 773.5 1098.9 774.7C1098.5 775.9 1096.2 778.7 1095.6 778.7Z" fill="#c2ee8e" />
<path d="M1156.8 759.5C1156.2 759.2 1154.6 757.2 1154.9 755.2C1155.2 753.2 1157.6 748.2 1158.7 747.4C1159.8 746.6 1161.6 748.9 1161.6 750.5C1161.6 752.1 1159.4 755.7 1158.6 757.2C1157.8 758.7 1157.4 759.8 1156.8 759.5Z" fill="#c2ee8e" />
<ellipse cx="1133" cy="720" rx="2.2" ry="0.8" transform="rotate(6 1133 720)" fill="#c2ee8e"/>
<path d="M1109.3 744.2C1108.8 744.1 1108.5 742.4 1108.8 741.7C1109.0 741.0 1110.2 740.3 1110.8 740.1C1111.4 739.9 1112.1 739.9 1112.3 740.3C1112.5 740.7 1112.2 742.0 1111.7 742.6C1111.2 743.2 1109.8 744.4 1109.3 744.2Z" fill="#c2ee8e" />
<ellipse cx="1058" cy="756" rx="2.6" ry="0.8" transform="rotate(10 1058 756)" fill="#c2ee8e"/>
<ellipse cx="1085" cy="686" rx="6.7" ry="1.6" transform="rotate(64 1085 686)" fill="#c2ee8e"/>
<path d="M1105.1 695.1C1104.7 695.2 1103.5 694.2 1103.0 693.8C1102.5 693.4 1101.9 692.8 1102.1 692.5C1102.3 692.2 1103.4 691.9 1104.0 692.0C1104.6 692.1 1105.4 692.5 1105.6 693.0C1105.8 693.5 1105.5 695.0 1105.1 695.1Z" fill="#c2ee8e" />
<path d="M1088.0 716.3C1087.4 716.4 1086.5 715.5 1086.3 714.3C1086.1 713.1 1086.4 709.8 1086.9 709.1C1087.4 708.4 1088.9 709.3 1089.4 710.1C1089.9 710.9 1090.2 712.7 1090.0 713.7C1089.8 714.7 1088.6 716.2 1088.0 716.3Z" fill="#c2ee8e" />
<path d="M1131.8 771.6C1131.2 771.7 1130.5 770.1 1130.3 769.5C1130.1 768.9 1130.2 768.2 1130.5 767.8C1130.8 767.4 1131.6 766.7 1132.2 766.9C1132.8 767.1 1134.0 768.3 1133.9 769.1C1133.8 769.9 1132.4 771.5 1131.8 771.6Z" fill="#c2ee8e" />
<ellipse cx="1152" cy="727" rx="3.5" ry="1.4" transform="rotate(60 1152 727)" fill="#c2ee8e"/>
<path d="M1124.5 721.8C1124.5 721.4 1124.7 720.4 1125.2 719.9C1125.7 719.4 1127.2 718.8 1127.5 718.9C1127.8 719.0 1127.5 720.2 1127.1 720.7C1126.7 721.2 1125.7 721.8 1125.3 722.0C1124.9 722.2 1124.5 722.1 1124.5 721.8Z" fill="#c2ee8e" />
<ellipse cx="1143" cy="731" rx="7.5" ry="1.5" transform="rotate(3 1143 731)" fill="#c2ee8e"/>
<ellipse cx="1149" cy="711" rx="3.1" ry="1.1" transform="rotate(-46 1149 711)" fill="#c2ee8e"/>
<ellipse cx="1144" cy="738" rx="6.4" ry="1.4" transform="rotate(-49 1144 738)" fill="#c2ee8e"/>
<path d="M1115.7 749.2C1115.1 750.0 1110.4 750.0 1108.5 749.0C1106.6 748.0 1105.0 745.1 1104.5 743.5C1104.0 741.9 1104.0 739.3 1105.2 739.4C1106.5 739.5 1110.2 742.6 1112.0 744.2C1113.8 745.8 1116.3 748.4 1115.7 749.2Z" fill="#c2ee8e" />
<ellipse cx="1084" cy="700" rx="3.4" ry="0.6" transform="rotate(-1 1084 700)" fill="#c2ee8e"/>
<path d="M1170.4 754.8C1170.2 754.5 1170.8 753.5 1171.4 753.1C1172.0 752.8 1173.5 752.5 1173.9 752.7C1174.3 752.9 1173.9 753.9 1173.6 754.3C1173.3 754.7 1172.8 754.9 1172.3 755.0C1171.8 755.1 1170.6 755.1 1170.4 754.8Z" fill="#c2ee8e" />
<ellipse cx="1121" cy="789" rx="5.8" ry="1.5" transform="rotate(-15 1121 789)" fill="#c2ee8e"/>
<ellipse cx="1156" cy="777" rx="9.7" ry="1.7" transform="rotate(56 1156 777)" fill="#c2ee8e"/>
<path d="M1079.4 777.4C1079.2 777.6 1078.9 777.6 1078.5 777.5C1078.1 777.4 1077.1 776.9 1077.1 776.6C1077.1 776.3 1078.0 775.7 1078.4 775.7C1078.8 775.7 1079.4 776.2 1079.6 776.5C1079.8 776.8 1079.6 777.2 1079.4 777.4Z" fill="#c2ee8e" />
<ellipse cx="1150" cy="748" rx="9.0" ry="1.6" transform="rotate(66 1150 748)" fill="#c2ee8e"/>
<ellipse cx="1145" cy="735" rx="3.8" ry="0.8" transform="rotate(-65 1145 735)" fill="#c2ee8e"/>
<path d="M1143.6 743.3C1143.4 743.0 1143.7 742.5 1144.1 742.0C1144.5 741.5 1145.4 740.7 1145.9 740.5C1146.4 740.3 1147.2 740.2 1147.1 740.7C1147.0 741.2 1145.8 743.1 1145.2 743.5C1144.6 743.9 1143.8 743.5 1143.6 743.3Z" fill="#c2ee8e" />
<path d="M1118.1 760.0C1117.4 760.3 1117.1 759.4 1116.5 758.9C1115.9 758.4 1114.5 757.6 1114.7 757.1C1114.9 756.6 1116.6 755.9 1117.6 755.9C1118.6 755.9 1120.8 756.4 1120.9 757.1C1121.0 757.8 1118.8 759.7 1118.1 760.0Z" fill="#c2ee8e" />
<path d="M1186.1 738.8C1185.6 739.1 1185.1 737.8 1184.5 736.8C1183.9 735.8 1182.5 733.8 1182.5 733.0C1182.5 732.2 1183.7 731.5 1184.5 731.9C1185.3 732.2 1187.0 734.0 1187.3 735.1C1187.6 736.2 1186.6 738.5 1186.1 738.8Z" fill="#c2ee8e" />
<path d="M1113.8 714.5C1113.8 714.9 1113.8 715.7 1113.4 715.7C1113.1 715.7 1112.1 715.1 1111.7 714.7C1111.3 714.3 1110.6 713.6 1110.9 713.3C1111.2 713.0 1112.9 712.9 1113.4 713.1C1113.9 713.3 1113.8 714.1 1113.8 714.5Z" fill="#c2ee8e" />
<path d="M1110.5 759.3C1110.5 758.4 1115.9 756.9 1118.1 756.4C1120.3 755.9 1122.2 755.9 1123.6 756.5C1124.9 757.1 1127.1 759.2 1126.2 760.0C1125.3 760.8 1120.8 761.6 1118.2 761.5C1115.6 761.4 1110.5 760.1 1110.5 759.3Z" fill="#c2ee8e" />
<path d="M1132.6 730.9C1131.9 730.6 1130.5 729.0 1130.4 727.4C1130.4 725.8 1131.5 722.6 1132.3 721.5C1133.1 720.4 1134.8 719.6 1135.1 720.9C1135.4 722.2 1134.8 727.4 1134.4 729.1C1134.0 730.8 1133.3 731.2 1132.6 730.9Z" fill="#c2ee8e" />
<ellipse cx="1195" cy="712" rx="4.4" ry="1.4" transform="rotate(-26 1195 712)" fill="#c2ee8e"/>
<path d="M1151.2 721.8C1150.7 722.1 1149.2 722.6 1148.7 722.0C1148.2 721.4 1147.7 718.9 1147.9 718.4C1148.1 717.9 1149.4 718.7 1150.1 719.0C1150.8 719.3 1151.7 719.9 1151.9 720.4C1152.1 720.9 1151.7 721.5 1151.2 721.8Z" fill="#c2ee8e" />
<path d="M1210.8 745.4C1210.4 745.1 1209.4 743.5 1209.5 742.8C1209.6 742.0 1210.9 741.0 1211.6 740.9C1212.3 740.8 1213.8 741.6 1213.8 742.2C1213.8 742.8 1212.4 744.2 1211.9 744.7C1211.4 745.2 1211.2 745.7 1210.8 745.4Z" fill="#c2ee8e" />
<ellipse cx="1207" cy="695" rx="5.6" ry="1.0" transform="rotate(-30 1207 695)" fill="#c2ee8e"/>
<ellipse cx="1206" cy="765" rx="3.2" ry="0.7" transform="rotate(64 1206 765)" fill="#c2ee8e"/>
<path d="M1203.3 710.6C1202.8 710.6 1202.0 710.4 1202.1 709.9C1202.1 709.4 1203.1 707.8 1203.6 707.5C1204.1 707.2 1205.0 707.6 1205.2 708.0C1205.4 708.4 1205.2 709.7 1204.9 710.1C1204.6 710.5 1203.8 710.6 1203.3 710.6Z" fill="#c2ee8e" />
<ellipse cx="1169" cy="706" rx="6.3" ry="1.2" transform="rotate(-46 1169 706)" fill="#c2ee8e"/>
<ellipse cx="1168" cy="764" rx="4.4" ry="0.9" transform="rotate(40 1168 764)" fill="#c2ee8e"/>
<ellipse cx="1158" cy="743" rx="8.5" ry="1.7" transform="rotate(56 1158 743)" fill="#c2ee8e"/>
<ellipse cx="1131" cy="778" rx="4.6" ry="1.0" transform="rotate(-62 1131 778)" fill="#c2ee8e"/>
<path d="M1211.2 739.5C1211.0 740.2 1209.1 740.7 1207.4 740.3C1205.8 739.9 1202.1 738.0 1201.3 737.2C1200.5 736.4 1201.5 735.5 1202.7 735.3C1204.0 735.1 1207.4 735.5 1208.8 736.2C1210.2 736.9 1211.4 738.8 1211.2 739.5Z" fill="#c2ee8e" />
<path d="M1161.3 698.0C1161.1 698.2 1159.6 697.9 1159.0 697.5C1158.4 697.1 1157.9 696.2 1157.7 695.7C1157.5 695.2 1157.4 694.3 1157.8 694.4C1158.2 694.5 1159.6 695.6 1160.2 696.2C1160.8 696.8 1161.5 697.8 1161.3 698.0Z" fill="#c2ee8e" />
<path d="M1219.3 745.0C1218.8 744.7 1218.5 743.4 1218.7 742.5C1218.9 741.6 1219.5 740.0 1220.3 739.9C1221.1 739.8 1223.5 741.0 1223.7 741.7C1223.9 742.5 1222.4 743.9 1221.7 744.4C1221.0 744.9 1219.8 745.3 1219.3 745.0Z" fill="#c2ee8e" />
<path d="M1159.9 756.3C1160.1 755.8 1160.5 755.1 1161.0 754.9C1161.5 754.7 1162.5 754.9 1163.0 755.3C1163.5 755.7 1164.4 756.8 1163.9 757.2C1163.4 757.6 1160.8 758.0 1160.1 757.9C1159.4 757.8 1159.8 756.8 1159.9 756.3Z" fill="#c2ee8e" />
<ellipse cx="1195" cy="714" rx="5.9" ry="1.1" transform="rotate(25 1195 714)" fill="#c2ee8e"/>
<path d="M1160.9 685.7C1160.1 685.8 1158.7 685.0 1158.5 683.7C1158.3 682.4 1159.0 678.6 1159.8 677.9C1160.6 677.1 1162.8 678.4 1163.4 679.2C1164.0 680.0 1163.8 681.8 1163.4 682.9C1163.0 684.0 1161.7 685.6 1160.9 685.7Z" fill="#c2ee8e" />
<path d="M1159.5 730.7C1159.3 730.1 1160.5 729.3 1161.2 728.7C1161.9 728.1 1163.2 727.1 1163.9 727.3C1164.6 727.5 1165.7 729.2 1165.5 730.1C1165.3 731.0 1163.5 732.4 1162.5 732.5C1161.5 732.6 1159.7 731.3 1159.5 730.7Z" fill="#c2ee8e" />
<path d="M1174.0 759.0C1173.3 758.4 1172.7 755.6 1174.3 754.1C1175.9 752.6 1182.3 749.9 1183.8 749.9C1185.3 749.9 1184.0 752.6 1183.2 753.9C1182.4 755.2 1180.2 756.8 1178.7 757.6C1177.2 758.5 1174.7 759.6 1174.0 759.0Z" fill="#c2ee8e" />
<path d="M1210.9 716.4C1210.8 716.0 1211.8 714.0 1212.3 713.5C1212.8 713.0 1213.5 713.4 1213.9 713.6C1214.3 713.8 1215.0 714.5 1214.8 714.9C1214.6 715.3 1213.6 715.9 1212.9 716.1C1212.2 716.4 1211.0 716.8 1210.9 716.4Z" fill="#c2ee8e" />
<path d="M1141.5 740.3C1140.9 740.9 1139.5 741.2 1138.3 741.2C1137.1 741.2 1134.9 741.2 1134.4 740.5C1133.9 739.8 1134.2 737.4 1135.4 736.9C1136.6 736.4 1140.7 736.7 1141.7 737.3C1142.7 737.9 1142.1 739.6 1141.5 740.3Z" fill="#c2ee8e" />
<ellipse cx="1126" cy="703" rx="8.6" ry="1.8" transform="rotate(80 1126 703)" fill="#c2ee8e"/>
<ellipse cx="1208" cy="703" rx="2.7" ry="0.8" transform="rotate(-21 1208 703)" fill="#c2ee8e"/>
<path d="M1148.7 665.9C1148.5 664.9 1147.8 663.5 1148.8 663.1C1149.8 662.7 1154.0 663.1 1154.9 663.7C1155.8 664.3 1154.9 666.0 1154.1 666.9C1153.3 667.8 1150.8 669.4 1149.9 669.2C1149.0 669.0 1148.9 666.9 1148.7 665.9Z" fill="#c2ee8e" />
<path d="M1209.1 661.4C1208.5 661.6 1206.8 660.6 1205.8 659.6C1204.8 658.6 1203.2 656.4 1202.9 655.3C1202.6 654.1 1203.2 652.2 1204.2 652.7C1205.2 653.2 1208.3 656.7 1209.1 658.1C1209.9 659.5 1209.6 661.1 1209.1 661.4Z" fill="#c2ee8e" />
<path d="M1170.9 672.6C1170.2 672.5 1170.2 671.1 1171.0 669.7C1171.8 668.3 1174.8 664.6 1175.6 664.2C1176.3 663.8 1175.6 666.1 1175.5 667.2C1175.4 668.3 1175.7 669.7 1174.9 670.6C1174.1 671.5 1171.6 672.8 1170.9 672.6Z" fill="#c2ee8e" />
<path d="M1171.5 719.4C1171.5 718.5 1172.5 716.5 1174.1 716.1C1175.7 715.7 1179.7 716.4 1180.9 717.1C1182.1 717.8 1182.7 719.5 1181.5 720.2C1180.3 720.9 1175.5 721.4 1173.8 721.3C1172.1 721.2 1171.5 720.3 1171.5 719.4Z" fill="#c2ee8e" />
<path d="M1170.3 696.6C1170.2 696.1 1170.5 694.4 1171.1 694.2C1171.7 694.0 1173.0 695.1 1173.7 695.5C1174.4 695.9 1175.7 696.5 1175.3 696.8C1174.9 697.1 1172.3 697.4 1171.5 697.4C1170.7 697.4 1170.4 697.1 1170.3 696.6Z" fill="#c2ee8e" />
<path d="M1217.0 688.5C1216.4 687.9 1217.1 686.6 1218.2 686.1C1219.3 685.6 1222.5 685.2 1223.5 685.3C1224.5 685.4 1224.2 685.8 1223.9 686.5C1223.7 687.2 1223.2 689.3 1222.0 689.6C1220.8 689.9 1217.6 689.1 1217.0 688.5Z" fill="#c2ee8e" />
<ellipse cx="1216" cy="724" rx="5.0" ry="1.1" transform="rotate(-48 1216 724)" fill="#c2ee8e"/>
<path d="M1228.1 684.3C1227.9 683.7 1227.8 682.4 1228.2 682.1C1228.6 681.9 1229.8 682.4 1230.4 682.8C1231.1 683.1 1232.2 683.7 1232.1 684.2C1232.0 684.7 1230.3 685.8 1229.6 685.8C1228.9 685.8 1228.3 684.9 1228.1 684.3Z" fill="#c2ee8e" />
<ellipse cx="1197" cy="696" rx="4.9" ry="1.1" transform="rotate(-74 1197 696)" fill="#c2ee8e"/>
<path d="M1200.0 713.2C1199.6 714.0 1196.4 714.6 1195.0 713.6C1193.6 712.6 1191.9 709.1 1191.6 707.4C1191.2 705.7 1191.9 703.2 1192.9 703.4C1193.9 703.6 1196.3 707.0 1197.5 708.6C1198.7 710.2 1200.4 712.4 1200.0 713.2Z" fill="#c2ee8e" />
<path d="M1184.5 686.4C1184.2 686.1 1185.2 685.1 1185.5 684.4C1185.8 683.7 1185.9 682.6 1186.5 682.2C1187.1 681.9 1188.8 681.7 1188.9 682.3C1189.0 682.9 1187.8 685.3 1187.1 686.0C1186.4 686.7 1184.8 686.7 1184.5 686.4Z" fill="#c2ee8e" />
<ellipse cx="1182" cy="713" rx="5.4" ry="1.6" transform="rotate(23 1182 713)" fill="#c2ee8e"/>
<path d="M1207.1 653.0C1206.4 652.5 1205.9 648.7 1206.8 646.4C1207.7 644.1 1211.1 639.8 1212.3 639.4C1213.5 639.0 1214.4 642.2 1214.2 643.9C1214.0 645.5 1212.4 647.8 1211.2 649.3C1210.0 650.8 1207.8 653.5 1207.1 653.0Z" fill="#c2ee8e" />
<path d="M1138.9 692.0C1138.8 691.7 1139.7 690.8 1140.3 690.6C1140.9 690.4 1141.8 690.7 1142.3 691.0C1142.8 691.3 1143.3 692.0 1143.0 692.3C1142.7 692.5 1141.4 692.5 1140.7 692.5C1140.0 692.5 1139.0 692.3 1138.9 692.0Z" fill="#c2ee8e" />
<ellipse cx="1163" cy="704" rx="6.6" ry="1.5" transform="rotate(6 1163 704)" fill="#c2ee8e"/>
<path d="M1204.0 707.8C1203.8 707.3 1206.8 706.3 1208.3 705.9C1209.8 705.5 1212.0 705.1 1213.3 705.4C1214.6 705.7 1216.8 707.3 1216.2 707.9C1215.6 708.5 1211.8 709.1 1209.8 709.1C1207.8 709.1 1204.2 708.3 1204.0 707.8Z" fill="#c2ee8e" />
<path d="M1175.3 687.3C1174.9 686.6 1175.6 685.2 1176.3 684.8C1177.0 684.4 1179.0 684.6 1179.7 684.9C1180.4 685.1 1180.4 685.6 1180.2 686.3C1180.0 687.0 1179.3 688.7 1178.5 688.9C1177.7 689.1 1175.7 688.0 1175.3 687.3Z" fill="#c2ee8e" />
<ellipse cx="1184" cy="714" rx="4.9" ry="1.0" transform="rotate(-74 1184 714)" fill="#c2ee8e"/>
<path d="M1173.3 719.0C1172.7 719.8 1171.5 719.4 1171.0 718.4C1170.5 717.4 1170.1 714.2 1170.2 713.3C1170.3 712.4 1171.0 712.7 1171.7 712.8C1172.4 712.9 1174.1 712.9 1174.4 713.9C1174.7 714.9 1173.9 718.2 1173.3 719.0Z" fill="#c2ee8e" />
<path d="M1143.6 660.7C1143.3 660.0 1143.5 659.0 1144.0 658.3C1144.5 657.6 1145.7 656.5 1146.3 656.7C1146.9 656.9 1147.5 658.5 1147.5 659.5C1147.5 660.5 1146.7 662.3 1146.0 662.5C1145.3 662.7 1143.9 661.4 1143.6 660.7Z" fill="#c2ee8e" />
<ellipse cx="1121" cy="699" rx="4.7" ry="0.9" transform="rotate(-54 1121 699)" fill="#c2ee8e"/>
<ellipse cx="1137" cy="677" rx="6.1" ry="1.7" transform="rotate(-72 1137 677)" fill="#c2ee8e"/>
<ellipse cx="1129" cy="712" rx="8.8" ry="1.6" transform="rotate(-28 1129 712)" fill="#c2ee8e"/>
<ellipse cx="1157" cy="662" rx="8.8" ry="1.6" transform="rotate(-66 1157 662)" fill="#c2ee8e"/>
<ellipse cx="1088" cy="690" rx="6.7" ry="1.3" transform="rotate(-29 1088 690)" fill="#c2ee8e"/>
<ellipse cx="998" cy="660" rx="8.8" ry="1.7" transform="rotate(63 998 660)" fill="#c2ee8e"/>
<path d="M973.5 625.9C973.2 626.3 972.5 627.6 972.1 627.1C971.7 626.6 971.3 623.9 971.2 622.9C971.1 621.9 971.1 620.9 971.5 621.2C971.9 621.5 973.5 623.7 973.8 624.5C974.1 625.3 973.8 625.5 973.5 625.9Z" fill="#c2ee8e" />
<ellipse cx="1013" cy="626" rx="6.6" ry="1.7" transform="rotate(-27 1013 626)" fill="#c2ee8e"/>
<ellipse cx="1015" cy="643" rx="3.5" ry="1.2" transform="rotate(-55 1015 643)" fill="#c2ee8e"/>
<path d="M953.5 624.6C952.9 624.1 954.3 622.1 955.9 621.4C957.5 620.7 961.6 620.0 963.0 620.2C964.4 620.4 964.8 622.1 964.3 622.7C963.8 623.4 961.5 623.8 959.7 624.1C957.9 624.4 954.1 625.1 953.5 624.6Z" fill="#c2ee8e" />
<path d="M983.9 652.1C984.1 651.6 985.7 650.9 986.5 650.7C987.3 650.5 988.3 650.8 988.6 651.0C988.9 651.2 988.8 651.8 988.3 652.2C987.8 652.6 986.0 653.6 985.3 653.6C984.6 653.6 983.7 652.6 983.9 652.1Z" fill="#c2ee8e" />
<path d="M1044.3 605.6C1043.8 605.0 1043.7 602.9 1044.5 601.9C1045.3 600.9 1048.2 599.6 1049.0 599.6C1049.8 599.6 1049.9 601.2 1049.6 602.1C1049.3 603.0 1048.1 604.6 1047.2 605.2C1046.3 605.8 1044.8 606.2 1044.3 605.6Z" fill="#c2ee8e" />
<ellipse cx="997" cy="650" rx="4.5" ry="1.5" transform="rotate(42 997 650)" fill="#c2ee8e"/>
<ellipse cx="1022" cy="626" rx="5.0" ry="1.4" transform="rotate(39 1022 626)" fill="#c2ee8e"/>
<path d="M949.4 613.3C948.9 613.0 948.7 611.4 949.0 610.5C949.3 609.6 950.5 607.9 951.4 607.7C952.2 607.5 954.0 608.5 954.1 609.3C954.2 610.1 952.7 611.8 951.9 612.5C951.1 613.2 949.9 613.6 949.4 613.3Z" fill="#c2ee8e" />
<ellipse cx="1086" cy="625" rx="6.1" ry="1.5" transform="rotate(-1 1086 625)" fill="#c2ee8e"/>
<ellipse cx="1070" cy="614" rx="7.3" ry="1.5" transform="rotate(57 1070 614)" fill="#c2ee8e"/>
<path d="M1114.9 622.0C1114.1 621.8 1113.2 621.0 1113.0 620.0C1112.8 619.0 1113.1 616.6 1113.7 616.1C1114.3 615.6 1116.0 616.0 1116.7 616.9C1117.4 617.8 1118.3 620.6 1118.0 621.5C1117.7 622.4 1115.7 622.2 1114.9 622.0Z" fill="#c2ee8e" />
<ellipse cx="1085" cy="596" rx="3.5" ry="0.6" transform="rotate(-49 1085 596)" fill="#c2ee8e"/>
<ellipse cx="1063" cy="632" rx="9.3" ry="1.8" transform="rotate(-64 1063 632)" fill="#c2ee8e"/>
<path d="M1137.8 592.1C1137.3 592.3 1136.6 592.2 1136.3 592.0C1136.0 591.8 1135.7 591.5 1135.8 591.1C1135.9 590.7 1136.5 589.6 1137.0 589.6C1137.5 589.6 1138.9 590.6 1139.0 591.0C1139.1 591.4 1138.2 591.9 1137.8 592.1Z" fill="#c2ee8e" />
<path d="M1082.7 644.8C1082.2 644.7 1081.8 644.4 1081.7 643.7C1081.6 643.0 1081.5 641.0 1081.9 640.6C1082.3 640.2 1083.5 641.0 1083.9 641.6C1084.4 642.2 1084.8 643.8 1084.6 644.3C1084.4 644.8 1083.2 644.9 1082.7 644.8Z" fill="#c2ee8e" />
<path d="M1115.7 613.5C1115.3 614.1 1115.1 614.9 1113.7 614.6C1112.3 614.4 1107.9 613.0 1107.1 612.0C1106.3 611.0 1107.3 609.0 1108.8 608.9C1110.3 608.8 1115.1 610.3 1116.3 611.1C1117.5 611.9 1116.1 612.9 1115.7 613.5Z" fill="#c2ee8e" />
<path d="M1108.6 612.4C1108.2 611.9 1107.0 610.7 1107.6 610.1C1108.1 609.5 1110.9 608.6 1111.9 608.7C1112.9 608.8 1113.8 610.1 1113.5 610.9C1113.2 611.6 1110.6 613.0 1109.8 613.2C1109.0 613.5 1109.0 612.9 1108.6 612.4Z" fill="#c2ee8e" />
<path d="M1075.7 650.2C1075.4 649.2 1075.0 647.0 1075.5 646.4C1076.0 645.8 1077.7 646.4 1078.4 646.8C1079.1 647.2 1080.1 647.8 1079.9 648.7C1079.7 649.6 1078.1 652.0 1077.4 652.3C1076.7 652.5 1076.0 651.2 1075.7 650.2Z" fill="#c2ee8e" />
<ellipse cx="1081" cy="662" rx="4.1" ry="1.0" transform="rotate(-10 1081 662)" fill="#c2ee8e"/>
<path d="M1072.9 607.9C1072.8 607.6 1073.2 606.8 1073.9 606.3C1074.6 605.8 1076.5 605.0 1077.0 605.1C1077.5 605.2 1077.4 606.1 1077.0 606.6C1076.6 607.1 1075.4 607.9 1074.7 608.1C1074.0 608.3 1073.0 608.2 1072.9 607.9Z" fill="#c2ee8e" />
<ellipse cx="1066" cy="637" rx="4.8" ry="1.1" transform="rotate(72 1066 637)" fill="#c2ee8e"/>
<path d="M1107.8 650.2C1107.6 649.4 1109.7 647.7 1111.1 647.4C1112.5 647.1 1115.0 647.7 1116.0 648.2C1117.0 648.7 1117.8 649.9 1117.1 650.6C1116.4 651.3 1113.6 652.4 1112.1 652.3C1110.5 652.2 1108.0 651.0 1107.8 650.2Z" fill="#c2ee8e" />
<ellipse cx="1102" cy="638" rx="6.2" ry="1.3" transform="rotate(79 1102 638)" fill="#c2ee8e"/>
<ellipse cx="1092" cy="651" rx="3.1" ry="1.0" transform="rotate(-68 1092 651)" fill="#c2ee8e"/>
<ellipse cx="1076" cy="634" rx="4.0" ry="1.5" transform="rotate(-0 1076 634)" fill="#c2ee8e"/>
<path d="M1083.1 606.2C1082.7 605.6 1082.9 603.4 1084.1 602.2C1085.3 601.0 1089.2 599.4 1090.3 599.2C1091.4 599.0 1091.5 599.8 1090.9 600.9C1090.3 602.0 1088.0 605.2 1086.7 606.1C1085.4 607.0 1083.5 606.9 1083.1 606.2Z" fill="#c2ee8e" />
<path d="M1078.5 591.4C1078.4 590.9 1080.7 590.3 1081.7 590.2C1082.7 590.1 1083.8 590.3 1084.3 590.7C1084.8 591.1 1084.8 592.4 1084.5 592.8C1084.2 593.2 1083.4 593.5 1082.4 593.3C1081.4 593.1 1078.6 591.9 1078.5 591.4Z" fill="#c2ee8e" />
<path d="M1096.6 618.1C1096.2 618.8 1094.3 618.0 1093.1 617.0C1091.9 616.0 1089.8 613.3 1089.6 612.2C1089.4 611.1 1090.9 610.1 1091.9 610.3C1092.9 610.4 1094.9 611.8 1095.7 613.1C1096.5 614.4 1097.0 617.5 1096.6 618.1Z" fill="#c2ee8e" />
<path d="M1140.8 614.2C1140.2 614.6 1139.2 612.4 1138.6 610.6C1138.0 608.8 1137.0 604.8 1137.3 603.2C1137.6 601.7 1139.6 600.4 1140.4 601.3C1141.2 602.2 1142.2 606.2 1142.3 608.4C1142.4 610.5 1141.4 613.8 1140.8 614.2Z" fill="#c2ee8e" />
<ellipse cx="1117" cy="613" rx="3.8" ry="0.8" transform="rotate(-55 1117 613)" fill="#c2ee8e"/>
<path d="M1133.1 605.4C1133.2 604.9 1134.3 604.1 1135.3 603.9C1136.3 603.7 1138.3 603.6 1139.2 604.0C1140.1 604.4 1141.2 605.7 1140.5 606.2C1139.8 606.7 1136.0 607.1 1134.8 607.0C1133.6 606.9 1133.0 605.9 1133.1 605.4Z" fill="#c2ee8e" />
<path d="M1108.6 610.1C1107.9 609.8 1107.5 606.5 1107.8 604.8C1108.1 603.0 1109.6 600.4 1110.5 599.6C1111.4 598.8 1112.9 598.7 1113.1 599.9C1113.3 601.1 1112.7 605.0 1111.9 606.7C1111.2 608.4 1109.3 610.4 1108.6 610.1Z" fill="#c2ee8e" />
<path d="M1130.3 603.4C1130.1 603.9 1129.4 604.5 1128.6 604.3C1127.8 604.1 1125.7 603.1 1125.5 602.3C1125.3 601.5 1127.0 599.7 1127.7 599.5C1128.4 599.3 1129.3 600.5 1129.7 601.1C1130.1 601.8 1130.5 602.9 1130.3 603.4Z" fill="#c2ee8e" />
<ellipse cx="1124" cy="571" rx="5.2" ry="1.7" transform="rotate(9 1124 571)" fill="#c2ee8e"/>
<ellipse cx="1120" cy="609" rx="5.9" ry="1.4" transform="rotate(-29 1120 609)" fill="#c2ee8e"/>
<ellipse cx="1131" cy="607" rx="3.0" ry="0.8" transform="rotate(8 1131 607)" fill="#c2ee8e"/>
<ellipse cx="1125" cy="576" rx="5.1" ry="1.2" transform="rotate(-30 1125 576)" fill="#c2ee8e"/>
<path d="M1106.3 581.5C1106.3 581.9 1106.3 582.4 1105.6 582.4C1104.9 582.4 1102.8 582.0 1102.3 581.6C1101.8 581.2 1102.1 580.3 1102.6 580.0C1103.1 579.7 1104.9 579.8 1105.5 580.0C1106.1 580.2 1106.3 581.1 1106.3 581.5Z" fill="#c2ee8e" />
<path d="M1110.9 602.8C1110.9 602.2 1112.4 600.9 1113.5 600.7C1114.6 600.6 1116.3 601.3 1117.4 601.9C1118.5 602.5 1120.8 603.8 1120.1 604.1C1119.4 604.5 1114.9 604.2 1113.4 604.0C1111.9 603.8 1110.9 603.3 1110.9 602.8Z" fill="#c2ee8e" />
<path d="M1154.6 617.0C1154.4 617.8 1152.9 619.4 1152.1 619.4C1151.3 619.4 1150.2 617.9 1149.7 617.1C1149.2 616.3 1148.7 615.0 1149.2 614.6C1149.8 614.2 1152.1 614.4 1153.0 614.8C1153.9 615.2 1154.8 616.2 1154.6 617.0Z" fill="#c2ee8e" />
<path d="M1095.8 592.0C1095.1 591.6 1095.1 591.1 1095.5 590.1C1095.9 589.1 1097.5 586.6 1098.3 586.2C1099.1 585.8 1100.0 586.7 1100.2 587.8C1100.5 588.9 1100.5 592.0 1099.8 592.7C1099.1 593.4 1096.5 592.4 1095.8 592.0Z" fill="#c2ee8e" />
<ellipse cx="1157" cy="655" rx="8.0" ry="1.5" transform="rotate(28 1157 655)" fill="#c2ee8e"/>
<path d="M1111.6 601.6C1111.3 601.7 1110.7 601.5 1110.4 601.2C1110.1 600.9 1109.9 600.1 1109.9 599.8C1110.0 599.5 1110.3 599.4 1110.7 599.5C1111.1 599.6 1111.9 600.2 1112.1 600.6C1112.2 601.0 1111.9 601.5 1111.6 601.6Z" fill="#c2ee8e" />
<path d="M1100.4 634.9C1100.1 635.4 1098.9 635.9 1098.5 635.4C1098.1 634.9 1097.8 632.9 1097.8 632.1C1097.8 631.3 1098.2 630.8 1098.7 630.8C1099.2 630.8 1100.2 631.7 1100.5 632.4C1100.8 633.1 1100.7 634.4 1100.4 634.9Z" fill="#c2ee8e" />
<path d="M1106.5 677.0C1106.4 676.8 1107.2 675.1 1107.6 674.6C1108.0 674.1 1108.8 674.0 1109.1 674.0C1109.3 674.0 1109.2 674.4 1109.1 674.8C1109.0 675.1 1108.7 675.7 1108.3 676.1C1107.9 676.5 1106.6 677.2 1106.5 677.0Z" fill="#c2ee8e" />
<ellipse cx="1090" cy="638" rx="4.9" ry="0.9" transform="rotate(66 1090 638)" fill="#c2ee8e"/>
<path d="M1077.8 638.1C1077.5 638.3 1076.0 638.4 1075.5 638.1C1075.0 637.8 1074.5 636.7 1074.5 636.2C1074.5 635.7 1074.7 635.0 1075.2 635.1C1075.7 635.2 1077.2 636.4 1077.6 636.9C1078.0 637.4 1078.1 637.9 1077.8 638.1Z" fill="#c2ee8e" />
<path d="M1106.1 658.1C1105.3 657.9 1104.4 656.1 1104.3 655.4C1104.2 654.6 1104.4 653.9 1105.3 653.6C1106.2 653.4 1108.7 653.4 1109.4 653.9C1110.1 654.4 1109.8 655.9 1109.3 656.6C1108.8 657.3 1106.9 658.3 1106.1 658.1Z" fill="#c2ee8e" />
<ellipse cx="1075" cy="665" rx="2.8" ry="0.7" transform="rotate(8 1075 665)" fill="#c2ee8e"/>
<ellipse cx="1080" cy="644" rx="6.4" ry="1.2" transform="rotate(3 1080 644)" fill="#c2ee8e"/>
<path d="M1118.3 670.3C1118.2 670.7 1117.3 671.2 1116.9 671.2C1116.5 671.2 1115.8 670.4 1115.8 670.1C1115.8 669.8 1116.4 669.6 1116.7 669.4C1117.0 669.2 1117.4 668.8 1117.7 668.9C1118.0 669.0 1118.4 669.9 1118.3 670.3Z" fill="#c2ee8e" />
<ellipse cx="1088" cy="647" rx="1.9" ry="0.6" transform="rotate(52 1088 647)" fill="#c2ee8e"/>
<ellipse cx="1113" cy="672" rx="6.7" ry="1.8" transform="rotate(46 1113 672)" fill="#c2ee8e"/>
<ellipse cx="1070" cy="678" rx="2.8" ry="0.7" transform="rotate(78 1070 678)" fill="#c2ee8e"/>
<path d="M1094.1 656.2C1093.9 656.0 1093.9 655.4 1094.1 655.2C1094.3 655.0 1094.8 654.9 1095.1 655.1C1095.4 655.3 1096.2 655.9 1096.2 656.2C1096.2 656.5 1095.6 656.7 1095.2 656.7C1094.8 656.7 1094.3 656.5 1094.1 656.2Z" fill="#c2ee8e" />
<ellipse cx="1087" cy="663" rx="5.9" ry="1.2" transform="rotate(-18 1087 663)" fill="#c2ee8e"/>
<path d="M1097.2 654.8C1096.8 654.2 1097.5 651.9 1098.0 650.9C1098.5 649.9 1099.3 649.1 1100.0 648.9C1100.7 648.7 1102.2 648.8 1102.2 649.7C1102.2 650.6 1101.1 653.4 1100.3 654.2C1099.5 655.1 1097.6 655.3 1097.2 654.8Z" fill="#c2ee8e" />
<ellipse cx="1046" cy="642" rx="4.3" ry="1.2" transform="rotate(-79 1046 642)" fill="#c2ee8e"/>
<path d="M1218.0 691.3C1217.2 691.6 1216.0 691.6 1216.0 690.4C1216.0 689.2 1217.0 685.6 1217.7 684.2C1218.4 682.8 1219.7 681.2 1220.2 681.9C1220.7 682.6 1221.1 687.0 1220.7 688.6C1220.3 690.2 1218.8 691.0 1218.0 691.3Z" fill="#c2ee8e" />
<ellipse cx="1202" cy="665" rx="2.2" ry="0.6" transform="rotate(-50 1202 665)" fill="#c2ee8e"/>
<path d="M1183.8 677.0C1183.5 676.3 1184.5 674.2 1185.8 673.5C1187.1 672.8 1190.5 672.3 1191.4 672.5C1192.3 672.7 1191.9 674.0 1191.3 674.9C1190.7 675.8 1188.8 677.2 1187.6 677.6C1186.3 678.0 1184.1 677.7 1183.8 677.0Z" fill="#c2ee8e" />
<path d="M1235.1 667.3C1234.3 667.4 1232.3 667.0 1232.6 665.7C1232.9 664.4 1235.8 660.0 1237.0 659.3C1238.2 658.6 1239.6 660.5 1239.7 661.4C1239.8 662.3 1238.4 663.9 1237.6 664.9C1236.8 665.9 1235.9 667.2 1235.1 667.3Z" fill="#c2ee8e" />
<path d="M1178.5 680.7C1178.0 680.6 1176.8 681.2 1177.0 680.1C1177.2 679.0 1179.2 675.1 1180.0 674.3C1180.8 673.5 1181.7 674.2 1181.7 675.2C1181.8 676.2 1180.8 679.6 1180.3 680.5C1179.8 681.4 1179.0 680.8 1178.5 680.7Z" fill="#c2ee8e" />
<path d="M1184.8 695.0C1184.4 695.5 1182.5 695.7 1181.5 695.2C1180.5 694.7 1178.7 693.1 1178.7 692.2C1178.7 691.3 1180.7 690.0 1181.5 690.0C1182.3 690.0 1183.2 691.3 1183.7 692.1C1184.2 692.9 1185.2 694.5 1184.8 695.0Z" fill="#c2ee8e" />
<ellipse cx="1203" cy="658" rx="5.2" ry="1.0" transform="rotate(75 1203 658)" fill="#c2ee8e"/>
<ellipse cx="1242" cy="677" rx="6.7" ry="1.7" transform="rotate(23 1242 677)" fill="#c2ee8e"/>
<ellipse cx="1246" cy="642" rx="4.1" ry="0.9" transform="rotate(41 1246 642)" fill="#c2ee8e"/>
<ellipse cx="1273" cy="652" rx="6.4" ry="1.5" transform="rotate(-25 1273 652)" fill="#c2ee8e"/>
<path d="M1216.9 718.3C1216.2 719.0 1214.2 720.8 1212.9 720.6C1211.6 720.4 1209.7 718.3 1209.2 717.1C1208.7 715.9 1208.6 713.3 1209.9 713.2C1211.2 713.1 1216.0 715.6 1217.2 716.5C1218.4 717.4 1217.6 717.6 1216.9 718.3Z" fill="#c2ee8e" />
<path d="M1207.4 684.9C1207.1 685.3 1205.4 684.4 1204.3 683.4C1203.2 682.4 1201.5 680.2 1201.0 679.0C1200.5 677.8 1200.7 675.9 1201.6 676.3C1202.5 676.7 1205.2 679.8 1206.2 681.2C1207.2 682.6 1207.7 684.5 1207.4 684.9Z" fill="#c2ee8e" />
<path d="M1180.0 598.9C1180.0 598.2 1180.6 596.4 1181.1 596.0C1181.6 595.6 1182.5 596.2 1182.8 596.8C1183.1 597.4 1183.0 598.8 1182.7 599.4C1182.5 600.0 1181.8 600.3 1181.3 600.2C1180.8 600.1 1180.0 599.6 1180.0 598.9Z" fill="#c2ee8e" />
<ellipse cx="1134" cy="584" rx="4.5" ry="0.9" transform="rotate(24 1134 584)" fill="#c2ee8e"/>
<ellipse cx="1189" cy="620" rx="4.7" ry="1.3" transform="rotate(-39 1189 620)" fill="#c2ee8e"/>
<path d="M1179.1 603.5C1178.4 603.8 1177.3 603.6 1176.3 602.7C1175.3 601.8 1173.3 598.7 1173.3 598.0C1173.3 597.3 1174.9 597.9 1176.1 598.4C1177.3 598.9 1180.1 600.0 1180.6 600.9C1181.1 601.8 1179.8 603.2 1179.1 603.5Z" fill="#c2ee8e" />
<path d="M1177.7 610.6C1177.0 609.8 1176.7 608.0 1178.2 607.8C1179.7 607.5 1185.1 608.6 1186.5 609.1C1187.9 609.6 1187.2 610.0 1186.6 610.5C1186.0 611.0 1184.2 612.4 1182.7 612.4C1181.2 612.4 1178.5 611.4 1177.7 610.6Z" fill="#c2ee8e" />
<path d="M1192.6 588.7C1192.0 588.1 1192.4 585.1 1193.1 584.1C1193.8 583.1 1195.6 582.8 1196.5 582.9C1197.4 583.0 1198.4 583.7 1198.4 584.5C1198.4 585.3 1197.4 587.1 1196.4 587.8C1195.4 588.5 1193.1 589.3 1192.6 588.7Z" fill="#c2ee8e" />
<ellipse cx="1212" cy="595" rx="7.9" ry="1.8" transform="rotate(47 1212 595)" fill="#c2ee8e"/>
<path d="M1128.5 575.4C1128.0 575.9 1127.0 576.2 1126.4 575.7C1125.8 575.2 1124.8 573.2 1124.8 572.2C1124.8 571.2 1126.0 569.7 1126.7 569.7C1127.5 569.8 1129.0 571.5 1129.3 572.5C1129.6 573.5 1129.0 574.9 1128.5 575.4Z" fill="#c2ee8e" />
<ellipse cx="1144" cy="556" rx="3.5" ry="0.8" transform="rotate(-64 1144 556)" fill="#c2ee8e"/>
<path d="M1164.8 614.6C1164.9 613.9 1166.8 613.0 1167.7 612.6C1168.7 612.2 1170.0 611.8 1170.5 612.0C1171.0 612.2 1171.2 613.2 1170.6 614.0C1170.0 614.8 1167.9 616.7 1166.9 616.8C1165.9 616.9 1164.7 615.3 1164.8 614.6Z" fill="#c2ee8e" />
<ellipse cx="1250" cy="595" rx="4.1" ry="0.8" transform="rotate(-29 1250 595)" fill="#c2ee8e"/>
<path d="M1212.5 576.5C1211.8 576.2 1210.4 575.0 1210.5 573.8C1210.6 572.6 1212.1 570.4 1212.9 569.1C1213.7 567.8 1215.1 565.0 1215.4 566.0C1215.7 567.0 1215.2 573.5 1214.7 575.3C1214.2 577.0 1213.2 576.8 1212.5 576.5Z" fill="#c2ee8e" />
<ellipse cx="1229" cy="569" rx="6.3" ry="1.6" transform="rotate(-48 1229 569)" fill="#c2ee8e"/>
<path d="M1237.2 602.2C1236.7 601.9 1236.4 601.0 1237.1 599.9C1237.8 598.8 1240.5 596.3 1241.6 595.7C1242.7 595.1 1243.7 595.5 1243.5 596.5C1243.3 597.5 1241.3 600.9 1240.3 601.9C1239.2 602.9 1237.7 602.5 1237.2 602.2Z" fill="#c2ee8e" />
<ellipse cx="1269" cy="631" rx="5.0" ry="1.3" transform="rotate(-60 1269 631)" fill="#c2ee8e"/>
<path d="M1226.8 599.2C1226.1 599.6 1225.2 600.3 1224.8 599.8C1224.4 599.2 1224.2 596.7 1224.5 595.9C1224.8 595.1 1225.8 594.9 1226.5 595.2C1227.2 595.5 1228.8 597.0 1228.8 597.7C1228.8 598.4 1227.5 598.9 1226.8 599.2Z" fill="#c2ee8e" />
<path d="M1253.2 591.1C1252.7 591.8 1248.2 589.9 1246.8 588.6C1245.4 587.3 1244.8 584.6 1244.7 583.1C1244.7 581.6 1245.6 579.5 1246.5 579.7C1247.4 579.9 1248.9 582.6 1250.0 584.5C1251.1 586.4 1253.7 590.4 1253.2 591.1Z" fill="#c2ee8e" />
<path d="M1239.0 596.5C1238.7 596.0 1239.7 594.8 1240.8 594.1C1241.9 593.5 1244.5 592.4 1245.6 592.6C1246.7 592.8 1247.7 594.4 1247.2 595.1C1246.7 595.8 1244.0 596.6 1242.6 596.8C1241.2 597.0 1239.3 597.0 1239.0 596.5Z" fill="#c2ee8e" />
<ellipse cx="1048" cy="630" rx="3.1" ry="1.1" transform="rotate(-60 1048 630)" fill="#c2ee8e"/>
<ellipse cx="1042" cy="612" rx="6.9" ry="1.2" transform="rotate(67 1042 612)" fill="#c2ee8e"/>
<path d="M1018.7 626.7C1018.3 626.4 1017.6 625.6 1018.1 625.0C1018.6 624.4 1020.9 623.0 1021.5 623.0C1022.1 623.0 1021.8 624.2 1021.6 624.9C1021.5 625.6 1021.1 626.7 1020.6 627.0C1020.1 627.3 1019.1 627.0 1018.7 626.7Z" fill="#c2ee8e" />
<ellipse cx="1036" cy="646" rx="7.2" ry="1.5" transform="rotate(-45 1036 646)" fill="#c2ee8e"/>
<path d="M1020.8 648.8C1019.9 648.9 1017.9 645.0 1017.5 643.1C1017.1 641.2 1018.0 638.8 1018.6 637.3C1019.2 635.8 1020.3 633.1 1021.0 634.0C1021.7 634.9 1022.8 639.9 1022.8 642.4C1022.8 644.9 1021.7 648.7 1020.8 648.8Z" fill="#c2ee8e" />
<ellipse cx="1029" cy="588" rx="4.4" ry="1.2" transform="rotate(21 1029 588)" fill="#c2ee8e"/>
<path d="M1043.5 652.0C1043.1 651.4 1043.8 649.5 1044.5 648.6C1045.2 647.7 1047.0 646.4 1047.8 646.7C1048.6 647.0 1049.6 649.6 1049.4 650.5C1049.2 651.4 1047.8 652.0 1046.8 652.2C1045.8 652.5 1043.9 652.6 1043.5 652.0Z" fill="#c2ee8e" />
<path d="M1000.4 610.9C1000.0 610.8 999.6 610.1 999.7 609.6C999.8 609.1 1000.8 607.8 1001.2 607.6C1001.6 607.4 1002.1 608.0 1002.2 608.4C1002.4 608.8 1002.4 609.8 1002.1 610.2C1001.8 610.6 1000.8 611.0 1000.4 610.9Z" fill="#c2ee8e" />
<path d="M1021.7 581.5C1021.4 582.0 1019.4 582.5 1018.6 582.6C1017.8 582.7 1017.1 582.7 1017.1 582.0C1017.1 581.3 1017.8 578.6 1018.4 578.2C1019.0 577.8 1020.0 579.2 1020.6 579.7C1021.2 580.2 1022.0 581.0 1021.7 581.5Z" fill="#c2ee8e" />
<ellipse cx="1041" cy="642" rx="7.6" ry="1.4" transform="rotate(71 1041 642)" fill="#c2ee8e"/>
<ellipse cx="1054" cy="572" rx="5.7" ry="1.6" transform="rotate(3 1054 572)" fill="#c2ee8e"/>
<ellipse cx="1037" cy="624" rx="4.2" ry="0.9" transform="rotate(-40 1037 624)" fill="#c2ee8e"/>
<path d="M1069.2 623.6C1068.5 623.4 1067.5 622.5 1067.7 621.4C1067.9 620.3 1069.7 617.6 1070.4 617.2C1071.2 616.8 1071.9 617.9 1072.2 618.8C1072.5 619.7 1072.5 622.0 1072.0 622.8C1071.5 623.6 1069.9 623.8 1069.2 623.6Z" fill="#c2ee8e" />
<ellipse cx="1043" cy="594" rx="4.0" ry="1.3" transform="rotate(-39 1043 594)" fill="#c2ee8e"/>
<path d="M1088.2 621.0C1088.1 621.5 1087.7 622.1 1087.3 621.9C1086.9 621.7 1086.0 620.4 1085.9 619.8C1085.8 619.2 1086.5 618.4 1086.9 618.2C1087.3 618.0 1087.9 618.3 1088.1 618.8C1088.3 619.3 1088.3 620.5 1088.2 621.0Z" fill="#c2ee8e" />
<path d="M1073.4 626.6C1073.1 626.1 1072.7 625.0 1073.2 624.5C1073.7 624.0 1075.6 623.6 1076.4 623.6C1077.2 623.6 1078.4 624.1 1078.2 624.7C1078.0 625.3 1075.9 627.0 1075.1 627.3C1074.3 627.6 1073.7 627.1 1073.4 626.6Z" fill="#c2ee8e" />
<ellipse cx="1060" cy="601" rx="5.5" ry="1.5" transform="rotate(-51 1060 601)" fill="#c2ee8e"/>
<path d="M1048.7 606.7C1048.1 606.8 1047.2 606.3 1047.2 605.4C1047.2 604.5 1048.1 601.7 1048.6 601.3C1049.1 600.9 1049.7 602.4 1050.0 603.0C1050.3 603.6 1050.8 604.4 1050.6 605.0C1050.4 605.6 1049.3 606.6 1048.7 606.7Z" fill="#c2ee8e" />
<path d="M1070.6 616.7C1070.0 616.5 1070.1 614.2 1070.2 613.0C1070.3 611.8 1070.8 610.2 1071.4 609.7C1072.0 609.2 1073.5 609.1 1073.9 609.8C1074.3 610.5 1074.1 613.0 1073.6 614.1C1073.0 615.2 1071.2 616.9 1070.6 616.7Z" fill="#c2ee8e" />
<path d="M1051.4 609.1C1051.4 609.8 1049.2 610.7 1048.3 610.8C1047.4 610.9 1046.6 610.4 1045.9 609.8C1045.2 609.2 1043.5 607.8 1043.9 607.3C1044.3 606.8 1046.8 606.2 1048.1 606.5C1049.3 606.8 1051.4 608.4 1051.4 609.1Z" fill="#c2ee8e" />
<ellipse cx="1084" cy="616" rx="3.5" ry="1.1" transform="rotate(-51 1084 616)" fill="#c2ee8e"/>
<ellipse cx="1041" cy="590" rx="4.9" ry="1.6" transform="rotate(2 1041 590)" fill="#c2ee8e"/>
<path d="M1525.6 497.1C1524.7 497.5 1521.6 494.5 1520.6 493.3C1519.6 492.1 1519.3 490.9 1519.4 489.8C1519.5 488.7 1520.1 486.3 1521.2 486.5C1522.3 486.7 1525.4 489.3 1526.1 491.1C1526.8 492.9 1526.5 496.7 1525.6 497.1Z" fill="#c2ee8e" />
<ellipse cx="1445" cy="535" rx="5.8" ry="1.5" transform="rotate(7 1445 535)" fill="#c2ee8e"/>
<path d="M1454.0 505.0C1453.8 504.7 1454.6 503.9 1455.2 503.5C1455.8 503.1 1456.9 502.4 1457.6 502.4C1458.3 502.4 1459.4 503.1 1459.2 503.6C1459.0 504.1 1457.2 505.1 1456.3 505.3C1455.4 505.5 1454.2 505.3 1454.0 505.0Z" fill="#c2ee8e" />
<ellipse cx="1494" cy="483" rx="3.5" ry="1.1" transform="rotate(15 1494 483)" fill="#c2ee8e"/>
<ellipse cx="1488" cy="502" rx="5.4" ry="1.3" transform="rotate(-78 1488 502)" fill="#c2ee8e"/>
<path d="M1468.8 511.0C1468.5 511.5 1465.8 510.6 1464.2 509.9C1462.6 509.1 1459.2 507.4 1458.9 506.5C1458.6 505.6 1461.4 504.6 1462.6 504.7C1463.8 504.8 1464.9 505.9 1465.9 507.0C1466.9 508.1 1469.1 510.5 1468.8 511.0Z" fill="#c2ee8e" />
<path d="M1512.9 501.6C1512.9 502.1 1512.7 503.3 1512.0 503.2C1511.3 503.1 1509.1 501.5 1508.8 501.0C1508.5 500.5 1509.7 500.2 1510.3 500.1C1510.9 500.0 1511.9 499.9 1512.3 500.2C1512.7 500.4 1513.0 501.1 1512.9 501.6Z" fill="#c2ee8e" />
<path d="M1473.7 562.8C1473.3 563.2 1472.2 563.6 1471.4 563.4C1470.6 563.2 1469.2 562.5 1469.1 561.7C1468.9 560.9 1469.7 559.0 1470.5 558.8C1471.3 558.6 1473.4 560.0 1473.9 560.7C1474.4 561.4 1474.1 562.3 1473.7 562.8Z" fill="#c2ee8e" />
<ellipse cx="1509" cy="506" rx="3.4" ry="1.1" transform="rotate(-59 1509 506)" fill="#c2ee8e"/>
<ellipse cx="1438" cy="521" rx="2.4" ry="0.6" transform="rotate(48 1438 521)" fill="#c2ee8e"/>
<path d="M1490.5 557.3C1489.5 557.8 1484.5 556.2 1483.4 555.2C1482.3 554.2 1483.3 552.9 1483.7 551.5C1484.1 550.1 1484.8 546.7 1485.7 546.9C1486.6 547.1 1488.5 550.8 1489.3 552.5C1490.1 554.2 1491.5 556.8 1490.5 557.3Z" fill="#c2ee8e" />
<ellipse cx="1500" cy="509" rx="4.9" ry="1.4" transform="rotate(8 1500 509)" fill="#c2ee8e"/>
<path d="M1483.6 505.3C1483.2 504.9 1483.8 502.8 1484.3 502.0C1484.8 501.2 1486.0 500.5 1486.7 500.6C1487.5 500.7 1488.8 501.7 1488.8 502.4C1488.8 503.1 1487.5 504.1 1486.6 504.6C1485.7 505.1 1484.0 505.7 1483.6 505.3Z" fill="#c2ee8e" />
<path d="M1460.9 591.1C1460.8 591.5 1459.7 591.8 1459.2 591.8C1458.7 591.8 1458.2 591.5 1457.9 591.2C1457.6 590.9 1457.0 590.4 1457.3 590.1C1457.6 589.8 1459.4 589.4 1460.0 589.6C1460.6 589.8 1461.0 590.7 1460.9 591.1Z" fill="#c2ee8e" />
<path d="M1466.5 515.1C1466.1 515.3 1464.3 514.4 1463.8 513.8C1463.3 513.1 1463.3 511.8 1463.4 511.2C1463.5 510.6 1464.1 510.2 1464.6 510.5C1465.1 510.8 1466.1 512.0 1466.4 512.8C1466.7 513.6 1466.9 514.9 1466.5 515.1Z" fill="#c2ee8e" />
<path d="M1494.9 510.7C1494.5 511.6 1492.2 513.3 1491.0 513.1C1489.8 512.9 1487.7 510.6 1487.4 509.6C1487.2 508.6 1488.5 507.6 1489.5 507.3C1490.5 507.0 1492.3 507.0 1493.2 507.6C1494.1 508.2 1495.3 509.8 1494.9 510.7Z" fill="#c2ee8e" />
<ellipse cx="1477" cy="522" rx="5.6" ry="1.2" transform="rotate(-76 1477 522)" fill="#c2ee8e"/>
<ellipse cx="1485" cy="512" rx="4.2" ry="0.8" transform="rotate(49 1485 512)" fill="#c2ee8e"/>
<ellipse cx="1472" cy="518" rx="9.0" ry="1.6" transform="rotate(1 1472 518)" fill="#c2ee8e"/>
<ellipse cx="1476" cy="535" rx="3.0" ry="0.6" transform="rotate(-6 1476 535)" fill="#c2ee8e"/>
<ellipse cx="1507" cy="560" rx="4.4" ry="0.8" transform="rotate(-24 1507 560)" fill="#c2ee8e"/>
<path d="M1454.0 516.3C1453.8 515.6 1455.1 514.2 1456.7 513.7C1458.3 513.2 1462.4 513.2 1463.6 513.6C1464.8 514.0 1464.8 515.6 1463.9 516.3C1463.0 517.0 1459.7 517.8 1458.0 517.8C1456.3 517.8 1454.2 517.0 1454.0 516.3Z" fill="#c2ee8e" />
<ellipse cx="1465" cy="488" rx="4.8" ry="1.7" transform="rotate(-57 1465 488)" fill="#c2ee8e"/>
<path d="M1478.7 493.4C1478.7 494.3 1476.5 495.5 1475.3 495.4C1474.1 495.3 1472.0 493.5 1471.7 492.9C1471.4 492.2 1472.8 491.9 1473.4 491.5C1474.1 491.1 1474.7 489.9 1475.6 490.2C1476.5 490.5 1478.8 492.5 1478.7 493.4Z" fill="#c2ee8e" />
<path d="M1464.8 503.1C1464.3 502.2 1464.9 499.0 1465.7 498.3C1466.5 497.6 1468.6 498.6 1469.5 498.9C1470.4 499.2 1471.3 499.2 1471.2 500.0C1471.1 500.8 1469.8 503.0 1468.7 503.5C1467.6 504.0 1465.3 504.0 1464.8 503.1Z" fill="#c2ee8e" />
<path d="M1446.7 542.9C1446.1 543.0 1445.8 541.6 1445.8 540.8C1445.8 540.0 1446.3 538.8 1446.8 538.1C1447.3 537.5 1448.3 536.5 1448.7 536.9C1449.1 537.3 1449.6 539.4 1449.3 540.4C1449.0 541.4 1447.3 542.8 1446.7 542.9Z" fill="#c2ee8e" />
<ellipse cx="1476" cy="515" rx="5.0" ry="0.9" transform="rotate(11 1476 515)" fill="#c2ee8e"/>
<path d="M1468.0 502.6C1467.4 502.8 1466.4 501.7 1465.6 500.9C1464.8 500.1 1463.2 498.5 1463.1 497.8C1463.0 497.1 1464.0 496.2 1465.1 496.6C1466.1 497.0 1468.9 499.0 1469.4 500.0C1469.9 501.0 1468.6 502.5 1468.0 502.6Z" fill="#c2ee8e" />
<ellipse cx="1438" cy="488" rx="5.6" ry="1.2" transform="rotate(50 1438 488)" fill="#c2ee8e"/>
<ellipse cx="1502" cy="496" rx="6.2" ry="1.5" transform="rotate(-53 1502 496)" fill="#c2ee8e"/>
<ellipse cx="1482" cy="500" rx="4.3" ry="1.2" transform="rotate(-67 1482 500)" fill="#c2ee8e"/>
<path d="M1482.3 516.4C1482.0 516.3 1482.1 514.8 1482.6 513.9C1483.1 513.0 1484.7 511.0 1485.2 510.8C1485.7 510.6 1485.9 512.2 1485.8 512.9C1485.7 513.5 1485.1 514.1 1484.5 514.7C1483.9 515.3 1482.6 516.5 1482.3 516.4Z" fill="#c2ee8e" />
<ellipse cx="1482" cy="513" rx="4.2" ry="1.0" transform="rotate(-31 1482 513)" fill="#c2ee8e"/>
<ellipse cx="1491" cy="516" rx="9.0" ry="1.6" transform="rotate(36 1491 516)" fill="#c2ee8e"/>
<path d="M1465.3 481.0C1464.8 480.2 1465.1 478.2 1465.6 477.3C1466.1 476.4 1467.3 475.6 1468.2 475.5C1469.1 475.4 1471.1 475.3 1471.1 476.4C1471.1 477.4 1469.3 481.0 1468.3 481.8C1467.3 482.6 1465.8 481.8 1465.3 481.0Z" fill="#c2ee8e" />
<path d="M1521.3 556.0C1521.0 555.3 1521.8 553.5 1522.4 552.8C1523.0 552.1 1523.9 551.7 1524.7 551.8C1525.5 551.9 1527.5 552.4 1527.5 553.3C1527.5 554.1 1525.5 556.4 1524.5 556.9C1523.5 557.4 1521.6 556.7 1521.3 556.0Z" fill="#c2ee8e" />
<path d="M1549.8 510.2C1549.5 510.5 1548.1 510.2 1547.7 509.8C1547.3 509.4 1547.1 508.4 1547.2 507.9C1547.3 507.4 1548.0 507.0 1548.4 507.0C1548.8 507.0 1549.3 507.6 1549.5 508.1C1549.7 508.6 1550.1 509.9 1549.8 510.2Z" fill="#c2ee8e" />
<path d="M1476.6 478.8C1476.3 479.0 1475.4 478.3 1475.0 477.8C1474.6 477.3 1474.2 476.2 1474.3 475.8C1474.3 475.4 1474.9 475.3 1475.3 475.4C1475.7 475.5 1476.5 475.8 1476.7 476.4C1476.9 477.0 1476.9 478.6 1476.6 478.8Z" fill="#c2ee8e" />
<path d="M1474.9 571.9C1474.3 572.0 1471.9 569.6 1471.0 568.5C1470.1 567.4 1469.3 565.8 1469.6 565.1C1469.8 564.4 1471.6 563.9 1472.5 564.4C1473.4 564.9 1474.4 566.6 1474.8 567.9C1475.2 569.1 1475.5 571.8 1474.9 571.9Z" fill="#c2ee8e" />
<path d="M1466.1 555.0C1465.6 554.8 1465.6 551.7 1465.7 550.2C1465.8 548.7 1466.2 546.4 1466.7 545.8C1467.2 545.2 1468.3 545.9 1468.6 546.8C1468.9 547.7 1468.8 549.9 1468.4 551.3C1468.0 552.7 1466.5 555.2 1466.1 555.0Z" fill="#c2ee8e" />
<ellipse cx="1509" cy="510" rx="5.0" ry="1.7" transform="rotate(-5 1509 510)" fill="#c2ee8e"/>
<path d="M1532.2 506.7C1531.3 506.6 1530.5 504.9 1530.3 503.3C1530.1 501.7 1530.4 498.3 1531.2 497.3C1532.0 496.3 1534.3 496.1 1535.0 497.2C1535.7 498.3 1536.0 502.4 1535.5 504.0C1535.0 505.6 1533.1 506.8 1532.2 506.7Z" fill="#c2ee8e" />
<ellipse cx="1478" cy="525" rx="7.3" ry="1.5" transform="rotate(-71 1478 525)" fill="#c2ee8e"/>
<path d="M1543.2 517.4C1542.9 516.9 1543.8 515.3 1544.3 514.5C1544.8 513.7 1545.3 512.8 1545.9 512.7C1546.5 512.6 1548.0 513.1 1548.0 514.0C1548.0 514.9 1546.9 517.2 1546.1 517.8C1545.3 518.4 1543.5 517.9 1543.2 517.4Z" fill="#c2ee8e" />
<path d="M1515.9 488.9C1515.2 488.7 1515.2 486.9 1515.9 485.7C1516.6 484.5 1519.2 481.9 1520.1 481.5C1521.0 481.1 1521.2 482.3 1521.2 483.2C1521.2 484.1 1520.9 486.1 1520.0 487.0C1519.1 487.9 1516.6 489.1 1515.9 488.9Z" fill="#c2ee8e" />
<path d="M1535.1 534.6C1534.6 535.0 1533.1 535.5 1531.8 535.0C1530.5 534.5 1527.7 532.2 1527.2 531.3C1526.7 530.3 1527.7 529.1 1528.9 529.3C1530.1 529.5 1533.6 531.6 1534.6 532.5C1535.6 533.4 1535.6 534.2 1535.1 534.6Z" fill="#c2ee8e" />
<ellipse cx="1539" cy="530" rx="4.0" ry="0.9" transform="rotate(-32 1539 530)" fill="#c2ee8e"/>
<path d="M1490.0 540.7C1489.1 540.9 1488.6 538.5 1488.9 536.6C1489.2 534.8 1491.0 530.8 1491.9 529.6C1492.9 528.5 1494.2 528.7 1494.6 529.7C1495.0 530.7 1495.0 533.9 1494.2 535.7C1493.4 537.5 1490.9 540.6 1490.0 540.7Z" fill="#c2ee8e" />
<path d="M1479.3 575.5C1478.8 575.4 1477.9 574.4 1477.6 573.3C1477.3 572.1 1477.0 569.1 1477.3 568.6C1477.6 568.1 1478.9 569.2 1479.5 570.1C1480.1 571.0 1480.9 572.8 1480.9 573.7C1480.9 574.6 1479.8 575.6 1479.3 575.5Z" fill="#c2ee8e" />
<ellipse cx="1516" cy="551" rx="6.9" ry="1.4" transform="rotate(-56 1516 551)" fill="#c2ee8e"/>
<ellipse cx="1504" cy="557" rx="5.7" ry="1.5" transform="rotate(61 1504 557)" fill="#c2ee8e"/>
<path d="M1500.4 496.3C1499.3 496.4 1497.2 495.4 1497.0 494.8C1496.8 494.2 1498.1 493.4 1498.9 492.7C1499.7 492.0 1500.9 490.4 1501.7 490.6C1502.5 490.9 1504.0 493.2 1503.8 494.2C1503.6 495.1 1501.5 496.2 1500.4 496.3Z" fill="#c2ee8e" />
<ellipse cx="1517" cy="561" rx="4.3" ry="0.8" transform="rotate(-80 1517 561)" fill="#c2ee8e"/>
<ellipse cx="1486" cy="526" rx="3.7" ry="1.1" transform="rotate(15 1486 526)" fill="#c2ee8e"/>
<ellipse cx="1482" cy="582" rx="5.0" ry="1.3" transform="rotate(-19 1482 582)" fill="#c2ee8e"/>
<path d="M1512.0 542.6C1511.5 542.3 1511.1 540.9 1511.3 540.4C1511.5 539.9 1512.4 539.6 1512.9 539.5C1513.4 539.4 1514.1 539.1 1514.4 539.5C1514.7 539.9 1515.0 541.5 1514.6 542.0C1514.2 542.5 1512.5 542.9 1512.0 542.6Z" fill="#c2ee8e" />
<ellipse cx="1480" cy="499" rx="6.3" ry="1.4" transform="rotate(17 1480 499)" fill="#c2ee8e"/>
<path d="M1515.9 470.1C1515.3 469.8 1514.5 467.8 1514.8 466.8C1515.1 465.9 1516.8 464.8 1517.8 464.4C1518.8 464.0 1520.5 463.7 1520.6 464.4C1520.7 465.1 1519.2 467.4 1518.4 468.4C1517.6 469.3 1516.5 470.4 1515.9 470.1Z" fill="#c2ee8e" />
<path d="M1526.9 534.3C1526.8 533.9 1527.5 532.3 1527.9 531.8C1528.3 531.3 1529.0 531.1 1529.5 531.2C1530.0 531.3 1531.3 531.7 1531.1 532.2C1530.9 532.7 1529.0 534.0 1528.3 534.4C1527.6 534.8 1527.0 534.7 1526.9 534.3Z" fill="#c2ee8e" />
<path d="M1548.1 552.4C1547.8 552.8 1546.6 552.5 1545.9 552.0C1545.2 551.5 1543.7 550.1 1543.7 549.5C1543.7 548.9 1545.0 548.2 1545.7 548.3C1546.4 548.4 1547.5 549.2 1547.9 549.9C1548.3 550.6 1548.4 552.0 1548.1 552.4Z" fill="#c2ee8e" />
<path d="M1466.5 547.2C1466.1 546.7 1466.9 544.2 1468.0 543.0C1469.1 541.8 1472.2 540.3 1473.2 540.2C1474.2 540.1 1474.3 541.4 1473.9 542.4C1473.5 543.4 1471.8 545.4 1470.6 546.2C1469.4 547.0 1466.9 547.7 1466.5 547.2Z" fill="#c2ee8e" />
<path d="M1508.5 485.7C1508.1 485.9 1506.5 485.1 1505.7 484.7C1504.9 484.3 1504.3 483.7 1503.9 483.1C1503.5 482.5 1502.5 480.9 1503.2 481.0C1503.9 481.1 1507.2 482.6 1508.1 483.4C1509.0 484.2 1508.9 485.5 1508.5 485.7Z" fill="#c2ee8e" />
<ellipse cx="1519" cy="520" rx="5.6" ry="1.4" transform="rotate(42 1519 520)" fill="#c2ee8e"/>
<path d="M1526.8 570.9C1526.5 571.2 1525.0 571.2 1524.3 571.1C1523.6 571.0 1522.8 570.4 1522.6 570.0C1522.4 569.6 1522.5 568.6 1523.0 568.5C1523.5 568.4 1525.2 568.8 1525.8 569.2C1526.4 569.6 1527.0 570.6 1526.8 570.9Z" fill="#c2ee8e" />
<ellipse cx="1497" cy="482" rx="2.7" ry="1.0" transform="rotate(-68 1497 482)" fill="#c2ee8e"/>
<path d="M1522.2 545.4C1521.1 545.0 1520.6 543.2 1521.4 541.5C1522.2 539.8 1525.7 536.0 1527.2 535.4C1528.7 534.8 1530.0 536.3 1530.2 537.7C1530.4 539.1 1529.5 542.3 1528.2 543.6C1526.9 544.9 1523.3 545.8 1522.2 545.4Z" fill="#c2ee8e" />
<ellipse cx="1518" cy="519" rx="4.8" ry="1.3" transform="rotate(75 1518 519)" fill="#c2ee8e"/>
<path d="M1502.9 499.8C1502.5 499.3 1502.3 498.1 1503.0 497.6C1503.7 497.1 1506.3 496.5 1507.1 496.9C1507.9 497.3 1508.0 499.4 1507.7 500.0C1507.4 500.6 1506.1 500.6 1505.3 500.6C1504.5 500.6 1503.3 500.3 1502.9 499.8Z" fill="#c2ee8e" />
<ellipse cx="1520" cy="525" rx="3.9" ry="0.9" transform="rotate(-69 1520 525)" fill="#c2ee8e"/>
<path d="M1508.1 527.4C1507.7 527.2 1507.4 526.4 1507.6 525.9C1507.8 525.4 1509.0 524.6 1509.5 524.3C1510.0 524.0 1510.7 523.4 1510.8 523.9C1510.9 524.4 1510.5 526.5 1510.0 527.1C1509.5 527.7 1508.5 527.6 1508.1 527.4Z" fill="#c2ee8e" />
<path d="M1520.2 497.4C1520.0 496.9 1521.2 494.6 1522.0 493.3C1522.8 492.0 1524.1 490.0 1525.0 489.7C1525.9 489.4 1527.7 490.5 1527.4 491.6C1527.1 492.7 1524.6 495.4 1523.4 496.4C1522.2 497.4 1520.4 497.9 1520.2 497.4Z" fill="#c2ee8e" />
<path d="M1503.0 530.9C1502.3 531.4 1498.8 530.2 1498.0 529.2C1497.2 528.2 1498.1 526.0 1498.5 525.2C1498.9 524.4 1499.7 524.2 1500.3 524.4C1500.9 524.6 1501.8 525.4 1502.3 526.5C1502.8 527.6 1503.7 530.4 1503.0 530.9Z" fill="#c2ee8e" />
<path d="M1519.6 545.9C1518.8 546.0 1518.2 545.1 1517.8 544.0C1517.4 542.9 1516.8 540.3 1517.3 539.4C1517.8 538.5 1519.7 538.1 1520.6 538.8C1521.5 539.4 1522.7 542.1 1522.5 543.3C1522.3 544.5 1520.4 545.8 1519.6 545.9Z" fill="#c2ee8e" />
<ellipse cx="1500" cy="513" rx="2.3" ry="0.9" transform="rotate(3 1500 513)" fill="#c2ee8e"/>
<ellipse cx="1545" cy="552" rx="3.0" ry="0.8" transform="rotate(8 1545 552)" fill="#c2ee8e"/>
<path d="M1522.2 552.1C1521.2 552.0 1520.3 550.9 1519.7 550.0C1519.1 549.1 1518.1 547.1 1518.5 546.6C1518.9 546.1 1520.9 546.2 1522.1 546.9C1523.2 547.6 1525.4 550.0 1525.4 550.9C1525.4 551.8 1523.2 552.2 1522.2 552.1Z" fill="#c2ee8e" />
<ellipse cx="1501" cy="523" rx="2.1" ry="0.7" transform="rotate(41 1501 523)" fill="#c2ee8e"/>
<ellipse cx="1523" cy="540" rx="3.4" ry="1.0" transform="rotate(5 1523 540)" fill="#c2ee8e"/>
<path d="M1534.1 557.6C1533.9 558.3 1533.3 559.8 1532.5 560.0C1531.7 560.2 1529.2 559.6 1529.0 559.1C1528.8 558.6 1530.3 557.3 1531.0 556.7C1531.7 556.1 1532.9 555.6 1533.4 555.7C1533.9 555.9 1534.2 556.9 1534.1 557.6Z" fill="#c2ee8e" />
<ellipse cx="1566" cy="508" rx="2.5" ry="0.8" transform="rotate(40 1566 508)" fill="#c2ee8e"/>
<ellipse cx="1535" cy="555" rx="7.0" ry="1.8" transform="rotate(-74 1535 555)" fill="#c2ee8e"/>
<ellipse cx="1518" cy="539" rx="4.8" ry="1.2" transform="rotate(-33 1518 539)" fill="#c2ee8e"/>
<path d="M1512.3 534.8C1512.0 535.3 1509.4 534.6 1508.4 534.2C1507.4 533.8 1506.7 533.1 1506.3 532.3C1505.9 531.5 1505.7 529.8 1506.3 529.6C1506.9 529.4 1509.1 530.2 1510.1 531.1C1511.1 532.0 1512.6 534.3 1512.3 534.8Z" fill="#c2ee8e" />
<ellipse cx="1520" cy="546" rx="3.0" ry="1.1" transform="rotate(-69 1520 546)" fill="#c2ee8e"/>
<path d="M1512.8 512.7C1512.9 513.2 1512.5 513.8 1511.9 513.9C1511.3 514.0 1509.7 514.1 1509.3 513.6C1508.9 513.1 1509.2 511.5 1509.6 511.1C1509.9 510.7 1510.9 510.9 1511.4 511.2C1511.9 511.5 1512.7 512.2 1512.8 512.7Z" fill="#c2ee8e" />
<ellipse cx="1502" cy="508" rx="8.2" ry="1.7" transform="rotate(-42 1502 508)" fill="#c2ee8e"/>
<path d="M1545.9 580.4C1545.7 580.8 1545.0 580.6 1544.5 580.4C1544.0 580.2 1542.9 579.5 1542.8 579.0C1542.7 578.5 1543.6 577.7 1544.1 577.6C1544.6 577.5 1545.4 577.7 1545.7 578.2C1546.0 578.7 1546.1 580.0 1545.9 580.4Z" fill="#c2ee8e" />
<ellipse cx="1542" cy="550" rx="4.4" ry="0.8" transform="rotate(10 1542 550)" fill="#c2ee8e"/>
<path d="M1515.8 547.1C1516.0 548.2 1515.6 550.5 1513.9 550.9C1512.2 551.3 1506.9 550.1 1505.6 549.4C1504.3 548.7 1504.8 547.5 1505.9 546.7C1507.1 545.9 1510.8 544.3 1512.5 544.4C1514.2 544.5 1515.6 546.0 1515.8 547.1Z" fill="#c2ee8e" />
<path d="M1551.5 547.8C1551.2 548.3 1549.8 548.9 1548.8 548.4C1547.8 547.9 1545.5 546.0 1545.2 544.9C1544.9 543.8 1545.8 541.6 1546.7 541.6C1547.7 541.6 1550.1 544.1 1550.9 545.1C1551.7 546.1 1551.8 547.2 1551.5 547.8Z" fill="#c2ee8e" />
<path d="M1526.2 507.6C1525.5 507.8 1524.4 507.4 1523.9 506.7C1523.4 506.0 1522.9 504.5 1523.2 503.7C1523.5 502.9 1525.0 501.5 1525.8 501.8C1526.6 502.1 1528.1 504.7 1528.2 505.7C1528.3 506.7 1526.9 507.4 1526.2 507.6Z" fill="#c2ee8e" />
<path d="M1555.2 510.4C1554.5 510.4 1553.6 507.3 1553.8 505.7C1554.0 504.1 1555.5 501.1 1556.2 500.6C1556.9 500.1 1557.7 501.6 1558.0 502.5C1558.3 503.4 1558.4 504.5 1557.9 505.8C1557.4 507.1 1555.9 510.4 1555.2 510.4Z" fill="#c2ee8e" />
<ellipse cx="1469" cy="531" rx="3.5" ry="0.6" transform="rotate(34 1469 531)" fill="#c2ee8e"/>
<ellipse cx="1541" cy="535" rx="5.8" ry="1.1" transform="rotate(16 1541 535)" fill="#c2ee8e"/>
<path d="M1470.1 533.6C1469.4 533.7 1468.5 532.4 1468.5 531.3C1468.5 530.2 1469.3 527.5 1469.8 526.8C1470.3 526.1 1471.0 526.4 1471.5 527.0C1472.0 527.6 1472.7 529.5 1472.5 530.6C1472.3 531.7 1470.8 533.5 1470.1 533.6Z" fill="#c2ee8e" />
<ellipse cx="1500" cy="547" rx="7.2" ry="1.4" transform="rotate(51 1500 547)" fill="#c2ee8e"/>
<path d="M1517.9 587.8C1517.4 587.2 1517.9 585.1 1519.9 584.2C1521.9 583.3 1528.0 582.2 1530.1 582.4C1532.2 582.5 1533.4 584.2 1532.3 585.1C1531.2 586.0 1525.6 587.2 1523.2 587.7C1520.8 588.2 1518.5 588.4 1517.9 587.8Z" fill="#c2ee8e" />
<path d="M1573.0 588.9C1572.3 589.3 1568.2 587.5 1566.9 586.3C1565.6 585.1 1565.0 582.6 1565.2 581.9C1565.4 581.2 1567.0 581.8 1568.0 582.1C1569.0 582.4 1570.4 582.7 1571.2 583.8C1572.0 584.9 1573.7 588.5 1573.0 588.9Z" fill="#c2ee8e" />
<path d="M1546.8 536.2C1546.7 535.8 1547.4 535.0 1547.9 534.7C1548.4 534.4 1549.7 534.0 1550.0 534.2C1550.3 534.4 1550.0 535.4 1549.8 535.9C1549.6 536.4 1549.2 537.3 1548.7 537.4C1548.2 537.5 1546.9 536.7 1546.8 536.2Z" fill="#c2ee8e" />
<path d="M1520.9 568.6C1521.0 568.1 1522.5 567.8 1523.2 567.7C1523.9 567.6 1524.8 567.6 1525.3 567.9C1525.8 568.2 1526.5 569.1 1526.0 569.6C1525.5 570.1 1523.4 570.9 1522.6 570.7C1521.8 570.5 1520.8 569.1 1520.9 568.6Z" fill="#c2ee8e" />
<path d="M1573.6 556.5C1572.8 556.2 1571.8 555.1 1571.6 554.2C1571.4 553.3 1571.7 551.6 1572.7 551.0C1573.7 550.4 1576.8 549.5 1577.4 550.3C1578.0 551.1 1577.0 555.0 1576.4 556.0C1575.8 557.0 1574.4 556.8 1573.6 556.5Z" fill="#c2ee8e" />
<path d="M1519.2 502.6C1518.9 502.6 1518.6 501.9 1518.6 501.4C1518.6 500.9 1518.8 499.9 1519.2 499.6C1519.6 499.3 1520.6 499.2 1520.8 499.6C1521.0 500.0 1520.9 501.2 1520.6 501.7C1520.3 502.2 1519.5 502.7 1519.2 502.6Z" fill="#c2ee8e" />
<ellipse cx="1533" cy="543" rx="5.4" ry="1.0" transform="rotate(58 1533 543)" fill="#c2ee8e"/>
<path d="M1510.7 546.3C1510.7 545.5 1511.0 544.2 1511.8 543.2C1512.5 542.2 1514.0 540.9 1515.2 540.5C1516.4 540.1 1519.7 539.8 1519.2 541.1C1518.7 542.4 1513.5 547.2 1512.1 548.1C1510.7 549.0 1510.8 547.1 1510.7 546.3Z" fill="#c2ee8e" />
<ellipse cx="1542" cy="560" rx="4.3" ry="1.0" transform="rotate(-6 1542 560)" fill="#c2ee8e"/>
<path d="M1570.1 584.3C1569.5 585.0 1568.3 585.1 1567.3 584.6C1566.2 584.1 1563.9 582.2 1563.8 581.0C1563.7 579.8 1565.5 577.5 1566.7 577.4C1567.9 577.2 1570.2 579.0 1570.8 580.1C1571.4 581.2 1570.7 583.5 1570.1 584.3Z" fill="#c2ee8e" />
<path d="M1526.0 569.6C1525.6 569.5 1524.8 569.5 1524.8 568.9C1524.8 568.3 1525.6 566.3 1526.1 566.0C1526.6 565.7 1527.7 566.7 1527.9 567.2C1528.1 567.8 1527.6 568.9 1527.3 569.3C1527.0 569.7 1526.4 569.7 1526.0 569.6Z" fill="#c2ee8e" />
<ellipse cx="1482" cy="538" rx="5.6" ry="1.1" transform="rotate(55 1482 538)" fill="#c2ee8e"/>
<path d="M1536.8 572.8C1535.9 572.8 1533.6 570.2 1533.6 568.3C1533.5 566.4 1535.3 562.7 1536.5 561.4C1537.7 560.1 1540.6 559.4 1541.0 560.5C1541.4 561.6 1539.8 566.0 1539.1 568.0C1538.4 570.0 1537.7 572.8 1536.8 572.8Z" fill="#c2ee8e" />
<path d="M1544.8 599.7C1544.2 600.0 1543.2 600.8 1542.9 600.1C1542.6 599.5 1542.3 596.7 1542.7 595.8C1543.1 594.9 1544.8 594.0 1545.4 594.5C1546.1 595.0 1546.7 597.7 1546.6 598.6C1546.5 599.5 1545.4 599.5 1544.8 599.7Z" fill="#c2ee8e" />
<path d="M1490.8 537.6C1490.5 537.1 1489.7 536.3 1490.1 536.0C1490.5 535.7 1492.8 535.8 1493.4 536.0C1494.0 536.2 1494.1 536.6 1493.8 537.1C1493.5 537.6 1492.3 539.2 1491.8 539.3C1491.3 539.4 1491.1 538.1 1490.8 537.6Z" fill="#c2ee8e" />
<ellipse cx="1506" cy="577" rx="4.0" ry="1.6" transform="rotate(-49 1506 577)" fill="#c2ee8e"/>
<ellipse cx="1486" cy="537" rx="2.8" ry="0.6" transform="rotate(34 1486 537)" fill="#c2ee8e"/>
<path d="M1480.5 578.8C1480.1 579.6 1478.0 581.4 1476.5 581.4C1475.0 581.4 1472.3 579.8 1471.7 578.8C1471.1 577.8 1471.8 575.8 1473.0 575.4C1474.2 575.0 1477.8 576.0 1479.1 576.6C1480.3 577.2 1480.9 578.0 1480.5 578.8Z" fill="#c2ee8e" />
<ellipse cx="1495" cy="531" rx="6.1" ry="1.3" transform="rotate(73 1495 531)" fill="#c2ee8e"/>
<path d="M1459.4 559.9C1458.9 559.5 1459.2 557.9 1459.6 557.2C1460.0 556.5 1461.1 555.8 1461.8 555.8C1462.5 555.8 1463.7 556.7 1463.8 557.3C1463.9 557.9 1463.1 559.0 1462.4 559.4C1461.7 559.8 1459.9 560.3 1459.4 559.9Z" fill="#c2ee8e" />
<path d="M1486.5 548.7C1486.1 548.7 1485.3 547.0 1485.3 546.1C1485.3 545.2 1486.0 543.9 1486.5 543.6C1487.0 543.4 1488.0 544.1 1488.2 544.6C1488.4 545.1 1488.0 545.7 1487.7 546.4C1487.4 547.1 1486.9 548.8 1486.5 548.7Z" fill="#c2ee8e" />
<path d="M1522.6 532.8C1522.4 533.1 1521.6 533.1 1521.2 533.0C1520.8 532.9 1520.4 532.4 1520.2 532.0C1520.0 531.6 1519.5 531.0 1519.8 530.8C1520.1 530.6 1521.8 530.7 1522.3 531.0C1522.8 531.3 1522.8 532.5 1522.6 532.8Z" fill="#c2ee8e" />
<ellipse cx="1505" cy="517" rx="4.5" ry="1.3" transform="rotate(65 1505 517)" fill="#c2ee8e"/>
<ellipse cx="1461" cy="538" rx="4.9" ry="1.4" transform="rotate(53 1461 538)" fill="#c2ee8e"/>
<path d="M1502.2 567.9C1501.4 568.7 1498.5 567.4 1497.3 565.7C1496.1 564.1 1495.0 559.5 1495.0 558.0C1495.0 556.5 1495.9 555.9 1497.1 556.4C1498.3 556.9 1501.4 558.9 1502.3 560.8C1503.2 562.7 1503.0 567.1 1502.2 567.9Z" fill="#c2ee8e" />
<path d="M1502.5 558.9C1502.3 558.4 1505.9 557.1 1507.2 556.7C1508.5 556.3 1509.8 556.5 1510.5 556.7C1511.2 557.0 1511.6 557.7 1511.2 558.2C1510.8 558.7 1509.5 559.4 1508.1 559.5C1506.6 559.6 1502.7 559.4 1502.5 558.9Z" fill="#c2ee8e" />
<path d="M1534.4 597.4C1533.9 597.2 1533.2 592.4 1533.3 590.7C1533.4 589.0 1534.4 587.8 1535.0 587.3C1535.6 586.8 1536.5 587.1 1536.8 587.9C1537.1 588.7 1537.0 590.5 1536.6 592.1C1536.2 593.7 1535.0 597.6 1534.4 597.4Z" fill="#c2ee8e" />
<ellipse cx="1523" cy="553" rx="7.7" ry="1.5" transform="rotate(35 1523 553)" fill="#c2ee8e"/>
<ellipse cx="1510" cy="549" rx="5.2" ry="1.3" transform="rotate(-61 1510 549)" fill="#c2ee8e"/>
<ellipse cx="1509" cy="578" rx="2.6" ry="0.9" transform="rotate(-35 1509 578)" fill="#c2ee8e"/>
<ellipse cx="1515" cy="513" rx="7.7" ry="1.4" transform="rotate(-5 1515 513)" fill="#c2ee8e"/>
<ellipse cx="1476" cy="624" rx="3.0" ry="0.7" transform="rotate(-36 1476 624)" fill="#c2ee8e"/>
<path d="M1476.6 550.0C1476.4 549.7 1477.2 549.0 1477.8 548.6C1478.3 548.2 1479.3 547.4 1479.9 547.5C1480.5 547.6 1481.8 548.7 1481.6 549.2C1481.4 549.7 1479.5 550.3 1478.7 550.4C1477.9 550.5 1476.8 550.3 1476.6 550.0Z" fill="#c2ee8e" />
<path d="M1491.3 572.1C1490.8 571.8 1490.3 570.1 1490.5 569.3C1490.7 568.5 1491.8 567.0 1492.5 567.1C1493.2 567.2 1494.4 569.0 1494.6 569.7C1494.8 570.4 1494.0 570.9 1493.5 571.3C1493.0 571.7 1491.8 572.4 1491.3 572.1Z" fill="#c2ee8e" />
<path d="M1482.7 566.9C1482.4 567.1 1481.6 567.0 1481.4 566.7C1481.2 566.4 1481.4 565.5 1481.6 565.1C1481.8 564.7 1482.2 564.2 1482.5 564.2C1482.8 564.2 1483.2 564.8 1483.2 565.2C1483.2 565.7 1483.0 566.6 1482.7 566.9Z" fill="#c2ee8e" />
<path d="M1502.5 565.1C1501.9 565.6 1500.6 566.3 1499.6 565.9C1498.6 565.5 1496.4 563.5 1496.6 562.6C1496.8 561.7 1499.6 560.4 1500.7 560.4C1501.8 560.4 1502.9 562.0 1503.2 562.8C1503.5 563.6 1503.1 564.6 1502.5 565.1Z" fill="#c2ee8e" />
<path d="M1446.8 558.8C1446.3 558.4 1445.8 556.5 1446.1 555.6C1446.4 554.7 1447.9 553.6 1448.5 553.3C1449.1 553.0 1449.6 552.9 1449.7 553.7C1449.8 554.5 1449.5 557.0 1449.0 557.9C1448.5 558.8 1447.3 559.2 1446.8 558.8Z" fill="#c2ee8e" />
<path d="M1514.4 525.5C1514.1 524.9 1515.6 522.5 1516.5 521.6C1517.4 520.7 1518.9 519.9 1519.7 520.2C1520.5 520.5 1521.8 522.4 1521.6 523.3C1521.3 524.2 1519.4 525.0 1518.2 525.4C1517.0 525.8 1514.7 526.1 1514.4 525.5Z" fill="#c2ee8e" />
<path d="M1521.9 530.1C1521.6 529.7 1521.8 527.7 1522.3 527.0C1522.8 526.3 1524.7 525.8 1525.2 525.8C1525.8 525.8 1525.8 526.3 1525.6 526.9C1525.4 527.5 1524.8 529.0 1524.2 529.5C1523.6 530.0 1522.2 530.5 1521.9 530.1Z" fill="#c2ee8e" />
<ellipse cx="1463" cy="553" rx="4.3" ry="1.0" transform="rotate(-70 1463 553)" fill="#c2ee8e"/>
<ellipse cx="1495" cy="555" rx="4.8" ry="1.7" transform="rotate(77 1495 555)" fill="#c2ee8e"/>
<path d="M1529.6 574.6C1529.3 574.0 1529.6 573.0 1530.3 572.6C1531.0 572.2 1532.7 571.9 1533.5 572.0C1534.3 572.1 1535.7 572.6 1535.4 573.3C1535.1 574.0 1532.9 576.1 1531.9 576.3C1530.9 576.5 1529.9 575.2 1529.6 574.6Z" fill="#c2ee8e" />
<ellipse cx="1540" cy="563" rx="4.5" ry="1.3" transform="rotate(42 1540 563)" fill="#c2ee8e"/>
<path d="M1492.4 546.1C1492.1 546.3 1491.3 546.2 1491.0 546.0C1490.7 545.8 1490.5 545.0 1490.7 544.6C1490.9 544.2 1491.8 543.9 1492.1 543.9C1492.4 543.9 1492.5 544.5 1492.6 544.9C1492.6 545.3 1492.7 545.9 1492.4 546.1Z" fill="#c2ee8e" />
<path d="M1489.0 541.3C1488.1 541.8 1487.0 541.3 1486.6 540.0C1486.2 538.7 1486.3 534.7 1486.8 533.6C1487.2 532.5 1488.4 532.7 1489.3 533.2C1490.2 533.7 1492.2 535.4 1492.2 536.7C1492.2 538.1 1489.9 540.8 1489.0 541.3Z" fill="#c2ee8e" />
<ellipse cx="1430" cy="556" rx="1.7" ry="0.6" transform="rotate(2 1430 556)" fill="#c2ee8e"/>
<path d="M1467.2 524.9C1466.5 524.8 1465.2 523.0 1465.0 522.1C1464.8 521.2 1465.2 520.1 1465.8 519.5C1466.4 518.9 1467.9 518.0 1468.4 518.5C1468.9 519.0 1469.2 521.7 1469.0 522.8C1468.8 523.9 1467.9 525.0 1467.2 524.9Z" fill="#c2ee8e" />
<path d="M1437.2 548.1C1436.4 548.2 1434.3 546.9 1434.0 546.0C1433.7 545.1 1434.7 543.6 1435.5 543.0C1436.3 542.4 1438.2 541.9 1438.7 542.2C1439.2 542.6 1438.8 544.1 1438.6 545.1C1438.3 546.1 1438.0 548.0 1437.2 548.1Z" fill="#c2ee8e" />
<path d="M1468.5 529.3C1468.0 529.9 1466.1 528.8 1465.0 528.2C1463.9 527.6 1461.9 526.4 1461.7 525.5C1461.5 524.6 1462.8 523.1 1463.9 522.9C1465.0 522.7 1467.4 523.4 1468.2 524.5C1469.0 525.6 1469.0 528.7 1468.5 529.3Z" fill="#c2ee8e" />
<ellipse cx="1451" cy="542" rx="5.4" ry="1.1" transform="rotate(3 1451 542)" fill="#c2ee8e"/>
<path d="M1457.6 560.0C1457.3 559.7 1456.7 558.6 1456.9 558.0C1457.1 557.4 1458.1 556.3 1458.6 556.2C1459.1 556.1 1459.7 556.6 1459.7 557.2C1459.8 557.8 1459.2 559.4 1458.9 559.9C1458.6 560.4 1457.9 560.3 1457.6 560.0Z" fill="#c2ee8e" />
<ellipse cx="1450" cy="529" rx="4.0" ry="0.8" transform="rotate(-23 1450 529)" fill="#c2ee8e"/>
<ellipse cx="1476" cy="530" rx="4.5" ry="1.1" transform="rotate(-9 1476 530)" fill="#c2ee8e"/>
<path d="M1443.2 535.9C1442.8 536.0 1441.8 534.8 1441.5 534.0C1441.2 533.2 1441.2 531.6 1441.6 531.1C1442.0 530.6 1443.6 530.4 1444.0 530.8C1444.4 531.2 1444.3 532.6 1444.2 533.5C1444.1 534.4 1443.7 535.8 1443.2 535.9Z" fill="#c2ee8e" />
<path d="M1462.9 545.2C1462.6 545.2 1461.8 544.2 1461.6 543.7C1461.4 543.2 1461.0 542.3 1461.5 541.9C1462.0 541.5 1463.9 540.8 1464.3 541.1C1464.7 541.4 1463.9 543.1 1463.7 543.8C1463.5 544.5 1463.2 545.2 1462.9 545.2Z" fill="#c2ee8e" />
<path d="M1430.8 503.6C1430.2 503.1 1429.4 501.7 1429.8 501.2C1430.2 500.7 1432.5 500.6 1433.2 500.8C1434.0 501.0 1434.2 501.7 1434.3 502.3C1434.3 502.9 1434.1 504.3 1433.5 504.5C1432.9 504.7 1431.4 504.2 1430.8 503.6Z" fill="#c2ee8e" />
<ellipse cx="1436" cy="541" rx="5.2" ry="1.0" transform="rotate(12 1436 541)" fill="#c2ee8e"/>
<ellipse cx="1444" cy="553" rx="2.2" ry="0.9" transform="rotate(69 1444 553)" fill="#c2ee8e"/>
<path d="M1459.9 542.8C1459.5 542.4 1459.0 540.5 1459.3 539.4C1459.6 538.3 1461.0 536.4 1461.7 536.0C1462.4 535.6 1463.5 536.2 1463.5 537.2C1463.5 538.2 1462.4 540.9 1461.8 541.8C1461.2 542.7 1460.3 543.2 1459.9 542.8Z" fill="#c2ee8e" />
<path d="M1508.2 603.3C1507.7 603.2 1507.1 601.5 1507.3 600.3C1507.5 599.1 1508.9 596.6 1509.4 596.2C1510.0 595.8 1510.5 597.0 1510.6 597.7C1510.7 598.4 1510.5 599.7 1510.1 600.6C1509.7 601.5 1508.7 603.3 1508.2 603.3Z" fill="#c2ee8e" />
<ellipse cx="1448" cy="567" rx="3.1" ry="0.8" transform="rotate(76 1448 567)" fill="#c2ee8e"/>
<path d="M1472.1 584.3C1471.8 584.5 1470.9 584.6 1470.5 584.0C1470.1 583.4 1469.4 581.2 1469.6 580.7C1469.8 580.2 1471.3 580.4 1471.8 580.7C1472.3 581.0 1472.5 582.0 1472.5 582.6C1472.5 583.2 1472.4 584.1 1472.1 584.3Z" fill="#c2ee8e" />
<ellipse cx="1488" cy="596" rx="8.9" ry="1.7" transform="rotate(-57 1488 596)" fill="#c2ee8e"/>
<path d="M1491.2 578.5C1491.1 578.1 1491.7 577.6 1492.6 577.2C1493.5 576.8 1495.9 575.9 1496.8 576.1C1497.7 576.3 1498.6 577.7 1498.0 578.3C1497.4 578.9 1494.3 579.5 1493.2 579.5C1492.1 579.5 1491.3 578.9 1491.2 578.5Z" fill="#c2ee8e" />
<path d="M1474.6 604.6C1474.2 604.0 1474.8 601.9 1475.3 600.9C1475.8 599.9 1477.0 599.3 1477.8 598.9C1478.6 598.5 1480.0 597.8 1479.9 598.7C1479.9 599.6 1478.4 603.2 1477.5 604.2C1476.6 605.2 1475.0 605.2 1474.6 604.6Z" fill="#c2ee8e" />
<ellipse cx="1423" cy="613" rx="3.6" ry="1.1" transform="rotate(-10 1423 613)" fill="#c2ee8e"/>
<ellipse cx="1441" cy="563" rx="5.1" ry="0.9" transform="rotate(26 1441 563)" fill="#c2ee8e"/>
<ellipse cx="1422" cy="592" rx="5.3" ry="1.8" transform="rotate(14 1422 592)" fill="#c2ee8e"/>
<ellipse cx="1431" cy="582" rx="6.0" ry="1.8" transform="rotate(-15 1431 582)" fill="#c2ee8e"/>
<ellipse cx="1401" cy="587" rx="1.6" ry="0.6" transform="rotate(-33 1401 587)" fill="#c2ee8e"/>
<ellipse cx="1441" cy="642" rx="4.7" ry="1.1" transform="rotate(-18 1441 642)" fill="#c2ee8e"/>
<ellipse cx="1461" cy="581" rx="5.9" ry="1.3" transform="rotate(41 1461 581)" fill="#c2ee8e"/>
<path d="M1423.7 595.2C1422.6 594.9 1420.9 591.4 1420.5 589.4C1420.1 587.4 1420.4 583.9 1421.1 583.3C1421.8 582.7 1423.4 584.4 1424.4 585.8C1425.4 587.2 1427.2 589.9 1427.1 591.5C1427.0 593.1 1424.8 595.6 1423.7 595.2Z" fill="#c2ee8e" />
<path d="M1451.5 580.9C1451.1 580.6 1452.1 577.8 1452.4 576.9C1452.8 576.0 1453.1 575.5 1453.6 575.4C1454.1 575.3 1455.4 575.6 1455.6 576.2C1455.8 576.8 1455.3 578.1 1454.6 578.9C1453.9 579.7 1451.9 581.2 1451.5 580.9Z" fill="#c2ee8e" />
<ellipse cx="1445" cy="543" rx="4.6" ry="1.4" transform="rotate(43 1445 543)" fill="#c2ee8e"/>
<ellipse cx="1441" cy="587" rx="6.4" ry="1.4" transform="rotate(23 1441 587)" fill="#c2ee8e"/>
<ellipse cx="1437" cy="588" rx="2.1" ry="0.8" transform="rotate(-23 1437 588)" fill="#c2ee8e"/>
<ellipse cx="1447" cy="598" rx="3.1" ry="1.0" transform="rotate(56 1447 598)" fill="#c2ee8e"/>
<path d="M1475.3 644.7C1475.2 645.3 1475.2 646.3 1474.6 646.1C1474.0 645.9 1472.0 644.1 1471.6 643.4C1471.2 642.7 1471.6 641.8 1472.2 641.7C1472.8 641.6 1474.8 642.2 1475.3 642.7C1475.8 643.2 1475.4 644.1 1475.3 644.7Z" fill="#c2ee8e" />
<path d="M1497.5 599.6C1497.0 599.6 1497.1 598.5 1497.4 597.2C1497.7 596.0 1498.5 592.8 1499.2 592.1C1499.9 591.4 1501.2 592.4 1501.5 593.2C1501.8 594.1 1501.4 596.1 1500.7 597.2C1500.0 598.3 1498.0 599.6 1497.5 599.6Z" fill="#c2ee8e" />
<path d="M1443.1 583.4C1442.9 583.8 1442.5 584.1 1441.8 584.0C1441.1 583.9 1439.2 583.1 1438.9 582.7C1438.7 582.3 1439.6 581.6 1440.3 581.4C1441.0 581.2 1442.7 581.3 1443.2 581.6C1443.7 581.9 1443.3 583.0 1443.1 583.4Z" fill="#c2ee8e" />
<path d="M1455.0 579.1C1455.0 580.0 1454.1 580.5 1453.2 580.4C1452.3 580.3 1450.0 579.4 1449.5 578.7C1449.0 578.1 1449.3 577.1 1450.0 576.5C1450.7 575.9 1452.6 574.4 1453.4 574.8C1454.2 575.2 1455.0 578.2 1455.0 579.1Z" fill="#c2ee8e" />
<ellipse cx="1414" cy="603" rx="4.3" ry="1.5" transform="rotate(-16 1414 603)" fill="#c2ee8e"/>
<path d="M1432.1 594.7C1431.6 594.8 1430.2 593.3 1430.0 592.4C1429.8 591.5 1430.8 589.5 1431.2 589.2C1431.6 588.9 1432.0 590.0 1432.2 590.4C1432.5 590.8 1432.7 591.1 1432.7 591.8C1432.7 592.5 1432.5 594.6 1432.1 594.7Z" fill="#c2ee8e" />
<ellipse cx="1497" cy="641" rx="3.2" ry="1.0" transform="rotate(5 1497 641)" fill="#c2ee8e"/>
<ellipse cx="1501" cy="596" rx="3.4" ry="0.6" transform="rotate(44 1501 596)" fill="#c2ee8e"/>
<ellipse cx="1466" cy="621" rx="7.9" ry="1.4" transform="rotate(60 1466 621)" fill="#c2ee8e"/>
<path d="M1483.3 634.2C1482.7 634.6 1479.9 633.5 1478.7 632.7C1477.5 631.9 1476.1 630.4 1476.1 629.6C1476.0 628.8 1477.3 627.6 1478.4 627.7C1479.5 627.8 1481.7 629.2 1482.5 630.3C1483.3 631.4 1483.9 633.8 1483.3 634.2Z" fill="#c2ee8e" />
<path d="M1473.2 605.7C1473.1 606.4 1472.2 607.6 1471.6 607.6C1471.0 607.6 1469.8 606.5 1469.4 605.8C1469.0 605.1 1468.7 604.0 1469.2 603.6C1469.7 603.2 1471.7 603.4 1472.4 603.7C1473.1 604.1 1473.3 605.1 1473.2 605.7Z" fill="#c2ee8e" />
<ellipse cx="1472" cy="592" rx="3.7" ry="1.2" transform="rotate(-71 1472 592)" fill="#c2ee8e"/>
<ellipse cx="1439" cy="593" rx="4.6" ry="0.9" transform="rotate(43 1439 593)" fill="#c2ee8e"/>
<ellipse cx="1483" cy="557" rx="8.0" ry="1.4" transform="rotate(61 1483 557)" fill="#c2ee8e"/>
<ellipse cx="1530" cy="595" rx="9.9" ry="1.8" transform="rotate(-24 1530 595)" fill="#c2ee8e"/>
<ellipse cx="1493" cy="575" rx="7.5" ry="1.5" transform="rotate(-42 1493 575)" fill="#c2ee8e"/>
<ellipse cx="1504" cy="602" rx="2.5" ry="0.8" transform="rotate(-63 1504 602)" fill="#c2ee8e"/>
<path d="M1467.5 597.3C1467.0 596.7 1466.9 594.5 1467.5 594.0C1468.1 593.5 1470.0 594.0 1471.0 594.1C1472.0 594.2 1473.6 594.0 1473.5 594.5C1473.4 595.0 1471.5 596.9 1470.5 597.4C1469.5 597.9 1468.0 597.9 1467.5 597.3Z" fill="#c2ee8e" />
<ellipse cx="1474" cy="592" rx="2.0" ry="0.7" transform="rotate(-30 1474 592)" fill="#c2ee8e"/>
<ellipse cx="1489" cy="590" rx="4.6" ry="1.1" transform="rotate(44 1489 590)" fill="#c2ee8e"/>
<path d="M1504.5 575.1C1504.4 575.6 1502.8 575.1 1501.9 574.8C1501.0 574.4 1499.2 573.5 1498.9 573.0C1498.7 572.5 1499.8 572.0 1500.4 571.8C1501.0 571.6 1501.8 571.2 1502.5 571.8C1503.2 572.3 1504.6 574.6 1504.5 575.1Z" fill="#c2ee8e" />
<path d="M1542.2 640.0C1541.8 639.4 1543.2 636.7 1544.1 635.7C1545.0 634.7 1546.6 634.0 1547.7 634.1C1548.8 634.2 1550.9 635.3 1550.7 636.2C1550.5 637.1 1548.0 638.9 1546.6 639.5C1545.2 640.1 1542.6 640.6 1542.2 640.0Z" fill="#c2ee8e" />
<path d="M1490.3 585.9C1489.8 586.8 1488.2 587.7 1487.4 587.3C1486.6 586.9 1485.4 584.4 1485.2 583.3C1485.0 582.2 1485.1 580.7 1486.0 580.5C1486.9 580.3 1489.8 581.2 1490.5 582.1C1491.2 583.0 1490.8 585.0 1490.3 585.9Z" fill="#c2ee8e" />
<ellipse cx="1511" cy="623" rx="5.7" ry="1.2" transform="rotate(4 1511 623)" fill="#c2ee8e"/>
<path d="M1524.0 595.5C1523.8 594.7 1523.6 593.6 1524.1 593.2C1524.5 592.9 1526.0 592.9 1526.7 593.4C1527.4 593.9 1528.3 595.5 1528.1 596.3C1527.9 597.0 1526.2 598.0 1525.5 597.9C1524.8 597.8 1524.2 596.3 1524.0 595.5Z" fill="#c2ee8e" />
<path d="M1475.6 574.9C1475.2 575.3 1474.7 575.7 1474.2 575.3C1473.7 574.9 1472.8 573.4 1472.7 572.7C1472.6 572.0 1473.0 570.9 1473.7 570.9C1474.4 570.9 1476.5 571.9 1476.8 572.6C1477.1 573.3 1476.0 574.5 1475.6 574.9Z" fill="#c2ee8e" />
<path d="M1482.9 587.8C1482.7 588.0 1480.7 586.6 1479.8 585.9C1478.9 585.2 1477.7 584.2 1477.6 583.7C1477.5 583.2 1478.6 582.7 1479.2 582.8C1479.8 582.9 1480.6 583.7 1481.2 584.5C1481.8 585.3 1483.1 587.6 1482.9 587.8Z" fill="#c2ee8e" />
<ellipse cx="1473" cy="602" rx="3.9" ry="1.0" transform="rotate(-9 1473 602)" fill="#c2ee8e"/>
<path d="M1505.7 585.9C1504.9 586.5 1503.8 588.1 1503.1 587.3C1502.4 586.5 1501.7 582.4 1501.5 580.9C1501.3 579.4 1501.1 577.7 1502.2 578.2C1503.3 578.7 1507.5 582.6 1508.1 583.9C1508.7 585.2 1506.5 585.3 1505.7 585.9Z" fill="#c2ee8e" />
<path d="M1462.8 567.1C1462.4 566.9 1462.2 564.9 1462.2 564.1C1462.2 563.3 1462.2 562.4 1462.5 562.1C1462.8 561.8 1463.8 561.6 1464.1 562.1C1464.4 562.6 1464.6 564.6 1464.4 565.4C1464.2 566.2 1463.2 567.3 1462.8 567.1Z" fill="#c2ee8e" />
<ellipse cx="1470" cy="613" rx="2.6" ry="0.8" transform="rotate(-28 1470 613)" fill="#c2ee8e"/>
<ellipse cx="1468" cy="583" rx="2.5" ry="0.7" transform="rotate(9 1468 583)" fill="#c2ee8e"/>
<ellipse cx="1506" cy="584" rx="2.7" ry="1.0" transform="rotate(-72 1506 584)" fill="#c2ee8e"/>
<path d="M1487.4 597.0C1487.2 596.4 1487.0 595.4 1487.8 594.9C1488.6 594.4 1491.4 593.5 1492.2 593.7C1493.0 593.9 1493.2 595.1 1492.7 595.9C1492.2 596.7 1490.2 598.3 1489.3 598.5C1488.4 598.7 1487.7 597.6 1487.4 597.0Z" fill="#c2ee8e" />
<path d="M1461.3 630.5C1460.8 630.3 1459.7 629.0 1459.7 628.0C1459.7 627.0 1460.8 624.9 1461.5 624.5C1462.2 624.1 1463.6 625.1 1463.8 625.9C1464.0 626.7 1463.3 628.6 1462.9 629.4C1462.5 630.2 1461.8 630.7 1461.3 630.5Z" fill="#c2ee8e" />
<path d="M1516.7 590.6C1516.0 591.0 1514.6 588.9 1514.6 587.4C1514.5 585.9 1515.6 582.8 1516.4 581.6C1517.2 580.4 1519.3 579.4 1519.7 580.0C1520.1 580.6 1519.5 583.3 1519.0 585.1C1518.5 586.9 1517.4 590.2 1516.7 590.6Z" fill="#c2ee8e" />
<path d="M1541.4 603.8C1540.8 603.8 1539.4 601.0 1539.0 600.0C1538.6 599.0 1538.7 598.5 1538.8 598.1C1538.9 597.7 1539.0 597.2 1539.6 597.5C1540.2 597.8 1542.2 598.9 1542.5 599.9C1542.8 600.9 1542.0 603.8 1541.4 603.8Z" fill="#c2ee8e" />
<path d="M1487.4 625.5C1487.0 625.6 1485.9 625.3 1485.7 625.0C1485.5 624.7 1485.9 624.2 1486.1 623.8C1486.3 623.4 1486.7 622.7 1487.0 622.7C1487.3 622.8 1488.1 623.6 1488.2 624.1C1488.3 624.6 1487.8 625.4 1487.4 625.5Z" fill="#c2ee8e" />
<ellipse cx="1510" cy="611" rx="5.2" ry="0.9" transform="rotate(-43 1510 611)" fill="#c2ee8e"/>
<ellipse cx="1488" cy="614" rx="2.3" ry="0.9" transform="rotate(67 1488 614)" fill="#c2ee8e"/>
<ellipse cx="1544" cy="626" rx="3.7" ry="0.7" transform="rotate(-67 1544 626)" fill="#c2ee8e"/>
<ellipse cx="1496" cy="664" rx="8.0" ry="1.5" transform="rotate(-66 1496 664)" fill="#c2ee8e"/>
<ellipse cx="1546" cy="600" rx="5.1" ry="1.5" transform="rotate(-20 1546 600)" fill="#c2ee8e"/>
<path d="M1552.9 635.6C1552.2 635.9 1550.1 635.6 1549.5 634.9C1548.9 634.1 1549.2 631.9 1549.5 631.1C1549.8 630.3 1550.5 629.9 1551.2 630.3C1551.9 630.7 1553.3 632.5 1553.6 633.4C1553.9 634.3 1553.6 635.4 1552.9 635.6Z" fill="#c2ee8e" />
<path d="M1501.1 624.0C1500.6 623.8 1499.9 622.6 1500.2 621.5C1500.5 620.4 1502.3 617.7 1502.9 617.4C1503.5 617.1 1503.8 618.6 1503.9 619.5C1504.0 620.4 1503.9 621.8 1503.4 622.5C1502.9 623.2 1501.6 624.2 1501.1 624.0Z" fill="#c2ee8e" />
<ellipse cx="1510" cy="629" rx="6.9" ry="1.4" transform="rotate(57 1510 629)" fill="#c2ee8e"/>
<path d="M1541.9 591.4C1541.8 592.0 1540.7 592.6 1540.0 592.6C1539.3 592.6 1538.0 591.9 1537.9 591.4C1537.8 590.9 1538.7 590.3 1539.2 589.9C1539.7 589.5 1540.2 589.0 1540.7 589.2C1541.2 589.5 1542.0 590.8 1541.9 591.4Z" fill="#c2ee8e" />
<path d="M1529.6 598.1C1529.2 598.1 1528.5 598.0 1528.3 597.3C1528.1 596.6 1528.1 594.5 1528.4 593.9C1528.7 593.3 1529.5 592.9 1529.9 593.5C1530.3 594.1 1530.6 596.5 1530.6 597.3C1530.5 598.1 1530.0 598.1 1529.6 598.1Z" fill="#c2ee8e" />
<ellipse cx="1532" cy="641" rx="5.8" ry="1.5" transform="rotate(11 1532 641)" fill="#c2ee8e"/>
<ellipse cx="1518" cy="635" rx="4.4" ry="0.9" transform="rotate(-55 1518 635)" fill="#c2ee8e"/>
<ellipse cx="1513" cy="633" rx="3.0" ry="0.6" transform="rotate(-73 1513 633)" fill="#c2ee8e"/>
<path d="M1544.9 566.3C1545.0 566.6 1544.3 567.3 1543.4 567.4C1542.5 567.5 1540.1 567.2 1539.3 566.8C1538.5 566.4 1538.2 565.4 1538.7 565.2C1539.2 565.0 1541.6 565.4 1542.6 565.6C1543.6 565.8 1544.8 566.0 1544.9 566.3Z" fill="#c2ee8e" />
<path d="M1521.0 556.8C1520.7 556.5 1520.4 555.4 1520.8 555.1C1521.2 554.8 1522.7 554.8 1523.3 554.9C1523.9 555.0 1524.6 555.5 1524.5 555.9C1524.4 556.3 1523.1 557.0 1522.5 557.1C1521.9 557.2 1521.3 557.1 1521.0 556.8Z" fill="#c2ee8e" />
<path d="M1512.1 591.1C1511.8 591.5 1511.0 591.8 1510.0 591.4C1509.0 591.0 1506.2 589.3 1506.0 588.5C1505.8 587.7 1507.8 586.4 1508.8 586.4C1509.8 586.4 1511.5 587.9 1512.0 588.7C1512.5 589.5 1512.4 590.7 1512.1 591.1Z" fill="#c2ee8e" />
<ellipse cx="1524" cy="550" rx="5.6" ry="1.8" transform="rotate(-54 1524 550)" fill="#c2ee8e"/>
<path d="M1532.5 615.5C1531.7 615.2 1531.1 614.0 1531.6 612.7C1532.1 611.5 1534.6 608.5 1535.6 608.0C1536.6 607.5 1537.4 608.6 1537.5 609.7C1537.6 610.8 1537.1 613.6 1536.3 614.6C1535.5 615.6 1533.3 615.8 1532.5 615.5Z" fill="#c2ee8e" />
<path d="M1506.3 635.9C1505.9 636.1 1504.0 634.7 1503.3 633.9C1502.5 633.1 1501.6 631.6 1501.8 630.9C1502.0 630.2 1503.5 629.6 1504.2 629.9C1504.9 630.1 1505.5 631.4 1505.8 632.4C1506.1 633.4 1506.7 635.6 1506.3 635.9Z" fill="#c2ee8e" />
<ellipse cx="1523" cy="608" rx="3.8" ry="0.8" transform="rotate(-61 1523 608)" fill="#c2ee8e"/>
<path d="M1569.5 623.8C1569.0 623.9 1568.6 624.2 1568.2 623.5C1567.8 622.8 1566.6 620.3 1567.0 619.6C1567.4 618.9 1569.8 619.0 1570.5 619.5C1571.2 620.0 1571.6 621.9 1571.4 622.6C1571.2 623.3 1570.0 623.6 1569.5 623.8Z" fill="#c2ee8e" />
<ellipse cx="1505" cy="551" rx="2.7" ry="1.0" transform="rotate(38 1505 551)" fill="#c2ee8e"/>
<path d="M1553.3 597.2C1553.2 598.1 1551.5 598.6 1549.7 597.9C1547.9 597.1 1543.6 594.1 1542.7 592.7C1541.8 591.3 1543.2 589.6 1544.5 589.6C1545.8 589.6 1549.1 591.3 1550.6 592.6C1552.1 593.9 1553.4 596.3 1553.3 597.2Z" fill="#c2ee8e" />
<path d="M1492.5 585.6C1492.4 585.3 1493.2 584.8 1493.6 584.6C1494.0 584.4 1494.7 584.2 1494.9 584.3C1495.2 584.4 1495.2 585.0 1495.1 585.3C1495.0 585.6 1494.6 586.2 1494.2 586.2C1493.8 586.2 1492.6 585.9 1492.5 585.6Z" fill="#c2ee8e" />
<ellipse cx="1477" cy="638" rx="4.1" ry="1.5" transform="rotate(70 1477 638)" fill="#c2ee8e"/>
<ellipse cx="1525" cy="640" rx="3.7" ry="1.1" transform="rotate(-78 1525 640)" fill="#c2ee8e"/>
<ellipse cx="1560" cy="647" rx="7.3" ry="1.6" transform="rotate(-75 1560 647)" fill="#c2ee8e"/>
<ellipse cx="1543" cy="620" rx="3.5" ry="0.7" transform="rotate(-79 1543 620)" fill="#c2ee8e"/>
<ellipse cx="1482" cy="639" rx="1.9" ry="0.7" transform="rotate(-68 1482 639)" fill="#c2ee8e"/>
<path d="M1517.4 578.9C1516.7 578.9 1515.0 577.8 1514.4 576.4C1513.9 575.0 1513.4 571.5 1514.1 570.4C1514.8 569.3 1517.8 568.6 1518.6 569.6C1519.3 570.6 1518.8 574.9 1518.6 576.4C1518.4 577.9 1518.1 578.9 1517.4 578.9Z" fill="#c2ee8e" />
<ellipse cx="1526" cy="640" rx="6.2" ry="1.2" transform="rotate(-19 1526 640)" fill="#c2ee8e"/>
<path d="M1501.4 648.8C1501.4 649.2 1500.8 649.4 1499.8 648.9C1498.8 648.4 1496.1 646.6 1495.5 646.0C1494.9 645.4 1495.5 645.1 1496.3 645.1C1497.0 645.1 1499.2 645.7 1500.0 646.3C1500.8 646.9 1501.4 648.4 1501.4 648.8Z" fill="#c2ee8e" />
<ellipse cx="1530" cy="619" rx="6.9" ry="1.3" transform="rotate(-4 1530 619)" fill="#c2ee8e"/>
<path d="M1505.6 610.2C1505.3 610.7 1504.1 611.1 1503.4 611.0C1502.8 610.9 1501.9 610.4 1501.7 609.7C1501.5 609.0 1501.6 607.3 1502.2 607.0C1502.8 606.7 1504.5 607.3 1505.1 607.8C1505.7 608.3 1505.9 609.7 1505.6 610.2Z" fill="#c2ee8e" />
<ellipse cx="1506" cy="655" rx="3.2" ry="0.9" transform="rotate(-5 1506 655)" fill="#c2ee8e"/>
<ellipse cx="1473" cy="670" rx="4.3" ry="0.9" transform="rotate(35 1473 670)" fill="#c2ee8e"/>
<ellipse cx="1468" cy="649" rx="3.6" ry="0.8" transform="rotate(36 1468 649)" fill="#c2ee8e"/>
<path d="M1460.6 678.0C1460.3 677.6 1460.6 676.2 1461.4 675.4C1462.2 674.6 1464.4 673.2 1465.2 673.2C1466.0 673.2 1466.5 674.3 1466.2 675.1C1465.9 675.9 1464.2 677.5 1463.3 678.0C1462.4 678.5 1460.9 678.4 1460.6 678.0Z" fill="#c2ee8e" />
<path d="M1554.7 646.8C1555.1 648.0 1552.9 650.8 1550.9 651.1C1548.9 651.4 1544.5 649.2 1542.8 648.4C1541.1 647.6 1539.8 647.0 1540.8 646.2C1541.8 645.5 1546.2 643.8 1548.5 643.9C1550.8 644.0 1554.3 645.6 1554.7 646.8Z" fill="#c2ee8e" />
<path d="M1511.0 613.8C1510.7 613.5 1510.2 611.4 1510.4 610.8C1510.6 610.2 1511.4 610.2 1511.9 610.1C1512.4 610.0 1513.2 609.8 1513.3 610.2C1513.4 610.6 1512.9 611.8 1512.5 612.4C1512.1 613.0 1511.3 614.1 1511.0 613.8Z" fill="#c2ee8e" />
<ellipse cx="1549" cy="625" rx="5.7" ry="1.2" transform="rotate(-43 1549 625)" fill="#c2ee8e"/>
<ellipse cx="1537" cy="665" rx="4.1" ry="0.7" transform="rotate(-3 1537 665)" fill="#c2ee8e"/>
<ellipse cx="1537" cy="668" rx="2.5" ry="1.0" transform="rotate(-60 1537 668)" fill="#c2ee8e"/>
<ellipse cx="1538" cy="531" rx="3.3" ry="0.9" transform="rotate(16 1538 531)" fill="#c2ee8e"/>
<ellipse cx="1544" cy="517" rx="4.7" ry="1.5" transform="rotate(-39 1544 517)" fill="#c2ee8e"/>
<ellipse cx="1565" cy="551" rx="5.2" ry="1.1" transform="rotate(-2 1565 551)" fill="#c2ee8e"/>
<ellipse cx="1552" cy="556" rx="3.3" ry="1.0" transform="rotate(39 1552 556)" fill="#c2ee8e"/>
<ellipse cx="1594" cy="560" rx="5.8" ry="1.1" transform="rotate(-9 1594 560)" fill="#c2ee8e"/>
<path d="M1590.7 545.8C1590.1 545.5 1590.0 543.3 1590.7 542.1C1591.5 540.9 1594.1 538.9 1595.2 538.4C1596.3 537.9 1597.3 538.4 1597.2 539.3C1597.1 540.2 1595.5 542.8 1594.4 543.9C1593.3 545.0 1591.3 546.1 1590.7 545.8Z" fill="#c2ee8e" />
<ellipse cx="1596" cy="557" rx="3.8" ry="1.0" transform="rotate(76 1596 557)" fill="#c2ee8e"/>
<ellipse cx="1545" cy="559" rx="6.4" ry="1.6" transform="rotate(43 1545 559)" fill="#c2ee8e"/>
<path d="M1551.1 526.8C1551.0 527.3 1549.4 527.6 1548.7 527.5C1548.0 527.4 1547.2 526.9 1546.8 526.3C1546.4 525.7 1545.7 524.4 1546.1 524.1C1546.5 523.8 1548.6 524.2 1549.4 524.6C1550.2 525.0 1551.2 526.3 1551.1 526.8Z" fill="#c2ee8e" />
<ellipse cx="1581" cy="505" rx="5.6" ry="1.6" transform="rotate(44 1581 505)" fill="#c2ee8e"/>
<ellipse cx="1564" cy="555" rx="3.1" ry="1.0" transform="rotate(-70 1564 555)" fill="#c2ee8e"/>
<path d="M1560.9 539.4C1560.6 540.0 1559.6 541.1 1558.9 540.6C1558.2 540.1 1556.8 537.5 1556.7 536.5C1556.6 535.5 1557.7 534.5 1558.4 534.6C1559.1 534.7 1560.4 536.2 1560.8 537.0C1561.2 537.8 1561.2 538.8 1560.9 539.4Z" fill="#c2ee8e" />
<ellipse cx="1571" cy="527" rx="5.4" ry="1.2" transform="rotate(37 1571 527)" fill="#c2ee8e"/>
<path d="M1529.8 541.2C1529.5 541.7 1528.3 542.5 1527.5 542.5C1526.7 542.5 1525.4 541.3 1525.1 540.9C1524.8 540.5 1524.8 540.1 1525.6 539.9C1526.3 539.6 1528.9 539.2 1529.6 539.4C1530.3 539.6 1530.1 540.7 1529.8 541.2Z" fill="#c2ee8e" />
<path d="M1600.3 593.8C1600.1 594.0 1599.0 593.8 1598.5 593.5C1598.0 593.2 1597.2 592.2 1597.1 591.8C1597.0 591.4 1597.2 591.1 1597.7 591.2C1598.2 591.3 1599.4 591.9 1599.8 592.3C1600.2 592.7 1600.5 593.6 1600.3 593.8Z" fill="#c2ee8e" />
<path d="M1552.0 552.3C1551.3 552.1 1550.0 551.6 1549.8 550.9C1549.6 550.2 1550.3 548.4 1550.8 547.9C1551.3 547.4 1552.4 547.3 1553.0 548.0C1553.6 548.7 1554.4 551.4 1554.2 552.1C1554.0 552.8 1552.7 552.5 1552.0 552.3Z" fill="#c2ee8e" />
<path d="M1532.4 601.1C1531.7 600.9 1530.9 599.9 1530.8 599.4C1530.7 598.9 1531.2 598.5 1531.7 598.4C1532.2 598.2 1533.5 598.1 1534.0 598.5C1534.5 598.9 1535.3 600.5 1535.0 600.9C1534.7 601.3 1533.1 601.4 1532.4 601.1Z" fill="#c2ee8e" />
<path d="M1597.2 535.1C1596.9 535.5 1595.9 535.5 1595.3 534.7C1594.7 533.9 1593.4 531.3 1593.5 530.4C1593.6 529.5 1595.2 528.9 1595.8 529.2C1596.4 529.5 1597.1 531.2 1597.3 532.2C1597.5 533.2 1597.5 534.7 1597.2 535.1Z" fill="#c2ee8e" />
<ellipse cx="1551" cy="557" rx="9.7" ry="1.8" transform="rotate(-1 1551 557)" fill="#c2ee8e"/>
<path d="M1545.3 546.8C1544.6 546.9 1543.5 544.2 1543.3 542.5C1543.1 540.8 1543.5 538.0 1544.2 536.7C1544.9 535.4 1546.7 534.0 1547.2 534.9C1547.7 535.8 1547.7 539.9 1547.4 541.9C1547.1 543.9 1546.0 546.7 1545.3 546.8Z" fill="#c2ee8e" />
<ellipse cx="1627" cy="583" rx="3.7" ry="1.2" transform="rotate(-2 1627 583)" fill="#c2ee8e"/>
<ellipse cx="1598" cy="548" rx="8.9" ry="1.7" transform="rotate(56 1598 548)" fill="#c2ee8e"/>
<ellipse cx="1600" cy="557" rx="5.5" ry="1.3" transform="rotate(19 1600 557)" fill="#c2ee8e"/>
<path d="M1640.9 510.8C1640.5 511.4 1639.4 511.2 1638.4 511.1C1637.5 511.0 1635.4 510.9 1635.2 510.3C1635.0 509.7 1636.5 507.9 1637.4 507.5C1638.3 507.1 1640.2 507.2 1640.8 507.8C1641.4 508.4 1641.3 510.2 1640.9 510.8Z" fill="#c2ee8e" />
<ellipse cx="1603" cy="505" rx="5.4" ry="1.6" transform="rotate(-40 1603 505)" fill="#c2ee8e"/>
<path d="M1627.5 567.5C1626.6 567.8 1622.7 566.5 1621.7 565.4C1620.7 564.3 1621.1 561.6 1621.3 560.7C1621.5 559.8 1622.1 559.4 1623.1 559.9C1624.1 560.4 1626.6 562.2 1627.3 563.5C1628.0 564.8 1628.4 567.2 1627.5 567.5Z" fill="#c2ee8e" />
<ellipse cx="1622" cy="534" rx="3.3" ry="0.9" transform="rotate(-30 1622 534)" fill="#c2ee8e"/>
<ellipse cx="1642" cy="540" rx="5.4" ry="1.7" transform="rotate(-0 1642 540)" fill="#c2ee8e"/>
<ellipse cx="1650" cy="527" rx="5.9" ry="1.7" transform="rotate(24 1650 527)" fill="#c2ee8e"/>
<ellipse cx="1588" cy="519" rx="6.7" ry="1.7" transform="rotate(27 1588 519)" fill="#c2ee8e"/>
<ellipse cx="1577" cy="536" rx="4.5" ry="1.1" transform="rotate(53 1577 536)" fill="#c2ee8e"/>
<ellipse cx="1597" cy="534" rx="7.6" ry="1.4" transform="rotate(-38 1597 534)" fill="#c2ee8e"/>
<path d="M1591.2 536.5C1590.9 536.9 1588.1 536.5 1586.8 536.1C1585.5 535.7 1583.6 534.8 1583.3 534.2C1583.0 533.6 1584.0 532.4 1584.9 532.3C1585.8 532.2 1587.5 533.0 1588.6 533.7C1589.6 534.4 1591.5 536.1 1591.2 536.5Z" fill="#c2ee8e" />
<path d="M1585.0 509.1C1585.0 508.3 1586.1 506.1 1586.9 505.7C1587.8 505.3 1589.2 506.1 1590.1 506.5C1591.0 506.9 1593.0 507.5 1592.5 508.2C1592.0 508.9 1588.3 510.4 1587.1 510.5C1585.8 510.6 1585.0 509.9 1585.0 509.1Z" fill="#c2ee8e" />
<ellipse cx="1620" cy="522" rx="9.1" ry="1.8" transform="rotate(-45 1620 522)" fill="#c2ee8e"/>
<path d="M1591.0 548.9C1590.5 549.5 1588.1 550.1 1586.3 549.8C1584.5 549.5 1580.8 548.1 1580.2 547.2C1579.7 546.3 1581.4 544.6 1583.0 544.4C1584.6 544.2 1588.3 545.5 1589.6 546.2C1590.9 547.0 1591.5 548.3 1591.0 548.9Z" fill="#c2ee8e" />
<path d="M1622.3 559.1C1621.3 559.2 1618.6 560.3 1618.5 558.9C1618.4 557.5 1620.5 551.9 1621.7 550.7C1622.9 549.5 1625.0 550.4 1625.4 551.7C1625.9 553.0 1624.9 557.1 1624.4 558.3C1623.9 559.5 1623.3 559.0 1622.3 559.1Z" fill="#c2ee8e" />
<ellipse cx="1597" cy="557" rx="4.0" ry="1.1" transform="rotate(-60 1597 557)" fill="#c2ee8e"/>
<path d="M1593.2 562.9C1592.5 562.6 1591.8 561.2 1591.9 560.2C1592.0 559.2 1593.1 557.1 1593.7 556.7C1594.3 556.4 1595.4 557.2 1595.8 558.1C1596.2 559.0 1596.6 561.1 1596.2 561.9C1595.8 562.7 1593.9 563.2 1593.2 562.9Z" fill="#c2ee8e" />
<path d="M1617.8 579.2C1617.1 578.8 1616.3 575.9 1616.5 573.9C1616.7 571.9 1618.4 567.9 1619.2 567.5C1620.0 567.1 1621.2 570.0 1621.5 571.5C1621.8 573.0 1621.4 575.1 1620.8 576.4C1620.2 577.7 1618.5 579.6 1617.8 579.2Z" fill="#c2ee8e" />
<path d="M1630.0 543.8C1629.5 544.2 1626.2 542.8 1625.0 542.0C1623.8 541.2 1622.9 539.5 1623.1 538.9C1623.3 538.3 1625.3 538.1 1626.1 538.2C1626.9 538.3 1627.2 538.4 1627.9 539.3C1628.6 540.2 1630.5 543.3 1630.0 543.8Z" fill="#c2ee8e" />
<path d="M1602.8 536.4C1602.4 537.0 1599.3 535.7 1598.1 534.8C1596.8 533.9 1595.8 532.2 1595.3 531.0C1594.8 529.8 1594.2 527.6 1595.1 527.6C1595.9 527.6 1599.1 529.6 1600.4 531.1C1601.7 532.6 1603.2 535.8 1602.8 536.4Z" fill="#c2ee8e" />
<ellipse cx="1623" cy="591" rx="5.3" ry="1.7" transform="rotate(-57 1623 591)" fill="#c2ee8e"/>
<ellipse cx="1624" cy="566" rx="4.0" ry="0.9" transform="rotate(47 1624 566)" fill="#c2ee8e"/>
<ellipse cx="1603" cy="548" rx="3.9" ry="0.7" transform="rotate(68 1603 548)" fill="#c2ee8e"/>
<path d="M1450.0 474.3C1449.4 474.2 1448.2 473.1 1448.2 472.2C1448.2 471.3 1448.9 469.3 1449.8 469.0C1450.7 468.7 1453.1 469.8 1453.4 470.5C1453.7 471.2 1452.4 472.4 1451.8 473.0C1451.2 473.6 1450.6 474.4 1450.0 474.3Z" fill="#c2ee8e" />
<path d="M1418.1 490.4C1418.1 489.5 1420.2 488.1 1421.2 487.9C1422.2 487.7 1423.8 488.6 1424.3 489.3C1424.8 490.0 1424.5 491.6 1424.0 492.2C1423.5 492.8 1422.2 493.4 1421.2 493.1C1420.2 492.8 1418.1 491.3 1418.1 490.4Z" fill="#c2ee8e" />
<ellipse cx="1411" cy="455" rx="6.7" ry="1.5" transform="rotate(-17 1411 455)" fill="#c2ee8e"/>
<ellipse cx="1409" cy="510" rx="7.1" ry="1.5" transform="rotate(-4 1409 510)" fill="#c2ee8e"/>
<ellipse cx="1462" cy="506" rx="2.3" ry="0.7" transform="rotate(60 1462 506)" fill="#c2ee8e"/>
<ellipse cx="1377" cy="491" rx="6.3" ry="1.2" transform="rotate(4 1377 491)" fill="#c2ee8e"/>
<ellipse cx="1433" cy="494" rx="3.0" ry="1.0" transform="rotate(-23 1433 494)" fill="#c2ee8e"/>
<ellipse cx="1445" cy="478" rx="6.1" ry="1.3" transform="rotate(25 1445 478)" fill="#c2ee8e"/>
<path d="M1456.9 464.2C1457.0 463.6 1457.5 461.8 1458.3 461.6C1459.1 461.4 1461.2 462.6 1461.7 463.1C1462.2 463.6 1461.8 464.2 1461.1 464.6C1460.4 465.0 1458.4 465.4 1457.7 465.3C1457.0 465.2 1456.8 464.8 1456.9 464.2Z" fill="#c2ee8e" />
<path d="M1447.3 456.2C1447.3 456.7 1446.0 457.8 1444.7 457.8C1443.4 457.8 1440.3 456.6 1439.7 456.1C1439.1 455.6 1440.1 455.0 1440.9 454.8C1441.7 454.6 1443.5 454.5 1444.6 454.7C1445.7 454.9 1447.3 455.7 1447.3 456.2Z" fill="#c2ee8e" />
<path d="M1413.3 504.6C1412.8 503.9 1415.2 502.2 1416.1 501.6C1417.0 501.0 1417.8 500.4 1418.6 500.7C1419.4 501.0 1420.8 502.5 1420.8 503.4C1420.8 504.3 1420.0 505.9 1418.8 506.1C1417.5 506.3 1413.8 505.4 1413.3 504.6Z" fill="#c2ee8e" />
<path d="M1452.8 483.6C1452.5 483.0 1452.5 481.4 1453.1 480.8C1453.6 480.2 1455.2 480.2 1456.1 480.3C1457.0 480.4 1458.9 480.6 1458.7 481.3C1458.5 482.0 1456.1 483.9 1455.1 484.3C1454.1 484.7 1453.1 484.2 1452.8 483.6Z" fill="#c2ee8e" />
<ellipse cx="1404" cy="566" rx="3.9" ry="0.9" transform="rotate(23 1404 566)" fill="#c2ee8e"/>
<ellipse cx="1416" cy="527" rx="2.5" ry="0.7" transform="rotate(18 1416 527)" fill="#c2ee8e"/>
<path d="M1377.1 530.5C1376.4 530.4 1375.2 528.8 1374.7 527.5C1374.2 526.2 1373.9 523.6 1374.4 522.5C1375.0 521.4 1377.3 519.7 1378.0 520.7C1378.7 521.7 1379.0 526.8 1378.8 528.4C1378.6 530.0 1377.8 530.6 1377.1 530.5Z" fill="#c2ee8e" />
<ellipse cx="1379" cy="575" rx="9.0" ry="1.6" transform="rotate(-27 1379 575)" fill="#c2ee8e"/>
<path d="M1410.9 519.8C1410.4 520.0 1408.8 518.8 1408.0 518.1C1407.2 517.4 1405.9 516.0 1406.0 515.5C1406.1 515.0 1407.6 515.2 1408.4 515.4C1409.2 515.6 1410.4 516.2 1410.8 516.9C1411.2 517.6 1411.4 519.6 1410.9 519.8Z" fill="#c2ee8e" />
<ellipse cx="1425" cy="542" rx="7.6" ry="1.4" transform="rotate(76 1425 542)" fill="#c2ee8e"/>
<path d="M1377.0 582.7C1376.2 582.6 1374.4 582.8 1374.3 582.0C1374.2 581.2 1375.6 578.4 1376.4 577.9C1377.2 577.4 1378.7 578.4 1379.2 579.2C1379.7 580.0 1379.6 582.1 1379.2 582.7C1378.8 583.3 1377.8 582.8 1377.0 582.7Z" fill="#c2ee8e" />
<ellipse cx="1438" cy="611" rx="8.7" ry="1.6" transform="rotate(10 1438 611)" fill="#c2ee8e"/>
<ellipse cx="1432" cy="542" rx="5.5" ry="1.7" transform="rotate(37 1432 542)" fill="#c2ee8e"/>
<ellipse cx="1464" cy="560" rx="7.6" ry="1.4" transform="rotate(-75 1464 560)" fill="#c2ee8e"/>
<path d="M1476.9 534.6C1476.5 533.9 1478.6 531.6 1480.7 530.6C1482.8 529.6 1488.8 528.5 1489.7 528.9C1490.6 529.2 1487.3 531.7 1486.2 532.7C1485.1 533.7 1484.8 534.4 1483.3 534.7C1481.8 535.0 1477.3 535.3 1476.9 534.6Z" fill="#c2ee8e" />
<ellipse cx="1428" cy="529" rx="3.9" ry="1.3" transform="rotate(-39 1428 529)" fill="#c2ee8e"/>
<ellipse cx="1376" cy="575" rx="7.1" ry="1.7" transform="rotate(16 1376 575)" fill="#c2ee8e"/>
<path d="M1450.9 577.3C1450.2 576.8 1450.0 575.1 1450.8 574.0C1451.6 572.9 1454.4 570.9 1455.5 570.5C1456.6 570.1 1457.2 570.6 1457.2 571.7C1457.2 572.8 1456.2 576.0 1455.2 576.9C1454.2 577.8 1451.6 577.8 1450.9 577.3Z" fill="#c2ee8e" />
<path d="M1332.8 560.1C1332.8 559.5 1334.1 558.7 1334.9 558.6C1335.7 558.5 1336.7 558.8 1337.5 559.3C1338.3 559.8 1340.0 560.8 1339.6 561.3C1339.2 561.8 1336.0 562.3 1334.9 562.1C1333.8 561.9 1332.8 560.7 1332.8 560.1Z" fill="#c2ee8e" />
<ellipse cx="1348" cy="682" rx="4.4" ry="1.2" transform="rotate(34 1348 682)" fill="#c2ee8e"/>
<path d="M1337.7 530.4C1337.5 529.9 1339.6 529.1 1340.7 528.8C1341.8 528.5 1343.5 528.3 1344.3 528.6C1345.1 528.9 1345.6 530.0 1345.3 530.5C1345.0 531.0 1343.5 531.7 1342.2 531.7C1340.9 531.7 1338.0 530.9 1337.7 530.4Z" fill="#c2ee8e" />
<path d="M1333.2 561.0C1333.1 561.5 1332.7 561.9 1332.0 561.7C1331.3 561.5 1329.3 560.5 1329.0 560.0C1328.7 559.5 1329.3 558.9 1329.9 558.7C1330.5 558.5 1332.2 558.4 1332.7 558.8C1333.2 559.2 1333.3 560.5 1333.2 561.0Z" fill="#c2ee8e" />
<path d="M1358.6 580.0C1358.5 580.5 1356.3 580.3 1355.0 580.3C1353.7 580.2 1351.4 580.1 1350.8 579.7C1350.2 579.3 1350.8 578.1 1351.5 577.7C1352.2 577.3 1354.1 576.9 1355.3 577.3C1356.5 577.7 1358.6 579.5 1358.6 580.0Z" fill="#c2ee8e" />
<path d="M1306.1 556.8C1305.7 556.0 1306.2 554.4 1306.8 554.0C1307.4 553.6 1309.0 554.0 1309.7 554.4C1310.4 554.8 1310.8 555.6 1310.8 556.3C1310.8 557.0 1310.2 558.5 1309.4 558.6C1308.6 558.7 1306.5 557.6 1306.1 556.8Z" fill="#c2ee8e" />
<ellipse cx="1377" cy="551" rx="4.4" ry="0.9" transform="rotate(38 1377 551)" fill="#c2ee8e"/>
<ellipse cx="1340" cy="602" rx="8.7" ry="1.6" transform="rotate(16 1340 602)" fill="#c2ee8e"/>
<ellipse cx="1378" cy="602" rx="3.3" ry="1.2" transform="rotate(-20 1378 602)" fill="#c2ee8e"/>
<ellipse cx="1337" cy="547" rx="8.1" ry="1.7" transform="rotate(50 1337 547)" fill="#c2ee8e"/>
<ellipse cx="1373" cy="591" rx="6.5" ry="1.6" transform="rotate(-34 1373 591)" fill="#c2ee8e"/>
<ellipse cx="1291" cy="624" rx="5.3" ry="1.1" transform="rotate(30 1291 624)" fill="#c2ee8e"/>
<ellipse cx="1393" cy="591" rx="3.1" ry="0.6" transform="rotate(62 1393 591)" fill="#c2ee8e"/>
<ellipse cx="1329" cy="561" rx="3.7" ry="0.7" transform="rotate(-47 1329 561)" fill="#c2ee8e"/>
<path d="M1293.9 558.9C1293.7 558.7 1293.7 557.7 1294.0 557.1C1294.3 556.5 1295.3 555.4 1295.7 555.2C1296.1 555.0 1296.5 555.4 1296.5 555.9C1296.5 556.4 1295.9 558.0 1295.5 558.5C1295.1 559.0 1294.2 559.1 1293.9 558.9Z" fill="#c2ee8e" />
<path d="M1263.0 545.6C1262.2 545.4 1261.5 543.9 1262.2 542.0C1262.9 540.1 1265.6 535.1 1266.9 534.0C1268.2 532.9 1269.8 533.6 1269.8 535.1C1269.8 536.6 1268.3 541.4 1267.2 543.1C1266.1 544.9 1263.8 545.8 1263.0 545.6Z" fill="#c2ee8e" />
<path d="M1308.6 562.5C1308.6 563.0 1308.1 564.1 1307.6 564.1C1307.1 564.1 1305.5 563.0 1305.4 562.5C1305.3 562.0 1306.4 561.5 1306.8 561.2C1307.2 560.9 1307.5 560.7 1307.8 560.9C1308.1 561.1 1308.6 562.0 1308.6 562.5Z" fill="#c2ee8e" />
<path d="M1290.9 533.0C1290.3 533.2 1289.3 531.6 1289.0 530.7C1288.7 529.8 1288.9 528.2 1289.3 527.6C1289.7 527.0 1290.8 527.0 1291.3 527.3C1291.8 527.6 1292.7 528.4 1292.6 529.4C1292.5 530.4 1291.5 532.8 1290.9 533.0Z" fill="#c2ee8e" />
<ellipse cx="1233" cy="573" rx="5.7" ry="1.3" transform="rotate(31 1233 573)" fill="#c2ee8e"/>
<path d="M1278.3 501.7C1278.2 501.3 1278.8 501.2 1279.8 501.0C1280.8 500.8 1283.7 500.2 1284.4 500.6C1285.1 501.0 1284.5 502.7 1283.8 503.1C1283.1 503.6 1281.0 503.5 1280.1 503.3C1279.2 503.1 1278.3 502.1 1278.3 501.7Z" fill="#c2ee8e" />
<path d="M1274.1 558.0C1273.5 558.2 1270.7 556.3 1269.4 555.0C1268.1 553.7 1266.3 551.2 1266.4 550.2C1266.5 549.2 1268.9 548.7 1270.0 549.3C1271.1 549.9 1272.2 552.3 1272.9 553.8C1273.6 555.2 1274.7 557.8 1274.1 558.0Z" fill="#c2ee8e" />
<ellipse cx="1269" cy="564" rx="1.9" ry="0.6" transform="rotate(-14 1269 564)" fill="#c2ee8e"/>
<ellipse cx="1301" cy="585" rx="2.0" ry="0.7" transform="rotate(32 1301 585)" fill="#c2ee8e"/>
<path d="M1297.4 567.1C1297.1 568.0 1294.7 569.7 1292.5 568.7C1290.3 567.7 1284.9 562.7 1284.2 561.2C1283.5 559.7 1286.7 559.2 1288.4 559.6C1290.1 560.0 1293.1 562.2 1294.6 563.5C1296.1 564.8 1297.8 566.2 1297.4 567.1Z" fill="#c2ee8e" />
<path d="M1331.5 508.9C1330.9 509.3 1328.1 507.8 1327.1 507.1C1326.1 506.4 1325.2 505.6 1325.5 504.7C1325.8 503.8 1327.7 501.9 1328.6 501.9C1329.5 501.9 1330.4 503.5 1330.9 504.7C1331.4 505.9 1332.1 508.5 1331.5 508.9Z" fill="#c2ee8e" />
<ellipse cx="1258" cy="666" rx="4.5" ry="0.8" transform="rotate(5 1258 666)" fill="#c2ee8e"/>
<ellipse cx="1313" cy="560" rx="2.3" ry="0.9" transform="rotate(-57 1313 560)" fill="#c2ee8e"/>
<ellipse cx="1255" cy="575" rx="4.5" ry="1.0" transform="rotate(60 1255 575)" fill="#c2ee8e"/>
<ellipse cx="1290" cy="603" rx="7.9" ry="1.7" transform="rotate(9 1290 603)" fill="#c2ee8e"/>
<path d="M1272.3 653.7C1272.2 654.3 1270.6 655.5 1269.6 655.4C1268.6 655.3 1266.8 653.9 1266.3 653.3C1265.8 652.7 1265.6 652.0 1266.3 651.7C1267.0 651.5 1269.3 651.5 1270.3 651.8C1271.3 652.1 1272.4 653.1 1272.3 653.7Z" fill="#c2ee8e" />
<path d="M1224.9 560.0C1224.5 560.5 1223.2 559.9 1222.7 559.1C1222.2 558.4 1222.0 556.4 1222.2 555.5C1222.4 554.6 1223.5 553.9 1224.0 554.0C1224.5 554.1 1224.9 555.3 1225.1 556.3C1225.2 557.3 1225.3 559.5 1224.9 560.0Z" fill="#c2ee8e" />
<ellipse cx="1232" cy="655" rx="4.7" ry="1.7" transform="rotate(-46 1232 655)" fill="#c2ee8e"/>
<path d="M1248.6 612.8C1247.7 612.6 1245.2 609.1 1244.6 607.2C1244.0 605.3 1244.3 602.8 1244.9 601.5C1245.5 600.2 1247.5 598.3 1248.3 599.4C1249.1 600.5 1250.0 606.1 1250.0 608.3C1250.0 610.5 1249.5 613.0 1248.6 612.8Z" fill="#c2ee8e" />
<path d="M1271.2 591.2C1270.7 591.1 1269.6 590.8 1269.5 590.2C1269.4 589.6 1270.0 587.8 1270.6 587.4C1271.2 587.0 1272.6 587.1 1272.9 587.6C1273.2 588.1 1272.8 590.0 1272.5 590.6C1272.2 591.2 1271.7 591.3 1271.2 591.2Z" fill="#c2ee8e" />
<path d="M1305.1 639.1C1305.0 638.8 1306.2 637.4 1306.7 636.9C1307.2 636.4 1308.0 635.9 1308.4 636.0C1308.8 636.1 1309.5 637.1 1309.3 637.6C1309.1 638.1 1308.0 638.5 1307.3 638.8C1306.6 639.0 1305.2 639.4 1305.1 639.1Z" fill="#c2ee8e" />
<ellipse cx="1317" cy="586" rx="4.0" ry="0.9" transform="rotate(38 1317 586)" fill="#c2ee8e"/>
<path d="M1289.8 573.3C1289.0 573.6 1286.9 573.2 1286.4 572.5C1285.9 571.8 1286.3 569.9 1286.8 569.3C1287.3 568.7 1288.7 568.5 1289.5 568.7C1290.3 568.9 1291.4 569.8 1291.4 570.6C1291.5 571.4 1290.6 573.0 1289.8 573.3Z" fill="#c2ee8e" />
<ellipse cx="1295" cy="672" rx="4.6" ry="0.8" transform="rotate(17 1295 672)" fill="#c2ee8e"/>
<ellipse cx="1284" cy="657" rx="6.6" ry="1.1" transform="rotate(-73 1284 657)" fill="#c2ee8e"/>
<path d="M1295.0 630.4C1294.9 629.8 1296.6 628.0 1297.5 627.5C1298.4 627.0 1300.0 626.8 1300.6 627.4C1301.2 628.0 1301.7 630.4 1301.3 631.0C1300.9 631.6 1299.2 631.1 1298.2 631.0C1297.2 630.9 1295.1 631.0 1295.0 630.4Z" fill="#c2ee8e" />
<ellipse cx="1326" cy="638" rx="5.4" ry="0.9" transform="rotate(-29 1326 638)" fill="#c2ee8e"/>
<ellipse cx="1336" cy="578" rx="4.1" ry="1.1" transform="rotate(-72 1336 578)" fill="#c2ee8e"/>
<ellipse cx="1329" cy="684" rx="3.6" ry="0.6" transform="rotate(9 1329 684)" fill="#c2ee8e"/>
<path d="M1557.1 691.4C1556.5 691.3 1555.3 690.0 1555.3 689.2C1555.3 688.4 1556.4 687.0 1557.0 686.6C1557.6 686.2 1558.7 686.2 1559.0 686.7C1559.3 687.2 1559.1 689.0 1558.8 689.8C1558.5 690.6 1557.7 691.5 1557.1 691.4Z" fill="#c2ee8e" />
<ellipse cx="1535" cy="686" rx="4.3" ry="0.8" transform="rotate(17 1535 686)" fill="#c2ee8e"/>
<path d="M1576.5 691.8C1575.9 691.6 1575.0 689.5 1575.1 688.7C1575.2 687.9 1576.8 687.2 1577.3 687.1C1577.8 687.0 1578.2 687.8 1578.4 688.2C1578.6 688.6 1578.8 689.0 1578.5 689.6C1578.2 690.2 1577.1 691.9 1576.5 691.8Z" fill="#c2ee8e" />
<path d="M1597.3 670.1C1597.1 670.5 1595.1 670.3 1594.4 669.9C1593.7 669.5 1593.1 668.4 1592.9 667.7C1592.8 667.0 1593.1 665.7 1593.5 665.6C1593.9 665.5 1594.9 666.5 1595.5 667.2C1596.1 668.0 1597.5 669.7 1597.3 670.1Z" fill="#c2ee8e" />
<ellipse cx="1530" cy="688" rx="3.1" ry="1.2" transform="rotate(2 1530 688)" fill="#c2ee8e"/>
<path d="M1594.1 717.4C1593.7 718.1 1589.6 718.1 1587.7 718.0C1585.8 717.9 1583.3 717.5 1582.7 716.6C1582.1 715.7 1583.0 713.3 1584.2 712.8C1585.4 712.3 1588.2 712.9 1589.9 713.7C1591.6 714.5 1594.5 716.7 1594.1 717.4Z" fill="#c2ee8e" />
<path d="M1570.1 671.1C1570.0 670.7 1570.7 668.9 1571.4 668.3C1572.2 667.7 1574.0 667.4 1574.6 667.4C1575.2 667.4 1575.2 668.0 1574.8 668.5C1574.4 669.0 1573.0 670.3 1572.2 670.7C1571.4 671.1 1570.2 671.5 1570.1 671.1Z" fill="#c2ee8e" />
<path d="M1582.1 726.1C1581.2 725.9 1579.1 725.0 1578.9 724.0C1578.7 723.0 1580.0 720.8 1580.9 719.9C1581.8 719.0 1583.9 717.9 1584.4 718.8C1584.9 719.6 1584.5 723.8 1584.1 725.0C1583.7 726.2 1583.0 726.3 1582.1 726.1Z" fill="#c2ee8e" />
<path d="M1562.0 700.1C1561.5 700.4 1558.5 699.5 1557.7 698.7C1557.0 698.0 1557.3 696.5 1557.5 695.6C1557.7 694.8 1558.5 693.3 1559.1 693.6C1559.7 693.9 1560.5 696.1 1561.0 697.2C1561.5 698.3 1562.5 699.9 1562.0 700.1Z" fill="#c2ee8e" />
<ellipse cx="1614" cy="696" rx="5.0" ry="0.9" transform="rotate(52 1614 696)" fill="#c2ee8e"/>
<ellipse cx="1572" cy="713" rx="2.5" ry="0.7" transform="rotate(34 1572 713)" fill="#c2ee8e"/>
<path d="M1588.7 704.9C1588.1 705.0 1588.0 704.2 1587.9 703.5C1587.9 702.8 1587.8 701.3 1588.4 700.8C1589.0 700.2 1590.8 699.8 1591.3 700.2C1591.8 700.6 1591.9 702.3 1591.5 703.1C1591.1 703.9 1589.3 704.8 1588.7 704.9Z" fill="#c2ee8e" />
<path d="M1553.0 698.0C1552.9 697.7 1553.7 696.2 1554.2 695.7C1554.7 695.2 1555.8 694.6 1556.1 694.7C1556.4 694.8 1556.4 695.8 1556.2 696.3C1556.0 696.8 1555.4 697.4 1554.9 697.7C1554.4 698.0 1553.1 698.3 1553.0 698.0Z" fill="#c2ee8e" />
<ellipse cx="1527" cy="684" rx="6.0" ry="1.4" transform="rotate(18 1527 684)" fill="#c2ee8e"/>
<ellipse cx="1595" cy="696" rx="7.4" ry="1.6" transform="rotate(-50 1595 696)" fill="#c2ee8e"/>
<path d="M1416.4 681.6C1416.2 680.9 1416.3 678.5 1416.8 677.3C1417.3 676.1 1418.8 674.3 1419.5 674.3C1420.2 674.3 1421.2 676.3 1421.0 677.5C1420.8 678.7 1419.1 680.6 1418.3 681.3C1417.5 682.0 1416.7 682.3 1416.4 681.6Z" fill="#c2ee8e" />
<path d="M1379.6 722.0C1379.6 722.6 1379.0 724.0 1378.1 724.0C1377.2 724.0 1374.8 722.5 1374.0 721.7C1373.2 720.9 1373.0 719.3 1373.6 719.0C1374.2 718.7 1376.8 719.6 1377.8 720.1C1378.8 720.6 1379.5 721.4 1379.6 722.0Z" fill="#c2ee8e" />
<path d="M1380.3 725.3C1379.9 724.6 1379.9 721.6 1380.3 720.7C1380.7 719.8 1381.7 720.2 1382.5 720.0C1383.3 719.8 1384.9 718.8 1384.9 719.6C1384.9 720.4 1383.2 723.8 1382.4 724.8C1381.6 725.8 1380.7 726.0 1380.3 725.3Z" fill="#c2ee8e" />
<path d="M1412.3 676.8C1412.0 676.7 1411.4 676.4 1411.4 676.0C1411.5 675.6 1412.2 674.6 1412.6 674.4C1413.0 674.2 1413.8 674.6 1413.9 675.0C1414.0 675.4 1413.4 676.3 1413.1 676.6C1412.8 676.9 1412.6 676.9 1412.3 676.8Z" fill="#c2ee8e" />
<path d="M1387.4 753.0C1387.0 753.5 1383.0 751.6 1381.2 750.7C1379.4 749.8 1377.2 748.4 1376.8 747.6C1376.4 746.8 1377.6 745.7 1378.8 745.7C1380.0 745.7 1382.3 746.4 1383.7 747.6C1385.1 748.8 1387.8 752.5 1387.4 753.0Z" fill="#c2ee8e" />
<ellipse cx="1372" cy="694" rx="8.0" ry="1.5" transform="rotate(71 1372 694)" fill="#c2ee8e"/>
<path d="M1419.8 650.2C1419.1 650.1 1417.1 647.7 1416.5 646.4C1415.9 645.1 1415.7 643.3 1416.0 642.5C1416.3 641.7 1417.4 640.8 1418.2 641.5C1419.0 642.2 1420.4 645.5 1420.7 647.0C1421.0 648.5 1420.5 650.3 1419.8 650.2Z" fill="#c2ee8e" />
<ellipse cx="1391" cy="679" rx="4.4" ry="1.6" transform="rotate(74 1391 679)" fill="#c2ee8e"/>
<ellipse cx="1325" cy="510" rx="4.5" ry="0.8" transform="rotate(33 1325 510)" fill="#c2ee8e"/>
<path d="M1320.2 533.3C1319.7 533.2 1319.8 530.4 1320.0 529.3C1320.2 528.2 1320.5 527.2 1321.1 526.9C1321.7 526.6 1323.4 526.8 1323.8 527.3C1324.2 527.8 1323.8 529.0 1323.2 530.0C1322.6 531.0 1320.7 533.4 1320.2 533.3Z" fill="#c2ee8e" />
<path d="M1327.4 534.7C1327.6 535.5 1327.8 537.2 1327.0 537.6C1326.2 538.0 1323.3 537.6 1322.7 536.8C1322.1 536.0 1322.9 533.7 1323.5 533.0C1324.1 532.3 1325.4 532.3 1326.1 532.6C1326.8 532.9 1327.2 533.9 1327.4 534.7Z" fill="#c2ee8e" />
<path d="M1321.5 534.9C1321.0 535.0 1319.8 534.2 1319.5 533.7C1319.2 533.2 1319.6 532.6 1319.8 532.2C1320.0 531.8 1320.2 531.4 1320.6 531.5C1321.0 531.6 1322.0 532.2 1322.2 532.8C1322.4 533.4 1322.0 534.8 1321.5 534.9Z" fill="#c2ee8e" />
<ellipse cx="1344" cy="476" rx="3.0" ry="0.8" transform="rotate(-27 1344 476)" fill="#c2ee8e"/>
<path d="M1317.4 532.9C1316.9 532.8 1316.3 531.8 1316.4 531.2C1316.5 530.6 1317.3 529.6 1317.8 529.3C1318.3 529.0 1318.9 528.9 1319.2 529.3C1319.5 529.7 1319.8 531.0 1319.5 531.6C1319.2 532.2 1317.9 533.0 1317.4 532.9Z" fill="#c2ee8e" />
<ellipse cx="1304" cy="492" rx="2.8" ry="1.0" transform="rotate(-71 1304 492)" fill="#c2ee8e"/>
<path d="M1342.2 554.0C1341.9 553.5 1343.7 551.8 1344.6 551.2C1345.5 550.6 1346.8 550.4 1347.6 550.5C1348.3 550.6 1349.3 551.4 1349.1 552.0C1348.9 552.6 1347.4 553.7 1346.3 554.0C1345.2 554.3 1342.5 554.5 1342.2 554.0Z" fill="#c2ee8e" />
<ellipse cx="1003" cy="390" rx="4.8" ry="1.4" transform="rotate(-45 1003 390)" fill="#c2ee8e"/>
<ellipse cx="1010" cy="382" rx="3.1" ry="1.4" transform="rotate(-62 1010 382)" fill="#c2ee8e"/>
<ellipse cx="1020" cy="378" rx="3.2" ry="1.4" transform="rotate(-66 1020 378)" fill="#c2ee8e"/>
<ellipse cx="1030" cy="400" rx="4.1" ry="1.4" transform="rotate(-55 1030 400)" fill="#c2ee8e"/>
<ellipse cx="1035" cy="385" rx="5.2" ry="1.4" transform="rotate(-67 1035 385)" fill="#c2ee8e"/>
<ellipse cx="1449" cy="466" rx="5.5" ry="1.1" transform="rotate(-22 1449 466)" fill="#c2ee8e"/>
<ellipse cx="1415" cy="529" rx="4.4" ry="0.8" transform="rotate(18 1415 529)" fill="#c2ee8e"/>
<ellipse cx="1078" cy="668" rx="4.6" ry="0.9" transform="rotate(-4 1078 668)" fill="#c2ee8e"/>
<ellipse cx="1493" cy="566" rx="6.8" ry="1.4" transform="rotate(-68 1493 566)" fill="#c2ee8e"/>
<ellipse cx="1208" cy="556" rx="5.4" ry="1.3" transform="rotate(58 1208 556)" fill="#c2ee8e"/>
<ellipse cx="1077" cy="647" rx="3.6" ry="1.3" transform="rotate(51 1077 647)" fill="#c2ee8e"/>
<ellipse cx="1096" cy="800" rx="4.5" ry="1.0" transform="rotate(52 1096 800)" fill="#c2ee8e"/>
<ellipse cx="1217" cy="608" rx="5.0" ry="0.9" transform="rotate(70 1217 608)" fill="#c2ee8e"/>
<ellipse cx="1403" cy="542" rx="4.3" ry="1.4" transform="rotate(18 1403 542)" fill="#c2ee8e"/>
<ellipse cx="1385" cy="510" rx="4.4" ry="1.1" transform="rotate(18 1385 510)" fill="#c2ee8e"/>
<ellipse cx="1413" cy="680" rx="6.5" ry="1.2" transform="rotate(22 1413 680)" fill="#c2ee8e"/>
<ellipse cx="1234" cy="707" rx="2.3" ry="0.6" transform="rotate(10 1234 707)" fill="#c2ee8e"/>
<ellipse cx="1301" cy="617" rx="5.5" ry="1.3" transform="rotate(55 1301 617)" fill="#c2ee8e"/>
<ellipse cx="1230" cy="517" rx="3.0" ry="0.6" transform="rotate(-8 1230 517)" fill="#c2ee8e"/>
<ellipse cx="1631" cy="547" rx="4.1" ry="1.3" transform="rotate(36 1631 547)" fill="#c2ee8e"/>
<ellipse cx="1565" cy="491" rx="4.1" ry="1.0" transform="rotate(-77 1565 491)" fill="#c2ee8e"/>
<ellipse cx="1582" cy="538" rx="2.1" ry="0.6" transform="rotate(79 1582 538)" fill="#c2ee8e"/>
<ellipse cx="1427" cy="641" rx="4.0" ry="0.8" transform="rotate(-12 1427 641)" fill="#c2ee8e"/>
<ellipse cx="1097" cy="704" rx="5.8" ry="1.0" transform="rotate(53 1097 704)" fill="#c2ee8e"/>
<ellipse cx="1295" cy="622" rx="6.8" ry="1.3" transform="rotate(-51 1295 622)" fill="#c2ee8e"/>
<ellipse cx="1397" cy="631" rx="3.6" ry="0.6" transform="rotate(10 1397 631)" fill="#c2ee8e"/>
<ellipse cx="928" cy="697" rx="5.7" ry="1.2" transform="rotate(47 928 697)" fill="#c2ee8e"/>
<ellipse cx="1474" cy="453" rx="4.6" ry="0.8" transform="rotate(77 1474 453)" fill="#c2ee8e"/>
<ellipse cx="994" cy="677" rx="1.7" ry="0.6" transform="rotate(-44 994 677)" fill="#c2ee8e"/>
<ellipse cx="1342" cy="566" rx="4.9" ry="1.1" transform="rotate(54 1342 566)" fill="#c2ee8e"/>
<ellipse cx="1504" cy="476" rx="6.3" ry="1.4" transform="rotate(8 1504 476)" fill="#c2ee8e"/>
<ellipse cx="1290" cy="553" rx="3.7" ry="1.0" transform="rotate(56 1290 553)" fill="#c2ee8e"/>
<ellipse cx="1187" cy="660" rx="3.3" ry="0.7" transform="rotate(-35 1187 660)" fill="#c2ee8e"/>
<ellipse cx="1323" cy="525" rx="6.1" ry="1.2" transform="rotate(-74 1323 525)" fill="#c2ee8e"/>
<ellipse cx="1405" cy="503" rx="5.3" ry="1.4" transform="rotate(8 1405 503)" fill="#c2ee8e"/>
<ellipse cx="1121" cy="772" rx="2.9" ry="0.7" transform="rotate(-53 1121 772)" fill="#c2ee8e"/>
<ellipse cx="1482" cy="621" rx="2.9" ry="0.5" transform="rotate(-15 1482 621)" fill="#c2ee8e"/>
<ellipse cx="1552" cy="541" rx="5.0" ry="1.4" transform="rotate(33 1552 541)" fill="#c2ee8e"/>
<ellipse cx="1444" cy="461" rx="6.2" ry="1.1" transform="rotate(71 1444 461)" fill="#c2ee8e"/>
<ellipse cx="1230" cy="580" rx="2.4" ry="0.5" transform="rotate(-54 1230 580)" fill="#c2ee8e"/>
<ellipse cx="1397" cy="515" rx="3.3" ry="0.6" transform="rotate(-55 1397 515)" fill="#c2ee8e"/>
<ellipse cx="1098" cy="595" rx="7.4" ry="1.3" transform="rotate(-1 1098 595)" fill="#c2ee8e"/>
<ellipse cx="1543" cy="705" rx="4.5" ry="1.0" transform="rotate(-41 1543 705)" fill="#c2ee8e"/>
<ellipse cx="1176" cy="697" rx="2.2" ry="0.7" transform="rotate(23 1176 697)" fill="#c2ee8e"/>
<ellipse cx="1265" cy="619" rx="3.3" ry="1.0" transform="rotate(-32 1265 619)" fill="#c2ee8e"/>
<ellipse cx="1556" cy="524" rx="3.2" ry="0.9" transform="rotate(-34 1556 524)" fill="#c2ee8e"/>
<ellipse cx="1449" cy="495" rx="1.6" ry="0.6" transform="rotate(-46 1449 495)" fill="#c2ee8e"/>
<ellipse cx="1184" cy="553" rx="4.4" ry="1.0" transform="rotate(-47 1184 553)" fill="#c2ee8e"/>
<ellipse cx="1018" cy="725" rx="5.1" ry="1.0" transform="rotate(17 1018 725)" fill="#c2ee8e"/>
<ellipse cx="1511" cy="563" rx="1.7" ry="0.6" transform="rotate(-14 1511 563)" fill="#c2ee8e"/>
<ellipse cx="1080" cy="658" rx="3.4" ry="1.3" transform="rotate(34 1080 658)" fill="#c2ee8e"/>
<ellipse cx="921" cy="677" rx="7.3" ry="1.3" transform="rotate(37 921 677)" fill="#c2ee8e"/>
<ellipse cx="1522" cy="518" rx="2.1" ry="0.6" transform="rotate(-11 1522 518)" fill="#c2ee8e"/>
<ellipse cx="1413" cy="512" rx="3.7" ry="0.6" transform="rotate(-59 1413 512)" fill="#c2ee8e"/>
<ellipse cx="1330" cy="605" rx="1.5" ry="0.6" transform="rotate(34 1330 605)" fill="#c2ee8e"/>
<ellipse cx="1118" cy="582" rx="3.3" ry="0.6" transform="rotate(10 1118 582)" fill="#c2ee8e"/>
<ellipse cx="1357" cy="558" rx="4.3" ry="0.9" transform="rotate(52 1357 558)" fill="#c2ee8e"/>
<ellipse cx="1064" cy="635" rx="4.4" ry="1.0" transform="rotate(-0 1064 635)" fill="#c2ee8e"/>
<ellipse cx="1263" cy="691" rx="1.9" ry="0.5" transform="rotate(58 1263 691)" fill="#c2ee8e"/>
<ellipse cx="1244" cy="569" rx="1.8" ry="0.6" transform="rotate(-49 1244 569)" fill="#c2ee8e"/>
<ellipse cx="1519" cy="474" rx="3.0" ry="0.9" transform="rotate(9 1519 474)" fill="#c2ee8e"/>
<ellipse cx="948" cy="707" rx="2.1" ry="0.7" transform="rotate(69 948 707)" fill="#c2ee8e"/>
<ellipse cx="1056" cy="673" rx="2.4" ry="0.9" transform="rotate(74 1056 673)" fill="#c2ee8e"/>
<ellipse cx="1421" cy="532" rx="5.6" ry="1.0" transform="rotate(-6 1421 532)" fill="#c2ee8e"/>
<ellipse cx="1213" cy="592" rx="5.7" ry="1.2" transform="rotate(-53 1213 592)" fill="#c2ee8e"/>
<ellipse cx="1559" cy="664" rx="2.8" ry="0.8" transform="rotate(-27 1559 664)" fill="#c2ee8e"/>
<ellipse cx="1313" cy="650" rx="2.7" ry="0.7" transform="rotate(-68 1313 650)" fill="#c2ee8e"/>
<ellipse cx="1194" cy="756" rx="4.7" ry="1.1" transform="rotate(-72 1194 756)" fill="#c2ee8e"/>
<ellipse cx="1094" cy="653" rx="4.7" ry="1.1" transform="rotate(-74 1094 653)" fill="#c2ee8e"/>
<ellipse cx="1307" cy="594" rx="3.3" ry="0.9" transform="rotate(-50 1307 594)" fill="#c2ee8e"/>
<ellipse cx="1188" cy="655" rx="3.5" ry="1.4" transform="rotate(-75 1188 655)" fill="#c2ee8e"/>
<ellipse cx="1173" cy="660" rx="5.8" ry="1.3" transform="rotate(-12 1173 660)" fill="#c2ee8e"/>
<ellipse cx="1606" cy="508" rx="3.0" ry="0.7" transform="rotate(40 1606 508)" fill="#c2ee8e"/>
<ellipse cx="980" cy="700" rx="3.0" ry="0.9" transform="rotate(-19 980 700)" fill="#c2ee8e"/>
<ellipse cx="1493" cy="604" rx="3.1" ry="0.6" transform="rotate(-13 1493 604)" fill="#c2ee8e"/>
<ellipse cx="1225" cy="557" rx="4.4" ry="1.0" transform="rotate(-40 1225 557)" fill="#c2ee8e"/>
<ellipse cx="1453" cy="498" rx="2.1" ry="0.8" transform="rotate(-47 1453 498)" fill="#c2ee8e"/>
<ellipse cx="1390" cy="662" rx="3.7" ry="1.3" transform="rotate(-11 1390 662)" fill="#c2ee8e"/>
<ellipse cx="1557" cy="518" rx="2.2" ry="0.5" transform="rotate(10 1557 518)" fill="#c2ee8e"/>
<ellipse cx="1383" cy="553" rx="6.6" ry="1.4" transform="rotate(-69 1383 553)" fill="#c2ee8e"/>
<ellipse cx="1428" cy="473" rx="3.6" ry="1.1" transform="rotate(-53 1428 473)" fill="#c2ee8e"/>
<ellipse cx="1306" cy="678" rx="3.9" ry="0.8" transform="rotate(-2 1306 678)" fill="#c2ee8e"/>
<ellipse cx="1321" cy="675" rx="2.5" ry="0.9" transform="rotate(-31 1321 675)" fill="#c2ee8e"/>
<ellipse cx="1173" cy="665" rx="2.1" ry="0.5" transform="rotate(0 1173 665)" fill="#c2ee8e"/>
<ellipse cx="1322" cy="636" rx="2.3" ry="0.8" transform="rotate(-61 1322 636)" fill="#c2ee8e"/>
<ellipse cx="1137" cy="566" rx="4.5" ry="0.8" transform="rotate(-80 1137 566)" fill="#c2ee8e"/>
<ellipse cx="994" cy="774" rx="2.9" ry="0.8" transform="rotate(23 994 774)" fill="#c2ee8e"/>
<ellipse cx="1434" cy="647" rx="3.3" ry="1.1" transform="rotate(26 1434 647)" fill="#c2ee8e"/>
<ellipse cx="1392" cy="550" rx="2.1" ry="0.8" transform="rotate(-74 1392 550)" fill="#c2ee8e"/>
<ellipse cx="1129" cy="709" rx="6.0" ry="1.4" transform="rotate(-10 1129 709)" fill="#c2ee8e"/>
<ellipse cx="1367" cy="551" rx="5.4" ry="1.3" transform="rotate(-66 1367 551)" fill="#c2ee8e"/>
<ellipse cx="1172" cy="732" rx="4.4" ry="1.3" transform="rotate(-79 1172 732)" fill="#c2ee8e"/>
<ellipse cx="1327" cy="674" rx="6.2" ry="1.3" transform="rotate(45 1327 674)" fill="#c2ee8e"/>
<ellipse cx="1423" cy="637" rx="4.5" ry="0.8" transform="rotate(54 1423 637)" fill="#c2ee8e"/>
<ellipse cx="1211" cy="627" rx="4.5" ry="1.0" transform="rotate(22 1211 627)" fill="#c2ee8e"/>
<ellipse cx="993" cy="759" rx="5.9" ry="1.3" transform="rotate(-22 993 759)" fill="#c2ee8e"/>
<ellipse cx="1255" cy="680" rx="3.0" ry="0.8" transform="rotate(-3 1255 680)" fill="#c2ee8e"/>
<ellipse cx="1464" cy="640" rx="7.0" ry="1.2" transform="rotate(-10 1464 640)" fill="#c2ee8e"/>
<ellipse cx="1164" cy="620" rx="2.9" ry="1.1" transform="rotate(29 1164 620)" fill="#c2ee8e"/>
<ellipse cx="1523" cy="554" rx="3.3" ry="0.8" transform="rotate(-43 1523 554)" fill="#c2ee8e"/>
<ellipse cx="1443" cy="486" rx="2.8" ry="0.6" transform="rotate(73 1443 486)" fill="#c2ee8e"/>
<ellipse cx="1558" cy="686" rx="4.8" ry="1.3" transform="rotate(51 1558 686)" fill="#c2ee8e"/>
<ellipse cx="1219" cy="585" rx="4.3" ry="1.1" transform="rotate(52 1219 585)" fill="#c2ee8e"/>
<ellipse cx="1511" cy="660" rx="6.0" ry="1.1" transform="rotate(-78 1511 660)" fill="#c2ee8e"/>
<ellipse cx="1327" cy="621" rx="3.6" ry="1.1" transform="rotate(-22 1327 621)" fill="#c2ee8e"/>
<ellipse cx="1109" cy="654" rx="7.7" ry="1.3" transform="rotate(15 1109 654)" fill="#c2ee8e"/>
<ellipse cx="1446" cy="666" rx="2.1" ry="0.8" transform="rotate(-60 1446 666)" fill="#c2ee8e"/>
<ellipse cx="1456" cy="570" rx="3.7" ry="0.7" transform="rotate(-50 1456 570)" fill="#c2ee8e"/>
<ellipse cx="1528" cy="581" rx="3.5" ry="0.8" transform="rotate(63 1528 581)" fill="#c2ee8e"/>
<ellipse cx="1560" cy="598" rx="6.1" ry="1.4" transform="rotate(53 1560 598)" fill="#c2ee8e"/>
<ellipse cx="1361" cy="496" rx="4.7" ry="0.8" transform="rotate(33 1361 496)" fill="#c2ee8e"/>
<ellipse cx="1387" cy="616" rx="4.3" ry="0.8" transform="rotate(-40 1387 616)" fill="#c2ee8e"/>
<ellipse cx="1119" cy="700" rx="4.7" ry="0.8" transform="rotate(42 1119 700)" fill="#c2ee8e"/>
<ellipse cx="1024" cy="736" rx="3.4" ry="1.0" transform="rotate(64 1024 736)" fill="#c2ee8e"/>
<ellipse cx="945" cy="657" rx="7.4" ry="1.3" transform="rotate(-14 945 657)" fill="#c2ee8e"/>
<ellipse cx="1047" cy="648" rx="2.4" ry="0.5" transform="rotate(78 1047 648)" fill="#c2ee8e"/>
<ellipse cx="956" cy="720" rx="1.8" ry="0.5" transform="rotate(-23 956 720)" fill="#c2ee8e"/>
<ellipse cx="1364" cy="701" rx="3.5" ry="0.9" transform="rotate(-64 1364 701)" fill="#c2ee8e"/>
<ellipse cx="1261" cy="644" rx="3.3" ry="0.7" transform="rotate(77 1261 644)" fill="#c2ee8e"/>
<ellipse cx="1030" cy="655" rx="5.9" ry="1.0" transform="rotate(2 1030 655)" fill="#c2ee8e"/>
<ellipse cx="1170" cy="658" rx="3.2" ry="0.9" transform="rotate(-59 1170 658)" fill="#c2ee8e"/>
<ellipse cx="1481" cy="594" rx="3.1" ry="0.8" transform="rotate(-75 1481 594)" fill="#c2ee8e"/>
<ellipse cx="1083" cy="781" rx="4.8" ry="0.8" transform="rotate(42 1083 781)" fill="#c2ee8e"/>
<ellipse cx="952" cy="727" rx="1.9" ry="0.7" transform="rotate(30 952 727)" fill="#c2ee8e"/>
<ellipse cx="1399" cy="596" rx="3.7" ry="0.9" transform="rotate(-45 1399 596)" fill="#c2ee8e"/>
<ellipse cx="1270" cy="570" rx="4.3" ry="0.8" transform="rotate(-51 1270 570)" fill="#c2ee8e"/>
<ellipse cx="1029" cy="633" rx="3.5" ry="0.7" transform="rotate(-37 1029 633)" fill="#c2ee8e"/>
<ellipse cx="1248" cy="541" rx="4.2" ry="1.4" transform="rotate(10 1248 541)" fill="#c2ee8e"/>
<ellipse cx="1428" cy="497" rx="2.6" ry="0.8" transform="rotate(-4 1428 497)" fill="#c2ee8e"/>
<ellipse cx="1279" cy="663" rx="7.7" ry="1.4" transform="rotate(-49 1279 663)" fill="#c2ee8e"/>
<ellipse cx="1455" cy="448" rx="6.3" ry="1.1" transform="rotate(-79 1455 448)" fill="#c2ee8e"/>
<ellipse cx="1144" cy="754" rx="3.0" ry="1.0" transform="rotate(8 1144 754)" fill="#c2ee8e"/>
<ellipse cx="1521" cy="629" rx="5.0" ry="1.0" transform="rotate(60 1521 629)" fill="#c2ee8e"/>
<ellipse cx="1538" cy="614" rx="1.9" ry="0.7" transform="rotate(75 1538 614)" fill="#c2ee8e"/>
<ellipse cx="1227" cy="569" rx="7.3" ry="1.3" transform="rotate(15 1227 569)" fill="#c2ee8e"/>
<ellipse cx="1232" cy="613" rx="2.0" ry="0.6" transform="rotate(4 1232 613)" fill="#c2ee8e"/>
<ellipse cx="1025" cy="776" rx="4.6" ry="1.0" transform="rotate(63 1025 776)" fill="#c2ee8e"/>
<ellipse cx="1513" cy="475" rx="5.4" ry="0.9" transform="rotate(-71 1513 475)" fill="#c2ee8e"/>
<ellipse cx="1119" cy="631" rx="6.7" ry="1.2" transform="rotate(-17 1119 631)" fill="#c2ee8e"/>
<ellipse cx="1599" cy="537" rx="1.3" ry="0.5" transform="rotate(40 1599 537)" fill="#c2ee8e"/>
<ellipse cx="1572" cy="621" rx="4.5" ry="1.0" transform="rotate(17 1572 621)" fill="#c2ee8e"/>
<ellipse cx="1454" cy="560" rx="3.5" ry="0.8" transform="rotate(45 1454 560)" fill="#c2ee8e"/>
<ellipse cx="1394" cy="622" rx="5.9" ry="1.1" transform="rotate(-43 1394 622)" fill="#c2ee8e"/>
<ellipse cx="1196" cy="553" rx="6.5" ry="1.2" transform="rotate(-73 1196 553)" fill="#c2ee8e"/>
<ellipse cx="1295" cy="637" rx="2.6" ry="0.6" transform="rotate(58 1295 637)" fill="#c2ee8e"/>
<ellipse cx="953" cy="681" rx="3.3" ry="1.1" transform="rotate(27 953 681)" fill="#c2ee8e"/>
<ellipse cx="1247" cy="559" rx="2.7" ry="0.6" transform="rotate(14 1247 559)" fill="#c2ee8e"/>
<ellipse cx="1088" cy="768" rx="3.3" ry="0.9" transform="rotate(-79 1088 768)" fill="#c2ee8e"/>
<ellipse cx="1175" cy="595" rx="3.0" ry="0.5" transform="rotate(-70 1175 595)" fill="#c2ee8e"/>
<ellipse cx="1263" cy="606" rx="3.6" ry="1.2" transform="rotate(57 1263 606)" fill="#c2ee8e"/>
<ellipse cx="1412" cy="654" rx="2.4" ry="0.8" transform="rotate(-68 1412 654)" fill="#c2ee8e"/>
<ellipse cx="1553" cy="649" rx="3.1" ry="0.8" transform="rotate(55 1553 649)" fill="#c2ee8e"/>
<ellipse cx="947" cy="655" rx="5.3" ry="1.0" transform="rotate(-69 947 655)" fill="#c2ee8e"/>
<ellipse cx="1154" cy="657" rx="5.7" ry="1.0" transform="rotate(40 1154 657)" fill="#c2ee8e"/>
<ellipse cx="1010" cy="800" rx="2.6" ry="0.5" transform="rotate(-13 1010 800)" fill="#c2ee8e"/>
<ellipse cx="1113" cy="574" rx="6.1" ry="1.4" transform="rotate(37 1113 574)" fill="#c2ee8e"/>
<ellipse cx="1382" cy="494" rx="2.8" ry="0.7" transform="rotate(48 1382 494)" fill="#c2ee8e"/>
<ellipse cx="1411" cy="496" rx="2.9" ry="1.0" transform="rotate(46 1411 496)" fill="#c2ee8e"/>
<ellipse cx="1412" cy="518" rx="4.6" ry="0.9" transform="rotate(25 1412 518)" fill="#c2ee8e"/>
<ellipse cx="1384" cy="635" rx="5.4" ry="1.0" transform="rotate(67 1384 635)" fill="#c2ee8e"/>
<ellipse cx="1379" cy="603" rx="2.7" ry="1.0" transform="rotate(45 1379 603)" fill="#c2ee8e"/>
<ellipse cx="1306" cy="524" rx="3.4" ry="1.0" transform="rotate(-47 1306 524)" fill="#c2ee8e"/>
<ellipse cx="1113" cy="739" rx="4.7" ry="0.9" transform="rotate(38 1113 739)" fill="#c2ee8e"/>
<ellipse cx="1402" cy="514" rx="2.9" ry="0.8" transform="rotate(-34 1402 514)" fill="#c2ee8e"/>
<ellipse cx="1554" cy="661" rx="4.5" ry="1.1" transform="rotate(67 1554 661)" fill="#c2ee8e"/>
<ellipse cx="1128" cy="673" rx="3.4" ry="1.2" transform="rotate(17 1128 673)" fill="#c2ee8e"/>
<ellipse cx="1554" cy="701" rx="5.1" ry="1.4" transform="rotate(58 1554 701)" fill="#c2ee8e"/>
<ellipse cx="1333" cy="600" rx="3.4" ry="0.8" transform="rotate(39 1333 600)" fill="#c2ee8e"/>
<ellipse cx="1397" cy="574" rx="2.9" ry="0.7" transform="rotate(60 1397 574)" fill="#c2ee8e"/>
<ellipse cx="1429" cy="578" rx="3.5" ry="0.7" transform="rotate(21 1429 578)" fill="#c2ee8e"/>
<ellipse cx="927" cy="668" rx="6.2" ry="1.1" transform="rotate(-20 927 668)" fill="#c2ee8e"/>
<ellipse cx="1080" cy="673" rx="3.5" ry="0.6" transform="rotate(-1 1080 673)" fill="#c2ee8e"/>
<ellipse cx="1482" cy="497" rx="3.9" ry="0.9" transform="rotate(60 1482 497)" fill="#c2ee8e"/>
<ellipse cx="1416" cy="629" rx="3.1" ry="0.7" transform="rotate(-61 1416 629)" fill="#c2ee8e"/>
<ellipse cx="1531" cy="584" rx="4.6" ry="0.8" transform="rotate(-2 1531 584)" fill="#c2ee8e"/>
<ellipse cx="1340" cy="659" rx="3.2" ry="1.2" transform="rotate(-47 1340 659)" fill="#c2ee8e"/>
<ellipse cx="1565" cy="645" rx="3.4" ry="1.0" transform="rotate(72 1565 645)" fill="#c2ee8e"/>
<ellipse cx="1525" cy="472" rx="4.1" ry="1.0" transform="rotate(44 1525 472)" fill="#c2ee8e"/>
<ellipse cx="1433" cy="637" rx="5.7" ry="1.0" transform="rotate(29 1433 637)" fill="#c2ee8e"/>
<ellipse cx="927" cy="665" rx="4.8" ry="0.9" transform="rotate(-25 927 665)" fill="#c2ee8e"/>
<ellipse cx="1392" cy="491" rx="3.9" ry="1.3" transform="rotate(-49 1392 491)" fill="#c2ee8e"/>
<ellipse cx="1404" cy="564" rx="4.3" ry="0.9" transform="rotate(-23 1404 564)" fill="#c2ee8e"/>
<ellipse cx="1139" cy="749" rx="2.7" ry="0.7" transform="rotate(-66 1139 749)" fill="#c2ee8e"/>
<ellipse cx="1023" cy="627" rx="4.7" ry="1.3" transform="rotate(-16 1023 627)" fill="#c2ee8e"/>
<ellipse cx="1142" cy="733" rx="5.1" ry="1.0" transform="rotate(67 1142 733)" fill="#c2ee8e"/>
<ellipse cx="1151" cy="721" rx="5.0" ry="0.9" transform="rotate(-17 1151 721)" fill="#c2ee8e"/>
<ellipse cx="1386" cy="676" rx="4.5" ry="1.4" transform="rotate(16 1386 676)" fill="#c2ee8e"/>
<ellipse cx="1598" cy="579" rx="6.5" ry="1.4" transform="rotate(-54 1598 579)" fill="#c2ee8e"/>
<ellipse cx="1600" cy="545" rx="4.0" ry="0.7" transform="rotate(4 1600 545)" fill="#c2ee8e"/>
<ellipse cx="1525" cy="482" rx="1.8" ry="0.6" transform="rotate(-73 1525 482)" fill="#c2ee8e"/>
<ellipse cx="1005" cy="666" rx="3.0" ry="0.6" transform="rotate(-60 1005 666)" fill="#c2ee8e"/>
<ellipse cx="1346" cy="639" rx="3.3" ry="0.6" transform="rotate(70 1346 639)" fill="#c2ee8e"/>
<ellipse cx="963" cy="721" rx="4.7" ry="0.9" transform="rotate(-14 963 721)" fill="#c2ee8e"/>
<ellipse cx="1246" cy="610" rx="6.5" ry="1.2" transform="rotate(-39 1246 610)" fill="#c2ee8e"/>
<ellipse cx="1040" cy="647" rx="4.1" ry="0.8" transform="rotate(57 1040 647)" fill="#c2ee8e"/>
<ellipse cx="1241" cy="620" rx="4.8" ry="1.2" transform="rotate(-67 1241 620)" fill="#c2ee8e"/>
<ellipse cx="983" cy="724" rx="2.2" ry="0.9" transform="rotate(71 983 724)" fill="#c2ee8e"/>
<ellipse cx="1404" cy="601" rx="6.8" ry="1.4" transform="rotate(-61 1404 601)" fill="#c2ee8e"/>
<ellipse cx="1166" cy="743" rx="3.1" ry="0.8" transform="rotate(-9 1166 743)" fill="#c2ee8e"/>
<ellipse cx="1571" cy="688" rx="2.3" ry="0.5" transform="rotate(54 1571 688)" fill="#c2ee8e"/>
<ellipse cx="1205" cy="640" rx="1.8" ry="0.7" transform="rotate(-43 1205 640)" fill="#c2ee8e"/>
<ellipse cx="955" cy="698" rx="2.6" ry="0.7" transform="rotate(71 955 698)" fill="#c2ee8e"/>
<ellipse cx="1227" cy="630" rx="7.2" ry="1.3" transform="rotate(-45 1227 630)" fill="#c2ee8e"/>
<ellipse cx="1258" cy="507" rx="2.9" ry="0.7" transform="rotate(30 1258 507)" fill="#c2ee8e"/>
<ellipse cx="1253" cy="564" rx="3.3" ry="0.9" transform="rotate(-7 1253 564)" fill="#c2ee8e"/>
<ellipse cx="1176" cy="686" rx="1.5" ry="0.5" transform="rotate(65 1176 686)" fill="#c2ee8e"/>
<ellipse cx="1217" cy="573" rx="5.4" ry="1.1" transform="rotate(13 1217 573)" fill="#c2ee8e"/>
<ellipse cx="1195" cy="570" rx="2.3" ry="0.7" transform="rotate(24 1195 570)" fill="#c2ee8e"/>
<ellipse cx="1164" cy="566" rx="1.9" ry="0.6" transform="rotate(-12 1164 566)" fill="#c2ee8e"/>
<ellipse cx="954" cy="670" rx="4.8" ry="1.3" transform="rotate(-16 954 670)" fill="#c2ee8e"/>
<ellipse cx="1045" cy="722" rx="2.1" ry="0.6" transform="rotate(-38 1045 722)" fill="#c2ee8e"/>
<ellipse cx="1239" cy="645" rx="3.5" ry="0.6" transform="rotate(46 1239 645)" fill="#c2ee8e"/>
<ellipse cx="1584" cy="499" rx="2.0" ry="0.8" transform="rotate(-54 1584 499)" fill="#c2ee8e"/>
<ellipse cx="1142" cy="690" rx="4.4" ry="1.3" transform="rotate(30 1142 690)" fill="#c2ee8e"/>
<ellipse cx="1090" cy="693" rx="3.8" ry="0.8" transform="rotate(-58 1090 693)" fill="#c2ee8e"/>
<ellipse cx="1014" cy="632" rx="4.7" ry="1.2" transform="rotate(1 1014 632)" fill="#c2ee8e"/>
<ellipse cx="1324" cy="674" rx="7.1" ry="1.4" transform="rotate(-24 1324 674)" fill="#c2ee8e"/>
<ellipse cx="1114" cy="577" rx="5.2" ry="1.0" transform="rotate(-27 1114 577)" fill="#c2ee8e"/>
<ellipse cx="1483" cy="552" rx="5.0" ry="0.9" transform="rotate(71 1483 552)" fill="#c2ee8e"/>
<ellipse cx="1114" cy="661" rx="1.3" ry="0.5" transform="rotate(24 1114 661)" fill="#c2ee8e"/>
<ellipse cx="1378" cy="657" rx="5.3" ry="1.0" transform="rotate(22 1378 657)" fill="#c2ee8e"/>
<ellipse cx="1215" cy="532" rx="4.5" ry="1.4" transform="rotate(70 1215 532)" fill="#c2ee8e"/>
<ellipse cx="1129" cy="751" rx="5.7" ry="1.2" transform="rotate(49 1129 751)" fill="#c2ee8e"/>
<ellipse cx="1186" cy="756" rx="3.5" ry="0.8" transform="rotate(-68 1186 756)" fill="#c2ee8e"/>
<ellipse cx="1107" cy="760" rx="5.6" ry="1.3" transform="rotate(47 1107 760)" fill="#c2ee8e"/>
<path d="M858 712C858.8 709.8 863.7 706.7 866 706C868.3 705.3 871.7 706.3 872 708C872.3 709.7 869.8 714.2 868 716C866.2 717.8 862.7 719.7 861 719C859.3 718.3 857.2 714.2 858 712Z" fill="#c2ee8e" />
<path d="M868 722C868.7 720.0 874.0 716.0 876 716C878.0 716.0 880.7 720.0 880 722C879.3 724.0 874.0 728.0 872 728C870.0 728.0 867.3 724.0 868 722Z" fill="#c2ee8e" />
<g fill="#fb1414" stroke="#fff" stroke-width="1.2">
<path d="M1273.9 304.1L1281.8000000000002 312.0L1273.9 319.9L1266.0 312.0Z"/>
<path d="M1273.9 300.1L1281.8000000000002 308.0L1273.9 315.9L1266.0 308.0Z"/>
<path d="M1270.5 318.3L1278.4 326.2L1270.5 334.09999999999997L1262.6 326.2Z"/>
<path d="M1270.5 314.3L1278.4 322.2L1270.5 330.09999999999997L1262.6 322.2Z"/>
<path d="M1269.1 323.8L1277.0 331.7L1269.1 339.59999999999997L1261.1999999999998 331.7Z"/>
<path d="M1277.2 317.70000000000005L1285.1000000000001 325.6L1277.2 333.5L1269.3 325.6Z"/>
<path d="M1290.8 313.70000000000005L1298.7 321.6L1290.8 329.5L1282.8999999999999 321.6Z"/>
<path d="M1330.1 308.20000000000005L1338.0 316.1L1330.1 324.0L1322.1999999999998 316.1Z"/>
<path d="M1341.6 322.5L1349.5 330.4L1341.6 338.29999999999995L1333.6999999999998 330.4Z"/>
<path d="M1360.5 324.5L1368.4 332.4L1360.5 340.29999999999995L1352.6 332.4Z"/>
<path d="M1400.8 323.20000000000005L1408.7 331.1L1400.8 339.0L1392.8999999999999 331.1Z"/>
<path d="M1397.8 325.20000000000005L1405.7 333.1L1397.8 341.0L1389.8999999999999 333.1Z"/>
<path d="M1287.4 335.3L1295.3000000000002 343.2L1287.4 351.09999999999997L1279.5 343.2Z"/>
<path d="M1302.3 332.6L1310.2 340.5L1302.3 348.4L1294.3999999999999 340.5Z"/>
<path d="M1322.6 333.3L1330.5 341.2L1322.6 349.09999999999997L1314.6999999999998 341.2Z"/>
<path d="M1292.1 346.20000000000005L1300.0 354.1L1292.1 362.0L1284.1999999999998 354.1Z"/>
<path d="M1309.7 343.70000000000005L1317.6000000000001 351.6L1309.7 359.5L1301.8 351.6Z"/>
<path d="M1307.7 340.70000000000005L1315.6000000000001 348.6L1307.7 356.5L1299.8 348.6Z"/>
<path d="M1319.9 342.8L1327.8000000000002 350.7L1319.9 358.59999999999997L1312.0 350.7Z"/>
<path d="M1324.6 352.3L1332.5 360.2L1324.6 368.09999999999997L1316.6999999999998 360.2Z"/>
<path d="M1290.1 355.6L1298.0 363.5L1290.1 371.4L1282.1999999999998 363.5Z"/>
<path d="M1294.2 365.1L1302.1000000000001 373.0L1294.2 380.9L1286.3 373.0Z"/>
<path d="M1294.2 375.90000000000003L1302.1000000000001 383.8L1294.2 391.7L1286.3 383.8Z"/>
<path d="M1294.2 371.90000000000003L1302.1000000000001 379.8L1294.2 387.7L1286.3 379.8Z"/>
<path d="M1305.7 362.70000000000005L1313.6000000000001 370.6L1305.7 378.5L1297.8 370.6Z"/>
<path d="M1307.7 359.70000000000005L1315.6000000000001 367.6L1307.7 375.5L1299.8 367.6Z"/>
<path d="M1315.8 365.1L1323.7 373.0L1315.8 380.9L1307.8999999999999 373.0Z"/>
<path d="M1313.8 377.20000000000005L1321.7 385.1L1313.8 393.0L1305.8999999999999 385.1Z"/>
<path d="M1313.8 373.20000000000005L1321.7 381.1L1313.8 389.0L1305.8999999999999 381.1Z"/>
<path d="M1271.1 358.3L1279.0 366.2L1271.1 374.09999999999997L1263.1999999999998 366.2Z"/>
<path d="M1269.8 367.8L1277.7 375.7L1269.8 383.59999999999997L1261.8999999999999 375.7Z"/>
<path d="M1260.3 374.6L1268.2 382.5L1260.3 390.4L1252.3999999999999 382.5Z"/>
<path d="M1248.1 378.70000000000005L1256.0 386.6L1248.1 394.5L1240.1999999999998 386.6Z"/>
<path d="M1241.4 371.90000000000003L1249.3000000000002 379.8L1241.4 387.7L1233.5 379.8Z"/>
<path d="M1241.4 352.90000000000003L1249.3000000000002 360.8L1241.4 368.7L1233.5 360.8Z"/>
<path d="M1241.4 385.40000000000003L1249.3000000000002 393.3L1241.4 401.2L1233.5 393.3Z"/>
<path d="M1355.1 346.20000000000005L1363.0 354.1L1355.1 362.0L1347.1999999999998 354.1Z"/>
<path d="M1349.7 351.6L1357.6000000000001 359.5L1349.7 367.4L1341.8 359.5Z"/>
<path d="M1379.4 345.8L1387.3000000000002 353.7L1379.4 361.59999999999997L1371.5 353.7Z"/>
<path d="M1377.4 342.8L1385.3000000000002 350.7L1377.4 358.59999999999997L1369.5 350.7Z"/>
<path d="M1351.7 371.90000000000003L1359.6000000000001 379.8L1351.7 387.7L1343.8 379.8Z"/>
<path d="M1365.6 374.6L1373.5 382.5L1365.6 390.4L1357.6999999999998 382.5Z"/>
<path d="M1362.6 376.6L1370.5 384.5L1362.6 392.4L1354.6999999999998 384.5Z"/>
<path d="M1372.7 376.6L1380.6000000000001 384.5L1372.7 392.4L1364.8 384.5Z"/>
<path d="M1342.9 384.1L1350.8000000000002 392.0L1342.9 399.9L1335.0 392.0Z"/>
<path d="M1424.2 354.3L1432.1000000000001 362.2L1424.2 370.09999999999997L1416.3 362.2Z"/>
<path d="M1450.6 366.5L1458.5 374.4L1450.6 382.29999999999995L1442.6999999999998 374.4Z"/>
<path d="M1441.8 382.70000000000005L1449.7 390.6L1441.8 398.5L1433.8999999999999 390.6Z"/>
<path d="M1439.1 378.0L1447.0 385.9L1439.1 393.79999999999995L1431.1999999999998 385.9Z"/>
<path d="M1414.7 384.1L1422.6000000000001 392.0L1414.7 399.9L1406.8 392.0Z"/>
<path d="M1418.5 391.6L1426.4 399.5L1418.5 407.4L1410.6 399.5Z"/>
<path d="M1421.5 393.6L1429.4 401.5L1421.5 409.4L1413.6 401.5Z"/>
<path d="M1466.1 384.1L1474.0 392.0L1466.1 399.9L1458.1999999999998 392.0Z"/>
<path d="M1482.4 390.90000000000003L1490.3000000000002 398.8L1482.4 406.7L1474.5 398.8Z"/>
<path d="M1402.5 403.0L1410.4 410.9L1402.5 418.79999999999995L1394.6 410.9Z"/>
<path d="M1420.1 400.3L1428.0 408.2L1420.1 416.09999999999997L1412.1999999999998 408.2Z"/>
<path d="M1448.5 403.0L1456.4 410.9L1448.5 418.79999999999995L1440.6 410.9Z"/>
<path d="M1440.1 410.5L1448.0 418.4L1440.1 426.29999999999995L1432.1999999999998 418.4Z"/>
<path d="M1443.1 412.5L1451.0 420.4L1443.1 428.29999999999995L1435.1999999999998 420.4Z"/>
<path d="M1471.6 411.20000000000005L1479.5 419.1L1471.6 427.0L1463.6999999999998 419.1Z"/>
<path d="M1256.2 396.3L1264.1000000000001 404.2L1256.2 412.09999999999997L1248.3 404.2Z"/>
<path d="M1279.3 401.70000000000005L1287.2 409.6L1279.3 417.5L1271.3999999999999 409.6Z"/>
<path d="M1271.1 411.20000000000005L1279.0 419.1L1271.1 427.0L1263.1999999999998 419.1Z"/>
<path d="M1315.8 413.8L1323.7 421.7L1315.8 429.59999999999997L1307.8999999999999 421.7Z"/>
<path d="M1315.8 409.8L1323.7 417.7L1315.8 425.59999999999997L1307.8999999999999 417.7Z"/>
<path d="M1315.2 407.40000000000003L1323.1000000000001 415.3L1315.2 423.2L1307.3 415.3Z"/>
<path d="M1317.2 404.40000000000003L1325.1000000000001 412.3L1317.2 420.2L1309.3 412.3Z"/>
<path d="M1342.5 408.5L1350.4 416.4L1342.5 424.29999999999995L1334.6 416.4Z"/>
<path d="M1339.5 410.5L1347.4 418.4L1339.5 426.29999999999995L1331.6 418.4Z"/>
<path d="M1258.3 393.90000000000003L1266.2 401.8L1258.3 409.7L1250.3999999999999 401.8Z"/>
<path d="M1260.3 390.90000000000003L1268.2 398.8L1260.3 406.7L1252.3999999999999 398.8Z"/>
<path d="M1032.1 371.20000000000005L1040.0 379.1L1032.1 387.0L1024.1999999999998 379.1Z"/>
<path d="M1101.6 352.3L1109.5 360.2L1101.6 368.09999999999997L1093.6999999999998 360.2Z"/>
<path d="M1104.6 354.3L1112.5 362.2L1104.6 370.09999999999997L1096.6999999999998 362.2Z"/>
<path d="M1103.2 361.70000000000005L1111.1000000000001 369.6L1103.2 377.5L1095.3 369.6Z"/>
<path d="M1112.0 363.8L1119.9 371.7L1112.0 379.59999999999997L1104.1 371.7Z"/>
<path d="M1121.5 365.1L1129.4 373.0L1121.5 380.9L1113.6 373.0Z"/>
<path d="M1121.5 361.1L1129.4 369.0L1121.5 376.9L1113.6 369.0Z"/>
<path d="M1149.3 352.3L1157.2 360.2L1149.3 368.09999999999997L1141.3999999999999 360.2Z"/>
<path d="M1162.8 359.0L1170.7 366.9L1162.8 374.79999999999995L1154.8999999999999 366.9Z"/>
<path d="M1162.8 355.0L1170.7 362.9L1162.8 370.79999999999995L1154.8999999999999 362.9Z"/>
<path d="M1175.7 352.90000000000003L1183.6000000000001 360.8L1175.7 368.7L1167.8 360.8Z"/>
<path d="M1152.0 361.1L1159.9 369.0L1152.0 376.9L1144.1 369.0Z"/>
<path d="M1138.4 371.20000000000005L1146.3000000000002 379.1L1138.4 387.0L1130.5 379.1Z"/>
<path d="M1141.1 380.0L1149.0 387.9L1141.1 395.79999999999995L1133.1999999999998 387.9Z"/>
<path d="M1150.6 380.0L1158.5 387.9L1150.6 395.79999999999995L1142.6999999999998 387.9Z"/>
<path d="M1198.0 347.5L1205.9 355.4L1198.0 363.29999999999995L1190.1 355.4Z"/>
<path d="M1203.4 359.6L1211.3000000000002 367.5L1203.4 375.4L1195.5 367.5Z"/>
<path d="M1203.4 355.6L1211.3000000000002 363.5L1203.4 371.4L1195.5 363.5Z"/>
<path d="M1206.1 370.5L1214.0 378.4L1206.1 386.29999999999995L1198.1999999999998 378.4Z"/>
<path d="M1217.0 340.70000000000005L1224.9 348.6L1217.0 356.5L1209.1 348.6Z"/>
<path d="M1225.8 340.1L1233.7 348.0L1225.8 355.9L1217.8999999999999 348.0Z"/>
<path d="M1228.9 345.5L1236.8000000000002 353.4L1228.9 361.29999999999995L1221.0 353.4Z"/>
<path d="M1231.9 347.5L1239.8000000000002 355.4L1231.9 363.29999999999995L1224.0 355.4Z"/>
<path d="M1230.6 360.0L1238.5 367.9L1230.6 375.79999999999995L1222.6999999999998 367.9Z"/>
<path d="M1232.6 357.0L1240.5 364.9L1232.6 372.79999999999995L1224.6999999999998 364.9Z"/>
<path d="M1230.5 374.6L1238.4 382.5L1230.5 390.4L1222.6 382.5Z"/>
<path d="M1215.6 384.1L1223.5 392.0L1215.6 399.9L1207.6999999999998 392.0Z"/>
<path d="M1234.6 385.40000000000003L1242.5 393.3L1234.6 401.2L1226.6999999999998 393.3Z"/>
<path d="M1224.0 391.6L1231.9 399.5L1224.0 407.4L1216.1 399.5Z"/>
<path d="M1221.0 393.6L1228.9 401.5L1221.0 409.4L1213.1 401.5Z"/>
<path d="M1195.3 396.3L1203.2 404.2L1195.3 412.09999999999997L1187.3999999999999 404.2Z"/>
<path d="M1226.5 401.70000000000005L1234.4 409.6L1226.5 417.5L1218.6 409.6Z"/>
<path d="M1168.2 405.1L1176.1000000000001 413.0L1168.2 420.9L1160.3 413.0Z"/>
<path d="M1158.8 411.20000000000005L1166.7 419.1L1158.8 427.0L1150.8999999999999 419.1Z"/>
<path d="M1189.9 412.5L1197.8000000000002 420.4L1189.9 428.29999999999995L1182.0 420.4Z"/>
<path d="M1218.3 416.5L1226.2 424.4L1218.3 432.29999999999995L1210.3999999999999 424.4Z"/>
<path d="M1218.3 412.5L1226.2 420.4L1218.3 428.29999999999995L1210.3999999999999 420.4Z"/>
<path d="M1236.6 414.20000000000005L1244.5 422.1L1236.6 430.0L1228.6999999999998 422.1Z"/>
<path d="M1234.6 411.20000000000005L1242.5 419.1L1234.6 427.0L1226.6999999999998 419.1Z"/>
<path d="M1119.5 415.20000000000005L1127.4 423.1L1119.5 431.0L1111.6 423.1Z"/>
<path d="M1143.9 415.90000000000003L1151.8000000000002 423.8L1143.9 431.7L1136.0 423.8Z"/>
<path d="M1205.7 419.20000000000005L1213.6000000000001 427.1L1205.7 435.0L1197.8 427.1Z"/>
<path d="M1208.7 421.20000000000005L1216.6000000000001 429.1L1208.7 437.0L1200.8 429.1Z"/>
<path d="M1170.1 427.90000000000003L1178.0 435.8L1170.1 443.7L1162.1999999999998 435.8Z"/>
<path d="M1196.8 428.0L1204.7 435.9L1196.8 443.79999999999995L1188.8999999999999 435.9Z"/>
<path d="M1193.8 430.0L1201.7 437.9L1193.8 445.79999999999995L1185.8999999999999 437.9Z"/>
<path d="M1204.0 432.0L1211.9 439.9L1204.0 447.79999999999995L1196.1 439.9Z"/>
<path d="M1246.6 425.20000000000005L1254.5 433.1L1246.6 441.0L1238.6999999999998 433.1Z"/>
<path d="M1258.1 430.0L1266.0 437.9L1258.1 445.79999999999995L1250.1999999999998 437.9Z"/>
<path d="M1232.4 436.1L1240.3000000000002 444.0L1232.4 451.9L1224.5 444.0Z"/>
<path d="M1260.5 440.8L1268.4 448.7L1260.5 456.59999999999997L1252.6 448.7Z"/>
<path d="M1263.5 442.8L1271.4 450.7L1263.5 458.59999999999997L1255.6 450.7Z"/>
<path d="M1281.8 439.40000000000003L1289.7 447.3L1281.8 455.2L1273.8999999999999 447.3Z"/>
<path d="M1278.4 454.3L1286.3000000000002 462.2L1278.4 470.09999999999997L1270.5 462.2Z"/>
<path d="M1300.8 433.3L1308.7 441.2L1300.8 449.09999999999997L1292.8999999999999 441.2Z"/>
<path d="M1315.0 434.0L1322.9 441.9L1315.0 449.79999999999995L1307.1 441.9Z"/>
<path d="M1324.5 427.3L1332.4 435.2L1324.5 443.09999999999997L1316.6 435.2Z"/>
<path d="M1334.0 436.3L1341.9 444.2L1334.0 452.09999999999997L1326.1 444.2Z"/>
<path d="M1336.0 433.3L1343.9 441.2L1336.0 449.09999999999997L1328.1 441.2Z"/>
<path d="M1315.7 446.20000000000005L1323.6000000000001 454.1L1315.7 462.0L1307.8 454.1Z"/>
<path d="M1333.7 440.8L1341.6000000000001 448.7L1333.7 456.59999999999997L1325.8 448.7Z"/>
<path d="M1336.7 442.8L1344.6000000000001 450.7L1336.7 458.59999999999997L1328.8 450.7Z"/>
<path d="M1355.9 438.8L1363.8000000000002 446.7L1355.9 454.59999999999997L1348.0 446.7Z"/>
<path d="M1352.9 440.8L1360.8000000000002 448.7L1352.9 456.59999999999997L1345.0 448.7Z"/>
<path d="M1369.2 449.5L1377.1000000000001 457.4L1369.2 465.29999999999995L1361.3 457.4Z"/>
<path d="M1369.2 445.5L1377.1000000000001 453.4L1369.2 461.29999999999995L1361.3 453.4Z"/>
<path d="M1354.9 452.3L1362.8000000000002 460.2L1354.9 468.09999999999997L1347.0 460.2Z"/>
<path d="M1365.8 454.3L1373.7 462.2L1365.8 470.09999999999997L1357.8999999999999 462.2Z"/>
<path d="M1376.6 459.1L1384.5 467.0L1376.6 474.9L1368.6999999999998 467.0Z"/>
<path d="M1291.3 465.90000000000003L1299.2 473.8L1291.3 481.7L1283.3999999999999 473.8Z"/>
<path d="M1301.5 476.70000000000005L1309.4 484.6L1301.5 492.5L1293.6 484.6Z"/>
<path d="M1321.8 465.20000000000005L1329.7 473.1L1321.8 481.0L1313.8999999999999 473.1Z"/>
<path d="M1282.5 483.5L1290.4 491.4L1282.5 499.29999999999995L1274.6 491.4Z"/>
<path d="M1304.2 498.3L1312.1000000000001 506.2L1304.2 514.1L1296.3 506.2Z"/>
<path d="M1220.9 468.5L1228.8000000000002 476.4L1220.9 484.29999999999995L1213.0 476.4Z"/>
<path d="M1220.9 464.5L1228.8000000000002 472.4L1220.9 480.29999999999995L1213.0 472.4Z"/>
<path d="M1239.8 476.0L1247.7 483.9L1239.8 491.79999999999995L1231.8999999999999 483.9Z"/>
<path d="M1204.6 484.70000000000005L1212.5 492.6L1204.6 500.5L1196.6999999999998 492.6Z"/>
<path d="M1204.6 480.70000000000005L1212.5 488.6L1204.6 496.5L1196.6999999999998 488.6Z"/>
<path d="M1221.3 484.8L1229.2 492.7L1221.3 500.59999999999997L1213.3999999999999 492.7Z"/>
<path d="M1224.3 486.8L1232.2 494.7L1224.3 502.59999999999997L1216.3999999999999 494.7Z"/>
<path d="M1201.2 503.40000000000003L1209.1000000000001 511.3L1201.2 519.2L1193.3 511.3Z"/>
<path d="M1199.2 500.40000000000003L1207.1000000000001 508.3L1199.2 516.2L1191.3 508.3Z"/>
<path d="M1135.6 455.70000000000005L1143.5 463.6L1135.6 471.5L1127.6999999999998 463.6Z"/>
<path d="M1130.8 464.5L1138.7 472.4L1130.8 480.29999999999995L1122.8999999999999 472.4Z"/>
<path d="M1176.9 448.90000000000003L1184.8000000000002 456.8L1176.9 464.7L1169.0 456.8Z"/>
<path d="M1176.9 444.90000000000003L1184.8000000000002 452.8L1176.9 460.7L1169.0 452.8Z"/>
<path d="M1122.7 484.8L1130.6000000000001 492.7L1122.7 500.59999999999997L1114.8 492.7Z"/>
<path d="M1121.4 494.3L1129.3000000000002 502.2L1121.4 510.09999999999997L1113.5 502.2Z"/>
<path d="M1144.4 491.6L1152.3000000000002 499.5L1144.4 507.4L1136.5 499.5Z"/>
<path d="M1136.2 499.0L1144.1000000000001 506.9L1136.2 514.8L1128.3 506.9Z"/>
<path d="M1146.4 513.9L1154.3000000000002 521.8L1146.4 529.6999999999999L1138.5 521.8Z"/>
<path d="M1136.0 518.7L1143.9 526.6L1136.0 534.5L1128.1 526.6Z"/>
<path d="M1139.0 520.7L1146.9 528.6L1139.0 536.5L1131.1 528.6Z"/>
<path d="M1164.7 524.1L1172.6000000000001 532.0L1164.7 539.9L1156.8 532.0Z"/>
<path d="M1121.4 551.1L1129.3000000000002 559.0L1121.4 566.9L1113.5 559.0Z"/>
<path d="M1121.4 547.1L1129.3000000000002 555.0L1121.4 562.9L1113.5 555.0Z"/>
<path d="M1074.6 425.90000000000003L1082.5 433.8L1074.6 441.7L1066.6999999999998 433.8Z"/>
<path d="M1002.2 464.1L1010.1 472.0L1002.2 479.9L994.3000000000001 472.0Z"/>
<path d="M1004.2 461.1L1012.1 469.0L1004.2 476.9L996.3000000000001 469.0Z"/>
<path d="M1049.6 470.20000000000005L1057.5 478.1L1049.6 486.0L1041.6999999999998 478.1Z"/>
<path d="M1047.6 467.20000000000005L1055.5 475.1L1047.6 483.0L1039.6999999999998 475.1Z"/>
<path d="M1100.4 442.8L1108.3000000000002 450.7L1100.4 458.59999999999997L1092.5 450.7Z"/>
<path d="M1110.5 447.6L1118.4 455.5L1110.5 463.4L1102.6 455.5Z"/>
<path d="M1097.7 457.70000000000005L1105.6000000000001 465.6L1097.7 473.5L1089.8 465.6Z"/>
<path d="M1099.7 475.3L1107.6000000000001 483.2L1099.7 491.09999999999997L1091.8 483.2Z"/>
<path d="M1112.6 476.70000000000005L1120.5 484.6L1112.6 492.5L1104.6999999999998 484.6Z"/>
<path d="M1057.7 479.40000000000003L1065.6000000000001 487.3L1057.7 495.2L1049.8 487.3Z"/>
<path d="M1052.3 492.90000000000003L1060.2 500.8L1052.3 508.7L1044.3999999999999 500.8Z"/>
<path d="M1052.3 488.90000000000003L1060.2 496.8L1052.3 504.7L1044.3999999999999 496.8Z"/>
<path d="M1019.1 488.90000000000003L1027.0 496.8L1019.1 504.7L1011.2 496.8Z"/>
<path d="M985.6 489.6L993.5 497.5L985.6 505.4L977.7 497.5Z"/>
<path d="M988.6 491.6L996.5 499.5L988.6 507.4L980.7 499.5Z"/>
<path d="M989.3 504.4L997.1999999999999 512.3L989.3 520.1999999999999L981.4 512.3Z"/>
<path d="M975.1 518.7L983.0 526.6L975.1 534.5L967.2 526.6Z"/>
<path d="M938.5 521.4L946.4 529.3L938.5 537.1999999999999L930.6 529.3Z"/>
<path d="M912.1 544.4L920.0 552.3L912.1 560.1999999999999L904.2 552.3Z"/>
<path d="M1040.8 503.70000000000005L1048.7 511.6L1040.8 519.5L1032.8999999999999 511.6Z"/>
<path d="M1040.8 499.70000000000005L1048.7 507.6L1040.8 515.5L1032.8999999999999 507.6Z"/>
<path d="M1050.3 505.1L1058.2 513.0L1050.3 520.9L1042.3999999999999 513.0Z"/>
<path d="M1088.2 505.80000000000007L1096.1000000000001 513.7L1088.2 521.6L1080.3 513.7Z"/>
<path d="M1073.3 514.9L1081.2 522.8L1073.3 530.6999999999999L1065.3999999999999 522.8Z"/>
<path d="M1075.3 511.9L1083.2 519.8L1075.3 527.6999999999999L1067.3999999999999 519.8Z"/>
<path d="M1073.3 520.0L1081.2 527.9L1073.3 535.8L1065.3999999999999 527.9Z"/>
<path d="M1017.8 524.1L1025.7 532.0L1017.8 539.9L1009.9 532.0Z"/>
<path d="M1025.9 525.4L1033.8000000000002 533.3L1025.9 541.1999999999999L1018.0000000000001 533.3Z"/>
<path d="M1013.0 532.2L1020.9 540.1L1013.0 548.0L1005.1 540.1Z"/>
<path d="M1088.2 549.1L1096.1000000000001 557.0L1088.2 564.9L1080.3 557.0Z"/>
<path d="M1098.3 553.9L1106.2 561.8L1098.3 569.6999999999999L1090.3999999999999 561.8Z"/>
<path d="M1076.7 555.2L1084.6000000000001 563.1L1076.7 571.0L1068.8 563.1Z"/>
<path d="M987.6 553.2L995.5 561.1L987.6 569.0L979.7 561.1Z"/>
<path d="M984.6 555.2L992.5 563.1L984.6 571.0L976.7 563.1Z"/>
<path d="M957.5 553.9L965.4 561.8L957.5 569.6999999999999L949.6 561.8Z"/>
<path d="M941.2 555.2L949.1 563.1L941.2 571.0L933.3000000000001 563.1Z"/>
<path d="M1387.4 425.20000000000005L1395.3000000000002 433.1L1387.4 441.0L1379.5 433.1Z"/>
<path d="M1468.4 511.9L1476.3000000000002 519.8L1468.4 527.6999999999999L1460.5 519.8Z"/>
<path d="M1471.4 513.9L1479.3000000000002 521.8L1471.4 529.6999999999999L1463.5 521.8Z"/>
<path d="M1471.4 507.20000000000005L1479.3000000000002 515.1L1471.4 523.0L1463.5 515.1Z"/>
<path d="M1514.7 513.2L1522.6000000000001 521.1L1514.7 529.0L1506.8 521.1Z"/>
<path d="M1465.3 537.6L1473.2 545.5L1465.3 553.4L1457.3999999999999 545.5Z"/>
<path d="M1450.4 544.4L1458.3000000000002 552.3L1450.4 560.1999999999999L1442.5 552.3Z"/>
<path d="M927.1 566.9L935.0 574.8L927.1 582.6999999999999L919.2 574.8Z"/>
<path d="M925.1 563.9L933.0 571.8L925.1 579.6999999999999L917.2 571.8Z"/>
<path d="M1007.0 570.6L1014.9 578.5L1007.0 586.4L999.1 578.5Z"/>
<path d="M1007.0 566.6L1014.9 574.5L1007.0 582.4L999.1 574.5Z"/>
<path d="M1034.8 569.3000000000001L1042.7 577.2L1034.8 585.1L1026.8999999999999 577.2Z"/>
<path d="M1047.0 566.6L1054.9 574.5L1047.0 582.4L1039.1 574.5Z"/>
<path d="M1062.6 565.9L1070.5 573.8L1062.6 581.6999999999999L1054.6999999999998 573.8Z"/>
<path d="M924.4 578.1L932.3 586.0L924.4 593.9L916.5 586.0Z"/>
<path d="M931.9 583.8000000000001L939.8 591.7L931.9 599.6L924.0 591.7Z"/>
<path d="M933.9 580.8000000000001L941.8 588.7L933.9 596.6L926.0 588.7Z"/>
<path d="M920.1 590.3000000000001L928.0 598.2L920.1 606.1L912.2 598.2Z"/>
<path d="M923.1 592.3000000000001L931.0 600.2L923.1 608.1L915.2 600.2Z"/>
<path d="M931.2 598.7L939.1 606.6L931.2 614.5L923.3000000000001 606.6Z"/>
<path d="M933.2 595.7L941.1 603.6L933.2 611.5L925.3000000000001 603.6Z"/>
<path d="M956.9 605.9L964.8 613.8L956.9 621.6999999999999L949.0 613.8Z"/>
<path d="M959.0 618.0L966.9 625.9L959.0 633.8L951.1 625.9Z"/>
<path d="M1000.3 593.0L1008.1999999999999 600.9L1000.3 608.8L992.4 600.9Z"/>
<path d="M1022.6 591.6L1030.5 599.5L1022.6 607.4L1014.7 599.5Z"/>
<path d="M889.9 616.7L897.8 624.6L889.9 632.5L882.0 624.6Z"/>
<path d="M904.8 628.1L912.6999999999999 636.0L904.8 643.9L896.9 636.0Z"/>
<path d="M904.8 624.1L912.6999999999999 632.0L904.8 639.9L896.9 632.0Z"/>
<path d="M914.3 630.9L922.1999999999999 638.8L914.3 646.6999999999999L906.4 638.8Z"/>
<path d="M945.4 623.5L953.3 631.4L945.4 639.3L937.5 631.4Z"/>
<path d="M900.1 639.7L908.0 647.6L900.1 655.5L892.2 647.6Z"/>
<path d="M883.8 647.8000000000001L891.6999999999999 655.7L883.8 663.6L875.9 655.7Z"/>
<path d="M883.8 643.8000000000001L891.6999999999999 651.7L883.8 659.6L875.9 651.7Z"/>
<path d="M873.6 647.8000000000001L881.5 655.7L873.6 663.6L865.7 655.7Z"/>
<path d="M977.9 639.3000000000001L985.8 647.2L977.9 655.1L970.0 647.2Z"/>
<path d="M975.9 636.3000000000001L983.8 644.2L975.9 652.1L968.0 644.2Z"/>
<path d="M1056.5 641.7L1064.4 649.6L1056.5 657.5L1048.6 649.6Z"/>
<path d="M853.3 689.1L861.1999999999999 697.0L853.3 704.9L845.4 697.0Z"/>
<path d="M999.6 691.2L1007.5 699.1L999.6 707.0L991.7 699.1Z"/>
<path d="M1097.8 565.2L1105.7 573.1L1097.8 581.0L1089.8999999999999 573.1Z"/>
<path d="M1119.4 567.2L1127.3000000000002 575.1L1119.4 583.0L1111.5 575.1Z"/>
<path d="M1119.4 563.2L1127.3000000000002 571.1L1119.4 579.0L1111.5 571.1Z"/>
<path d="M1152.6 591.0L1160.5 598.9L1152.6 606.8L1144.6999999999998 598.9Z"/>
<path d="M1583.4 559.8000000000001L1591.3000000000002 567.7L1583.4 575.6L1575.5 567.7Z"/>
<path d="M1586.4 561.8000000000001L1594.3000000000002 569.7L1586.4 577.6L1578.5 569.7Z"/>
<path d="M1476.0 607.8000000000001L1483.9 615.7L1476.0 623.6L1468.1 615.7Z"/>
<path d="M1476.0 603.8000000000001L1483.9 611.7L1476.0 619.6L1468.1 611.7Z"/>
<path d="M845.2 699.2L853.1 707.1L845.2 715.0L837.3000000000001 707.1Z"/>
<path d="M847.2 719.5L855.1 727.4L847.2 735.3L839.3000000000001 727.4Z"/>
<path d="M839.8 727.6L847.6999999999999 735.5L839.8 743.4L831.9 735.5Z"/>
<path d="M1561.6 680.4L1569.5 688.3L1561.6 696.1999999999999L1553.6999999999998 688.3Z"/>
<path d="M1370.9 747.2L1378.8000000000002 755.1L1370.9 763.0L1363.0 755.1Z"/>
<path d="M1372.9 744.2L1380.8000000000002 752.1L1372.9 760.0L1365.0 752.1Z"/>
<path d="M1363.8 746.9L1371.7 754.8L1363.8 762.6999999999999L1355.8999999999999 754.8Z"/>
<path d="M1360.9 760.8000000000001L1368.8000000000002 768.7L1360.9 776.6L1353.0 768.7Z"/>
<path d="M1362.9 757.8000000000001L1370.8000000000002 765.7L1362.9 773.6L1355.0 765.7Z"/>
<path d="M1340.9 764.5L1348.8000000000002 772.4L1340.9 780.3L1333.0 772.4Z"/>
<path d="M1342.9 761.5L1350.8000000000002 769.4L1342.9 777.3L1335.0 769.4Z"/>
<path d="M1330.1 767.9L1338.0 775.8L1330.1 783.6999999999999L1322.1999999999998 775.8Z"/>
<path d="M1355.6 773.7L1363.5 781.6L1355.6 789.5L1347.6999999999998 781.6Z"/>
<path d="M1355.6 769.7L1363.5 777.6L1355.6 785.5L1347.6999999999998 777.6Z"/>
<path d="M1345.6 774.2L1353.5 782.1L1345.6 790.0L1337.6999999999998 782.1Z"/>
<path d="M1361.8 791.8000000000001L1369.7 799.7L1361.8 807.6L1353.8999999999999 799.7Z"/>
<path d="M1363.8 788.8000000000001L1371.7 796.7L1363.8 804.6L1355.8999999999999 796.7Z"/>
<path d="M1372.9 800.7L1380.8000000000002 808.6L1372.9 816.5L1365.0 808.6Z"/>
<path d="M1360.2 804.3000000000001L1368.1000000000001 812.2L1360.2 820.1L1352.3 812.2Z"/>
<path d="M1369.3 806.1L1377.2 814.0L1369.3 821.9L1361.3999999999999 814.0Z"/>
</g>
<g fill="#fb1414" stroke="#fff" stroke-width="1">
<path d="M1284.7 298.0L1291.2 309.5L1278.2 309.5Z"/>
<path d="M1405.9 373.8L1412.4 385.3L1399.4 385.3Z"/>
<path d="M1137.8 362.3L1144.3 373.8L1131.3 373.8Z"/>
<path d="M1204.8 401.6L1211.3 413.1L1198.3 413.1Z"/>
<path d="M1153.3 408.3L1159.8 419.8L1146.8 419.8Z"/>
<path d="M1191.8 443.4L1198.3 454.9L1185.3 454.9Z"/>
<path d="M1136.2 550.4L1142.7 561.9L1129.7 561.9Z"/>
<path d="M996.1 446.8L1002.6 458.3L989.6 458.3Z"/>
<path d="M1094.9 428.5L1101.4 440.0L1088.4 440.0Z"/>
<path d="M941.2 503.6L947.7 515.1L934.7 515.1Z"/>
<path d="M954.1 506.29999999999995L960.6 517.8L947.6 517.8Z"/>
<path d="M1014.4 496.9L1020.9 508.4L1007.9 508.4Z"/>
<path d="M910.9 607.8L917.4 619.3L904.4 619.3Z"/>
</g>
<g fill="#22ab22" stroke="#fff" stroke-width="1">
<path d="M1380.2 330.8L1387.2 343.8L1373.2 343.8Z"/>
<path d="M1281.3 308.5L1288.3 321.5L1274.3 321.5Z"/>
<path d="M1282.7 347.1L1289.7 360.1L1275.7 360.1Z"/>
<path d="M1124.9 390.4L1131.9 403.4L1117.9 403.4Z"/>
<path d="M1223.8 359.2L1230.8 372.2L1216.8 372.2Z"/>
<path d="M1195.3 385.0L1202.3 398.0L1188.3 398.0Z"/>
<path d="M1020.5 537.8L1027.5 550.8L1013.5 550.8Z"/>
<path d="M1478.9 520.2L1485.9 533.2L1471.9 533.2Z"/>
</g>
<path d="M1309.1 289.8L1322.5 297.6L1322.5 313.1L1309.1 320.8L1295.7 313.1L1295.7 297.6Z" fill="#fff"/>
<path d="M1309.1 292.6L1320.1 298.9L1320.1 311.7L1309.1 318.0L1298.1 311.7L1298.1 298.9Z" fill="none" stroke="#22ab22" stroke-width="3"/>
<path d="M1309.1 296.7L1316.5 301.0L1316.5 309.6L1309.1 313.9L1301.7 309.6L1301.7 301.0Z" fill="#22ab22"/>
<text x="1309.1" y="308.6" font-size="10.5" fill="#b8f8b0" stroke="#b8f8b0" stroke-width="0.3" text-anchor="middle" font-family="Liberation Sans">Z</text>
<path d="M1311.8 311.5L1325.2 319.2L1325.2 334.8L1311.8 342.5L1298.4 334.8L1298.4 319.2Z" fill="#fff"/>
<path d="M1311.8 314.3L1322.8 320.6L1322.8 333.4L1311.8 339.7L1300.8 333.4L1300.8 320.6Z" fill="none" stroke="#22ab22" stroke-width="3"/>
<path d="M1311.8 318.4L1319.2 322.7L1319.2 331.3L1311.8 335.6L1304.4 331.3L1304.4 322.7Z" fill="#22ab22"/>
<text x="1311.8" y="330.3" font-size="10.5" fill="#b8f8b0" stroke="#b8f8b0" stroke-width="0.3" text-anchor="middle" font-family="Liberation Sans">Z</text>
<path d="M1261.7 341.9L1275.1 349.6L1275.1 365.1L1261.7 372.9L1248.3 365.1L1248.3 349.6Z" fill="#fff"/>
<path d="M1261.7 344.7L1272.7 351.0L1272.7 363.8L1261.7 370.1L1250.7 363.8L1250.7 351.0Z" fill="none" stroke="#22ab22" stroke-width="3"/>
<path d="M1261.7 348.8L1269.1 353.1L1269.1 361.7L1261.7 366.0L1254.3 361.7L1254.3 353.1Z" fill="#22ab22"/>
<text x="1261.7" y="360.7" font-size="10.5" fill="#b8f8b0" stroke="#b8f8b0" stroke-width="0.3" text-anchor="middle" font-family="Liberation Sans">Z</text>
<path d="M1396.4 348.0L1409.8 355.8L1409.8 371.2L1396.4 379.0L1383.0 371.2L1383.0 355.8Z" fill="#fff"/>
<path d="M1396.4 350.8L1407.4 357.1L1407.4 369.9L1396.4 376.2L1385.4 369.9L1385.4 357.1Z" fill="none" stroke="#22ab22" stroke-width="3"/>
<path d="M1396.4 354.9L1403.8 359.2L1403.8 367.8L1396.4 372.1L1389.0 367.8L1389.0 359.2Z" fill="#22ab22"/>
<text x="1396.4" y="366.8" font-size="10.5" fill="#b8f8b0" stroke="#b8f8b0" stroke-width="0.3" text-anchor="middle" font-family="Liberation Sans">Z</text>
<path d="M1096.5 383.3L1109.9 391.1L1109.9 406.6L1096.5 414.3L1083.1 406.6L1083.1 391.1Z" fill="#fff"/>
<path d="M1096.5 386.1L1107.5 392.4L1107.5 405.2L1096.5 411.5L1085.5 405.2L1085.5 392.4Z" fill="none" stroke="#22ab22" stroke-width="3"/>
<path d="M1096.5 390.2L1103.9 394.5L1103.9 403.1L1096.5 407.4L1089.1 403.1L1089.1 394.5Z" fill="#22ab22"/>
<text x="1096.5" y="402.1" font-size="10.5" fill="#b8f8b0" stroke="#b8f8b0" stroke-width="0.3" text-anchor="middle" font-family="Liberation Sans">Z</text>
<path d="M1188.5 356.8L1201.9 364.6L1201.9 380.1L1188.5 387.8L1175.1 380.1L1175.1 364.6Z" fill="#fff"/>
<path d="M1188.5 359.6L1199.5 365.9L1199.5 378.7L1188.5 385.0L1177.5 378.7L1177.5 365.9Z" fill="none" stroke="#22ab22" stroke-width="3"/>
<path d="M1188.5 363.7L1195.9 368.0L1195.9 376.6L1188.5 380.9L1181.1 376.6L1181.1 368.0Z" fill="#22ab22"/>
<text x="1188.5" y="375.6" font-size="10.5" fill="#b8f8b0" stroke="#b8f8b0" stroke-width="0.3" text-anchor="middle" font-family="Liberation Sans">Z</text>
<path d="M1156.6 433.2L1170.0 440.9L1170.0 456.4L1156.6 464.2L1143.2 456.4L1143.2 440.9Z" fill="#fff"/>
<path d="M1156.6 436.0L1167.6 442.3L1167.6 455.1L1156.6 461.4L1145.6 455.1L1145.6 442.3Z" fill="none" stroke="#22ab22" stroke-width="3"/>
<path d="M1156.6 440.1L1164.0 444.4L1164.0 453.0L1156.6 457.3L1149.2 453.0L1149.2 444.4Z" fill="#22ab22"/>
<text x="1156.6" y="452.0" font-size="10.5" fill="#b8f8b0" stroke="#b8f8b0" stroke-width="0.3" text-anchor="middle" font-family="Liberation Sans">Z</text>
<path d="M1184.3 455.5L1197.7 463.2L1197.7 478.8L1184.3 486.5L1170.9 478.8L1170.9 463.2Z" fill="#fff"/>
<path d="M1184.3 458.3L1195.3 464.6L1195.3 477.4L1184.3 483.7L1173.3 477.4L1173.3 464.6Z" fill="none" stroke="#22ab22" stroke-width="3"/>
<path d="M1184.3 462.4L1191.7 466.7L1191.7 475.3L1184.3 479.6L1176.9 475.3L1176.9 466.7Z" fill="#22ab22"/>
<text x="1184.3" y="474.3" font-size="10.5" fill="#b8f8b0" stroke="#b8f8b0" stroke-width="0.3" text-anchor="middle" font-family="Liberation Sans">Z</text>
<path d="M1238.5 447.4L1251.9 455.1L1251.9 470.6L1238.5 478.4L1225.1 470.6L1225.1 455.1Z" fill="#fff"/>
<path d="M1238.5 450.2L1249.5 456.5L1249.5 469.2L1238.5 475.6L1227.5 469.2L1227.5 456.5Z" fill="none" stroke="#22ab22" stroke-width="3"/>
<path d="M1238.5 454.3L1245.9 458.6L1245.9 467.2L1238.5 471.5L1231.1 467.2L1231.1 458.6Z" fill="#22ab22"/>
<text x="1238.5" y="466.2" font-size="10.5" fill="#b8f8b0" stroke="#b8f8b0" stroke-width="0.3" text-anchor="middle" font-family="Liberation Sans">Z</text>
<path d="M1258.1 458.3L1271.5 466.1L1271.5 481.6L1258.1 489.3L1244.7 481.6L1244.7 466.1Z" fill="#fff"/>
<path d="M1258.1 461.1L1269.1 467.4L1269.1 480.2L1258.1 486.5L1247.1 480.2L1247.1 467.4Z" fill="none" stroke="#22ab22" stroke-width="3"/>
<path d="M1258.1 465.2L1265.5 469.5L1265.5 478.1L1258.1 482.4L1250.7 478.1L1250.7 469.5Z" fill="#22ab22"/>
<text x="1258.1" y="477.1" font-size="10.5" fill="#b8f8b0" stroke="#b8f8b0" stroke-width="0.3" text-anchor="middle" font-family="Liberation Sans">Z</text>
<path d="M1241.9 488.7L1255.3 496.4L1255.3 511.9L1241.9 519.7L1228.5 511.9L1228.5 496.4Z" fill="#fff"/>
<path d="M1241.9 491.5L1252.9 497.8L1252.9 510.6L1241.9 516.9L1230.9 510.6L1230.9 497.8Z" fill="none" stroke="#22ab22" stroke-width="3"/>
<path d="M1241.9 495.6L1249.3 499.9L1249.3 508.5L1241.9 512.8L1234.5 508.5L1234.5 499.9Z" fill="#22ab22"/>
<text x="1241.9" y="507.5" font-size="10.5" fill="#b8f8b0" stroke="#b8f8b0" stroke-width="0.3" text-anchor="middle" font-family="Liberation Sans">Z</text>
<path d="M1066.5 448.1L1079.9 455.9L1079.9 471.4L1066.5 479.1L1053.1 471.4L1053.1 455.9Z" fill="#fff"/>
<path d="M1066.5 450.9L1077.5 457.2L1077.5 470.0L1066.5 476.3L1055.5 470.0L1055.5 457.2Z" fill="none" stroke="#22ab22" stroke-width="3"/>
<path d="M1066.5 455.0L1073.9 459.3L1073.9 467.9L1066.5 472.2L1059.1 467.9L1059.1 459.3Z" fill="#22ab22"/>
<text x="1066.5" y="466.90000000000003" font-size="10.5" fill="#b8f8b0" stroke="#b8f8b0" stroke-width="0.3" text-anchor="middle" font-family="Liberation Sans">Z</text>
<path d="M1079.4 473.1L1092.8 480.9L1092.8 496.4L1079.4 504.1L1066.0 496.4L1066.0 480.9Z" fill="#fff"/>
<path d="M1079.4 475.9L1090.4 482.2L1090.4 495.0L1079.4 501.3L1068.4 495.0L1068.4 482.2Z" fill="none" stroke="#22ab22" stroke-width="3"/>
<path d="M1079.4 480.0L1086.8 484.3L1086.8 492.9L1079.4 497.2L1072.0 492.9L1072.0 484.3Z" fill="#22ab22"/>
<text x="1079.4" y="491.90000000000003" font-size="10.5" fill="#b8f8b0" stroke="#b8f8b0" stroke-width="0.3" text-anchor="middle" font-family="Liberation Sans">Z</text>
<path d="M1071.2 483.3L1084.6 491.1L1084.6 506.6L1071.2 514.3L1057.8 506.6L1057.8 491.1Z" fill="#fff"/>
<path d="M1071.2 486.1L1082.2 492.4L1082.2 505.2L1071.2 511.5L1060.2 505.2L1060.2 492.4Z" fill="none" stroke="#22ab22" stroke-width="3"/>
<path d="M1071.2 490.2L1078.6 494.5L1078.6 503.1L1071.2 507.4L1063.8 503.1L1063.8 494.5Z" fill="#22ab22"/>
<text x="1071.2" y="502.1" font-size="10.5" fill="#b8f8b0" stroke="#b8f8b0" stroke-width="0.3" text-anchor="middle" font-family="Liberation Sans">Z</text>
<path d="M995.4 533.4L1008.8 541.1L1008.8 556.6L995.4 564.4L982.0 556.6L982.0 541.1Z" fill="#fff"/>
<path d="M995.4 536.2L1006.4 542.5L1006.4 555.2L995.4 561.6L984.4 555.2L984.4 542.5Z" fill="none" stroke="#22ab22" stroke-width="3"/>
<path d="M995.4 540.3L1002.8 544.6L1002.8 553.2L995.4 557.5L988.0 553.2L988.0 544.6Z" fill="#22ab22"/>
<text x="995.4" y="552.1999999999999" font-size="10.5" fill="#b8f8b0" stroke="#b8f8b0" stroke-width="0.3" text-anchor="middle" font-family="Liberation Sans">Z</text>
<path d="M1038.8 532.7L1052.2 540.5L1052.2 556.0L1038.8 563.7L1025.4 556.0L1025.4 540.5Z" fill="#fff"/>
<path d="M1038.8 535.5L1049.8 541.9L1049.8 554.6L1038.8 560.9L1027.8 554.6L1027.8 541.9Z" fill="none" stroke="#22ab22" stroke-width="3"/>
<path d="M1038.8 539.6L1046.2 543.9L1046.2 552.5L1038.8 556.8L1031.4 552.5L1031.4 543.9Z" fill="#22ab22"/>
<text x="1038.8" y="551.5" font-size="10.5" fill="#b8f8b0" stroke="#b8f8b0" stroke-width="0.3" text-anchor="middle" font-family="Liberation Sans">Z</text>
<path d="M950.2 582.0L963.6 589.8L963.6 605.2L950.2 613.0L936.8 605.2L936.8 589.8Z" fill="#fff"/>
<path d="M950.2 584.8L961.2 591.1L961.2 603.9L950.2 610.2L939.2 603.9L939.2 591.1Z" fill="none" stroke="#22ab22" stroke-width="3"/>
<path d="M950.2 588.9L957.6 593.2L957.6 601.8L950.2 606.1L942.8 601.8L942.8 593.2Z" fill="#22ab22"/>
<text x="950.2" y="600.8" font-size="10.5" fill="#b8f8b0" stroke="#b8f8b0" stroke-width="0.3" text-anchor="middle" font-family="Liberation Sans">Z</text>
<path d="M929.2 613.1L942.6 620.9L942.6 636.4L929.2 644.1L915.8 636.4L915.8 620.9Z" fill="#fff"/>
<path d="M929.2 615.9L940.2 622.2L940.2 635.0L929.2 641.3L918.2 635.0L918.2 622.2Z" fill="none" stroke="#22ab22" stroke-width="3"/>
<path d="M929.2 620.0L936.6 624.3L936.6 632.9L929.2 637.2L921.8 632.9L921.8 624.3Z" fill="#22ab22"/>
<text x="929.2" y="631.9" font-size="10.5" fill="#b8f8b0" stroke="#b8f8b0" stroke-width="0.3" text-anchor="middle" font-family="Liberation Sans">Z</text>
</svg>
<div class="a" style="left:600px;top:1011px;width:1320px;height:2px;background:#9c9c9c"></div>
<!-- status -->
<div id="status" class="a">
<div class="sb" style="left:0;width:99px;padding-left:4px">MapsID: 3882</div>
<div class="sb" style="left:102px;width:77px">png</div>
<div class="sb" style="left:182px;width:97px">MinZoom: 8</div>
<div class="sb" style="left:281px;width:97px">MaxZoom: 18</div>
<div class="sb" style="left:381px;width:97px">TileSize: 256</div>
<div class="sb" style="left:481px;width:98px">EPSG:3857</div>
<div class="sb" style="left:582px;width:1338px">Longitude=10.178833, Latitude=47.141161, tile=8/135/89.png</div>
</div>
</body></html>
